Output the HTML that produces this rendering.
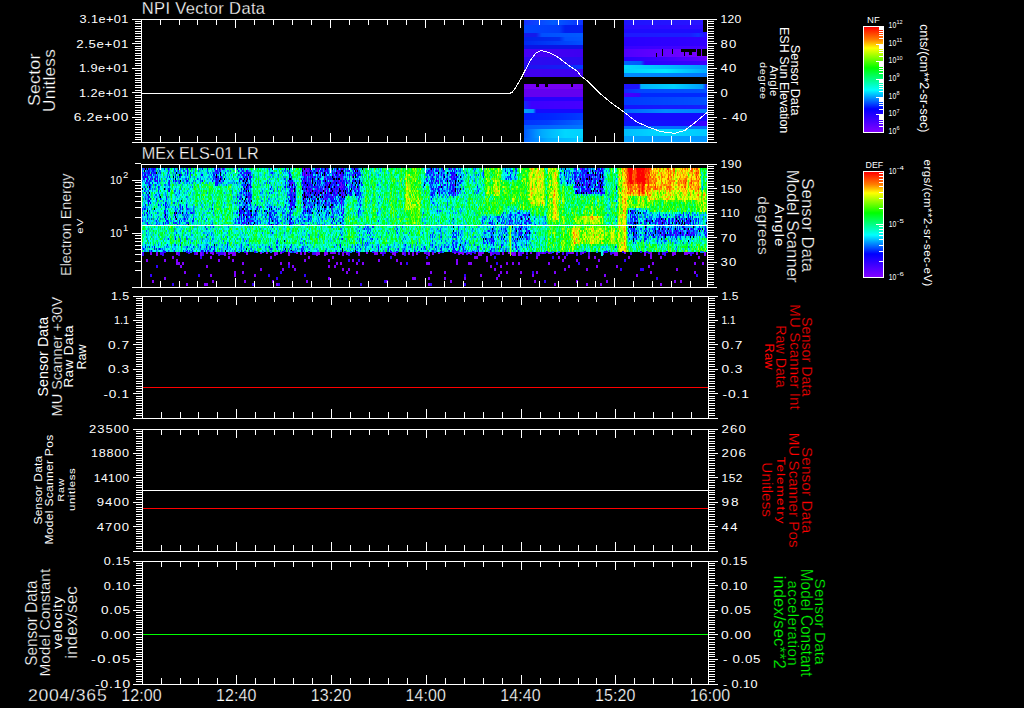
<!DOCTYPE html><html><head><meta charset="utf-8"><title>tplot</title><style>html,body{margin:0;padding:0;background:#000;width:1024px;height:708px;overflow:hidden}</style></head><body><svg width="1024" height="708" viewBox="0 0 1024 708" style="display:block">
<defs><linearGradient id="g26" x1="0" y1="0" x2="0" y2="1"><stop offset="0.000" stop-color="#ff0000"/><stop offset="0.120" stop-color="#ff8000"/><stop offset="0.200" stop-color="#ffff00"/><stop offset="0.390" stop-color="#00ff00"/><stop offset="0.600" stop-color="#00ffff"/><stop offset="0.780" stop-color="#0000ff"/><stop offset="1.000" stop-color="#8200ff"/></linearGradient><linearGradient id="g171" x1="0" y1="0" x2="0" y2="1"><stop offset="0.000" stop-color="#ff0000"/><stop offset="0.120" stop-color="#ff8000"/><stop offset="0.200" stop-color="#ffff00"/><stop offset="0.390" stop-color="#00ff00"/><stop offset="0.600" stop-color="#00ffff"/><stop offset="0.780" stop-color="#0000ff"/><stop offset="1.000" stop-color="#8200ff"/></linearGradient></defs>
<rect x="0" y="0" width="1024" height="708" fill="#000"/>
<g shape-rendering="crispEdges">
<path fill="#1432ff" d="M524 20h1v5h-1z"/>
<path fill="#1333ff" d="M525 20h1v5h-1z"/>
<path fill="#1335ff" d="M526 20h1v5h-1z"/>
<path fill="#1236ff" d="M527 20h1v5h-1z"/>
<path fill="#1138ff" d="M528 20h1v5h-1z"/>
<path fill="#1139ff" d="M529 20h1v5h-1z"/>
<path fill="#103aff" d="M530 20h1v5h-1z"/>
<path fill="#0f3cff" d="M531 20h1v5h-1z"/>
<path fill="#0e3dff" d="M532 20h1v5h-1z"/>
<path fill="#0e3eff" d="M533 20h1v5h-1z"/>
<path fill="#0d40ff" d="M534 20h1v5h-1z"/>
<path fill="#0c41ff" d="M535 20h1v5h-1z"/>
<path fill="#0c43ff" d="M536 20h1v5h-1z"/>
<path fill="#0b44ff" d="M537 20h1v5h-1z"/>
<path fill="#0a45ff" d="M538 20h1v5h-1z"/>
<path fill="#0a47ff" d="M539 20h1v5h-1z"/>
<path fill="#0948ff" d="M540 20h1v5h-1z"/>
<path fill="#0849ff" d="M541 20h1v5h-1z"/>
<path fill="#084bff" d="M542 20h1v5h-1z"/>
<path fill="#074cff" d="M543 20h1v5h-1z"/>
<path fill="#064eff" d="M544 20h1v5h-1z"/>
<path fill="#064fff" d="M545 20h1v5h-1z"/>
<path fill="#0550ff" d="M546 20h1v5h-1z"/>
<path fill="#0452ff" d="M547 20h1v5h-1z"/>
<path fill="#0353ff" d="M548 20h1v5h-1z"/>
<path fill="#0354ff" d="M549 20h1v5h-1z"/>
<path fill="#0256ff" d="M550 20h1v5h-1z"/>
<path fill="#0157ff" d="M551 20h1v5h-1zM555 20h1v5h-1z"/>
<path fill="#0159ff" d="M552 20h1v5h-1z"/>
<path fill="#005aff" d="M553 20h1v5h-1zM580 33h1v4h-1zM581 33h1v4h-1zM582 33h1v4h-1zM573 120h1v5h-1zM524 125h1v4h-1zM524 129h1v9h-1zM640 61h1v4h-1z"/>
<path fill="#0059ff" d="M554 20h1v5h-1zM576 33h1v4h-1zM577 33h1v4h-1zM578 33h1v4h-1zM579 33h1v4h-1zM572 120h1v5h-1z"/>
<path fill="#0156ff" d="M556 20h1v5h-1z"/>
<path fill="#0154ff" d="M557 20h1v5h-1z"/>
<path fill="#0253ff" d="M558 20h1v5h-1z"/>
<path fill="#0252ff" d="M559 20h1v5h-1z"/>
<path fill="#0250ff" d="M560 20h1v5h-1z"/>
<path fill="#034fff" d="M561 20h1v5h-1z"/>
<path fill="#034eff" d="M562 20h1v5h-1z"/>
<path fill="#034cff" d="M563 20h1v5h-1z"/>
<path fill="#044bff" d="M564 20h1v5h-1z"/>
<path fill="#0449ff" d="M565 20h1v5h-1z"/>
<path fill="#0448ff" d="M566 20h1v5h-1z"/>
<path fill="#0547ff" d="M567 20h1v5h-1z"/>
<path fill="#0545ff" d="M568 20h1v5h-1z"/>
<path fill="#0644ff" d="M569 20h1v5h-1z"/>
<path fill="#0643ff" d="M570 20h1v5h-1z"/>
<path fill="#0641ff" d="M571 20h1v5h-1z"/>
<path fill="#0740ff" d="M572 20h1v5h-1z"/>
<path fill="#073eff" d="M573 20h1v5h-1z"/>
<path fill="#073dff" d="M574 20h1v5h-1z"/>
<path fill="#083cff" d="M575 20h1v5h-1z"/>
<path fill="#083aff" d="M576 20h1v5h-1zM634 89h1v4h-1z"/>
<path fill="#0839ff" d="M577 20h1v5h-1z"/>
<path fill="#0938ff" d="M578 20h1v5h-1zM633 89h1v4h-1z"/>
<path fill="#0936ff" d="M579 20h1v5h-1z"/>
<path fill="#0935ff" d="M580 20h1v5h-1z"/>
<path fill="#0a33ff" d="M581 20h1v5h-1z"/>
<path fill="#0a32ff" d="M582 20h1v5h-1z"/>
<path fill="#0046ff" d="M524 25h1v8h-1zM525 25h1v8h-1zM556 120h1v5h-1zM641 89h1v4h-1zM642 89h1v4h-1zM643 89h1v4h-1zM663 97h1v8h-1zM664 97h1v8h-1zM665 97h1v8h-1zM666 97h1v8h-1zM667 97h1v8h-1z"/>
<path fill="#0045ff" d="M526 25h1v8h-1zM527 25h1v8h-1zM555 120h1v5h-1zM640 89h1v4h-1zM659 97h1v8h-1zM660 97h1v8h-1zM661 97h1v8h-1zM662 97h1v8h-1z"/>
<path fill="#0045fe" d="M528 25h1v8h-1zM529 25h1v8h-1z"/>
<path fill="#0044fe" d="M530 25h1v8h-1zM531 25h1v8h-1zM532 25h1v8h-1z"/>
<path fill="#0043fe" d="M533 25h1v8h-1zM534 25h1v8h-1z"/>
<path fill="#0043fd" d="M535 25h1v8h-1zM536 25h1v8h-1z"/>
<path fill="#0042fd" d="M537 25h1v8h-1zM538 25h1v8h-1zM539 25h1v8h-1z"/>
<path fill="#0041fd" d="M540 25h1v8h-1zM541 25h1v8h-1z"/>
<path fill="#0041fc" d="M542 25h1v8h-1zM543 25h1v8h-1z"/>
<path fill="#0040fc" d="M544 25h1v8h-1zM545 25h1v8h-1zM546 25h1v8h-1z"/>
<path fill="#003ffc" d="M547 25h1v8h-1zM548 25h1v8h-1z"/>
<path fill="#003ffb" d="M549 25h1v8h-1zM550 25h1v8h-1z"/>
<path fill="#003efb" d="M551 25h1v8h-1zM552 25h1v8h-1zM553 25h1v8h-1z"/>
<path fill="#003dfb" d="M554 25h1v8h-1zM555 25h1v8h-1z"/>
<path fill="#003dfa" d="M556 25h1v8h-1zM557 25h1v8h-1z"/>
<path fill="#003cfa" d="M558 25h1v8h-1z"/>
<path fill="#003bfa" d="M559 25h1v8h-1z"/>
<path fill="#0036f8" d="M560 25h1v8h-1z"/>
<path fill="#0031f6" d="M561 25h1v8h-1z"/>
<path fill="#002bf4" d="M562 25h1v8h-1z"/>
<path fill="#0026f3" d="M563 25h1v8h-1z"/>
<path fill="#0021f1" d="M564 25h1v8h-1z"/>
<path fill="#001ef0" d="M565 25h1v8h-1zM566 25h1v8h-1zM567 25h1v8h-1zM568 25h1v8h-1zM569 25h1v8h-1zM570 25h1v8h-1zM571 25h1v8h-1zM572 25h1v8h-1zM573 25h1v8h-1zM574 25h1v8h-1zM575 25h1v8h-1zM576 25h1v8h-1zM577 25h1v8h-1zM578 25h1v8h-1zM579 25h1v8h-1zM580 25h1v8h-1zM581 25h1v8h-1zM582 25h1v8h-1z"/>
<path fill="#1419eb" d="M524 33h1v4h-1zM525 33h1v4h-1zM526 33h1v4h-1zM527 33h1v4h-1zM528 33h1v4h-1zM529 33h1v4h-1zM530 33h1v4h-1zM531 33h1v4h-1zM532 33h1v4h-1zM533 33h1v4h-1zM534 33h1v4h-1zM535 33h1v4h-1z"/>
<path fill="#131dec" d="M536 33h1v4h-1z"/>
<path fill="#0f26f0" d="M537 33h1v4h-1z"/>
<path fill="#0c30f3" d="M538 33h1v4h-1z"/>
<path fill="#0839f7" d="M539 33h1v4h-1z"/>
<path fill="#0543fa" d="M540 33h1v4h-1z"/>
<path fill="#014cfe" d="M541 33h1v4h-1z"/>
<path fill="#0050ff" d="M542 33h1v4h-1zM543 33h1v4h-1zM565 37h1v4h-1zM566 37h1v4h-1zM582 41h1v4h-1zM565 120h1v5h-1zM703 89h1v4h-1zM704 89h1v4h-1zM705 89h1v4h-1zM706 89h1v4h-1zM704 97h1v8h-1zM705 97h1v8h-1zM706 97h1v8h-1z"/>
<path fill="#0051ff" d="M544 33h1v4h-1zM545 33h1v4h-1zM546 33h1v4h-1zM547 33h1v4h-1zM567 37h1v4h-1zM568 37h1v4h-1zM569 37h1v4h-1z"/>
<path fill="#0052ff" d="M548 33h1v4h-1zM549 33h1v4h-1zM550 33h1v4h-1zM551 33h1v4h-1zM570 37h1v4h-1zM571 37h1v4h-1zM572 37h1v4h-1zM573 37h1v4h-1zM566 120h1v5h-1z"/>
<path fill="#0053ff" d="M552 33h1v4h-1zM553 33h1v4h-1zM554 33h1v4h-1zM555 33h1v4h-1zM574 37h1v4h-1zM575 37h1v4h-1zM576 37h1v4h-1zM567 120h1v5h-1z"/>
<path fill="#0054ff" d="M556 33h1v4h-1zM557 33h1v4h-1zM558 33h1v4h-1zM559 33h1v4h-1zM577 37h1v4h-1zM578 37h1v4h-1zM579 37h1v4h-1zM580 37h1v4h-1zM568 120h1v5h-1z"/>
<path fill="#0055ff" d="M560 33h1v4h-1zM561 33h1v4h-1zM562 33h1v4h-1zM563 33h1v4h-1zM581 37h1v4h-1zM582 37h1v4h-1zM569 120h1v5h-1z"/>
<path fill="#0056ff" d="M564 33h1v4h-1zM565 33h1v4h-1zM566 33h1v4h-1zM567 33h1v4h-1zM570 120h1v5h-1z"/>
<path fill="#0057ff" d="M568 33h1v4h-1zM569 33h1v4h-1zM570 33h1v4h-1zM571 33h1v4h-1zM571 120h1v5h-1z"/>
<path fill="#0058ff" d="M572 33h1v4h-1zM573 33h1v4h-1zM574 33h1v4h-1zM575 33h1v4h-1z"/>
<path fill="#0023eb" d="M524 37h1v4h-1zM525 37h1v4h-1z"/>
<path fill="#0024eb" d="M526 37h1v4h-1zM527 37h1v4h-1z"/>
<path fill="#0024ec" d="M528 37h1v4h-1zM529 37h1v4h-1z"/>
<path fill="#0025ec" d="M530 37h1v4h-1zM531 37h1v4h-1zM532 37h1v4h-1z"/>
<path fill="#0026ec" d="M533 37h1v4h-1zM534 37h1v4h-1z"/>
<path fill="#0026ed" d="M535 37h1v4h-1zM536 37h1v4h-1z"/>
<path fill="#0027ed" d="M537 37h1v4h-1zM538 37h1v4h-1zM539 37h1v4h-1z"/>
<path fill="#0028ed" d="M540 37h1v4h-1zM541 37h1v4h-1z"/>
<path fill="#0028ee" d="M542 37h1v4h-1zM543 37h1v4h-1z"/>
<path fill="#0029ee" d="M544 37h1v4h-1zM545 37h1v4h-1zM546 37h1v4h-1z"/>
<path fill="#002aee" d="M547 37h1v4h-1zM548 37h1v4h-1z"/>
<path fill="#002aef" d="M549 37h1v4h-1zM550 37h1v4h-1z"/>
<path fill="#002bef" d="M551 37h1v4h-1zM552 37h1v4h-1zM553 37h1v4h-1z"/>
<path fill="#002cef" d="M554 37h1v4h-1zM555 37h1v4h-1z"/>
<path fill="#002cf0" d="M556 37h1v4h-1zM557 37h1v4h-1z"/>
<path fill="#002df0" d="M558 37h1v4h-1z"/>
<path fill="#002ef1" d="M559 37h1v4h-1z"/>
<path fill="#0034f3" d="M560 37h1v4h-1z"/>
<path fill="#003af6" d="M561 37h1v4h-1z"/>
<path fill="#0040f8" d="M562 37h1v4h-1z"/>
<path fill="#0046fb" d="M563 37h1v4h-1zM567 41h1v4h-1zM568 41h1v4h-1z"/>
<path fill="#004cfd" d="M564 37h1v4h-1zM576 41h1v4h-1z"/>
<path fill="#0028f0" d="M524 41h1v4h-1z"/>
<path fill="#0029f0" d="M525 41h1v4h-1z"/>
<path fill="#0029f1" d="M526 41h1v4h-1z"/>
<path fill="#002af1" d="M527 41h1v4h-1z"/>
<path fill="#002bf1" d="M528 41h1v4h-1zM529 41h1v4h-1z"/>
<path fill="#002cf2" d="M530 41h1v4h-1z"/>
<path fill="#002df2" d="M531 41h1v4h-1z"/>
<path fill="#002ef2" d="M532 41h1v4h-1zM533 41h1v4h-1z"/>
<path fill="#002ff3" d="M534 41h1v4h-1z"/>
<path fill="#0030f3" d="M535 41h1v4h-1zM536 41h1v4h-1z"/>
<path fill="#0031f3" d="M537 41h1v4h-1z"/>
<path fill="#0032f4" d="M538 41h1v4h-1zM539 41h1v4h-1z"/>
<path fill="#0033f4" d="M540 41h1v4h-1z"/>
<path fill="#0034f4" d="M541 41h1v4h-1z"/>
<path fill="#0034f5" d="M542 41h1v4h-1z"/>
<path fill="#0035f5" d="M543 41h1v4h-1z"/>
<path fill="#0036f5" d="M544 41h1v4h-1zM545 41h1v4h-1z"/>
<path fill="#0037f6" d="M546 41h1v4h-1z"/>
<path fill="#0038f6" d="M547 41h1v4h-1z"/>
<path fill="#0039f6" d="M548 41h1v4h-1zM549 41h1v4h-1z"/>
<path fill="#003af7" d="M550 41h1v4h-1z"/>
<path fill="#003bf7" d="M551 41h1v4h-1zM552 41h1v4h-1z"/>
<path fill="#003cf8" d="M553 41h1v4h-1z"/>
<path fill="#003df8" d="M554 41h1v4h-1zM555 41h1v4h-1z"/>
<path fill="#003ef8" d="M556 41h1v4h-1z"/>
<path fill="#003ff9" d="M557 41h1v4h-1zM558 41h1v4h-1z"/>
<path fill="#0040f9" d="M559 41h1v4h-1z"/>
<path fill="#0041f9" d="M560 41h1v4h-1z"/>
<path fill="#0042fa" d="M561 41h1v4h-1zM562 41h1v4h-1z"/>
<path fill="#0043fa" d="M563 41h1v4h-1z"/>
<path fill="#0044fa" d="M564 41h1v4h-1z"/>
<path fill="#0044fb" d="M565 41h1v4h-1z"/>
<path fill="#0045fb" d="M566 41h1v4h-1z"/>
<path fill="#0047fc" d="M569 41h1v4h-1z"/>
<path fill="#0048fc" d="M570 41h1v4h-1zM571 41h1v4h-1z"/>
<path fill="#0049fc" d="M572 41h1v4h-1z"/>
<path fill="#004afd" d="M573 41h1v4h-1zM574 41h1v4h-1z"/>
<path fill="#004bfd" d="M575 41h1v4h-1z"/>
<path fill="#004dfe" d="M577 41h1v4h-1zM578 41h1v4h-1z"/>
<path fill="#004efe" d="M579 41h1v4h-1z"/>
<path fill="#004ffe" d="M580 41h1v4h-1z"/>
<path fill="#004fff" d="M581 41h1v4h-1zM564 120h1v5h-1zM697 89h1v4h-1zM698 89h1v4h-1zM699 89h1v4h-1zM700 89h1v4h-1zM701 89h1v4h-1zM702 89h1v4h-1zM700 97h1v8h-1zM701 97h1v8h-1zM702 97h1v8h-1zM703 97h1v8h-1z"/>
<path fill="#0a14e6" d="M524 45h1v4h-1zM525 45h1v4h-1zM526 45h1v4h-1zM527 45h1v4h-1zM528 45h1v4h-1zM529 45h1v4h-1zM530 45h1v4h-1zM531 45h1v4h-1zM532 45h1v4h-1zM533 45h1v4h-1zM534 45h1v4h-1zM535 45h1v4h-1zM536 45h1v4h-1zM537 45h1v4h-1zM538 45h1v4h-1zM539 45h1v4h-1zM540 45h1v4h-1zM541 45h1v4h-1zM542 45h1v4h-1zM543 45h1v4h-1zM544 45h1v4h-1zM545 45h1v4h-1zM546 45h1v4h-1zM547 45h1v4h-1zM548 45h1v4h-1zM549 45h1v4h-1zM550 45h1v4h-1zM551 45h1v4h-1zM552 45h1v4h-1zM553 45h1v4h-1zM554 45h1v4h-1zM555 45h1v4h-1zM556 45h1v4h-1zM557 45h1v4h-1zM558 45h1v4h-1zM559 45h1v4h-1zM560 45h1v4h-1zM561 45h1v4h-1zM562 45h1v4h-1zM563 45h1v4h-1zM564 45h1v4h-1zM565 45h1v4h-1zM566 45h1v4h-1zM567 45h1v4h-1zM568 45h1v4h-1zM569 45h1v4h-1zM570 45h1v4h-1zM571 45h1v4h-1zM572 45h1v4h-1zM573 45h1v4h-1zM574 45h1v4h-1zM575 45h1v4h-1zM576 45h1v4h-1zM577 45h1v4h-1zM578 45h1v4h-1zM579 45h1v4h-1zM580 45h1v4h-1zM581 45h1v4h-1zM582 45h1v4h-1z"/>
<path fill="#4600f5" d="M524 49h1v8h-1zM525 49h1v8h-1zM526 49h1v8h-1z"/>
<path fill="#4500f5" d="M527 49h1v8h-1zM528 49h1v8h-1zM529 49h1v8h-1z"/>
<path fill="#4500f4" d="M530 49h1v8h-1zM531 49h1v8h-1zM532 49h1v8h-1z"/>
<path fill="#4400f4" d="M533 49h1v8h-1zM534 49h1v8h-1zM535 49h1v8h-1zM536 49h1v8h-1zM537 49h1v8h-1zM538 49h1v8h-1z"/>
<path fill="#4300f4" d="M539 49h1v8h-1zM540 49h1v8h-1zM541 49h1v8h-1z"/>
<path fill="#4300f3" d="M542 49h1v8h-1zM543 49h1v8h-1zM544 49h1v8h-1z"/>
<path fill="#4200f3" d="M545 49h1v8h-1zM546 49h1v8h-1zM547 49h1v8h-1zM548 49h1v8h-1zM549 49h1v8h-1zM550 49h1v8h-1z"/>
<path fill="#4100f3" d="M551 49h1v8h-1zM552 49h1v8h-1z"/>
<path fill="#4100f2" d="M553 49h1v8h-1zM554 49h1v8h-1zM555 49h1v8h-1z"/>
<path fill="#4000f2" d="M556 49h1v8h-1zM557 49h1v8h-1zM558 49h1v8h-1zM559 49h1v8h-1zM560 49h1v8h-1zM561 49h1v8h-1z"/>
<path fill="#3f00f2" d="M562 49h1v8h-1zM563 49h1v8h-1zM564 49h1v8h-1z"/>
<path fill="#3f00f1" d="M565 49h1v8h-1zM566 49h1v8h-1zM567 49h1v8h-1z"/>
<path fill="#3e00f1" d="M568 49h1v8h-1zM569 49h1v8h-1zM570 49h1v8h-1zM571 49h1v8h-1zM572 49h1v8h-1zM573 49h1v8h-1z"/>
<path fill="#3d00f1" d="M574 49h1v8h-1zM575 49h1v8h-1zM576 49h1v8h-1z"/>
<path fill="#3d00f0" d="M577 49h1v8h-1zM578 49h1v8h-1zM579 49h1v8h-1zM565 69h1v8h-1zM566 69h1v8h-1zM567 69h1v8h-1zM568 69h1v8h-1zM569 69h1v8h-1zM570 69h1v8h-1zM571 69h1v8h-1zM572 69h1v8h-1zM573 69h1v8h-1zM574 69h1v8h-1zM575 69h1v8h-1zM576 69h1v8h-1z"/>
<path fill="#3c00f0" d="M580 49h1v8h-1zM581 49h1v8h-1zM582 49h1v8h-1zM577 69h1v8h-1zM578 69h1v8h-1zM579 69h1v8h-1zM580 69h1v8h-1zM581 69h1v8h-1zM582 69h1v8h-1z"/>
<path fill="#2d0af0" d="M524 57h1v8h-1zM525 57h1v8h-1zM526 57h1v8h-1zM527 57h1v8h-1zM528 57h1v8h-1zM529 57h1v8h-1z"/>
<path fill="#2c0af0" d="M530 57h1v8h-1zM531 57h1v8h-1zM532 57h1v8h-1zM533 57h1v8h-1zM534 57h1v8h-1zM535 57h1v8h-1zM536 57h1v8h-1zM537 57h1v8h-1zM538 57h1v8h-1zM539 57h1v8h-1zM540 57h1v8h-1zM541 57h1v8h-1z"/>
<path fill="#2b0af0" d="M542 57h1v8h-1zM543 57h1v8h-1zM544 57h1v8h-1zM545 57h1v8h-1zM546 57h1v8h-1zM547 57h1v8h-1zM548 57h1v8h-1zM549 57h1v8h-1zM550 57h1v8h-1zM551 57h1v8h-1zM552 57h1v8h-1z"/>
<path fill="#2a0af0" d="M553 57h1v8h-1zM554 57h1v8h-1zM555 57h1v8h-1zM556 57h1v8h-1zM557 57h1v8h-1zM558 57h1v8h-1zM559 57h1v8h-1zM560 57h1v8h-1zM561 57h1v8h-1zM562 57h1v8h-1zM563 57h1v8h-1zM564 57h1v8h-1z"/>
<path fill="#290af0" d="M565 57h1v8h-1zM566 57h1v8h-1zM567 57h1v8h-1zM568 57h1v8h-1zM569 57h1v8h-1zM570 57h1v8h-1zM571 57h1v8h-1zM572 57h1v8h-1zM573 57h1v8h-1zM574 57h1v8h-1zM575 57h1v8h-1zM576 57h1v8h-1z"/>
<path fill="#280af0" d="M577 57h1v8h-1zM578 57h1v8h-1zM579 57h1v8h-1zM580 57h1v8h-1zM581 57h1v8h-1zM582 57h1v8h-1z"/>
<path fill="#1e14f0" d="M524 65h1v4h-1zM525 65h1v4h-1zM526 65h1v4h-1z"/>
<path fill="#1d15f0" d="M527 65h1v4h-1zM528 65h1v4h-1z"/>
<path fill="#1d15f1" d="M529 65h1v4h-1zM530 65h1v4h-1z"/>
<path fill="#1c16f1" d="M531 65h1v4h-1zM532 65h1v4h-1zM533 65h1v4h-1zM534 65h1v4h-1z"/>
<path fill="#1b17f1" d="M535 65h1v4h-1zM536 65h1v4h-1z"/>
<path fill="#1b17f2" d="M537 65h1v4h-1zM538 65h1v4h-1z"/>
<path fill="#1a18f2" d="M539 65h1v4h-1zM540 65h1v4h-1zM541 65h1v4h-1zM542 65h1v4h-1z"/>
<path fill="#1919f2" d="M543 65h1v4h-1zM544 65h1v4h-1z"/>
<path fill="#1919f3" d="M545 65h1v4h-1zM546 65h1v4h-1z"/>
<path fill="#181af3" d="M547 65h1v4h-1zM548 65h1v4h-1zM549 65h1v4h-1zM550 65h1v4h-1z"/>
<path fill="#171bf3" d="M551 65h1v4h-1zM552 65h1v4h-1z"/>
<path fill="#171bf4" d="M553 65h1v4h-1zM554 65h1v4h-1z"/>
<path fill="#161cf4" d="M555 65h1v4h-1zM556 65h1v4h-1zM557 65h1v4h-1zM558 65h1v4h-1z"/>
<path fill="#151df4" d="M559 65h1v4h-1zM560 65h1v4h-1z"/>
<path fill="#151df5" d="M561 65h1v4h-1zM562 65h1v4h-1z"/>
<path fill="#141ef5" d="M563 65h1v4h-1zM564 65h1v4h-1z"/>
<path fill="#141ff5" d="M565 65h1v4h-1z"/>
<path fill="#1220f6" d="M566 65h1v4h-1z"/>
<path fill="#1122f6" d="M567 65h1v4h-1z"/>
<path fill="#1024f7" d="M568 65h1v4h-1z"/>
<path fill="#0f26f8" d="M569 65h1v4h-1z"/>
<path fill="#0e27f8" d="M570 65h1v4h-1z"/>
<path fill="#0d29f9" d="M571 65h1v4h-1z"/>
<path fill="#0b2bf9" d="M572 65h1v4h-1z"/>
<path fill="#0a2cfa" d="M573 65h1v4h-1z"/>
<path fill="#092efa" d="M574 65h1v4h-1z"/>
<path fill="#0830fb" d="M575 65h1v4h-1z"/>
<path fill="#0732fc" d="M576 65h1v4h-1z"/>
<path fill="#0633fc" d="M577 65h1v4h-1z"/>
<path fill="#0535fd" d="M578 65h1v4h-1z"/>
<path fill="#0337fd" d="M579 65h1v4h-1z"/>
<path fill="#0239fe" d="M580 65h1v4h-1z"/>
<path fill="#013afe" d="M581 65h1v4h-1z"/>
<path fill="#003cff" d="M582 65h1v4h-1zM582 113h1v7h-1zM547 120h1v5h-1zM624 97h1v8h-1zM625 97h1v8h-1zM626 97h1v8h-1z"/>
<path fill="#4100f0" d="M524 69h1v8h-1zM525 69h1v8h-1zM526 69h1v8h-1zM527 69h1v8h-1zM528 69h1v8h-1zM529 69h1v8h-1z"/>
<path fill="#4000f0" d="M530 69h1v8h-1zM531 69h1v8h-1zM532 69h1v8h-1zM533 69h1v8h-1zM534 69h1v8h-1zM535 69h1v8h-1zM536 69h1v8h-1zM537 69h1v8h-1zM538 69h1v8h-1zM539 69h1v8h-1zM540 69h1v8h-1zM541 69h1v8h-1z"/>
<path fill="#3f00f0" d="M542 69h1v8h-1zM543 69h1v8h-1zM544 69h1v8h-1zM545 69h1v8h-1zM546 69h1v8h-1zM547 69h1v8h-1zM548 69h1v8h-1zM549 69h1v8h-1zM550 69h1v8h-1zM551 69h1v8h-1zM552 69h1v8h-1z"/>
<path fill="#3e00f0" d="M553 69h1v8h-1zM554 69h1v8h-1zM555 69h1v8h-1zM556 69h1v8h-1zM557 69h1v8h-1zM558 69h1v8h-1zM559 69h1v8h-1zM560 69h1v8h-1zM561 69h1v8h-1zM562 69h1v8h-1zM563 69h1v8h-1zM564 69h1v8h-1z"/>
<path fill="#7600f5" d="M524 84h1v5h-1zM525 84h1v5h-1zM526 84h1v5h-1zM527 84h1v5h-1zM528 84h1v5h-1zM529 84h1v5h-1zM530 84h1v5h-1zM531 84h1v5h-1zM532 84h1v5h-1zM533 84h1v5h-1zM534 84h1v5h-1zM535 84h1v5h-1zM536 84h1v5h-1zM537 84h1v5h-1zM538 84h1v5h-1zM539 84h1v5h-1zM540 84h1v5h-1zM541 84h1v5h-1zM542 84h1v5h-1zM543 84h1v5h-1zM544 84h1v5h-1zM545 84h1v5h-1zM546 84h1v5h-1zM547 84h1v5h-1zM548 84h1v5h-1zM549 84h1v5h-1zM550 84h1v5h-1zM551 84h1v5h-1zM552 84h1v5h-1zM553 84h1v5h-1zM554 84h1v5h-1zM555 84h1v5h-1zM556 84h1v5h-1zM557 84h1v5h-1zM558 84h1v5h-1zM559 84h1v5h-1zM560 84h1v5h-1zM561 84h1v5h-1zM562 84h1v5h-1zM563 84h1v5h-1zM564 84h1v5h-1zM565 84h1v5h-1zM566 84h1v5h-1zM567 84h1v5h-1zM568 84h1v5h-1zM569 84h1v5h-1zM570 84h1v5h-1zM571 84h1v5h-1zM572 84h1v5h-1zM573 84h1v5h-1zM574 84h1v5h-1zM575 84h1v5h-1zM576 84h1v5h-1zM577 84h1v5h-1zM578 84h1v5h-1zM579 84h1v5h-1zM580 84h1v5h-1zM581 84h1v5h-1zM582 84h1v5h-1z"/>
<path fill="#6400f0" d="M524 89h1v8h-1zM525 89h1v8h-1zM526 89h1v8h-1zM527 89h1v8h-1zM528 89h1v8h-1zM529 89h1v8h-1zM530 89h1v8h-1zM531 89h1v8h-1zM532 89h1v8h-1zM533 89h1v8h-1zM534 89h1v8h-1zM535 89h1v8h-1zM536 89h1v8h-1zM537 89h1v8h-1zM538 89h1v8h-1zM539 89h1v8h-1zM540 89h1v8h-1zM541 89h1v8h-1zM542 89h1v8h-1zM543 89h1v8h-1zM544 89h1v8h-1zM545 89h1v8h-1zM546 89h1v8h-1zM547 89h1v8h-1zM548 89h1v8h-1zM549 89h1v8h-1zM550 89h1v8h-1zM551 89h1v8h-1zM552 89h1v8h-1zM553 89h1v8h-1zM554 89h1v8h-1zM555 89h1v8h-1zM556 89h1v8h-1zM557 89h1v8h-1zM558 89h1v8h-1zM559 89h1v8h-1zM560 89h1v8h-1zM561 89h1v8h-1zM562 89h1v8h-1zM563 89h1v8h-1zM564 89h1v8h-1zM565 89h1v8h-1zM566 89h1v8h-1zM567 89h1v8h-1zM568 89h1v8h-1zM569 89h1v8h-1zM570 89h1v8h-1zM571 89h1v8h-1zM572 89h1v8h-1zM573 89h1v8h-1zM574 89h1v8h-1zM575 89h1v8h-1zM576 89h1v8h-1zM577 89h1v8h-1zM578 89h1v8h-1zM579 89h1v8h-1zM580 89h1v8h-1zM581 89h1v8h-1zM582 89h1v8h-1z"/>
<path fill="#2800ff" d="M524 97h1v4h-1zM525 97h1v4h-1zM526 97h1v4h-1zM527 97h1v4h-1zM528 97h1v4h-1zM529 97h1v4h-1zM530 97h1v4h-1zM531 97h1v4h-1zM532 97h1v4h-1zM533 97h1v4h-1zM534 97h1v4h-1zM535 97h1v4h-1zM536 97h1v4h-1zM537 97h1v4h-1zM538 97h1v4h-1zM539 97h1v4h-1zM540 97h1v4h-1zM541 97h1v4h-1zM542 97h1v4h-1zM543 97h1v4h-1zM544 97h1v4h-1zM545 97h1v4h-1zM546 97h1v4h-1zM547 97h1v4h-1zM548 97h1v4h-1zM549 97h1v4h-1zM550 97h1v4h-1zM551 97h1v4h-1zM552 97h1v4h-1zM553 97h1v4h-1zM554 97h1v4h-1zM555 97h1v4h-1zM556 97h1v4h-1zM557 97h1v4h-1zM558 97h1v4h-1zM559 97h1v4h-1zM560 97h1v4h-1zM561 97h1v4h-1zM562 97h1v4h-1zM563 97h1v4h-1zM564 97h1v4h-1zM565 97h1v4h-1zM566 97h1v4h-1zM567 97h1v4h-1zM568 97h1v4h-1zM569 97h1v4h-1zM570 97h1v4h-1zM571 97h1v4h-1zM572 97h1v4h-1zM573 97h1v4h-1zM574 97h1v4h-1zM575 97h1v4h-1zM576 97h1v4h-1zM577 97h1v4h-1zM578 97h1v4h-1zM579 97h1v4h-1zM580 97h1v4h-1zM581 97h1v4h-1zM582 97h1v4h-1zM624 37h1v9h-1zM625 37h1v9h-1zM626 37h1v9h-1zM627 37h1v9h-1zM628 37h1v9h-1zM624 57h1v4h-1zM625 57h1v4h-1zM645 61h1v4h-1zM646 61h1v4h-1z"/>
<path fill="#1428ff" d="M524 101h1v8h-1zM706 84h1v5h-1zM624 89h1v4h-1z"/>
<path fill="#1a22ff" d="M525 101h1v8h-1z"/>
<path fill="#1f1dff" d="M526 101h1v8h-1z"/>
<path fill="#2517ff" d="M527 101h1v8h-1z"/>
<path fill="#2b11ff" d="M528 101h1v8h-1z"/>
<path fill="#310bff" d="M529 101h1v8h-1z"/>
<path fill="#3606ff" d="M530 101h1v8h-1z"/>
<path fill="#3c00ff" d="M531 101h1v8h-1zM532 101h1v8h-1zM533 101h1v8h-1zM649 46h1v3h-1zM650 46h1v3h-1zM651 46h1v3h-1zM652 46h1v3h-1zM653 46h1v3h-1zM654 46h1v3h-1zM664 57h1v4h-1zM665 57h1v4h-1zM705 61h1v4h-1zM706 61h1v4h-1zM706 121h1v5h-1z"/>
<path fill="#3d00ff" d="M534 101h1v8h-1zM535 101h1v8h-1zM536 101h1v8h-1zM537 101h1v8h-1zM538 101h1v8h-1zM655 46h1v3h-1zM656 46h1v3h-1zM657 46h1v3h-1zM658 46h1v3h-1zM659 46h1v3h-1zM666 57h1v4h-1zM637 93h1v4h-1zM638 93h1v4h-1z"/>
<path fill="#3e00ff" d="M539 101h1v8h-1zM540 101h1v8h-1zM541 101h1v8h-1zM542 101h1v8h-1zM543 101h1v8h-1zM660 46h1v3h-1zM661 46h1v3h-1zM662 46h1v3h-1zM663 46h1v3h-1zM664 46h1v3h-1zM665 46h1v3h-1zM667 57h1v4h-1zM636 93h1v4h-1z"/>
<path fill="#3f00ff" d="M544 101h1v8h-1zM545 101h1v8h-1zM546 101h1v8h-1zM547 101h1v8h-1zM548 101h1v8h-1zM666 46h1v3h-1zM667 46h1v3h-1zM668 46h1v3h-1zM669 46h1v3h-1zM670 46h1v3h-1zM668 57h1v4h-1zM634 93h1v4h-1zM635 93h1v4h-1z"/>
<path fill="#4000ff" d="M549 101h1v8h-1zM550 101h1v8h-1zM551 101h1v8h-1zM552 101h1v8h-1zM553 101h1v8h-1zM671 46h1v3h-1zM672 46h1v3h-1zM673 46h1v3h-1zM674 46h1v3h-1zM675 46h1v3h-1zM669 57h1v4h-1zM633 93h1v4h-1z"/>
<path fill="#4100ff" d="M554 101h1v8h-1zM555 101h1v8h-1zM556 101h1v8h-1zM557 101h1v8h-1zM558 101h1v8h-1zM559 101h1v8h-1zM676 46h1v3h-1zM677 46h1v3h-1zM678 46h1v3h-1zM679 46h1v3h-1zM680 46h1v3h-1zM681 46h1v3h-1zM670 57h1v4h-1zM631 93h1v4h-1zM632 93h1v4h-1z"/>
<path fill="#4200ff" d="M560 101h1v8h-1zM561 101h1v8h-1zM562 101h1v8h-1zM563 101h1v8h-1zM564 101h1v8h-1zM682 46h1v3h-1zM683 46h1v3h-1zM684 46h1v3h-1zM685 46h1v3h-1zM686 46h1v3h-1zM671 57h1v4h-1zM630 93h1v4h-1z"/>
<path fill="#4300ff" d="M565 101h1v8h-1zM566 101h1v8h-1zM567 101h1v8h-1zM568 101h1v8h-1zM569 101h1v8h-1zM687 46h1v3h-1zM688 46h1v3h-1zM689 46h1v3h-1zM690 46h1v3h-1zM691 46h1v3h-1zM692 46h1v3h-1zM672 57h1v4h-1zM628 93h1v4h-1zM629 93h1v4h-1z"/>
<path fill="#4400ff" d="M570 101h1v8h-1zM571 101h1v8h-1zM572 101h1v8h-1zM573 101h1v8h-1zM574 101h1v8h-1zM693 46h1v3h-1zM694 46h1v3h-1zM695 46h1v3h-1zM696 46h1v3h-1zM697 46h1v3h-1zM673 57h1v4h-1zM627 93h1v4h-1z"/>
<path fill="#4500ff" d="M575 101h1v8h-1zM576 101h1v8h-1zM577 101h1v8h-1zM578 101h1v8h-1zM579 101h1v8h-1zM698 46h1v3h-1zM699 46h1v3h-1zM700 46h1v3h-1zM701 46h1v3h-1zM702 46h1v3h-1zM703 46h1v3h-1zM674 57h1v4h-1zM625 93h1v4h-1zM626 93h1v4h-1z"/>
<path fill="#4600ff" d="M580 101h1v8h-1zM581 101h1v8h-1zM582 101h1v8h-1zM704 46h1v3h-1zM705 46h1v3h-1zM706 46h1v3h-1zM675 57h1v4h-1zM624 93h1v4h-1z"/>
<path fill="#00a0ff" d="M524 109h1v4h-1zM544 138h1v4h-1zM696 65h1v4h-1zM624 136h1v6h-1zM625 136h1v6h-1zM626 136h1v6h-1zM627 136h1v6h-1zM628 136h1v6h-1z"/>
<path fill="#009fff" d="M525 109h1v4h-1zM539 129h1v9h-1zM697 65h1v4h-1zM629 136h1v6h-1zM630 136h1v6h-1zM631 136h1v6h-1zM632 136h1v6h-1zM633 136h1v6h-1zM634 136h1v6h-1zM635 136h1v6h-1zM636 136h1v6h-1z"/>
<path fill="#009eff" d="M526 109h1v4h-1zM698 65h1v4h-1zM637 136h1v6h-1zM638 136h1v6h-1zM639 136h1v6h-1zM640 136h1v6h-1zM641 136h1v6h-1zM642 136h1v6h-1zM643 136h1v6h-1zM644 136h1v6h-1z"/>
<path fill="#009dff" d="M527 109h1v4h-1zM543 138h1v4h-1zM699 65h1v4h-1zM702 84h1v5h-1zM645 136h1v6h-1zM646 136h1v6h-1zM647 136h1v6h-1zM648 136h1v6h-1zM649 136h1v6h-1zM650 136h1v6h-1zM651 136h1v6h-1zM652 136h1v6h-1z"/>
<path fill="#009bff" d="M528 109h1v4h-1zM701 65h1v4h-1zM661 136h1v6h-1zM662 136h1v6h-1zM663 136h1v6h-1zM664 136h1v6h-1zM665 136h1v6h-1zM666 136h1v6h-1zM667 136h1v6h-1zM668 136h1v6h-1zM669 136h1v6h-1z"/>
<path fill="#009aff" d="M529 109h1v4h-1zM538 129h1v9h-1zM542 138h1v4h-1zM702 65h1v4h-1zM670 136h1v6h-1zM671 136h1v6h-1zM672 136h1v6h-1zM673 136h1v6h-1zM674 136h1v6h-1zM675 136h1v6h-1zM676 136h1v6h-1zM677 136h1v6h-1z"/>
<path fill="#0099ff" d="M530 109h1v4h-1zM703 65h1v4h-1zM678 136h1v6h-1zM679 136h1v6h-1zM680 136h1v6h-1zM681 136h1v6h-1zM682 136h1v6h-1zM683 136h1v6h-1zM684 136h1v6h-1zM685 136h1v6h-1z"/>
<path fill="#0098ff" d="M531 109h1v4h-1zM704 65h1v4h-1zM686 136h1v6h-1zM687 136h1v6h-1zM688 136h1v6h-1zM689 136h1v6h-1zM690 136h1v6h-1zM691 136h1v6h-1zM692 136h1v6h-1zM693 136h1v6h-1z"/>
<path fill="#0097ff" d="M532 109h1v4h-1zM541 138h1v4h-1zM705 65h1v4h-1zM694 136h1v6h-1zM695 136h1v6h-1zM696 136h1v6h-1zM697 136h1v6h-1zM698 136h1v6h-1zM699 136h1v6h-1zM700 136h1v6h-1zM701 136h1v6h-1z"/>
<path fill="#0288ff" d="M533 109h1v4h-1z"/>
<path fill="#0957ff" d="M534 109h1v4h-1z"/>
<path fill="#1027ff" d="M535 109h1v4h-1z"/>
<path fill="#140aff" d="M536 109h1v4h-1zM537 109h1v4h-1zM538 109h1v4h-1zM539 109h1v4h-1zM540 109h1v4h-1zM541 109h1v4h-1zM542 109h1v4h-1zM543 109h1v4h-1zM544 109h1v4h-1zM545 109h1v4h-1zM546 109h1v4h-1zM547 109h1v4h-1zM548 109h1v4h-1zM549 109h1v4h-1zM550 109h1v4h-1zM551 109h1v4h-1zM552 109h1v4h-1zM553 109h1v4h-1zM554 109h1v4h-1zM555 109h1v4h-1zM556 109h1v4h-1zM557 109h1v4h-1zM558 109h1v4h-1zM559 109h1v4h-1zM560 109h1v4h-1zM561 109h1v4h-1zM562 109h1v4h-1zM563 109h1v4h-1zM564 109h1v4h-1zM565 109h1v4h-1zM566 109h1v4h-1zM567 109h1v4h-1zM568 109h1v4h-1zM569 109h1v4h-1zM570 109h1v4h-1zM571 109h1v4h-1zM572 109h1v4h-1zM573 109h1v4h-1zM574 109h1v4h-1zM575 109h1v4h-1zM576 109h1v4h-1zM577 109h1v4h-1zM578 109h1v4h-1zM579 109h1v4h-1zM580 109h1v4h-1zM581 109h1v4h-1zM582 109h1v4h-1zM624 113h1v8h-1zM625 113h1v8h-1zM626 113h1v8h-1zM627 113h1v8h-1zM628 113h1v8h-1zM629 113h1v8h-1zM630 113h1v8h-1zM631 113h1v8h-1zM632 113h1v8h-1zM633 113h1v8h-1zM634 113h1v8h-1zM635 113h1v8h-1zM636 113h1v8h-1zM637 113h1v8h-1zM638 113h1v8h-1zM639 113h1v8h-1zM640 113h1v8h-1zM641 113h1v8h-1zM642 113h1v8h-1zM643 113h1v8h-1zM644 113h1v8h-1zM645 113h1v8h-1zM646 113h1v8h-1zM647 113h1v8h-1zM648 113h1v8h-1zM649 113h1v8h-1zM650 113h1v8h-1zM651 113h1v8h-1zM652 113h1v8h-1zM653 113h1v8h-1zM654 113h1v8h-1zM655 113h1v8h-1zM656 113h1v8h-1zM657 113h1v8h-1zM658 113h1v8h-1zM659 113h1v8h-1zM660 113h1v8h-1zM661 113h1v8h-1zM662 113h1v8h-1zM663 113h1v8h-1zM664 113h1v8h-1zM665 113h1v8h-1zM666 113h1v8h-1zM667 113h1v8h-1zM668 113h1v8h-1zM669 113h1v8h-1zM670 113h1v8h-1zM671 113h1v8h-1zM672 113h1v8h-1zM673 113h1v8h-1zM674 113h1v8h-1zM675 113h1v8h-1zM676 113h1v8h-1zM677 113h1v8h-1zM678 113h1v8h-1zM679 113h1v8h-1zM680 113h1v8h-1zM681 113h1v8h-1zM682 113h1v8h-1zM683 113h1v8h-1zM684 113h1v8h-1zM685 113h1v8h-1zM686 113h1v8h-1zM687 113h1v8h-1zM688 113h1v8h-1zM689 113h1v8h-1zM690 113h1v8h-1zM691 113h1v8h-1zM692 113h1v8h-1zM693 113h1v8h-1zM694 113h1v8h-1zM695 113h1v8h-1zM696 113h1v8h-1zM697 113h1v8h-1zM698 113h1v8h-1zM699 113h1v8h-1zM700 113h1v8h-1zM701 113h1v8h-1zM702 113h1v8h-1zM703 113h1v8h-1zM704 113h1v8h-1zM705 113h1v8h-1zM706 113h1v8h-1zM679 121h1v5h-1zM680 121h1v5h-1zM681 121h1v5h-1z"/>
<path fill="#001eff" d="M524 113h1v7h-1zM525 113h1v7h-1z"/>
<path fill="#001fff" d="M526 113h1v7h-1zM527 113h1v7h-1zM528 113h1v7h-1z"/>
<path fill="#0020ff" d="M529 113h1v7h-1zM530 113h1v7h-1zM531 113h1v7h-1z"/>
<path fill="#0021ff" d="M532 113h1v7h-1zM533 113h1v7h-1zM534 113h1v7h-1z"/>
<path fill="#0022ff" d="M535 113h1v7h-1zM536 113h1v7h-1zM537 113h1v7h-1z"/>
<path fill="#0023ff" d="M538 113h1v7h-1zM539 113h1v7h-1z"/>
<path fill="#0024ff" d="M540 113h1v7h-1zM541 113h1v7h-1zM542 113h1v7h-1z"/>
<path fill="#0025ff" d="M543 113h1v7h-1zM544 113h1v7h-1zM545 113h1v7h-1z"/>
<path fill="#0026ff" d="M546 113h1v7h-1zM547 113h1v7h-1zM548 113h1v7h-1z"/>
<path fill="#0027ff" d="M549 113h1v7h-1zM550 113h1v7h-1zM551 113h1v7h-1z"/>
<path fill="#0028ff" d="M552 113h1v7h-1zM553 113h1v7h-1zM641 93h1v4h-1zM642 93h1v4h-1zM643 93h1v4h-1zM644 93h1v4h-1zM645 93h1v4h-1zM646 93h1v4h-1zM647 93h1v4h-1zM648 93h1v4h-1zM649 93h1v4h-1zM650 93h1v4h-1zM651 93h1v4h-1zM652 93h1v4h-1zM653 93h1v4h-1zM654 93h1v4h-1zM655 93h1v4h-1zM656 93h1v4h-1zM657 93h1v4h-1zM658 93h1v4h-1zM659 93h1v4h-1zM660 93h1v4h-1zM661 93h1v4h-1zM662 93h1v4h-1zM663 93h1v4h-1zM664 93h1v4h-1zM665 93h1v4h-1zM666 93h1v4h-1zM667 93h1v4h-1zM668 93h1v4h-1zM669 93h1v4h-1zM670 93h1v4h-1zM671 93h1v4h-1zM672 93h1v4h-1zM673 93h1v4h-1zM674 93h1v4h-1zM675 93h1v4h-1zM676 93h1v4h-1zM677 93h1v4h-1zM678 93h1v4h-1zM679 93h1v4h-1zM680 93h1v4h-1zM681 93h1v4h-1zM682 93h1v4h-1zM683 93h1v4h-1zM684 93h1v4h-1zM685 93h1v4h-1zM686 93h1v4h-1zM687 93h1v4h-1zM688 93h1v4h-1zM689 93h1v4h-1zM690 93h1v4h-1zM691 93h1v4h-1zM692 93h1v4h-1zM693 93h1v4h-1zM694 93h1v4h-1zM695 93h1v4h-1zM696 93h1v4h-1zM697 93h1v4h-1zM698 93h1v4h-1zM699 93h1v4h-1zM700 93h1v4h-1zM701 93h1v4h-1zM702 93h1v4h-1zM703 93h1v4h-1zM704 93h1v4h-1zM705 93h1v4h-1zM706 93h1v4h-1z"/>
<path fill="#0029ff" d="M554 113h1v7h-1zM555 113h1v7h-1z"/>
<path fill="#002aff" d="M556 113h1v7h-1z"/>
<path fill="#002bff" d="M557 113h1v7h-1zM558 113h1v7h-1z"/>
<path fill="#002cff" d="M559 113h1v7h-1z"/>
<path fill="#002dff" d="M560 113h1v7h-1z"/>
<path fill="#002eff" d="M561 113h1v7h-1zM562 113h1v7h-1z"/>
<path fill="#002fff" d="M563 113h1v7h-1z"/>
<path fill="#0030ff" d="M564 113h1v7h-1zM565 113h1v7h-1z"/>
<path fill="#0031ff" d="M566 113h1v7h-1z"/>
<path fill="#0032ff" d="M567 113h1v7h-1zM568 113h1v7h-1zM524 120h1v5h-1zM525 120h1v5h-1z"/>
<path fill="#0033ff" d="M569 113h1v7h-1zM526 120h1v5h-1zM527 120h1v5h-1z"/>
<path fill="#0034ff" d="M570 113h1v7h-1zM571 113h1v7h-1zM528 120h1v5h-1zM529 120h1v5h-1z"/>
<path fill="#0035ff" d="M572 113h1v7h-1zM530 120h1v5h-1zM531 120h1v5h-1zM532 120h1v5h-1z"/>
<path fill="#0036ff" d="M573 113h1v7h-1zM574 113h1v7h-1zM533 120h1v5h-1zM534 120h1v5h-1z"/>
<path fill="#0037ff" d="M575 113h1v7h-1zM535 120h1v5h-1zM536 120h1v5h-1z"/>
<path fill="#0038ff" d="M576 113h1v7h-1zM537 120h1v5h-1zM538 120h1v5h-1zM539 120h1v5h-1z"/>
<path fill="#0039ff" d="M577 113h1v7h-1zM578 113h1v7h-1zM540 120h1v5h-1zM541 120h1v5h-1z"/>
<path fill="#003aff" d="M579 113h1v7h-1zM542 120h1v5h-1zM543 120h1v5h-1z"/>
<path fill="#003bff" d="M580 113h1v7h-1zM581 113h1v7h-1zM544 120h1v5h-1zM545 120h1v5h-1zM546 120h1v5h-1z"/>
<path fill="#003dff" d="M548 120h1v5h-1zM627 97h1v8h-1zM628 97h1v8h-1zM629 97h1v8h-1zM630 97h1v8h-1z"/>
<path fill="#003eff" d="M549 120h1v5h-1zM631 97h1v8h-1zM632 97h1v8h-1zM633 97h1v8h-1zM634 97h1v8h-1z"/>
<path fill="#003fff" d="M550 120h1v5h-1zM635 97h1v8h-1zM636 97h1v8h-1zM637 97h1v8h-1zM638 97h1v8h-1z"/>
<path fill="#0040ff" d="M551 120h1v5h-1zM639 97h1v8h-1zM640 97h1v8h-1zM641 97h1v8h-1zM642 97h1v8h-1z"/>
<path fill="#0042ff" d="M552 120h1v5h-1zM647 97h1v8h-1zM648 97h1v8h-1zM649 97h1v8h-1zM650 97h1v8h-1z"/>
<path fill="#0043ff" d="M553 120h1v5h-1zM651 97h1v8h-1zM652 97h1v8h-1zM653 97h1v8h-1zM654 97h1v8h-1z"/>
<path fill="#0044ff" d="M554 120h1v5h-1zM655 97h1v8h-1zM656 97h1v8h-1zM657 97h1v8h-1zM658 97h1v8h-1z"/>
<path fill="#0047ff" d="M557 120h1v5h-1zM644 89h1v4h-1zM645 89h1v4h-1zM646 89h1v4h-1zM647 89h1v4h-1zM648 89h1v4h-1zM649 89h1v4h-1zM650 89h1v4h-1zM668 97h1v8h-1zM669 97h1v8h-1zM670 97h1v8h-1zM671 97h1v8h-1z"/>
<path fill="#0048ff" d="M558 120h1v5h-1zM651 89h1v4h-1zM652 89h1v4h-1zM653 89h1v4h-1zM654 89h1v4h-1zM655 89h1v4h-1zM656 89h1v4h-1zM672 97h1v8h-1zM673 97h1v8h-1zM674 97h1v8h-1zM675 97h1v8h-1z"/>
<path fill="#004aff" d="M559 120h1v5h-1zM664 89h1v4h-1zM665 89h1v4h-1zM666 89h1v4h-1zM667 89h1v4h-1zM668 89h1v4h-1zM669 89h1v4h-1zM680 97h1v8h-1zM681 97h1v8h-1zM682 97h1v8h-1zM683 97h1v8h-1z"/>
<path fill="#004bff" d="M560 120h1v5h-1zM670 89h1v4h-1zM671 89h1v4h-1zM672 89h1v4h-1zM673 89h1v4h-1zM674 89h1v4h-1zM675 89h1v4h-1zM676 89h1v4h-1zM684 97h1v8h-1zM685 97h1v8h-1zM686 97h1v8h-1zM687 97h1v8h-1z"/>
<path fill="#004cff" d="M561 120h1v5h-1zM677 89h1v4h-1zM678 89h1v4h-1zM679 89h1v4h-1zM680 89h1v4h-1zM681 89h1v4h-1zM682 89h1v4h-1zM683 89h1v4h-1zM688 97h1v8h-1zM689 97h1v8h-1zM690 97h1v8h-1zM691 97h1v8h-1z"/>
<path fill="#004dff" d="M562 120h1v5h-1zM684 89h1v4h-1zM685 89h1v4h-1zM686 89h1v4h-1zM687 89h1v4h-1zM688 89h1v4h-1zM689 89h1v4h-1zM692 97h1v8h-1zM693 97h1v8h-1zM694 97h1v8h-1zM695 97h1v8h-1z"/>
<path fill="#004eff" d="M563 120h1v5h-1zM690 89h1v4h-1zM691 89h1v4h-1zM692 89h1v4h-1zM693 89h1v4h-1zM694 89h1v4h-1zM695 89h1v4h-1zM696 89h1v4h-1zM696 97h1v8h-1zM697 97h1v8h-1zM698 97h1v8h-1zM699 97h1v8h-1z"/>
<path fill="#005bff" d="M574 120h1v5h-1zM525 125h1v4h-1zM526 125h1v4h-1zM638 61h1v4h-1zM639 61h1v4h-1z"/>
<path fill="#005cff" d="M575 120h1v5h-1zM527 125h1v4h-1zM528 125h1v4h-1zM637 61h1v4h-1z"/>
<path fill="#005dff" d="M576 120h1v5h-1zM529 125h1v4h-1zM530 125h1v4h-1zM635 61h1v4h-1zM636 61h1v4h-1z"/>
<path fill="#005eff" d="M577 120h1v5h-1zM531 125h1v4h-1zM532 125h1v4h-1zM634 61h1v4h-1z"/>
<path fill="#005fff" d="M578 120h1v5h-1zM533 125h1v4h-1zM534 125h1v4h-1zM525 129h1v9h-1zM632 61h1v4h-1zM633 61h1v4h-1z"/>
<path fill="#0061ff" d="M579 120h1v5h-1zM537 125h1v4h-1zM538 125h1v4h-1zM629 61h1v4h-1z"/>
<path fill="#0062ff" d="M580 120h1v5h-1zM539 125h1v4h-1zM540 125h1v4h-1zM627 61h1v4h-1zM628 61h1v4h-1z"/>
<path fill="#0063ff" d="M581 120h1v5h-1zM541 125h1v4h-1zM542 125h1v4h-1zM526 129h1v9h-1zM625 61h1v4h-1zM626 61h1v4h-1z"/>
<path fill="#0064ff" d="M582 120h1v5h-1zM543 125h1v4h-1zM544 125h1v4h-1zM524 138h1v4h-1zM624 61h1v4h-1zM624 109h1v4h-1z"/>
<path fill="#0060ff" d="M535 125h1v4h-1zM536 125h1v4h-1zM630 61h1v4h-1zM631 61h1v4h-1z"/>
<path fill="#0065ff" d="M545 125h1v4h-1zM546 125h1v4h-1zM625 109h1v4h-1z"/>
<path fill="#0066ff" d="M547 125h1v4h-1zM548 125h1v4h-1zM626 109h1v4h-1z"/>
<path fill="#0067ff" d="M549 125h1v4h-1zM550 125h1v4h-1zM525 138h1v4h-1zM627 109h1v4h-1z"/>
<path fill="#0068ff" d="M551 125h1v4h-1zM552 125h1v4h-1zM527 129h1v9h-1zM628 109h1v4h-1z"/>
<path fill="#0069ff" d="M553 125h1v4h-1zM629 109h1v4h-1z"/>
<path fill="#006aff" d="M554 125h1v4h-1zM555 125h1v4h-1zM526 138h1v4h-1zM630 109h1v4h-1z"/>
<path fill="#006bff" d="M556 125h1v4h-1zM557 125h1v4h-1zM631 109h1v4h-1z"/>
<path fill="#006cff" d="M558 125h1v4h-1zM559 125h1v4h-1zM528 129h1v9h-1zM632 109h1v4h-1z"/>
<path fill="#006dff" d="M560 125h1v4h-1zM561 125h1v4h-1zM527 138h1v4h-1zM633 109h1v4h-1z"/>
<path fill="#006eff" d="M562 125h1v4h-1zM563 125h1v4h-1zM634 109h1v4h-1zM624 126h1v3h-1zM625 126h1v3h-1zM626 126h1v3h-1zM627 126h1v3h-1zM628 126h1v3h-1zM629 126h1v3h-1zM630 126h1v3h-1zM631 126h1v3h-1zM632 126h1v3h-1zM633 126h1v3h-1zM634 126h1v3h-1zM635 126h1v3h-1zM636 126h1v3h-1zM637 126h1v3h-1zM638 126h1v3h-1zM639 126h1v3h-1zM640 126h1v3h-1zM641 126h1v3h-1zM642 126h1v3h-1zM643 126h1v3h-1zM644 126h1v3h-1zM645 126h1v3h-1zM646 126h1v3h-1zM647 126h1v3h-1zM648 126h1v3h-1zM649 126h1v3h-1zM650 126h1v3h-1zM651 126h1v3h-1zM652 126h1v3h-1zM653 126h1v3h-1zM654 126h1v3h-1zM655 126h1v3h-1zM656 126h1v3h-1zM657 126h1v3h-1zM658 126h1v3h-1zM659 126h1v3h-1zM660 126h1v3h-1zM661 126h1v3h-1zM662 126h1v3h-1zM663 126h1v3h-1zM664 126h1v3h-1zM665 126h1v3h-1zM666 126h1v3h-1zM667 126h1v3h-1zM668 126h1v3h-1zM669 126h1v3h-1zM670 126h1v3h-1zM671 126h1v3h-1zM672 126h1v3h-1zM673 126h1v3h-1zM674 126h1v3h-1zM675 126h1v3h-1zM676 126h1v3h-1zM677 126h1v3h-1zM678 126h1v3h-1zM679 126h1v3h-1zM680 126h1v3h-1zM681 126h1v3h-1zM682 126h1v3h-1zM683 126h1v3h-1zM684 126h1v3h-1zM685 126h1v3h-1zM686 126h1v3h-1zM687 126h1v3h-1zM688 126h1v3h-1zM689 126h1v3h-1zM690 126h1v3h-1zM691 126h1v3h-1zM692 126h1v3h-1zM693 126h1v3h-1zM694 126h1v3h-1zM695 126h1v3h-1zM696 126h1v3h-1zM697 126h1v3h-1zM698 126h1v3h-1zM699 126h1v3h-1zM700 126h1v3h-1zM701 126h1v3h-1zM702 126h1v3h-1zM703 126h1v3h-1zM704 126h1v3h-1zM705 126h1v3h-1zM706 126h1v3h-1z"/>
<path fill="#006fff" d="M564 125h1v4h-1zM565 125h1v4h-1zM635 109h1v4h-1z"/>
<path fill="#0070ff" d="M566 125h1v4h-1zM567 125h1v4h-1zM528 138h1v4h-1zM636 109h1v4h-1z"/>
<path fill="#0071ff" d="M568 125h1v4h-1zM569 125h1v4h-1zM529 129h1v9h-1zM637 109h1v4h-1z"/>
<path fill="#0072ff" d="M570 125h1v4h-1zM571 125h1v4h-1zM638 109h1v4h-1z"/>
<path fill="#0073ff" d="M572 125h1v4h-1zM573 125h1v4h-1zM529 138h1v4h-1zM639 109h1v4h-1z"/>
<path fill="#0074ff" d="M574 125h1v4h-1zM575 125h1v4h-1zM640 109h1v4h-1z"/>
<path fill="#0075ff" d="M576 125h1v4h-1zM577 125h1v4h-1zM641 109h1v4h-1z"/>
<path fill="#0076ff" d="M578 125h1v4h-1zM579 125h1v4h-1zM530 129h1v9h-1zM530 138h1v4h-1zM642 109h1v4h-1z"/>
<path fill="#0077ff" d="M580 125h1v4h-1zM581 125h1v4h-1zM643 109h1v4h-1z"/>
<path fill="#0078ff" d="M582 125h1v4h-1zM704 73h1v4h-1zM705 73h1v4h-1zM706 73h1v4h-1zM644 109h1v4h-1zM645 109h1v4h-1z"/>
<path fill="#007aff" d="M531 129h1v9h-1zM696 73h1v4h-1zM697 73h1v4h-1zM698 73h1v4h-1zM699 73h1v4h-1zM647 109h1v4h-1z"/>
<path fill="#007fff" d="M532 129h1v9h-1zM533 138h1v4h-1zM676 73h1v4h-1zM677 73h1v4h-1zM678 73h1v4h-1zM679 73h1v4h-1zM652 109h1v4h-1z"/>
<path fill="#0083ff" d="M533 129h1v9h-1zM659 73h1v4h-1zM660 73h1v4h-1zM661 73h1v4h-1zM662 73h1v4h-1zM656 109h1v4h-1zM700 109h1v4h-1zM701 109h1v4h-1zM702 109h1v4h-1zM703 109h1v4h-1z"/>
<path fill="#0088ff" d="M534 129h1v9h-1zM536 138h1v4h-1zM639 73h1v4h-1zM640 73h1v4h-1zM641 73h1v4h-1zM642 73h1v4h-1zM661 109h1v4h-1zM680 109h1v4h-1zM681 109h1v4h-1zM682 109h1v4h-1zM683 109h1v4h-1z"/>
<path fill="#008dff" d="M535 129h1v9h-1z"/>
<path fill="#0091ff" d="M536 129h1v9h-1zM539 138h1v4h-1z"/>
<path fill="#0096ff" d="M537 129h1v9h-1zM706 65h1v4h-1zM702 136h1v6h-1zM703 136h1v6h-1zM704 136h1v6h-1zM705 136h1v6h-1zM706 136h1v6h-1z"/>
<path fill="#00a4ff" d="M540 129h1v9h-1zM692 65h1v4h-1z"/>
<path fill="#00a8ff" d="M541 129h1v9h-1zM688 65h1v4h-1z"/>
<path fill="#00abff" d="M542 129h1v9h-1zM548 138h1v4h-1zM684 65h1v4h-1z"/>
<path fill="#00adff" d="M543 129h1v9h-1zM551 138h1v4h-1zM682 65h1v4h-1zM704 69h1v4h-1z"/>
<path fill="#00afff" d="M544 129h1v9h-1zM553 138h1v4h-1zM680 65h1v4h-1zM703 69h1v4h-1z"/>
<path fill="#00b1ff" d="M545 129h1v9h-1zM555 138h1v4h-1zM678 65h1v4h-1zM692 84h1v5h-1z"/>
<path fill="#00b3ff" d="M546 129h1v9h-1zM558 138h1v4h-1zM676 65h1v4h-1zM691 84h1v5h-1z"/>
<path fill="#00b5ff" d="M547 129h1v9h-1zM560 138h1v4h-1zM674 65h1v4h-1zM699 69h1v4h-1zM641 84h1v5h-1zM642 84h1v5h-1zM690 84h1v5h-1z"/>
<path fill="#00b7ff" d="M548 129h1v9h-1zM562 138h1v4h-1zM672 65h1v4h-1zM698 69h1v4h-1zM644 84h1v5h-1z"/>
<path fill="#00b9ff" d="M549 129h1v9h-1zM565 138h1v4h-1zM670 65h1v4h-1zM646 84h1v5h-1z"/>
<path fill="#00bbff" d="M550 129h1v9h-1zM567 138h1v4h-1zM668 65h1v4h-1zM695 69h1v4h-1zM648 84h1v5h-1z"/>
<path fill="#00bdff" d="M551 129h1v9h-1zM569 138h1v4h-1zM666 65h1v4h-1zM694 69h1v4h-1zM650 84h1v5h-1zM685 84h1v5h-1z"/>
<path fill="#00bfff" d="M552 129h1v9h-1zM571 138h1v4h-1zM572 138h1v4h-1zM663 65h1v4h-1zM664 65h1v4h-1zM693 69h1v4h-1zM652 84h1v5h-1zM684 84h1v5h-1zM625 129h1v7h-1zM626 129h1v7h-1z"/>
<path fill="#00c0ff" d="M553 129h1v9h-1zM573 138h1v4h-1zM662 65h1v4h-1zM692 69h1v4h-1zM653 84h1v5h-1zM654 84h1v5h-1zM627 129h1v7h-1z"/>
<path fill="#00c2ff" d="M554 129h1v9h-1zM575 138h1v4h-1zM659 65h1v4h-1zM660 65h1v4h-1zM691 69h1v4h-1zM656 84h1v5h-1zM629 129h1v7h-1zM630 129h1v7h-1z"/>
<path fill="#00c4ff" d="M555 129h1v9h-1zM577 138h1v4h-1zM657 65h1v4h-1zM658 84h1v5h-1zM681 84h1v5h-1zM632 129h1v7h-1z"/>
<path fill="#00c6ff" d="M556 129h1v9h-1zM580 138h1v4h-1zM654 65h1v4h-1zM660 84h1v5h-1zM680 84h1v5h-1zM635 129h1v7h-1z"/>
<path fill="#00c8ff" d="M557 129h1v9h-1zM582 138h1v4h-1zM651 65h1v4h-1zM652 65h1v4h-1zM687 69h1v4h-1zM662 84h1v5h-1zM679 84h1v5h-1zM637 129h1v7h-1zM638 129h1v7h-1zM705 129h1v7h-1zM706 129h1v7h-1z"/>
<path fill="#00caff" d="M558 129h1v9h-1zM648 65h1v4h-1zM649 65h1v4h-1zM686 69h1v4h-1zM664 84h1v5h-1zM665 84h1v5h-1zM678 84h1v5h-1zM640 129h1v7h-1zM641 129h1v7h-1zM701 129h1v7h-1zM702 129h1v7h-1z"/>
<path fill="#00ccff" d="M559 129h1v9h-1zM646 65h1v4h-1zM667 84h1v5h-1zM643 129h1v7h-1zM697 129h1v7h-1zM698 129h1v7h-1z"/>
<path fill="#00ceff" d="M560 129h1v9h-1zM643 65h1v4h-1zM683 69h1v4h-1zM669 84h1v5h-1zM646 129h1v7h-1zM693 129h1v7h-1zM694 129h1v7h-1z"/>
<path fill="#00d0ff" d="M561 129h1v9h-1zM640 65h1v4h-1zM641 65h1v4h-1zM682 69h1v4h-1zM671 84h1v5h-1zM648 129h1v7h-1zM649 129h1v7h-1zM689 129h1v7h-1zM690 129h1v7h-1z"/>
<path fill="#00d2ff" d="M562 129h1v9h-1zM581 129h1v9h-1zM582 129h1v9h-1zM637 65h1v4h-1zM638 65h1v4h-1zM624 69h1v4h-1zM681 69h1v4h-1zM673 84h1v5h-1zM651 129h1v7h-1zM652 129h1v7h-1zM685 129h1v7h-1zM686 129h1v7h-1z"/>
<path fill="#00d4ff" d="M563 129h1v9h-1zM574 129h1v9h-1zM575 129h1v9h-1zM576 129h1v9h-1zM635 65h1v4h-1zM627 69h1v4h-1zM628 69h1v4h-1zM654 129h1v7h-1zM681 129h1v7h-1zM682 129h1v7h-1z"/>
<path fill="#00d6ff" d="M564 129h1v9h-1zM567 129h1v9h-1zM568 129h1v9h-1zM569 129h1v9h-1zM632 65h1v4h-1zM630 69h1v4h-1zM631 69h1v4h-1zM678 69h1v4h-1zM657 129h1v7h-1zM677 129h1v7h-1zM678 129h1v7h-1z"/>
<path fill="#00d7ff" d="M565 129h1v9h-1zM566 129h1v9h-1zM631 65h1v4h-1zM632 69h1v4h-1zM633 69h1v4h-1zM658 129h1v7h-1zM675 129h1v7h-1zM676 129h1v7h-1z"/>
<path fill="#00d5ff" d="M570 129h1v9h-1zM571 129h1v9h-1zM572 129h1v9h-1zM573 129h1v9h-1zM633 65h1v4h-1zM634 65h1v4h-1zM629 69h1v4h-1zM679 69h1v4h-1zM655 129h1v7h-1zM656 129h1v7h-1zM679 129h1v7h-1zM680 129h1v7h-1z"/>
<path fill="#00d3ff" d="M577 129h1v9h-1zM578 129h1v9h-1zM579 129h1v9h-1zM580 129h1v9h-1zM636 65h1v4h-1zM625 69h1v4h-1zM626 69h1v4h-1zM680 69h1v4h-1zM653 129h1v7h-1zM683 129h1v7h-1zM684 129h1v7h-1z"/>
<path fill="#0079ff" d="M531 138h1v4h-1zM700 73h1v4h-1zM701 73h1v4h-1zM702 73h1v4h-1zM703 73h1v4h-1zM646 109h1v4h-1z"/>
<path fill="#007cff" d="M532 138h1v4h-1zM688 73h1v4h-1zM689 73h1v4h-1zM690 73h1v4h-1zM691 73h1v4h-1zM649 109h1v4h-1z"/>
<path fill="#0082ff" d="M534 138h1v4h-1zM663 73h1v4h-1zM664 73h1v4h-1zM665 73h1v4h-1zM666 73h1v4h-1zM667 73h1v4h-1zM655 109h1v4h-1zM704 109h1v4h-1zM705 109h1v4h-1zM706 109h1v4h-1z"/>
<path fill="#0085ff" d="M535 138h1v4h-1zM651 73h1v4h-1zM652 73h1v4h-1zM653 73h1v4h-1zM654 73h1v4h-1zM658 109h1v4h-1zM692 109h1v4h-1zM693 109h1v4h-1zM694 109h1v4h-1zM695 109h1v4h-1z"/>
<path fill="#008bff" d="M537 138h1v4h-1zM627 73h1v4h-1zM628 73h1v4h-1zM629 73h1v4h-1zM630 73h1v4h-1zM664 109h1v4h-1zM668 109h1v4h-1zM669 109h1v4h-1zM670 109h1v4h-1zM671 109h1v4h-1z"/>
<path fill="#008eff" d="M538 138h1v4h-1z"/>
<path fill="#0094ff" d="M540 138h1v4h-1z"/>
<path fill="#00a3ff" d="M545 138h1v4h-1zM693 65h1v4h-1zM700 84h1v5h-1z"/>
<path fill="#00a6ff" d="M546 138h1v4h-1zM690 65h1v4h-1z"/>
<path fill="#00a9ff" d="M547 138h1v4h-1zM687 65h1v4h-1zM697 84h1v5h-1z"/>
<path fill="#00acff" d="M549 138h1v4h-1zM550 138h1v4h-1zM683 65h1v4h-1zM705 69h1v4h-1zM695 84h1v5h-1z"/>
<path fill="#00aeff" d="M552 138h1v4h-1zM681 65h1v4h-1zM694 84h1v5h-1z"/>
<path fill="#00b0ff" d="M554 138h1v4h-1zM679 65h1v4h-1zM702 69h1v4h-1zM693 84h1v5h-1z"/>
<path fill="#00b2ff" d="M556 138h1v4h-1zM557 138h1v4h-1zM677 65h1v4h-1zM701 69h1v4h-1z"/>
<path fill="#00b4ff" d="M559 138h1v4h-1zM675 65h1v4h-1zM700 69h1v4h-1z"/>
<path fill="#00b6ff" d="M561 138h1v4h-1zM673 65h1v4h-1zM643 84h1v5h-1zM689 84h1v5h-1z"/>
<path fill="#00b8ff" d="M563 138h1v4h-1zM564 138h1v4h-1zM671 65h1v4h-1zM697 69h1v4h-1zM645 84h1v5h-1zM688 84h1v5h-1z"/>
<path fill="#00baff" d="M566 138h1v4h-1zM669 65h1v4h-1zM696 69h1v4h-1zM647 84h1v5h-1zM687 84h1v5h-1z"/>
<path fill="#00bcff" d="M568 138h1v4h-1zM667 65h1v4h-1zM649 84h1v5h-1zM686 84h1v5h-1z"/>
<path fill="#00beff" d="M570 138h1v4h-1zM665 65h1v4h-1zM651 84h1v5h-1zM624 129h1v7h-1z"/>
<path fill="#00c1ff" d="M574 138h1v4h-1zM661 65h1v4h-1zM655 84h1v5h-1zM683 84h1v5h-1zM628 129h1v7h-1z"/>
<path fill="#00c3ff" d="M576 138h1v4h-1zM658 65h1v4h-1zM690 69h1v4h-1zM657 84h1v5h-1zM682 84h1v5h-1zM631 129h1v7h-1z"/>
<path fill="#00c5ff" d="M578 138h1v4h-1zM579 138h1v4h-1zM655 65h1v4h-1zM656 65h1v4h-1zM689 69h1v4h-1zM659 84h1v5h-1zM633 129h1v7h-1zM634 129h1v7h-1z"/>
<path fill="#00c7ff" d="M581 138h1v4h-1zM653 65h1v4h-1zM688 69h1v4h-1zM661 84h1v5h-1zM636 129h1v7h-1z"/>
<path fill="#1e14ff" d="M624 20h1v5h-1zM625 20h1v5h-1zM626 20h1v5h-1zM627 20h1v5h-1zM628 20h1v5h-1zM624 84h1v5h-1zM625 84h1v5h-1zM626 84h1v5h-1zM627 84h1v5h-1zM628 84h1v5h-1zM629 84h1v5h-1zM630 84h1v5h-1zM631 84h1v5h-1zM632 84h1v5h-1zM633 84h1v5h-1zM634 84h1v5h-1zM635 84h1v5h-1zM636 84h1v5h-1zM637 84h1v5h-1zM638 84h1v5h-1z"/>
<path fill="#1f14ff" d="M629 20h1v5h-1zM630 20h1v5h-1zM631 20h1v5h-1zM632 20h1v5h-1zM633 20h1v5h-1zM634 20h1v5h-1zM635 20h1v5h-1zM636 20h1v5h-1z"/>
<path fill="#2014ff" d="M637 20h1v5h-1zM638 20h1v5h-1zM639 20h1v5h-1zM640 20h1v5h-1zM641 20h1v5h-1zM642 20h1v5h-1zM643 20h1v5h-1zM644 20h1v5h-1z"/>
<path fill="#2114ff" d="M645 20h1v5h-1zM646 20h1v5h-1zM647 20h1v5h-1zM648 20h1v5h-1zM649 20h1v5h-1zM650 20h1v5h-1zM651 20h1v5h-1zM652 20h1v5h-1z"/>
<path fill="#2214ff" d="M653 20h1v5h-1zM654 20h1v5h-1zM655 20h1v5h-1zM656 20h1v5h-1zM657 20h1v5h-1zM658 20h1v5h-1zM659 20h1v5h-1zM660 20h1v5h-1zM704 33h1v4h-1z"/>
<path fill="#2314ff" d="M661 20h1v5h-1zM662 20h1v5h-1zM663 20h1v5h-1zM664 20h1v5h-1zM665 20h1v5h-1zM666 20h1v5h-1zM667 20h1v5h-1zM668 20h1v5h-1zM669 20h1v5h-1z"/>
<path fill="#2414ff" d="M670 20h1v5h-1zM671 20h1v5h-1zM672 20h1v5h-1zM673 20h1v5h-1zM674 20h1v5h-1zM675 20h1v5h-1zM676 20h1v5h-1zM677 20h1v5h-1z"/>
<path fill="#2514ff" d="M678 20h1v5h-1zM679 20h1v5h-1zM680 20h1v5h-1zM681 20h1v5h-1zM682 20h1v5h-1zM683 20h1v5h-1zM684 20h1v5h-1zM685 20h1v5h-1z"/>
<path fill="#2614ff" d="M686 20h1v5h-1zM687 20h1v5h-1zM688 20h1v5h-1zM689 20h1v5h-1zM690 20h1v5h-1zM691 20h1v5h-1zM692 20h1v5h-1zM693 20h1v5h-1z"/>
<path fill="#2714ff" d="M694 20h1v5h-1zM695 20h1v5h-1zM696 20h1v5h-1zM697 20h1v5h-1zM698 20h1v5h-1zM699 20h1v5h-1zM700 20h1v5h-1zM701 20h1v5h-1z"/>
<path fill="#2814ff" d="M702 20h1v5h-1zM703 20h1v5h-1zM704 20h1v5h-1zM705 20h1v5h-1zM706 20h1v5h-1z"/>
<path fill="#280aff" d="M624 25h1v4h-1zM625 25h1v4h-1zM626 25h1v4h-1zM627 25h1v4h-1zM628 25h1v4h-1zM629 25h1v4h-1zM630 25h1v4h-1zM631 25h1v4h-1zM632 25h1v4h-1zM706 33h1v4h-1z"/>
<path fill="#290aff" d="M633 25h1v4h-1zM634 25h1v4h-1zM635 25h1v4h-1zM636 25h1v4h-1zM637 25h1v4h-1zM638 25h1v4h-1zM639 25h1v4h-1zM640 25h1v4h-1zM641 25h1v4h-1zM642 25h1v4h-1zM643 25h1v4h-1zM644 25h1v4h-1zM645 25h1v4h-1zM646 25h1v4h-1zM647 25h1v4h-1zM648 25h1v4h-1z"/>
<path fill="#2a0aff" d="M649 25h1v4h-1zM650 25h1v4h-1zM651 25h1v4h-1zM652 25h1v4h-1zM653 25h1v4h-1zM654 25h1v4h-1zM655 25h1v4h-1zM656 25h1v4h-1zM657 25h1v4h-1zM658 25h1v4h-1zM659 25h1v4h-1zM660 25h1v4h-1zM661 25h1v4h-1zM662 25h1v4h-1zM663 25h1v4h-1zM664 25h1v4h-1zM665 25h1v4h-1z"/>
<path fill="#2b0aff" d="M666 25h1v4h-1zM667 25h1v4h-1zM668 25h1v4h-1zM669 25h1v4h-1zM670 25h1v4h-1zM671 25h1v4h-1zM672 25h1v4h-1zM673 25h1v4h-1zM674 25h1v4h-1zM675 25h1v4h-1zM676 25h1v4h-1zM677 25h1v4h-1zM678 25h1v4h-1zM679 25h1v4h-1zM680 25h1v4h-1zM681 25h1v4h-1z"/>
<path fill="#2c0aff" d="M682 25h1v4h-1zM683 25h1v4h-1zM684 25h1v4h-1zM685 25h1v4h-1zM686 25h1v4h-1zM687 25h1v4h-1zM688 25h1v4h-1zM689 25h1v4h-1zM690 25h1v4h-1zM691 25h1v4h-1zM692 25h1v4h-1zM693 25h1v4h-1zM694 25h1v4h-1zM695 25h1v4h-1zM696 25h1v4h-1zM697 25h1v4h-1z"/>
<path fill="#2d0aff" d="M698 25h1v4h-1zM699 25h1v4h-1zM700 25h1v4h-1zM701 25h1v4h-1zM702 25h1v4h-1zM703 25h1v4h-1zM704 25h1v4h-1zM705 25h1v4h-1zM706 25h1v4h-1z"/>
<path fill="#1e0aff" d="M624 29h1v4h-1zM625 29h1v4h-1zM626 29h1v4h-1zM627 29h1v4h-1zM628 29h1v4h-1zM629 29h1v4h-1zM630 29h1v4h-1zM631 29h1v4h-1zM632 29h1v4h-1zM633 29h1v4h-1zM634 29h1v4h-1zM635 29h1v4h-1zM636 29h1v4h-1zM637 29h1v4h-1zM638 29h1v4h-1zM639 29h1v4h-1zM640 29h1v4h-1zM641 29h1v4h-1zM642 29h1v4h-1zM643 29h1v4h-1zM644 29h1v4h-1zM645 29h1v4h-1zM646 29h1v4h-1zM647 29h1v4h-1zM648 29h1v4h-1zM649 29h1v4h-1zM650 29h1v4h-1zM651 29h1v4h-1zM652 29h1v4h-1zM653 29h1v4h-1zM654 29h1v4h-1zM655 29h1v4h-1zM656 29h1v4h-1zM657 29h1v4h-1zM658 29h1v4h-1zM659 29h1v4h-1zM660 29h1v4h-1zM661 29h1v4h-1zM662 29h1v4h-1zM663 29h1v4h-1zM664 29h1v4h-1zM665 29h1v4h-1zM666 29h1v4h-1zM667 29h1v4h-1zM668 29h1v4h-1zM669 29h1v4h-1zM670 29h1v4h-1zM671 29h1v4h-1zM672 29h1v4h-1zM673 29h1v4h-1zM674 29h1v4h-1zM675 29h1v4h-1zM676 29h1v4h-1zM677 29h1v4h-1zM678 29h1v4h-1zM679 29h1v4h-1zM680 29h1v4h-1zM681 29h1v4h-1zM682 29h1v4h-1zM683 29h1v4h-1zM684 29h1v4h-1zM685 29h1v4h-1zM686 29h1v4h-1zM687 29h1v4h-1zM688 29h1v4h-1zM689 29h1v4h-1zM690 29h1v4h-1zM691 29h1v4h-1zM692 29h1v4h-1zM693 29h1v4h-1zM694 29h1v4h-1zM695 29h1v4h-1zM696 29h1v4h-1zM697 29h1v4h-1zM698 29h1v4h-1zM699 29h1v4h-1zM700 29h1v4h-1zM701 29h1v4h-1zM702 29h1v4h-1zM703 29h1v4h-1zM704 29h1v4h-1zM705 29h1v4h-1zM706 29h1v4h-1z"/>
<path fill="#1e19ff" d="M624 33h1v4h-1zM625 33h1v4h-1zM626 33h1v4h-1zM627 33h1v4h-1zM628 33h1v4h-1zM629 33h1v4h-1zM630 33h1v4h-1z"/>
<path fill="#1d1aff" d="M631 33h1v4h-1zM632 33h1v4h-1zM633 33h1v4h-1zM634 33h1v4h-1zM635 33h1v4h-1zM636 33h1v4h-1zM637 33h1v4h-1zM638 33h1v4h-1zM639 33h1v4h-1zM640 33h1v4h-1zM641 33h1v4h-1zM642 33h1v4h-1zM643 33h1v4h-1z"/>
<path fill="#1c1bff" d="M644 33h1v4h-1zM645 33h1v4h-1zM646 33h1v4h-1zM647 33h1v4h-1zM648 33h1v4h-1zM649 33h1v4h-1zM650 33h1v4h-1zM651 33h1v4h-1zM652 33h1v4h-1zM653 33h1v4h-1zM654 33h1v4h-1zM655 33h1v4h-1zM656 33h1v4h-1z"/>
<path fill="#1b1cff" d="M657 33h1v4h-1zM658 33h1v4h-1zM659 33h1v4h-1zM660 33h1v4h-1zM661 33h1v4h-1zM662 33h1v4h-1zM663 33h1v4h-1zM664 33h1v4h-1zM665 33h1v4h-1zM666 33h1v4h-1zM667 33h1v4h-1zM668 33h1v4h-1zM669 33h1v4h-1z"/>
<path fill="#1a1dff" d="M670 33h1v4h-1zM671 33h1v4h-1zM672 33h1v4h-1zM673 33h1v4h-1zM674 33h1v4h-1zM675 33h1v4h-1zM676 33h1v4h-1zM677 33h1v4h-1zM678 33h1v4h-1zM679 33h1v4h-1zM680 33h1v4h-1zM681 33h1v4h-1zM682 33h1v4h-1zM683 33h1v4h-1z"/>
<path fill="#191eff" d="M684 33h1v4h-1zM685 33h1v4h-1zM686 33h1v4h-1zM687 33h1v4h-1zM688 33h1v4h-1zM689 33h1v4h-1z"/>
<path fill="#191fff" d="M690 33h1v4h-1z"/>
<path fill="#1721ff" d="M691 33h1v4h-1z"/>
<path fill="#1624ff" d="M692 33h1v4h-1z"/>
<path fill="#1526ff" d="M693 33h1v4h-1z"/>
<path fill="#1429ff" d="M694 33h1v4h-1z"/>
<path fill="#122bff" d="M695 33h1v4h-1z"/>
<path fill="#112eff" d="M696 33h1v4h-1z"/>
<path fill="#1030ff" d="M697 33h1v4h-1z"/>
<path fill="#1031ff" d="M698 33h1v4h-1z"/>
<path fill="#132cff" d="M699 33h1v4h-1z"/>
<path fill="#1627ff" d="M700 33h1v4h-1z"/>
<path fill="#1922ff" d="M701 33h1v4h-1z"/>
<path fill="#1c1eff" d="M702 33h1v4h-1z"/>
<path fill="#1f19ff" d="M703 33h1v4h-1z"/>
<path fill="#250fff" d="M705 33h1v4h-1z"/>
<path fill="#2900ff" d="M629 37h1v9h-1zM630 37h1v9h-1zM631 37h1v9h-1zM632 37h1v9h-1zM633 37h1v9h-1zM634 37h1v9h-1zM635 37h1v9h-1zM636 37h1v9h-1zM626 57h1v4h-1zM627 57h1v4h-1zM647 61h1v4h-1zM648 61h1v4h-1zM649 61h1v4h-1z"/>
<path fill="#2a00ff" d="M637 37h1v9h-1zM638 37h1v9h-1zM639 37h1v9h-1zM640 37h1v9h-1zM641 37h1v9h-1zM642 37h1v9h-1zM643 37h1v9h-1zM644 37h1v9h-1zM628 57h1v4h-1zM629 57h1v4h-1zM650 61h1v4h-1zM651 61h1v4h-1zM652 61h1v4h-1z"/>
<path fill="#2b00ff" d="M645 37h1v9h-1zM646 37h1v9h-1zM647 37h1v9h-1zM648 37h1v9h-1zM649 37h1v9h-1zM650 37h1v9h-1zM651 37h1v9h-1zM652 37h1v9h-1zM630 57h1v4h-1zM631 57h1v4h-1zM653 61h1v4h-1zM654 61h1v4h-1zM655 61h1v4h-1z"/>
<path fill="#2c00ff" d="M653 37h1v9h-1zM654 37h1v9h-1zM655 37h1v9h-1zM656 37h1v9h-1zM657 37h1v9h-1zM658 37h1v9h-1zM659 37h1v9h-1zM660 37h1v9h-1zM632 57h1v4h-1zM633 57h1v4h-1zM656 61h1v4h-1zM657 61h1v4h-1zM658 61h1v4h-1z"/>
<path fill="#2d00ff" d="M661 37h1v9h-1zM662 37h1v9h-1zM663 37h1v9h-1zM664 37h1v9h-1zM665 37h1v9h-1zM666 37h1v9h-1zM667 37h1v9h-1zM668 37h1v9h-1zM669 37h1v9h-1zM634 57h1v4h-1zM635 57h1v4h-1zM659 61h1v4h-1zM660 61h1v4h-1zM661 61h1v4h-1z"/>
<path fill="#2e00ff" d="M670 37h1v9h-1zM671 37h1v9h-1zM672 37h1v9h-1zM673 37h1v9h-1zM674 37h1v9h-1zM675 37h1v9h-1zM676 37h1v9h-1zM677 37h1v9h-1zM636 57h1v4h-1zM637 57h1v4h-1zM662 61h1v4h-1zM663 61h1v4h-1zM664 61h1v4h-1z"/>
<path fill="#2f00ff" d="M678 37h1v9h-1zM679 37h1v9h-1zM680 37h1v9h-1zM681 37h1v9h-1zM682 37h1v9h-1zM683 37h1v9h-1zM684 37h1v9h-1zM685 37h1v9h-1zM638 57h1v4h-1zM639 57h1v4h-1zM665 61h1v4h-1zM666 61h1v4h-1zM667 61h1v4h-1z"/>
<path fill="#3000ff" d="M686 37h1v9h-1zM687 37h1v9h-1zM688 37h1v9h-1zM689 37h1v9h-1zM690 37h1v9h-1zM691 37h1v9h-1zM692 37h1v9h-1zM693 37h1v9h-1zM640 57h1v4h-1zM641 57h1v4h-1zM668 61h1v4h-1zM669 61h1v4h-1zM670 61h1v4h-1z"/>
<path fill="#3100ff" d="M694 37h1v9h-1zM695 37h1v9h-1zM696 37h1v9h-1zM697 37h1v9h-1zM698 37h1v9h-1zM699 37h1v9h-1zM700 37h1v9h-1zM701 37h1v9h-1zM642 57h1v4h-1zM643 57h1v4h-1zM671 61h1v4h-1zM672 61h1v4h-1zM673 61h1v4h-1z"/>
<path fill="#3200ff" d="M702 37h1v9h-1zM703 37h1v9h-1zM704 37h1v9h-1zM705 37h1v9h-1zM706 37h1v9h-1zM644 57h1v4h-1zM645 57h1v4h-1zM674 61h1v4h-1zM675 61h1v4h-1zM676 61h1v4h-1z"/>
<path fill="#3700ff" d="M624 46h1v3h-1zM625 46h1v3h-1zM626 46h1v3h-1zM654 57h1v4h-1zM655 57h1v4h-1zM690 61h1v4h-1zM691 61h1v4h-1zM692 61h1v4h-1z"/>
<path fill="#3800ff" d="M627 46h1v3h-1zM628 46h1v3h-1zM629 46h1v3h-1zM630 46h1v3h-1zM631 46h1v3h-1zM632 46h1v3h-1zM656 57h1v4h-1zM657 57h1v4h-1zM693 61h1v4h-1zM694 61h1v4h-1zM695 61h1v4h-1z"/>
<path fill="#3900ff" d="M633 46h1v3h-1zM634 46h1v3h-1zM635 46h1v3h-1zM636 46h1v3h-1zM637 46h1v3h-1zM658 57h1v4h-1zM659 57h1v4h-1zM696 61h1v4h-1zM697 61h1v4h-1zM698 61h1v4h-1z"/>
<path fill="#3a00ff" d="M638 46h1v3h-1zM639 46h1v3h-1zM640 46h1v3h-1zM641 46h1v3h-1zM642 46h1v3h-1zM643 46h1v3h-1zM660 57h1v4h-1zM661 57h1v4h-1zM699 61h1v4h-1zM700 61h1v4h-1zM701 61h1v4h-1zM705 121h1v5h-1z"/>
<path fill="#3b00ff" d="M644 46h1v3h-1zM645 46h1v3h-1zM646 46h1v3h-1zM647 46h1v3h-1zM648 46h1v3h-1zM662 57h1v4h-1zM663 57h1v4h-1zM702 61h1v4h-1zM703 61h1v4h-1zM704 61h1v4h-1z"/>
<path fill="#5000ff" d="M624 49h1v8h-1zM625 49h1v8h-1zM685 57h1v4h-1zM686 57h1v4h-1z"/>
<path fill="#5100ff" d="M626 49h1v8h-1zM627 49h1v8h-1zM687 57h1v4h-1z"/>
<path fill="#5200ff" d="M628 49h1v8h-1zM629 49h1v8h-1zM688 57h1v4h-1z"/>
<path fill="#5300ff" d="M630 49h1v8h-1zM631 49h1v8h-1zM689 57h1v4h-1z"/>
<path fill="#5400ff" d="M632 49h1v8h-1zM633 49h1v8h-1zM690 57h1v4h-1z"/>
<path fill="#5500ff" d="M634 49h1v8h-1zM635 49h1v8h-1zM691 57h1v4h-1z"/>
<path fill="#5600ff" d="M636 49h1v8h-1zM637 49h1v8h-1zM692 57h1v4h-1z"/>
<path fill="#5700ff" d="M638 49h1v8h-1zM639 49h1v8h-1zM693 57h1v4h-1z"/>
<path fill="#5800ff" d="M640 49h1v8h-1zM641 49h1v8h-1zM694 57h1v4h-1z"/>
<path fill="#5900ff" d="M642 49h1v8h-1zM643 49h1v8h-1zM695 57h1v4h-1z"/>
<path fill="#5a00ff" d="M644 49h1v8h-1zM645 49h1v8h-1zM696 57h1v4h-1z"/>
<path fill="#5b00ff" d="M646 49h1v8h-1zM647 49h1v8h-1zM697 57h1v4h-1z"/>
<path fill="#5c00ff" d="M648 49h1v8h-1zM649 49h1v8h-1zM698 57h1v4h-1z"/>
<path fill="#5d00ff" d="M650 49h1v8h-1zM651 49h1v8h-1zM699 57h1v4h-1z"/>
<path fill="#5e00ff" d="M652 49h1v8h-1zM653 49h1v8h-1zM700 57h1v4h-1z"/>
<path fill="#5f00ff" d="M654 49h1v8h-1zM655 49h1v8h-1zM701 57h1v4h-1z"/>
<path fill="#6000ff" d="M656 49h1v8h-1zM657 49h1v8h-1zM702 57h1v4h-1z"/>
<path fill="#6100ff" d="M658 49h1v8h-1zM659 49h1v8h-1zM703 57h1v4h-1z"/>
<path fill="#6200ff" d="M660 49h1v8h-1zM661 49h1v8h-1zM704 57h1v4h-1z"/>
<path fill="#6300ff" d="M662 49h1v8h-1zM663 49h1v8h-1zM705 57h1v4h-1z"/>
<path fill="#6400ff" d="M664 49h1v8h-1zM665 49h1v8h-1zM706 57h1v4h-1z"/>
<path fill="#6500ff" d="M666 49h1v8h-1zM667 49h1v8h-1z"/>
<path fill="#6600ff" d="M668 49h1v8h-1zM669 49h1v8h-1z"/>
<path fill="#6700ff" d="M670 49h1v8h-1z"/>
<path fill="#6800ff" d="M671 49h1v8h-1zM672 49h1v8h-1z"/>
<path fill="#6900ff" d="M673 49h1v8h-1zM674 49h1v8h-1z"/>
<path fill="#6a00ff" d="M675 49h1v8h-1z"/>
<path fill="#6b00ff" d="M676 49h1v8h-1zM677 49h1v8h-1z"/>
<path fill="#6c00ff" d="M678 49h1v8h-1z"/>
<path fill="#6d00ff" d="M679 49h1v8h-1zM680 49h1v8h-1z"/>
<path fill="#6e00ff" d="M681 49h1v8h-1zM682 49h1v8h-1z"/>
<path fill="#6f00ff" d="M683 49h1v8h-1z"/>
<path fill="#7000ff" d="M684 49h1v8h-1zM685 49h1v8h-1z"/>
<path fill="#7100ff" d="M686 49h1v8h-1zM687 49h1v8h-1z"/>
<path fill="#7200ff" d="M688 49h1v8h-1z"/>
<path fill="#7300ff" d="M689 49h1v8h-1zM690 49h1v8h-1z"/>
<path fill="#7400ff" d="M691 49h1v8h-1zM692 49h1v8h-1z"/>
<path fill="#7500ff" d="M693 49h1v8h-1z"/>
<path fill="#7600ff" d="M694 49h1v8h-1zM695 49h1v8h-1z"/>
<path fill="#7700ff" d="M696 49h1v8h-1z"/>
<path fill="#7800ff" d="M697 49h1v8h-1zM698 49h1v8h-1z"/>
<path fill="#7900ff" d="M699 49h1v8h-1zM700 49h1v8h-1z"/>
<path fill="#7a00ff" d="M701 49h1v8h-1z"/>
<path fill="#7b00ff" d="M702 49h1v8h-1zM703 49h1v8h-1z"/>
<path fill="#7c00ff" d="M704 49h1v8h-1zM705 49h1v8h-1z"/>
<path fill="#7d00ff" d="M706 49h1v8h-1z"/>
<path fill="#3300ff" d="M646 57h1v4h-1zM647 57h1v4h-1zM677 61h1v4h-1zM678 61h1v4h-1zM679 61h1v4h-1z"/>
<path fill="#3400ff" d="M648 57h1v4h-1zM649 57h1v4h-1zM680 61h1v4h-1zM681 61h1v4h-1zM682 61h1v4h-1z"/>
<path fill="#3500ff" d="M650 57h1v4h-1zM651 57h1v4h-1zM683 61h1v4h-1zM684 61h1v4h-1zM685 61h1v4h-1zM686 61h1v4h-1z"/>
<path fill="#3600ff" d="M652 57h1v4h-1zM653 57h1v4h-1zM687 61h1v4h-1zM688 61h1v4h-1zM689 61h1v4h-1z"/>
<path fill="#4700ff" d="M676 57h1v4h-1z"/>
<path fill="#4800ff" d="M677 57h1v4h-1z"/>
<path fill="#4900ff" d="M678 57h1v4h-1z"/>
<path fill="#4a00ff" d="M679 57h1v4h-1z"/>
<path fill="#4b00ff" d="M680 57h1v4h-1z"/>
<path fill="#4c00ff" d="M681 57h1v4h-1z"/>
<path fill="#4d00ff" d="M682 57h1v4h-1z"/>
<path fill="#4e00ff" d="M683 57h1v4h-1z"/>
<path fill="#4f00ff" d="M684 57h1v4h-1z"/>
<path fill="#064dff" d="M641 61h1v4h-1z"/>
<path fill="#1037ff" d="M642 61h1v4h-1z"/>
<path fill="#1921ff" d="M643 61h1v4h-1z"/>
<path fill="#230bff" d="M644 61h1v4h-1z"/>
<path fill="#00dcff" d="M624 65h1v4h-1zM640 69h1v4h-1zM641 69h1v4h-1zM665 129h1v7h-1zM666 129h1v7h-1z"/>
<path fill="#00dbff" d="M625 65h1v4h-1zM626 65h1v4h-1zM638 69h1v4h-1zM639 69h1v4h-1zM675 69h1v4h-1zM663 129h1v7h-1zM664 129h1v7h-1zM667 129h1v7h-1zM668 129h1v7h-1z"/>
<path fill="#00daff" d="M627 65h1v4h-1zM637 69h1v4h-1zM676 69h1v4h-1zM662 129h1v7h-1zM669 129h1v7h-1zM670 129h1v7h-1z"/>
<path fill="#00d9ff" d="M628 65h1v4h-1zM635 69h1v4h-1zM636 69h1v4h-1zM661 129h1v7h-1zM671 129h1v7h-1zM672 129h1v7h-1z"/>
<path fill="#00d8ff" d="M629 65h1v4h-1zM630 65h1v4h-1zM634 69h1v4h-1zM677 69h1v4h-1zM659 129h1v7h-1zM660 129h1v7h-1zM673 129h1v7h-1zM674 129h1v7h-1z"/>
<path fill="#00d1ff" d="M639 65h1v4h-1zM672 84h1v5h-1zM674 84h1v5h-1zM650 129h1v7h-1zM687 129h1v7h-1zM688 129h1v7h-1z"/>
<path fill="#00cfff" d="M642 65h1v4h-1zM670 84h1v5h-1zM675 84h1v5h-1zM647 129h1v7h-1zM691 129h1v7h-1zM692 129h1v7h-1z"/>
<path fill="#00cdff" d="M644 65h1v4h-1zM645 65h1v4h-1zM684 69h1v4h-1zM668 84h1v5h-1zM676 84h1v5h-1zM644 129h1v7h-1zM645 129h1v7h-1zM695 129h1v7h-1zM696 129h1v7h-1z"/>
<path fill="#00cbff" d="M647 65h1v4h-1zM685 69h1v4h-1zM666 84h1v5h-1zM677 84h1v5h-1zM642 129h1v7h-1zM699 129h1v7h-1zM700 129h1v7h-1z"/>
<path fill="#00c9ff" d="M650 65h1v4h-1zM663 84h1v5h-1zM639 129h1v7h-1zM703 129h1v7h-1zM704 129h1v7h-1z"/>
<path fill="#00aaff" d="M685 65h1v4h-1zM686 65h1v4h-1zM706 69h1v4h-1zM696 84h1v5h-1z"/>
<path fill="#00a7ff" d="M689 65h1v4h-1zM698 84h1v5h-1z"/>
<path fill="#00a5ff" d="M691 65h1v4h-1zM699 84h1v5h-1z"/>
<path fill="#00a2ff" d="M694 65h1v4h-1zM701 84h1v5h-1z"/>
<path fill="#00a1ff" d="M695 65h1v4h-1z"/>
<path fill="#009cff" d="M700 65h1v4h-1zM653 136h1v6h-1zM654 136h1v6h-1zM655 136h1v6h-1zM656 136h1v6h-1zM657 136h1v6h-1zM658 136h1v6h-1zM659 136h1v6h-1zM660 136h1v6h-1z"/>
<path fill="#00ddff" d="M642 69h1v4h-1zM674 69h1v4h-1z"/>
<path fill="#00deff" d="M643 69h1v4h-1zM644 69h1v4h-1zM673 69h1v4h-1z"/>
<path fill="#00dfff" d="M645 69h1v4h-1zM646 69h1v4h-1z"/>
<path fill="#00e0ff" d="M647 69h1v4h-1zM672 69h1v4h-1z"/>
<path fill="#00e1ff" d="M648 69h1v4h-1zM649 69h1v4h-1zM671 69h1v4h-1z"/>
<path fill="#00e2ff" d="M650 69h1v4h-1zM651 69h1v4h-1z"/>
<path fill="#00e3ff" d="M652 69h1v4h-1zM670 69h1v4h-1z"/>
<path fill="#00e4ff" d="M653 69h1v4h-1zM654 69h1v4h-1z"/>
<path fill="#00e5ff" d="M655 69h1v4h-1zM669 69h1v4h-1z"/>
<path fill="#00e6ff" d="M656 69h1v4h-1zM657 69h1v4h-1zM668 69h1v4h-1z"/>
<path fill="#00e7ff" d="M658 69h1v4h-1zM659 69h1v4h-1z"/>
<path fill="#00e8ff" d="M660 69h1v4h-1zM667 69h1v4h-1z"/>
<path fill="#00e9ff" d="M661 69h1v4h-1zM662 69h1v4h-1zM666 69h1v4h-1z"/>
<path fill="#00eaff" d="M663 69h1v4h-1zM664 69h1v4h-1z"/>
<path fill="#00ebff" d="M665 69h1v4h-1z"/>
<path fill="#008cff" d="M624 73h1v4h-1zM625 73h1v4h-1zM626 73h1v4h-1zM665 109h1v4h-1zM666 109h1v4h-1zM667 109h1v4h-1z"/>
<path fill="#008aff" d="M631 73h1v4h-1zM632 73h1v4h-1zM633 73h1v4h-1zM634 73h1v4h-1zM663 109h1v4h-1zM672 109h1v4h-1zM673 109h1v4h-1zM674 109h1v4h-1zM675 109h1v4h-1z"/>
<path fill="#0089ff" d="M635 73h1v4h-1zM636 73h1v4h-1zM637 73h1v4h-1zM638 73h1v4h-1zM662 109h1v4h-1zM676 109h1v4h-1zM677 109h1v4h-1zM678 109h1v4h-1zM679 109h1v4h-1z"/>
<path fill="#0087ff" d="M643 73h1v4h-1zM644 73h1v4h-1zM645 73h1v4h-1zM646 73h1v4h-1zM660 109h1v4h-1zM684 109h1v4h-1zM685 109h1v4h-1zM686 109h1v4h-1zM687 109h1v4h-1z"/>
<path fill="#0086ff" d="M647 73h1v4h-1zM648 73h1v4h-1zM649 73h1v4h-1zM650 73h1v4h-1zM659 109h1v4h-1zM688 109h1v4h-1zM689 109h1v4h-1zM690 109h1v4h-1zM691 109h1v4h-1z"/>
<path fill="#0084ff" d="M655 73h1v4h-1zM656 73h1v4h-1zM657 73h1v4h-1zM658 73h1v4h-1zM657 109h1v4h-1zM696 109h1v4h-1zM697 109h1v4h-1zM698 109h1v4h-1zM699 109h1v4h-1z"/>
<path fill="#0081ff" d="M668 73h1v4h-1zM669 73h1v4h-1zM670 73h1v4h-1zM671 73h1v4h-1zM654 109h1v4h-1z"/>
<path fill="#0080ff" d="M672 73h1v4h-1zM673 73h1v4h-1zM674 73h1v4h-1zM675 73h1v4h-1zM653 109h1v4h-1z"/>
<path fill="#007eff" d="M680 73h1v4h-1zM681 73h1v4h-1zM682 73h1v4h-1zM683 73h1v4h-1zM651 109h1v4h-1z"/>
<path fill="#007dff" d="M684 73h1v4h-1zM685 73h1v4h-1zM686 73h1v4h-1zM687 73h1v4h-1zM650 109h1v4h-1z"/>
<path fill="#007bff" d="M692 73h1v4h-1zM693 73h1v4h-1zM694 73h1v4h-1zM695 73h1v4h-1zM648 109h1v4h-1z"/>
<path fill="#1a2bff" d="M639 84h1v5h-1z"/>
<path fill="#078dff" d="M640 84h1v5h-1z"/>
<path fill="#0580ff" d="M703 84h1v5h-1z"/>
<path fill="#0a63ff" d="M704 84h1v5h-1z"/>
<path fill="#0f45ff" d="M705 84h1v5h-1z"/>
<path fill="#132aff" d="M625 89h1v4h-1z"/>
<path fill="#122cff" d="M626 89h1v4h-1z"/>
<path fill="#102dff" d="M627 89h1v4h-1z"/>
<path fill="#0f2fff" d="M628 89h1v4h-1z"/>
<path fill="#0e31ff" d="M629 89h1v4h-1z"/>
<path fill="#0d33ff" d="M630 89h1v4h-1z"/>
<path fill="#0b35ff" d="M631 89h1v4h-1z"/>
<path fill="#0a37ff" d="M632 89h1v4h-1z"/>
<path fill="#073cff" d="M635 89h1v4h-1z"/>
<path fill="#053eff" d="M636 89h1v4h-1z"/>
<path fill="#0440ff" d="M637 89h1v4h-1z"/>
<path fill="#0342ff" d="M638 89h1v4h-1z"/>
<path fill="#0243ff" d="M639 89h1v4h-1z"/>
<path fill="#0049ff" d="M657 89h1v4h-1zM658 89h1v4h-1zM659 89h1v4h-1zM660 89h1v4h-1zM661 89h1v4h-1zM662 89h1v4h-1zM663 89h1v4h-1zM676 97h1v8h-1zM677 97h1v8h-1zM678 97h1v8h-1zM679 97h1v8h-1z"/>
<path fill="#3306ff" d="M639 93h1v4h-1z"/>
<path fill="#0f1eff" d="M640 93h1v4h-1z"/>
<path fill="#0041ff" d="M643 97h1v8h-1zM644 97h1v8h-1zM645 97h1v8h-1zM646 97h1v8h-1z"/>
<path fill="#1414ff" d="M624 105h1v4h-1zM625 105h1v4h-1zM626 105h1v4h-1zM627 105h1v4h-1zM628 105h1v4h-1z"/>
<path fill="#1415ff" d="M629 105h1v4h-1zM630 105h1v4h-1zM631 105h1v4h-1zM632 105h1v4h-1zM633 105h1v4h-1zM634 105h1v4h-1zM635 105h1v4h-1zM636 105h1v4h-1z"/>
<path fill="#1416ff" d="M637 105h1v4h-1zM638 105h1v4h-1zM639 105h1v4h-1zM640 105h1v4h-1zM641 105h1v4h-1zM642 105h1v4h-1zM643 105h1v4h-1zM644 105h1v4h-1z"/>
<path fill="#1417ff" d="M645 105h1v4h-1zM646 105h1v4h-1zM647 105h1v4h-1zM648 105h1v4h-1zM649 105h1v4h-1zM650 105h1v4h-1zM651 105h1v4h-1zM652 105h1v4h-1z"/>
<path fill="#1418ff" d="M653 105h1v4h-1zM654 105h1v4h-1zM655 105h1v4h-1zM656 105h1v4h-1zM657 105h1v4h-1zM658 105h1v4h-1zM659 105h1v4h-1zM660 105h1v4h-1z"/>
<path fill="#1419ff" d="M661 105h1v4h-1zM662 105h1v4h-1zM663 105h1v4h-1zM664 105h1v4h-1zM665 105h1v4h-1zM666 105h1v4h-1zM667 105h1v4h-1zM668 105h1v4h-1zM669 105h1v4h-1z"/>
<path fill="#141aff" d="M670 105h1v4h-1zM671 105h1v4h-1zM672 105h1v4h-1zM673 105h1v4h-1zM674 105h1v4h-1zM675 105h1v4h-1zM676 105h1v4h-1zM677 105h1v4h-1z"/>
<path fill="#141bff" d="M678 105h1v4h-1zM679 105h1v4h-1zM680 105h1v4h-1zM681 105h1v4h-1zM682 105h1v4h-1zM683 105h1v4h-1zM684 105h1v4h-1zM685 105h1v4h-1z"/>
<path fill="#141cff" d="M686 105h1v4h-1zM687 105h1v4h-1zM688 105h1v4h-1zM689 105h1v4h-1zM690 105h1v4h-1zM691 105h1v4h-1zM692 105h1v4h-1zM693 105h1v4h-1z"/>
<path fill="#141dff" d="M694 105h1v4h-1zM695 105h1v4h-1zM696 105h1v4h-1zM697 105h1v4h-1zM698 105h1v4h-1zM699 105h1v4h-1zM700 105h1v4h-1zM701 105h1v4h-1z"/>
<path fill="#141eff" d="M702 105h1v4h-1zM703 105h1v4h-1zM704 105h1v4h-1zM705 105h1v4h-1zM706 105h1v4h-1z"/>
<path fill="#0a14ff" d="M624 121h1v5h-1zM625 121h1v5h-1zM626 121h1v5h-1z"/>
<path fill="#0b13ff" d="M627 121h1v5h-1zM628 121h1v5h-1zM629 121h1v5h-1zM630 121h1v5h-1zM631 121h1v5h-1zM632 121h1v5h-1z"/>
<path fill="#0c12ff" d="M633 121h1v5h-1zM634 121h1v5h-1zM635 121h1v5h-1zM636 121h1v5h-1zM637 121h1v5h-1zM638 121h1v5h-1z"/>
<path fill="#0d11ff" d="M639 121h1v5h-1zM640 121h1v5h-1zM641 121h1v5h-1zM642 121h1v5h-1zM643 121h1v5h-1zM644 121h1v5h-1z"/>
<path fill="#0e10ff" d="M645 121h1v5h-1zM646 121h1v5h-1zM647 121h1v5h-1zM648 121h1v5h-1zM649 121h1v5h-1z"/>
<path fill="#0f0fff" d="M650 121h1v5h-1zM651 121h1v5h-1zM652 121h1v5h-1zM653 121h1v5h-1zM654 121h1v5h-1zM655 121h1v5h-1z"/>
<path fill="#100eff" d="M656 121h1v5h-1zM657 121h1v5h-1zM658 121h1v5h-1zM659 121h1v5h-1zM660 121h1v5h-1zM661 121h1v5h-1z"/>
<path fill="#110dff" d="M662 121h1v5h-1zM663 121h1v5h-1zM664 121h1v5h-1zM665 121h1v5h-1zM666 121h1v5h-1zM667 121h1v5h-1z"/>
<path fill="#120cff" d="M668 121h1v5h-1zM669 121h1v5h-1zM670 121h1v5h-1zM671 121h1v5h-1zM672 121h1v5h-1z"/>
<path fill="#130bff" d="M673 121h1v5h-1zM674 121h1v5h-1zM675 121h1v5h-1zM676 121h1v5h-1zM677 121h1v5h-1zM678 121h1v5h-1z"/>
<path fill="#150aff" d="M682 121h1v5h-1z"/>
<path fill="#1709ff" d="M683 121h1v5h-1z"/>
<path fill="#1809ff" d="M684 121h1v5h-1z"/>
<path fill="#1a09ff" d="M685 121h1v5h-1z"/>
<path fill="#1b08ff" d="M686 121h1v5h-1z"/>
<path fill="#1d08ff" d="M687 121h1v5h-1z"/>
<path fill="#1f07ff" d="M688 121h1v5h-1z"/>
<path fill="#2007ff" d="M689 121h1v5h-1z"/>
<path fill="#2207ff" d="M690 121h1v5h-1z"/>
<path fill="#2406ff" d="M691 121h1v5h-1z"/>
<path fill="#2506ff" d="M692 121h1v5h-1z"/>
<path fill="#2705ff" d="M693 121h1v5h-1z"/>
<path fill="#2805ff" d="M694 121h1v5h-1z"/>
<path fill="#2a04ff" d="M695 121h1v5h-1z"/>
<path fill="#2c04ff" d="M696 121h1v5h-1z"/>
<path fill="#2d04ff" d="M697 121h1v5h-1z"/>
<path fill="#2f03ff" d="M698 121h1v5h-1z"/>
<path fill="#3103ff" d="M699 121h1v5h-1z"/>
<path fill="#3202ff" d="M700 121h1v5h-1z"/>
<path fill="#3402ff" d="M701 121h1v5h-1z"/>
<path fill="#3502ff" d="M702 121h1v5h-1z"/>
<path fill="#3701ff" d="M703 121h1v5h-1z"/>
<path fill="#3901ff" d="M704 121h1v5h-1z"/>
<path fill="#000000" d="M536 84h3v3h-3zM545 84h3v3h-3zM571 84h2v3h-2zM703 20h4v12h-4zM681 49h15v3h-15zM697 49h4v7h-4zM702 49h5v7h-5zM684 49h1v7h-1zM689 49h3v6h-3zM672 49h1v5h-1zM662 49h1v7h-1zM656 53h1v4h-1z"/>
<path stroke="#0057ff" stroke-width="1" fill="none" d="M142.5 168v4m0 4v2m0 2v2m0 10v2m0 16v2m0 34v2m1 -80v2m0 2v2m0 20v2m0 2v2m0 6v2m1 4v2m1 -18v2m0 8v2m0 36v2m1 -78v6m0 8v2m0 46v2m0 2v2m1 -66v2m0 2v2m0 6v2m0 16v2m0 14v2m0 28v2m1 -64v2m0 4v2m0 32v2m1 -52v2m0 36v2m0 4v2m1 -32v2m1 -12v4m0 42v2m1 -54v2m0 2v2m0 10v2m0 56v2m1 -30v2m1 -50v2m0 8v2m0 6v2m1 -20v2m0 2v2m0 18v2m1 -20v2m0 16v2m0 4v2m1 -32v2m0 2v2m0 36v2m0 4v2m0 2v2m1 -52v2m0 14v2m0 2v2m0 22v2m0 26v2m0 2v2m1 -72v2m0 6v2m0 36v2m1 -8v2m2 28v2m1 -50v2m1 -18v2m0 64v2m1 -68v2m0 2v2m1 -12v2m0 66v2m1 -74v4m0 26v2m0 8v2m0 6v2m1 -54v2m0 12v2m0 10v2m0 22v2m0 28v2m2 -34v2m3 -46v2m0 2v2m0 22v2m1 -34v2m0 18v2m0 30v2m0 4v2m0 14v2m1 -76v2m0 18v2m0 44v2m1 -44v2m1 4v2m0 6v2m1 -30v2m0 30v2m1 -34v2m0 8v2m0 12v2m0 30v2m1 -66v2m0 44v2m0 20v2m2 -28v2m1 -48v2m0 10v2m0 32v2m0 2v2m1 -50v2m0 48v2m1 -44v2m0 34v2m1 -48v2m0 26v2m0 10v2m0 26v4m0 8v2m1 -12v2m1 -32v2m1 -28v2m1 -10v4m0 66v2m1 2v2m1 -68v2m0 2v2m1 -16v2m0 6v2m0 26v6m2 -34v2m3 -12v2m2 6v4m2 56v2m1 10v2m3 -4v2m1 -80v2m0 72v2m1 -74v2m1 72v4m1 -24v2m1 -4v2m0 8v2m1 -32v2m0 16v4m0 12v2m1 -64v2m0 34v2m1 -42v2m0 2v2m1 -10v2m0 2v2m0 6v2m3 -2v4m1 64v2m2 -68v2m1 -6v4m1 58v2m1 -74v2m2 14v2m1 50v2m0 4v2m1 -18v2m2 -58v2m4 10v2m0 66v2m1 -32v2m2 -46v2m0 16v2m0 6v2m0 6v2m1 6v4m1 -30v2m0 12v2m0 12v2m1 -20v2m0 2v4m0 4v2m1 -26v2m0 8v2m0 46v2m1 -38v2m1 -46v2m0 2v2m0 8v4m0 6v2m0 30v2m0 12v2m1 -66v4m0 34v2m0 4v2m1 -40v2m0 6v2m0 10v2m0 4v2m0 2v2m0 10v2m1 -20v2m0 34v2m1 -32v2m1 -30v2m0 36v2m1 -48v2m0 24v2m0 8v4m0 4v2m1 -30v4m0 4v2m0 2v2m0 14v2m1 -24v2m0 50v2m1 -34v2m1 -4v2m2 6v2m2 -10v2m1 -6v2m1 -4v2m0 8v2m1 -28v2m0 26v2m1 -22v2m0 8v2m1 -22v2m0 22v2m0 16v2m3 12v2m1 -30v2m1 -40v4m0 18v2m1 -6v2m1 -32v2m0 36v2m1 -2v2m0 22v2m1 -40v2m0 16v4m0 6v2m1 -12v2m0 6v2m1 -4v4m2 4v2m1 -10v2m0 2v2m1 -34v2m0 26v4m0 28v2m1 -76v2m2 30v2m0 12v2m0 28v2m1 -32v2m1 -52v2m0 16v2m1 18v2m0 38v2m1 -80v2m0 34v2m0 4v2m0 4v2m0 2v2m0 8v2m0 12v2m1 -78v2m0 6v2m0 4v2m0 20v2m0 2v2m0 4v2m0 2v2m0 28v2m2 -60v6m1 -26v2m0 12v2m0 6v2m0 18v2m1 -14v2m0 44v2m1 -34v2m0 6v2m1 -14v2m0 10v2m1 -34v4m0 12v2m0 2v2m0 6v2m1 -40v2m0 14v2m0 8v2m2 -18v2m0 28v2m0 24v2m1 -66v2m1 32v2m0 28v2m3 -30v2m0 20v2m1 -62v4m0 16v2m0 18v2m0 14v2m1 -42v2m0 42v2m0 4v2m1 -60v2m0 28v2m0 24v2m1 -78v2m0 28v2m0 28v2m0 8v2m0 8v2m1 -36v2m1 -8v2m1 30v2m1 -10v2m1 -64v2m0 6v2m0 14v2m1 -12v2m0 14v4m0 14v2m1 -44v2m0 24v2m0 10v4m1 -32v2m0 8v2m1 -28v2m0 2v2m0 2v4m0 18v4m0 16v2m2 -54v2m0 2v2m0 4v2m0 6v2m0 6v2m1 -28v2m0 30v2m0 6v2m1 -38v2m0 24v2m0 20v2m1 -44v2m0 22v2m0 6v2m0 4v2m0 4v2m1 -54v2m0 4v2m0 8v2m0 10v2m0 4v2m0 16v2m2 -42v2m0 8v2m1 -24v2m0 50v2m2 -44v2m0 12v2m0 12v2m0 12v2m1 -10v2m1 -42v2m0 2v2m0 6v2m0 14v2m0 42v2m1 -46v2m0 4v2m1 -44v2m0 32v2m0 8v2m1 -40v4m0 16v2m0 8v2m1 -36v2m0 22v2m1 -20v2m1 30v2m0 12v2m0 2v2m1 -56v2m0 28v2m0 2v2m0 8v2m0 6v2m1 -56v2m0 34v2m0 4v2m0 32v2m1 -56v2m0 6v2m0 16v2m1 -18v2m0 8v2m0 10v2m0 24v2m1 -62v2m0 2v2m1 -8v2m0 30v2m1 -16v2m0 10v2m1 -52v2m0 8v2m0 12v2m0 2v2m0 20v2m0 8v2m0 2v2m0 16v2m1 -30v2m0 4v2m0 8v2m1 -42v2m0 2v2m0 20v2m1 -26v4m0 20v2m1 -32v2m1 -28v2m0 2v2m1 4v2m2 0v2m0 10v2m1 -4v2m0 2v2m2 -24v2m2 -6v2m0 80v2m1 -78v2m1 72v2m1 -70v2m0 10v2m1 -16v2m0 4v2m0 18v2m0 32v2m0 8v2m1 -80v4m0 2v2m0 2v2m0 18v2m0 24v2m1 -58v2m0 14v2m0 2v2m0 42v2m0 2v4m0 4v2m1 -38v2m1 -16v2m1 -24v2m0 62v6m1 -34v2m0 16v2m0 8v2m2 -14v2m0 18v6m1 -24v2m0 14v2m2 -20v6m1 4v2m1 -10v4m0 2v2m0 2v2m1 -2v2m6 -56v2m0 26v2m0 24v2m1 -38v2m1 -8v2m2 48v2m2 2v2m4 -2v2m1 -20v2m0 12v2m0 2v2m8 -26v2m0 2v2m6 -6v2m1 10v2m1 -4v2m1 0v2m4 -8v2m1 10v4m4 0v2m8 -18v2m3 -52v2m1 -14v6m0 4v2m1 68v2m2 -80v2m1 -4v4m0 4v2m0 2v2m0 2v2m0 6v2m0 48v2m1 -70v2m1 -8v2m0 12v2m0 16v2m0 42v2m1 -78v2m1 6v2m0 10v2m0 44v2m1 -58v2m0 8v2m0 50v2m1 -68v2m0 6v2m0 60v4m1 -46v2m0 22v2m1 -52v2m0 40v2m1 -50v2m0 36v2m1 -34v2m0 30v2m0 16v2m0 6v2m2 -68v2m0 8v2m0 14v2m1 -14v2m0 4v2m0 2v2m1 48v2m1 -54v2m0 46v2m1 -62v2m0 12v2m0 50v2m1 -72v2m0 10v2m0 6v2m0 4v4m0 40v2m1 -80v2m0 80v2m1 -76v2m0 8v2m0 2v2m1 -24v2m0 12v2m1 0v2m0 60v2m1 -4v2m1 -78v2m0 52v2m0 12v2m1 -46v2m1 -26v2m0 16v2m0 54v6m1 -16v2m0 2v2m1 -46v4m0 46v2m1 -76v2m0 4v2m0 8v2m0 42v2m1 -60v2m1 -4v2m0 68v2m1 -66v4m0 52v2m0 8v2m1 -62v2m1 -8v2m0 70v2m1 -56v2m0 56v2m1 -26v2m2 22v2m3 -76v2m2 50v2m1 -62v2m1 0v2m0 8v2m0 10v2m0 50v2m1 -78v2m0 66v2m1 -64v2m0 16v2m1 54v2m1 -4v2m3 -24v2m1 10v2m1 -68v2m0 2v2m1 60v2m0 10v2m2 -34v2m0 22v2m1 -16v2m0 12v2m2 -4v2m1 -24v2m1 4v2m0 10v2m0 14v2m1 -18v2m0 2v2m1 -12v2m0 6v2m1 -8v2m0 8v2m0 8v2m1 -26v2m0 8v2m1 6v2m2 -16v2m2 16v2m1 -24v2m1 -10v2m0 12v2m0 2v2m1 -20v2m0 8v2m0 20v2m2 -84v2m0 56v2m0 12v2m1 -24v2m0 2v2m0 24v2m1 -74v2m0 48v2m1 -52v2m0 46v2m1 -50v2m0 36v2m1 -38v2m1 -10v2m0 6v2m0 38v6m0 8v2m1 -10v2m0 2v2m0 10v2m1 -26v2m0 18v2m1 -62v2m1 0v2m0 30v2m0 10v2m0 10v2m1 -68v2m1 42v2m0 4v6m1 8v4m1 -26v2m0 8v2m0 2v2m0 2v2m1 4v2m1 -6v2m0 12v2m2 -8v2m1 -24v2m0 8v2m2 -16v4m0 6v2m0 2v2m1 2v2m0 4v2m1 -12v2m1 -16v2m0 6v2m0 12v6m1 2v2m1 -22v2m4 8v2m4 -12v2m6 -8v4m0 2v2m20 -48v2m1 -8v4m0 2v2m3 -8v2m1 4v2m2 -2v2m1 4v2m1 -4v2m2 -10v4m2 -4v2m1 6v2m0 4v2m2 -14v2m0 2v2m0 4v2m2 -16v2m0 2v2m0 10v2m2 -16v2m0 4v2m0 4v2m1 8v2m3 -10v2m1 -20v2m1 14v4m1 -20v2m0 14v2m1 -16v2m0 6v4m1 8v2m3 -14v2m0 8v2m1 -14v2m0 2v2m2 -4v2m0 2v2m2 6v2m1 -12v2m0 2v2m0 2v2m3 60v2m2 -58v2m1 54v2m7 -32v2m12 4v4m2 -10v2m0 6v2m1 -10v2m1 -8v2m0 12v4m1 -22v2m0 24v2m0 4v2m1 -18v2m1 -20v4m0 30v2m1 -30v2m0 10v2m1 -14v2m0 2v2m1 10v2m1 -20v2m0 2v2m1 -2v2m4 -6v2m0 2v2m0 6v2m0 10v2m1 -26v6m0 4v2m0 12v2m2 -24v2m0 2v2m1 0v2m0 14v2m1 -22v2m1 0v2m1 -4v2m1 -4v2m0 16v2m1 -12v2m1 -2v2m0 6v4m1 0v2m1 -14v2m1 -10v2m0 2v4m0 10v4m0 2v2m0 2v2m1 -20v2m1 -14v2m1 4v2m0 4v4m1 2v2m2 -4v2m0 6v2m1 0v4m1 -28v2m0 16v2m1 -20v4m0 12v2m3 -6v2m1 -4v2m1 -6v2m0 8v2m0 8v2m1 -6v2m1 -18v2m0 8v2m1 -4v2m1 -16v2m0 8v2m0 16v2m1 2v2m0 2v2m1 -34v2m1 4v2m0 4v2m0 2v2m1 -22v2m0 8v4m0 6v2m1 2v2m1 -6v2m2 -20v2m0 2v2m0 20v2m1 -18v2m4 18v2m1 -36v2m2 6v2m1 -10v2m0 4v2m0 14v2m2 -22v2m0 2v2m0 10v4m1 -16v2m1 10v4m1 -20v2m3 18v2m2 -18v2m3 -4v2m1 2v2"/>
<path stroke="#002aff" stroke-width="1" fill="none" d="M142.5 172v2m0 34v2m0 4v2m2 -44v2m0 12v2m0 2v2m1 16v2m2 -38v2m0 20v2m0 12v2m0 8v2m1 -46v2m0 2v2m0 2v2m0 14v2m0 4v2m1 -36v2m0 8v2m0 28v2m1 -32v2m0 2v4m1 -20v2m0 6v2m0 36v2m0 2v2m1 -52v2m1 2v4m2 -8v2m0 14v2m1 38v2m1 -48v2m0 2v2m1 6v2m1 -22v2m0 8v2m0 14v2m1 -26v2m0 24v2m0 48v2m3 -26v2m0 24v2m2 -46v6m0 10v2m1 -26v2m0 2v2m1 6v2m0 32v2m1 -58v4m0 14v2m0 14v2m0 14v2m1 -58v4m0 2v2m4 32v2m1 -56v2m0 32v2m0 10v2m0 34v2m1 -78v4m0 28v2m0 2v2m0 32v2m1 -66v2m0 40v2m0 8v2m1 -58v2m0 46v2m1 -56v2m1 4v2m0 4v2m0 8v2m0 16v2m0 10v2m1 -48v2m0 26v6m1 10v2m2 -52v2m0 78v2m1 -36v2m1 -46v2m0 44v2m1 -42v4m0 34v2m0 4v2m1 -50v2m0 38v2m0 6v2m1 -46v2m1 70v2m1 -84v2m0 2v2m0 38v2m2 -2v2m0 36v2m1 -6v2m4 -70v2m3 66v2m5 -22v2m1 -10v2m0 8v2m0 6v2m1 -70v2m0 64v2m1 14v2m5 -80v2m0 52v2m1 -60v2m1 8v2m1 4v2m0 58v2m1 -74v2m0 6v2m1 -4v2m1 -10v2m4 2v2m12 26v2m0 14v2m0 2v2m1 -42v2m0 28v2m1 -2v2m1 -40v2m1 2v2m0 38v2m1 -48v2m0 18v2m0 2v2m1 -2v2m0 8v4m0 4v2m0 28v4m1 -64v2m0 24v2m1 -42v2m0 30v2m0 6v2m1 -40v2m0 6v2m0 2v2m0 4v2m0 2v2m1 -6v2m0 16v2m0 4v2m1 2v4m1 -10v4m0 8v2m1 -38v2m0 54v2m1 -54v4m0 2v2m0 14v2m0 4v2m0 28v2m1 -78v2m0 4v2m0 12v2m0 26v4m1 -32v2m0 12v2m0 14v2m2 -10v2m0 2v2m2 -18v2m0 6v2m0 2v4m1 -8v2m1 6v6m3 -20v2m0 14v2m5 -14v2m1 2v2m2 6v2m1 -42v2m0 8v2m0 22v2m0 4v2m1 0v2m0 22v2m1 -78v2m0 74v2m1 -36v2m1 -26v2m0 28v2m1 -10v2m1 -2v2m0 6v2m1 20v2m1 -20v2m0 14v4m0 2v2m1 -26v2m4 -12v2m1 -2v2m1 -36v2m0 6v2m0 62v2m4 -2v2m1 -82v2m0 18v2m0 16v2m0 2v4m1 -36v2m0 8v4m0 56v2m1 -76v2m0 2v2m0 62v2m1 -58v2m0 6v4m0 2v2m1 -12v2m0 2v2m0 4v2m1 -2v2m1 -16v2m0 4v8m5 14v2m2 -6v2m0 4v2m0 26v2m1 -48v2m0 12v2m0 8v2m0 22v2m1 -62v2m1 -4v2m0 12v2m1 -24v2m1 -12v2m0 2v2m0 34v2m0 2v2m0 32v2m1 -64v2m0 8v2m0 6v2m0 6v2m1 -30v2m0 8v2m0 14v2m1 -34v2m0 6v2m0 10v2m0 8v2m0 4v2m0 2v2m1 -50v2m0 6v2m0 8v2m0 10v2m0 8v2m1 -24v2m0 4v2m1 -24v2m0 6v2m0 6v2m0 4v4m0 2v2m0 8v2m1 -30v2m0 16v2m0 6v2m1 -24v2m1 -18v2m0 16v2m1 -12v4m0 10v2m0 20v2m1 -40v2m0 6v2m0 2v4m1 -14v2m0 4v2m0 8v4m0 6v2m0 4v4m1 -22v2m1 -4v4m0 6v2m1 -32v2m0 48v2m1 -46v2m1 -8v2m0 32v2m1 46v2m1 -78v2m0 18v2m0 4v2m0 4v2m0 4v2m1 -34v2m0 16v2m1 -30v2m0 4v2m0 10v2m0 6v2m0 6v2m0 8v2m1 -38v4m1 4v2m1 -10v2m0 2v2m1 0v2m0 30v2m1 -18v2m0 2v2m0 8v2m1 -34v2m0 4v4m1 -14v4m0 4v2m0 10v2m1 -24v2m0 66v2m1 -74v2m0 6v2m0 20v2m0 6v2m1 -36v2m0 8v2m1 4v2m0 20v2m2 -20v2m0 36v2m1 -36v2m0 12v2m0 2v4m1 -40v2m0 36v2m1 -42v2m0 8v4m0 4v2m1 -26v2m0 2v2m1 10v2m1 -24v2m1 0v2m1 8v2m0 4v4m3 -6v2m1 -14v2m0 12v4m3 -18v2m1 -6v2m0 6v2m0 2v2m0 12v2m0 48v2m1 -52v2m0 16v4m1 -42v2m0 54v2m1 -38v2m0 4v2m0 46v2m1 -66v2m1 -2v2m0 58v2m3 -4v2m2 -18v2m0 14v2m5 -18v2m0 18v2m1 -22v2m5 -8v2m19 6v2m0 2v2m7 14v2m10 0v2m3 -4v2m6 -64v2m0 24v2m1 -32v2m1 64v2m2 -74v2m1 -6v2m1 0v2m1 -2v2m0 8v2m0 48v2m1 -64v2m0 4v2m0 2v2m0 2v4m0 2v2m1 -2v2m0 2v2m0 36v4m0 2v2m0 8v2m1 -74v4m0 4v2m0 2v2m0 10v2m0 28v2m0 16v2m1 -78v2m0 16v4m1 -26v2m1 14v2m1 -18v2m0 4v2m0 10v2m1 -22v2m0 6v2m2 2v2m0 4v2m0 42v2m0 16v2m1 -82v2m0 10v2m0 10v2m0 42v2m0 2v2m0 4v2m0 2v2m1 -84v2m0 22v2m2 -24v2m0 2v2m0 14v2m0 54v2m1 -68v2m1 -4v2m2 -8v2m1 6v2m0 6v2m0 2v2m1 -6v2m0 2v2m1 -20v2m0 16v2m1 -14v2m0 4v2m0 6v2m0 36v2m0 2v2m1 -62v2m0 18v2m0 52v2m1 -16v2m0 12v2m1 -20v2m0 2v2m1 -4v2m0 2v2m0 2v4m1 -58v2m1 36v2m0 4v4m0 14v2m1 -70v2m1 -14v2m0 62v2m2 10v2m1 -60v2m0 60v2m3 -80v2m12 0v2m0 14v2m4 30v2m1 -52v2m0 2v2m0 64v2m1 -12v2m0 8v2m1 -12v2m4 -16v2m0 10v2m0 8v2m1 -4v2m1 -16v2m0 14v2m1 -20v4m0 10v2m1 -12v2m1 -4v2m0 22v2m3 -34v4m1 -4v2m0 2v2m0 26v2m1 -34v2m0 2v2m2 14v2m1 -24v2m0 4v2m0 22v2m1 -34v2m0 2v2m0 4v2m1 -4v2m0 10v2m1 -4v2m3 -54v2m1 36v2m0 2v2m0 2v2m1 -56v2m0 4v2m0 34v2m0 4v2m0 4v2m1 -12v2m1 -46v2m0 76v2m1 -12v2m2 -72v2m0 46v2m0 10v6m1 -64v2m0 52v2m0 18v2m1 -6v2m1 -20v2m0 12v2m1 -6v2m1 -16v2m2 -2v2m0 6v2m0 4v2m3 -6v2m0 6v2m1 -4v2m2 -16v2m2 0v2m0 8v2m4 -16v2m27 -38v2m5 -10v2m0 4v2m1 -2v2m1 -4v4m1 -10v2m1 6v2m1 -10v2m1 0v2m2 -8v2m0 4v2m0 10v2m1 -20v2m1 10v6m2 4v2m1 -18v4m0 12v4m1 -22v2m0 2v2m0 2v2m0 10v2m1 -24v2m0 8v2m0 6v2m1 -18v2m0 12v2m2 -20v2m0 20v2m2 -16v2m3 12v2m1 -18v4m4 0v2m0 2v2m0 2v2m1 -12v2m0 10v2m0 2v2m2 -26v2m0 10v2m0 4v2m1 -18v2m0 6v2m1 6v2m2 -14v2m0 18v2m1 -12v2m1 -14v2m0 4v2m0 12v2m12 52v2m1 -48v2m12 20v2m0 10v2m1 2v2m1 -22v2m1 -10v2m0 6v2m0 8v2m0 2v2m1 -16v4m1 -6v2m0 6v2m1 -16v2m0 2v2m0 4v2m0 10v2m0 2v2m1 -4v4m1 -4v2m1 -26v2m1 24v2m2 -10v2m0 10v2m1 -14v2m3 -8v2m0 6v2m0 8v2m1 -22v2m1 0v2m0 6v2m0 6v2m1 -4v2m2 -8v2m1 -12v2m1 -4v2m1 2v2m0 4v2m0 4v2m1 -6v2m1 -6v2m1 -2v2m2 -2v2m0 2v2m0 8v2m2 -28v4m0 6v2m0 6v2m1 -12v2m1 0v2m0 2v2m0 12v2m1 -18v2m0 2v2m1 -18v2m1 8v2m1 14v2m3 -24v2m0 14v2m1 -22v2m0 14v6m1 -8v2m0 6v2m1 -14v2m0 8v2m2 -18v2m0 12v2m1 -12v2m0 6v2m1 -14v2m0 14v2m1 -20v2m0 18v2m1 -10v2m1 -8v2m2 -10v2m0 20v2m1 -6v2m1 -16v2m1 -8v2m0 10v2m0 2v2m1 -12v2m1 16v2m1 -16v2m2 -6v2m1 0v4m1 -6v2m0 4v2m2 2v2m2 -4v2m1 -8v4m1 -4v2m1 8v2m2 -6v2m5 4v2m2 -2v2m0 2v2"/>
<path stroke="#3800ff" stroke-width="1" fill="none" d="M142.5 174v2m2 0v2m1 4v2m5 -6v2m18 -8v2m7 48v2m12 -54v2m0 36v2m0 8v2m28 -50v2m1 0v2m1 4v2m3 -4v2m20 32v2m3 -38v2m0 46v2m1 -38v2m0 34v2m2 -24v2m0 8v2m1 -42v2m0 4v2m0 10v2m1 -4v2m0 36v2m2 -54v2m1 46v2m5 -14v2m22 -2v2m11 -38v2m1 0v2m0 26v2m1 -22v2m0 2v4m0 2v2m0 28v2m2 -36v2m1 -8v2m9 -2v2m0 2v4m0 16v2m1 -18v2m0 24v2m1 -40v4m0 10v4m4 -28v2m1 10v2m0 8v2m0 2v2m1 -4v2m1 -18v2m3 8v2m1 4v2m1 -10v2m1 -18v2m2 10v4m1 12v2m3 -28v2m0 6v2m1 -10v2m0 2v2m0 2v2m0 8v2m0 4v6m0 8v2m1 -42v4m0 14v2m1 8v2m1 -6v4m1 -14v2m0 18v2m2 4v2m0 6v2m1 -36v2m0 14v2m0 12v2m1 -24v2m1 -20v2m1 -2v2m1 6v2m0 4v2m0 2v2m1 -10v2m1 -4v2m1 -12v4m2 18v2m0 10v2m1 -14v2m1 14v2m4 -28v2m2 -8v2m2 6v2m1 -10v2m1 -4v2m4 -2v2m1 12v2m1 -18v2m0 22v2m74 -10v2m0 2v2m5 -24v2m0 8v2m0 4v2m1 4v2m1 -10v2m1 -12v2m1 6v2m1 -14v2m4 10v2m3 -8v2m3 16v2m5 -4v2m1 -4v2m33 48v2m17 -20v2m6 -10v2m0 4v2m0 16v2m0 6v2m1 -2v2m4 -16v2m4 -20v2m1 -2v2m0 2v2m1 10v2m3 -14v2m46 -46v2m0 10v2m1 -18v2m1 8v2m1 -6v2m4 12v2m1 -24v2m0 20v2m1 -20v2m0 8v2m0 8v2m2 -20v2m1 -6v2m0 10v4m1 -12v6m1 -6v2m1 -6v2m5 18v2m1 -6v2m1 -12v2m1 -6v2m1 -4v2m0 10v2m2 8v2m1 -6v2m35 30v2m7 -2v2m4 10v2m1 -14v2m0 6v2m6 -6v2m1 -6v2m2 -4v2m3 12v2m2 -14v2m0 12v2m1 -6v2m2 -10v2m5 8v2m1 0v2m3 -6v2m1 0v2m1 -4v2m3 -2v2m1 -14v2m1 12v2m3 -12v2m2 4v2m1 0v2m1 -14v2m2 12v2m2 -2v2m3 0v2m9 -6v2m1 2v2"/>
<path stroke="#00dcff" stroke-width="1" fill="none" d="M142.5 178v2m0 6v2m0 2v2m0 2v2m0 16v2m1 -40v2m0 6v2m0 4v2m0 6v2m0 4v4m0 10v2m0 4v2m0 6v2m0 10v6m1 -44v2m1 -36v2m0 12v2m0 26v2m0 24v2m1 -50v2m0 24v2m0 6v2m0 6v2m0 2v2m0 12v2m1 -68v2m0 16v2m0 26v2m1 -46v4m0 40v2m0 12v2m0 2v2m1 -36v4m0 4v2m0 18v2m1 -52v2m0 6v2m0 2v2m0 4v2m0 4v2m0 2v2m0 6v2m1 -42v2m0 10v4m0 12v2m0 2v2m0 18v2m0 4v2m1 -68v2m0 22v2m0 10v2m0 2v2m1 -46v2m0 16v2m0 28v2m1 -40v2m0 2v2m0 2v2m0 38v2m0 2v2m1 -58v2m0 12v2m0 2v2m0 12v2m0 2v2m1 -42v2m0 12v2m0 2v2m0 10v2m0 4v2m0 10v2m0 8v2m0 4v2m1 -52v2m0 16v2m0 2v4m0 2v2m0 2v4m1 -54v2m0 18v2m0 2v2m0 6v4m0 12v2m1 -56v2m0 4v2m0 16v2m0 12v4m0 32v2m1 -68v4m0 12v2m0 28v2m0 20v2m1 -78v2m0 54v2m0 2v2m1 -62v2m0 6v2m0 36v2m0 24v2m1 -74v2m0 44v4m0 10v2m0 8v2m0 8v2m1 -80v2m0 20v4m0 2v4m0 2v2m1 -36v2m0 2v4m0 2v2m0 58v2m1 -66v2m0 14v2m0 14v4m0 32v2m0 4v2m1 -68v2m0 22v2m0 8v2m0 4v4m0 4v2m0 2v2m1 -60v2m0 14v2m0 16v2m1 -16v2m0 2v2m0 34v2m0 6v2m1 -66v2m0 2v2m0 14v2m0 2v2m0 8v2m1 -30v2m1 8v2m0 44v2m0 4v2m1 -48v2m0 8v2m0 30v4m1 -40v2m0 6v2m0 12v2m0 4v2m0 2v2m1 -76v2m0 62v2m1 -46v2m0 6v2m0 50v2m1 -62v2m0 14v4m0 2v2m0 26v2m0 4v2m1 -58v6m0 20v2m0 2v2m0 6v2m1 -34v4m0 4v2m0 4v2m0 6v2m0 12v2m0 2v2m0 14v2m1 -74v2m0 56v2m0 10v2m1 -60v2m0 14v2m0 4v2m0 4v2m0 4v2m1 -22v2m0 22v2m1 -56v2m0 24v2m0 36v2m1 -30v4m0 10v2m0 24v2m1 -82v2m0 8v4m0 4v2m0 22v2m0 8v2m0 2v2m0 20v2m1 -76v2m0 42v2m0 30v2m1 -46v2m0 28v2m0 2v2m1 -68v2m0 8v2m0 4v2m0 6v2m1 -14v2m0 12v2m0 4v2m0 4v2m0 2v2m0 22v4m1 -48v2m0 8v2m0 40v2m1 -78v2m0 28v2m0 6v2m0 2v2m0 2v2m0 2v2m0 4v2m0 2v2m0 2v4m0 2v6m0 2v2m1 -80v2m0 4v2m0 4v2m0 2v2m0 18v2m0 14v2m1 -52v2m0 52v2m0 6v2m0 10v4m1 -84v2m0 34v2m0 10v2m0 20v2m1 -56v2m0 22v2m0 38v2m1 -68v2m0 26v2m0 4v2m1 -42v2m0 4v2m0 32v2m1 -14v2m0 24v2m1 -64v2m0 10v2m0 4v2m0 38v2m0 12v2m0 4v2m1 -76v4m0 10v2m0 52v6m1 -12v2m0 8v2m1 -76v4m0 2v4m0 20v2m0 8v2m0 14v2m0 20v2m1 -78v2m0 32v2m0 10v2m0 8v2m0 6v2m0 6v2m0 2v2m1 -6v2m1 -76v2m0 4v2m0 10v2m0 40v4m0 12v2m1 -78v2m0 8v2m0 28v2m0 26v4m1 -12v2m1 -52v4m1 -6v4m0 54v2m1 -58v2m0 46v2m1 -2v4m0 10v2m0 6v2m1 -84v2m0 12v2m0 12v4m0 6v2m0 28v2m1 -28v2m0 18v2m0 8v2m0 2v2m1 -66v2m0 18v2m1 -28v2m0 26v2m0 36v2m0 6v2m1 -20v2m0 18v2m2 -22v2m1 -60v4m0 42v2m1 -36v2m0 60v2m0 2v2m1 -82v2m0 46v2m0 26v2m1 -64v2m0 54v2m0 4v2m1 -76v2m0 50v2m0 16v2m1 -20v2m0 2v2m0 18v4m1 -84v2m0 10v2m0 2v2m0 6v2m0 8v4m0 20v2m0 18v4m1 -78v2m0 2v2m0 46v2m0 6v2m0 12v2m1 -68v6m0 6v2m0 32v2m0 12v2m0 8v2m1 -78v2m0 52v2m0 18v2m1 -2v2m1 -74v2m0 2v2m1 -2v2m1 -2v2m0 4v2m0 16v2m0 38v2m1 -74v2m0 10v2m0 8v2m0 4v2m0 12v2m0 10v2m1 -60v2m0 2v2m0 2v2m0 2v2m0 36v2m0 10v4m0 6v2m1 -74v2m0 28v2m0 26v2m1 -14v2m0 14v2m0 14v2m0 2v2m1 -64v4m0 22v2m0 6v4m0 4v2m0 14v2m0 2v2m1 -62v2m0 56v2m1 -78v2m0 2v2m0 6v2m0 48v2m1 -66v2m0 2v2m0 14v2m0 30v2m0 2v2m0 2v4m0 16v2m2 -70v2m0 6v2m0 24v2m0 18v2m0 2v2m2 -50v2m0 14v2m0 18v2m1 -56v2m0 64v2m0 4v2m1 -14v2m0 6v2m1 -46v4m0 28v2m0 2v2m0 4v2m1 -64v4m0 20v2m0 42v2m1 -68v2m2 0v2m0 4v2m1 -18v2m0 4v2m0 12v2m0 12v2m1 -38v2m1 10v2m0 24v2m0 14v2m1 -28v2m0 8v2m0 10v2m1 -38v2m0 32v2m1 -40v4m0 42v2m1 -24v2m0 2v2m0 6v2m0 26v2m1 -72v2m0 6v2m0 30v2m0 6v2m1 -52v2m0 20v2m1 -22v2m0 18v2m0 12v2m0 4v2m1 -22v2m1 -6v2m0 32v2m0 8v2m0 8v2m0 2v2m1 -38v2m1 -38v2m0 24v2m1 -36v2m0 6v2m0 56v2m0 8v2m1 -42v2m0 2v2m0 12v2m0 2v2m1 -22v2m0 8v2m0 2v2m0 2v2m1 -46v2m0 56v8m1 -54v2m0 32v4m1 -60v2m1 -2v2m0 12v2m0 20v2m0 22v2m1 -50v2m0 8v2m0 4v2m0 8v2m0 24v2m1 -60v2m0 46v2m0 12v2m1 -64v2m0 4v2m0 8v2m0 12v2m0 8v2m1 -50v2m0 6v2m0 2v2m0 24v2m0 14v2m0 24v2m1 -82v4m0 12v2m0 24v2m0 20v2m0 10v2m1 -76v2m0 10v2m0 22v2m0 2v2m0 30v2m0 4v2m1 -70v2m0 2v2m0 2v2m0 10v2m0 18v2m0 2v2m0 14v2m3 -66v2m0 4v2m1 -4v4m0 8v2m0 20v2m0 4v2m0 4v2m0 6v2m1 -62v2m0 6v2m0 12v2m0 2v4m0 4v2m0 4v2m0 12v2m0 6v2m0 10v2m1 -50v2m0 10v2m0 10v2m0 2v4m0 12v2m1 -44v2m0 12v2m1 -46v2m0 30v2m1 -28v2m0 2v2m0 6v4m0 24v2m0 2v2m1 -26v2m1 -14v2m0 42v2m1 -62v2m0 2v2m0 50v4m1 -24v2m1 -22v2m1 60v2m1 -42v2m0 36v2m1 -56v6m0 4v2m0 16v4m0 22v2m1 -26v2m0 16v2m0 8v2m1 -72v2m0 30v2m0 4v2m0 8v2m1 0v2m0 18v2m1 -12v2m0 8v2m1 -82v8m0 20v2m0 10v2m0 8v2m0 14v2m0 8v2m1 -58v2m0 14v2m0 24v2m0 10v2m1 -30v2m0 4v2m0 8v2m1 8v2m0 2v2m1 -24v2m1 -18v2m0 2v2m0 4v2m0 26v2m1 -48v2m0 14v2m0 14v2m0 4v2m1 -42v2m0 22v2m2 -26v4m0 22v2m0 22v4m1 -72v2m0 40v2m1 -14v2m1 -44v2m0 14v2m0 56v2m1 -70v2m0 34v4m0 6v2m1 -16v2m1 -8v2m0 4v2m0 36v2m1 -32v2m0 2v2m1 -12v2m0 22v2m0 6v2m1 -72v2m0 2v2m0 22v2m0 12v2m1 -14v2m0 10v4m1 -36v2m0 18v2m0 4v2m1 -32v2m0 6v2m0 18v2m0 10v2m0 8v2m0 20v2m1 -72v2m0 8v2m0 10v4m0 2v4m1 -10v2m0 16v2m0 24v2m2 -74v2m0 66v2m1 -26v4m0 2v2m0 16v2m1 -68v2m0 30v4m0 20v2m1 -42v2m0 28v2m0 10v2m1 -32v2m1 -34v2m0 2v2m0 72v2m1 -64v2m0 6v2m0 22v2m0 28v2m1 -20v2m0 12v2m1 -48v2m0 44v2m1 -76v2m0 34v2m0 4v2m0 8v2m0 2v2m0 18v2m1 -50v2m0 8v2m0 36v2m1 -44v2m0 22v2m0 6v2m1 -54v2m1 -18v2m0 32v2m0 8v2m0 12v2m1 -24v2m0 18v2m0 10v2m0 10v2m1 -26v2m1 -10v2m0 12v2m1 -10v2m0 24v2m1 -74v2m0 72v2m1 -70v2m0 24v2m1 -36v4m0 24v4m2 -18v4m0 52v4m1 2v2m1 -46v2m1 -10v2m0 12v2m1 -36v2m0 34v2m1 -20v2m0 26v2m1 -56v2m0 32v2m1 -10v2m0 6v2m0 2v2m0 4v2m0 18v2m1 -62v2m0 2v2m0 4v2m0 20v2m0 24v2m0 6v2m0 8v2m1 -62v2m0 4v2m0 36v2m0 4v2m0 4v2m1 -52v2m0 4v2m0 4v2m0 38v2m1 -82v2m0 30v2m0 12v2m0 20v2m0 6v2m0 4v2m1 -82v2m0 4v4m0 4v2m0 10v2m0 16v2m0 12v2m1 -58v2m0 2v2m0 8v2m0 22v4m0 14v2m0 16v2m1 -78v2m0 24v2m0 2v2m0 8v2m1 4v2m0 30v2m1 -80v2m0 16v2m0 44v2m0 2v2m1 -50v2m0 36v2m1 -6v4m0 10v2m0 8v2m2 -18v2m0 6v2m1 -70v2m0 30v2m0 8v2m0 2v2m0 28v2m1 -6v2m1 -10v2m0 8v2m1 -26v2m1 24v2m1 -12v2m2 -66v2m0 64v2m0 2v2m0 2v2m1 -82v2m0 4v2m0 44v2m0 24v2m1 -72v2m0 4v2m0 22v2m0 34v2m1 -56v4m0 14v2m0 2v2m0 12v6m0 14v2m0 2v2m1 -74v2m0 18v2m0 14v4m0 12v2m1 -60v2m0 56v2m1 -30v2m1 -30v2m0 14v2m2 28v2m2 -50v2m0 32v2m0 18v2m0 20v2m1 -72v2m0 2v2m0 14v2m1 16v2m0 10v2m3 22v2m2 -6v2m1 2v2m1 -74v2m0 14v2m0 46v2m1 -70v2m0 48v2m0 10v4m2 -12v2m2 12v2m1 -60v2m0 22v2m1 -24v2m0 58v2m1 -28v2m0 4v2m2 8v2m0 6v2m1 -12v4m0 2v2m0 8v2m1 -14v2m0 8v2m3 -2v2m3 -18v2m2 -6v2m0 6v2m1 0v2m1 10v2m2 -18v2m1 -34v2m0 24v2m0 20v2m2 -74v2m0 70v2m1 -2v2m1 -84v4m0 16v2m0 60v2m1 -12v2m2 -24v2m0 12v2m0 2v2m1 -62v2m0 6v2m1 -6v2m0 14v2m0 2v4m0 2v2m0 2v2m0 10v2m0 4v2m0 16v4m1 -40v2m0 18v2m0 2v4m1 -52v2m0 10v4m0 10v2m0 2v2m0 8v2m1 -18v2m0 4v2m0 26v2m1 -60v2m0 46v2m0 8v2m1 -74v4m0 8v2m0 8v2m0 14v2m0 2v2m0 2v2m0 6v2m1 -46v2m0 8v2m0 34v2m1 -52v2m0 22v2m0 14v2m0 10v2m0 16v2m1 -50v2m0 6v2m1 -36v2m0 20v2m0 20v2m0 22v2m1 -68v2m0 10v2m0 2v2m0 52v2m1 -60v2m0 4v2m0 10v2m0 20v2m1 -54v2m0 68v2m1 -38v2m0 18v2m0 14v2m1 -68v2m0 10v2m0 6v2m0 2v4m0 22v2m0 2v2m0 2v2m1 -64v2m0 4v2m0 4v2m0 8v2m0 48v2m1 -80v2m0 4v2m0 6v2m0 6v2m0 2v2m0 34v4m0 2v2m1 -32v2m0 20v2m0 18v2m1 -82v2m0 4v2m0 6v2m0 36v2m1 -52v2m0 4v2m0 4v2m0 14v2m0 4v2m0 26v2m0 4v4m1 -66v2m0 54v2m1 -28v2m0 12v2m1 4v4m0 14v2m1 -46v2m1 2v2m0 18v2m0 16v2m2 -60v2m0 6v2m0 14v2m0 4v2m1 -38v2m1 -10v2m0 26v2m1 -34v2m0 14v2m0 30v2m0 8v2m1 -14v2m0 10v2m0 2v4m0 2v2m0 2v2m0 8v2m1 -74v2m0 12v2m0 40v2m0 2v2m0 2v2m1 -72v4m0 6v4m0 32v4m0 2v4m1 -44v2m0 22v4m0 18v2m0 2v2m0 8v2m1 -72v2m0 20v2m0 2v2m0 12v2m0 22v2m0 8v2m1 -54v4m0 4v2m0 16v2m1 -50v2m0 50v4m0 10v4m1 -48v2m2 -16v2m0 64v2m1 -62v2m1 2v2m0 38v4m1 -60v4m0 8v2m0 42v2m0 14v2m1 -80v2m0 2v6m0 2v2m0 16v2m0 28v2m1 -50v2m0 30v2m0 32v2m1 -32v2m0 14v2m0 14v2m1 -30v2m1 -46v4m0 24v4m0 32v2m1 -74v2m0 26v2m0 30v2m2 -42v2m0 50v2m1 -72v2m0 8v2m0 58v2m0 2v2m1 -22v2m0 4v2m0 4v2m1 -48v2m0 16v2m0 12v2m1 -34v2m0 34v2m0 16v2m1 -34v2m0 20v2m1 -8v2m0 2v2m0 6v2m0 6v2m1 -20v2m1 2v2m2 -24v2m1 28v4m1 -32v2m0 26v4m0 2v2m1 -30v4m1 20v2m1 -14v2m1 -18v4m0 12v2m0 2v2m0 2v2m2 -22v2m0 16v2m1 -16v2m1 -12v2m0 2v2m0 6v2m0 8v2m1 -26v2m0 32v2m1 -20v2m0 6v2m0 2v2m0 2v2m1 -78v4m0 2v2m0 62v2m1 -74v2m0 42v2m0 2v2m0 8v2m1 -56v2m0 40v2m0 20v2m0 6v4m1 -76v2m0 2v2m0 46v2m0 6v2m0 2v2m1 8v2m1 -34v2m0 6v2m1 -14v2m1 -32v2m1 -8v4m0 56v2m0 6v2m1 -68v4m0 36v2m0 12v2m0 2v2m0 2v2m1 -14v2m1 -22v4m0 2v2m0 2v2m1 -6v2m0 34v2m1 -30v2m0 14v2m1 -28v2m0 16v2m0 4v4m0 4v2m1 -26v2m0 6v2m0 14v2m1 2v2m1 -8v2m0 2v2m0 4v2m1 -12v2m1 -32v2m0 10v2m0 4v2m2 -6v2m0 2v2m0 2v2m0 12v2m1 -38v2m0 28v2m1 -24v2m1 -8v2m0 4v2m1 -4v2m0 32v2m1 -26v2m2 -12v2m0 16v2m2 2v2m1 -20v2m1 -2v2m0 22v2m2 -24v2m0 14v2m1 -12v2m0 10v2m1 -28v2m0 2v2m1 18v2m0 4v2m1 -18v2m0 14v2m1 0v4m1 -32v2m0 18v2m1 -18v2m0 12v2m1 -14v2m1 -56v2m0 64v2m0 4v2m0 2v2m14 -72v2m0 56v2m2 -58v4m1 -10v4m0 2v4m2 -12v2m0 2v2m0 4v2m1 -14v2m1 -2v2m0 8v2m1 46v2m1 -60v2m0 10v2m1 -12v2m1 2v2m0 2v2m0 4v2m1 -6v4m1 -14v2m0 6v2m1 4v2m2 -8v2m0 8v2m1 -20v2m0 2v4m0 26v2m0 40v2m2 -78v2m1 -2v2m2 10v2m0 64v2m1 -2v2m2 -70v2m1 66v2m3 -2v2m2 -78v2m0 14v2m1 -14v2m0 2v2m1 4v4m0 4v2m1 -28v2m1 32v4m0 40v2m1 -76v2m0 2v2m0 10v2m0 4v2m2 -6v2m2 -24v2m1 6v2m0 70v2m1 -4v2m1 -66v2m0 66v2m1 -70v2m0 10v2m1 14v2m1 36v2m1 -66v4m0 28v2m0 28v2m1 -80v2m0 2v2m0 10v2m0 12v2m0 2v2m1 -14v2m0 8v2m0 16v2m4 30v2m1 -56v2m0 2v2m1 -34v2m0 10v2m0 16v2m0 20v2m1 -48v2m0 20v2m0 26v2m1 -48v2m10 36v4m0 10v2m1 -18v4m0 14v2m1 -24v4m0 6v2m0 6v2m0 4v4m0 10v2m1 -14v4m1 -16v2m0 10v2m1 2v2m1 -22v2m0 24v2m1 -36v2m0 34v2m1 -36v2m0 32v2m1 -38v2m0 6v2m2 4v2m0 10v2m0 10v2m1 -42v2m0 20v4m1 -22v2m0 10v2m0 2v2m0 4v4m2 -14v4m2 -12v2m0 22v2m1 0v2m1 -32v2m0 30v2m1 -20v2m1 -16v4m0 24v2m1 -12v2m1 -20v2m0 18v2m0 6v2m1 -22v2m1 2v2m0 2v2m0 6v2m1 -22v2m1 0v2m0 12v2m1 -22v2m0 24v2m1 -16v2m1 -12v2m0 4v4m0 18v2m1 -32v2m0 10v2m1 10v2m0 2v2m1 -16v2m0 8v2m1 -24v2m1 22v2m0 6v2m1 -4v2m1 -32v2m0 30v2m1 -34v2m0 6v2m0 4v2m0 10v2m1 -32v2m0 14v2m0 6v2m1 -24v2m0 10v2m0 8v2m1 -6v2m1 2v4m1 -22v2m0 2v2m0 2v2m1 -6v2m0 24v2m1 -18v2m0 6v2m1 -6v2m0 2v2m1 -22v2m0 14v2m3 4v2m1 -16v2m1 12v2m2 -28v2m0 18v2m0 4v2m1 -30v2m0 12v2m0 6v2m1 -16v2m1 10v4m1 -8v2m2 -8v2m0 10v2m1 -26v2m0 36v2m1 -36v2m0 6v2m0 12v4m1 -2v2m1 -18v2m0 10v2m2 -24v2m1 4v2m2 -8v2m0 12v2m1 -18v2m0 4v6m1 -10v4m0 6v2m0 6v2m0 4v2m2 -16v2m0 10v2m1 -66v2m0 4v2m0 36v2m1 -44v2m0 6v4m0 26v2m0 2v2m0 2v4m0 6v2m2 -18v2m1 -2v2m1 -42v2m0 38v2m0 8v2"/>
<path stroke="#00ffd1" stroke-width="1" fill="none" d="M142.5 182v2m0 22v2m0 14v2m0 6v2m1 -62v2m0 42v2m0 34v2m1 -64v2m0 34v2m0 10v2m0 2v2m0 2v2m1 -44v2m0 6v2m0 4v2m0 18v2m1 -30v4m0 6v2m0 8v2m0 16v2m1 -60v2m0 2v2m0 38v4m2 -46v2m0 2v2m0 2v2m0 26v2m0 6v2m1 -54v2m0 6v2m0 14v2m0 28v2m0 2v2m1 -32v2m0 36v2m1 -64v2m0 14v2m0 2v2m0 36v2m1 -64v2m0 12v2m0 30v2m1 -18v2m0 2v2m0 4v2m0 4v2m0 2v2m0 6v2m1 -52v4m0 14v2m0 12v2m0 4v2m0 8v2m0 6v2m1 -62v2m0 46v2m0 10v2m1 -40v2m0 24v2m0 2v2m0 4v6m1 -74v2m0 60v4m1 -58v2m0 4v2m0 10v2m0 6v2m0 2v2m0 24v2m1 -54v2m0 18v2m1 -40v2m0 4v2m0 8v2m0 18v2m0 8v2m0 2v2m0 4v2m0 2v2m0 8v2m0 8v2m1 -64v2m0 12v2m0 2v6m0 4v2m0 26v4m1 -70v2m0 4v4m0 10v2m0 10v2m0 20v2m0 8v2m0 2v2m1 -76v2m0 70v2m1 -50v4m0 26v2m0 18v6m1 -78v2m0 10v2m0 54v2m1 -62v2m0 16v2m0 4v2m0 42v2m1 -48v2m0 4v2m0 20v2m0 10v2m1 -54v4m0 16v4m0 4v2m0 20v2m1 -70v2m0 14v2m0 16v2m0 40v2m1 -82v2m0 2v2m0 34v2m1 -44v2m0 8v2m0 14v4m0 10v2m0 10v2m1 -34v4m0 32v4m0 4v2m0 10v2m1 -68v2m0 16v4m0 6v2m0 8v2m1 -32v2m0 16v2m0 20v2m0 6v2m1 -62v2m0 6v2m0 22v2m0 6v2m0 28v2m1 -62v2m0 12v2m0 28v4m0 2v4m0 12v2m1 -44v2m0 6v2m0 2v2m0 6v2m1 -44v2m1 4v2m0 4v4m0 14v2m0 6v2m0 2v2m0 2v4m0 10v2m1 -78v2m0 6v6m0 12v2m0 4v4m0 8v4m0 8v2m0 2v4m1 -58v2m0 14v2m0 54v4m1 -80v2m0 10v4m0 8v2m0 24v2m0 12v2m1 -52v2m0 34v2m0 24v2m1 -60v4m0 4v2m0 2v4m0 2v2m1 -40v2m0 18v2m0 40v2m1 -40v2m0 36v2m0 8v2m0 4v2m1 -48v4m0 12v2m0 12v2m0 10v2m1 -56v4m0 2v2m0 34v2m0 14v2m1 -80v2m0 8v2m0 32v2m0 20v2m1 -58v2m0 4v2m0 6v8m0 18v2m1 -52v2m0 46v2m1 -42v2m0 10v2m0 8v2m0 22v2m0 8v2m0 4v2m0 2v2m1 -72v2m0 20v4m0 30v2m0 2v2m1 -58v2m0 52v2m0 8v2m1 -66v4m0 26v2m0 18v2m0 16v2m1 -60v2m0 34v2m0 14v2m1 -70v2m0 6v2m0 24v2m0 6v2m0 8v2m0 10v2m0 10v2m1 -78v4m0 16v2m0 6v2m0 2v4m0 12v4m0 10v2m0 14v2m1 -58v4m0 28v2m1 -60v2m0 6v2m0 22v2m0 12v2m0 32v2m1 -48v2m0 8v2m0 6v2m0 10v2m0 8v2m1 -76v2m0 4v2m0 2v4m0 20v2m0 26v2m0 14v2m1 -78v2m0 10v2m0 24v2m0 8v2m0 10v2m0 18v2m1 -80v4m0 34v6m0 6v2m0 10v2m0 6v2m1 -76v2m0 24v2m0 2v2m0 4v2m0 10v2m0 8v2m1 -52v2m0 30v4m0 6v2m0 6v2m0 4v2m0 8v2m1 -70v2m0 26v4m0 10v2m0 12v2m0 10v2m1 -34v2m1 -44v2m0 36v2m0 12v2m0 2v2m1 -32v2m0 4v4m0 18v2m0 2v2m0 8v2m1 -60v2m0 32v2m0 4v2m0 28v2m1 -64v2m0 4v2m0 14v2m1 -26v4m0 28v2m0 6v2m0 6v2m0 6v2m1 -56v2m0 12v2m0 6v2m2 4v2m0 8v2m0 10v2m1 -26v2m0 20v2m1 -60v2m0 32v2m0 2v2m0 28v2m1 -44v2m0 10v2m0 24v2m0 2v2m1 -24v2m1 -54v4m0 12v2m0 12v2m0 4v2m0 26v4m1 -60v2m0 8v2m0 18v2m0 16v2m0 6v2m0 8v2m1 -74v2m0 8v2m0 6v2m0 8v2m1 -24v2m0 44v2m1 -52v2m0 4v2m0 32v2m0 28v2m1 -70v2m0 34v2m0 6v2m1 -42v2m0 24v2m0 12v2m0 18v2m0 2v2m1 -74v2m0 2v2m0 20v2m0 24v2m1 -48v2m0 52v2m0 6v2m0 4v2m0 2v2m2 -68v2m0 8v2m0 2v2m0 8v2m0 10v2m0 8v2m0 2v2m0 2v2m0 2v2m1 -52v2m0 14v4m0 10v2m0 4v4m0 4v2m0 2v2m0 4v2m0 2v2m1 -66v2m0 6v2m0 8v2m0 10v2m0 6v2m1 -46v10m0 10v2m0 8v2m0 12v2m0 4v2m0 12v2m1 -36v2m0 6v2m1 -48v2m0 34v2m0 16v2m0 4v2m0 6v2m1 -66v4m0 4v2m0 20v2m0 16v2m0 14v2m0 2v2m0 4v2m1 -64v2m0 10v2m0 22v2m0 2v2m1 -46v2m0 18v2m0 22v2m1 -28v2m0 26v2m0 6v2m1 -54v2m0 36v4m0 6v2m1 6v2m0 6v2m1 -56v2m0 26v2m1 -8v2m0 28v2m1 -12v2m1 2v2m0 4v2m1 -46v2m0 2v2m0 18v2m1 -48v2m0 6v2m0 12v2m0 10v2m0 16v4m0 8v2m1 -6v2m0 6v2m1 -74v2m0 4v2m0 48v2m1 -66v2m0 10v2m0 30v2m0 22v2m0 4v2m0 2v2m1 -82v2m0 2v2m0 26v4m0 4v2m1 -10v2m0 14v2m0 8v4m1 -58v2m0 8v2m0 12v2m0 4v2m0 2v2m0 38v2m1 -76v2m0 42v2m0 6v2m0 18v2m0 4v2m1 -14v2m0 2v2m1 -52v4m0 4v2m0 10v2m0 20v4m1 -50v2m0 6v2m0 38v2m1 -62v2m0 10v4m0 8v2m0 10v2m0 36v2m1 -82v2m0 30v2m0 14v2m0 12v2m0 8v6m1 -68v2m0 6v2m0 44v2m0 2v2m0 2v2m1 -68v2m0 2v2m0 10v2m0 4v4m0 8v4m0 8v2m0 2v2m0 18v2m0 2v2m1 -60v2m0 44v2m0 4v4m0 2v2m1 -82v2m0 8v2m0 4v2m0 10v2m1 -26v2m0 4v2m0 22v2m0 18v2m0 4v2m1 -46v2m0 6v2m0 20v2m0 30v2m1 -80v2m0 2v2m0 2v2m0 2v2m0 12v2m0 36v2m1 -46v2m0 8v2m1 -12v2m0 2v2m0 40v2m1 -56v2m0 6v2m0 8v4m0 18v2m1 -46v2m0 6v2m0 2v2m0 6v2m0 12v2m0 8v2m0 10v4m0 4v4m1 -40v2m0 6v2m0 14v2m0 6v2m1 -60v2m0 20v2m0 22v2m0 2v4m1 -48v2m0 8v2m0 2v2m0 8v2m0 18v4m0 8v2m1 -72v2m0 54v2m0 8v2m1 -68v2m0 18v2m0 14v2m0 2v2m0 16v2m0 4v2m0 12v2m1 -68v2m0 2v2m0 30v2m0 6v2m0 8v2m0 4v2m1 -78v2m0 8v2m0 16v2m0 16v2m0 22v2m0 6v2m1 -78v2m0 10v2m0 20v2m0 16v2m0 14v2m0 4v2m0 2v2m1 -66v2m0 2v2m0 10v2m0 8v2m0 4v2m0 16v2m1 -68v2m0 2v2m0 6v2m0 4v2m0 4v4m0 12v2m1 14v2m1 -46v2m0 8v2m0 12v2m1 -32v2m0 18v4m0 38v2m1 -70v2m0 2v2m0 16v2m0 18v2m0 6v2m0 4v4m0 4v4m0 8v2m1 -72v2m0 22v2m0 36v2m1 -64v4m0 18v2m0 6v2m0 32v2m0 6v2m2 0v2m1 -18v2m1 -64v2m0 42v2m0 10v2m1 -38v2m0 26v2m0 12v2m0 12v2m1 -76v4m0 38v2m0 18v2m0 10v2m1 -70v2m0 2v4m0 30v2m0 16v2m1 -64v2m0 8v2m0 2v2m0 16v2m0 28v2m0 8v2m1 -16v4m0 8v2m1 -68v2m0 28v2m0 6v2m0 8v2m0 12v2m0 10v2m1 -84v2m0 12v4m0 2v2m0 8v2m0 4v2m0 22v2m1 -58v2m0 6v2m0 48v2m0 2v6m1 -32v2m0 2v2m0 12v2m1 -14v2m0 12v2m0 10v2m1 -8v2m1 -4v2m1 -4v6m0 2v2m0 4v2m1 -48v2m0 28v2m0 10v2m1 -28v2m0 20v2m0 6v2m0 4v2m1 -22v2m0 4v2m0 12v2m1 -30v2m0 6v2m0 12v4m0 2v2m1 -38v2m0 14v2m1 0v2m0 6v2m0 4v4m1 -36v2m0 28v2m0 4v2m1 -64v2m0 16v2m0 12v2m0 8v2m0 4v2m0 12v2m1 -84v2m0 52v2m0 6v2m1 -28v2m0 8v4m0 2v2m0 2v2m0 20v4m1 -42v2m0 6v2m1 -8v2m0 16v2m0 16v2m1 -10v2m2 -34v2m0 12v4m0 4v2m0 14v2m1 -68v2m0 2v2m0 30v2m0 6v2m0 14v4m1 -32v4m0 8v2m0 4v2m0 12v2m1 -68v2m0 38v2m0 2v4m0 2v2m1 -16v2m0 14v2m0 16v2m1 -36v2m0 14v4m0 2v2m0 4v2m0 2v2m1 -18v2m0 16v2m1 -20v4m0 2v2m1 -16v4m0 4v2m0 2v2m0 4v2m1 2v2m0 4v2m1 -42v2m0 34v2m1 -2v2m1 -22v2m0 2v2m0 2v2m0 16v2m1 -20v2m1 -4v2m0 2v2m0 6v2m1 -24v2m0 10v2m0 10v2m1 -40v2m0 22v2m0 16v2m1 -54v2m0 8v2m0 22v4m0 16v2m1 -30v2m0 22v2m1 -32v2m0 12v2m0 4v2m0 12v2m1 -44v2m0 2v2m0 16v2m1 -20v2m0 22v2m1 -2v2m1 -8v2m0 12v4m1 -78v2m0 32v2m0 26v2m1 -28v2m0 4v2m0 8v2m0 4v2m0 8v2m1 -30v2m0 16v2m0 14v4m1 -52v2m0 2v2m0 8v2m0 2v2m0 2v2m1 -44v2m0 64v2m1 -36v2m0 12v2m0 20v2m1 -76v2m0 4v2m0 22v2m0 10v2m0 6v2m0 18v2m1 -42v4m0 40v2m1 -74v2m1 52v2m0 16v2m1 -70v2m0 28v2m0 6v2m0 32v2m1 -44v2m0 10v2m0 6v2m0 10v2m0 2v2m1 -58v2m0 22v2m0 6v2m0 4v2m0 12v2m2 -62v2m0 24v2m0 12v2m0 8v2m0 8v2m1 -12v2m1 -42v4m0 28v2m1 -54v2m0 10v2m0 18v2m0 6v2m0 12v2m1 -36v2m0 8v2m0 2v2m0 4v2m0 12v2m0 6v2m0 2v2m1 -62v2m0 8v2m0 2v4m0 2v2m0 18v2m0 2v2m0 30v2m1 -56v2m0 28v2m0 8v2m0 2v2m0 8v2m1 -80v2m0 4v4m0 6v2m0 30v2m0 8v2m0 2v2m1 -54v2m0 46v2m0 18v2m1 -74v2m0 28v2m0 38v2m2 -66v2m0 6v2m0 2v2m0 8v2m0 8v2m0 6v2m0 18v4m1 -70v2m0 34v6m0 16v2m0 12v2m1 -58v2m0 8v2m0 2v2m0 4v2m0 10v6m0 12v2m1 -76v2m0 48v2m0 6v4m1 -64v8m0 2v2m0 42v2m0 4v2m0 20v2m1 -22v2m0 12v2m1 -42v2m0 26v4m0 4v2m1 -62v2m0 4v2m0 6v2m0 4v2m0 2v2m0 6v2m0 10v4m1 -50v2m0 22v2m0 2v2m0 18v4m1 -50v2m0 16v2m0 24v2m0 2v2m0 4v2m0 4v2m1 -74v2m0 62v2m0 16v2m1 -80v2m0 26v4m0 18v2m0 14v2m0 8v2m1 -58v2m0 56v2m1 -54v2m0 38v2m0 4v2m1 -72v2m0 2v2m0 6v2m0 56v4m1 -68v2m0 36v2m0 12v2m1 -14v2m0 6v2m0 2v4m0 10v2m1 -78v2m0 4v2m0 6v2m0 14v2m0 2v2m0 2v2m0 2v2m0 2v2m2 -32v2m0 20v2m0 16v2m1 -48v2m0 6v2m0 20v2m0 6v2m0 4v2m0 4v2m0 6v2m0 10v2m1 -70v2m0 42v2m0 4v2m0 10v2m1 2v4m1 -80v2m0 8v2m0 8v4m0 18v2m0 10v2m0 4v2m1 8v2m1 -74v2m0 46v2m0 4v2m1 -50v2m0 46v2m0 16v2m1 -54v2m0 52v2m0 4v2m1 -76v2m0 6v2m0 16v2m0 4v2m0 4v2m1 -40v4m0 4v2m0 26v2m0 12v4m0 10v2m1 2v2m2 -48v2m0 14v2m0 22v2m0 4v2m1 -48v2m0 32v2m0 10v2m1 -20v4m0 6v2m0 2v2m1 -68v4m0 6v2m0 38v2m0 8v2m0 2v4m1 -26v2m0 10v2m0 12v2m1 -10v2m0 2v2m1 -2v2m0 4v2m0 2v2m1 -18v2m0 6v2m1 -16v2m0 16v2m0 2v2m1 -2v4m3 -4v2m1 -24v2m0 8v4m2 -10v2m0 14v2m1 -18v2m0 4v2m0 6v2m0 4v2m1 -26v2m0 14v2m2 6v2m1 -76v2m0 2v2m0 2v2m0 40v2m0 6v2m1 -58v2m0 20v2m0 6v2m0 2v2m0 2v2m0 12v2m0 2v2m0 14v2m1 -84v2m0 4v2m0 32v4m0 6v4m1 -52v2m0 62v2m0 8v2m1 -62v2m0 34v2m0 12v2m0 2v2m1 -72v2m0 14v2m0 24v2m0 8v2m0 20v2m1 -18v2m1 -44v2m0 8v2m0 24v2m0 2v2m0 8v2m0 4v2m0 6v2m3 -10v4m0 4v2m1 -46v4m0 14v4m1 -42v2m0 36v2m0 2v2m0 8v2m0 2v4m1 -46v2m0 26v2m0 14v2m1 -66v2m0 6v2m0 14v4m0 22v6m0 2v2m1 -48v2m0 12v2m0 6v2m0 18v2m1 -12v2m0 18v2m0 6v2m1 -54v2m0 12v2m0 10v2m0 6v2m0 6v2m1 -62v2m0 22v2m0 8v4m0 2v2m0 2v6m0 10v2m1 -48v2m0 20v2m0 24v2m1 -46v2m1 -6v2m0 4v4m0 38v2m0 6v2m1 -70v2m0 16v2m0 10v2m0 12v4m1 -20v2m0 10v4m0 2v2m0 12v2m1 -70v2m0 24v2m0 8v2m0 20v2m1 -24v8m0 6v2m0 2v2m0 14v2m1 -52v2m0 18v8m0 6v2m0 2v2m0 10v2m1 -40v2m0 2v4m0 6v2m0 12v2m0 4v2m1 -28v2m0 10v2m1 16v2m1 -48v2m0 12v4m0 28v2m1 -78v2m0 64v2m1 -12v2m1 -24v2m0 8v2m0 16v2m0 6v2m0 2v2m0 2v2m1 -44v2m0 8v2m0 2v6m1 24v2m1 -76v2m0 24v2m0 10v2m0 32v2m1 -54v2m0 20v2m0 24v2m1 -64v2m0 10v2m0 2v2m0 26v2m0 2v2m0 4v4m1 -64v2m0 18v2m1 -28v2m0 46v2m1 -28v2m0 2v2m0 20v2m1 -28v2m0 2v2m0 36v2m0 2v6m1 -62v4m0 4v2m0 8v2m0 18v2m1 -44v2m0 4v4m0 20v2m0 2v2m0 24v4m1 -72v2m0 28v2m0 2v2m1 -30v2m0 12v2m0 28v2m0 4v2m0 2v2m0 18v2m1 -80v2m0 36v2m0 6v2m0 18v2m1 -70v2m0 2v4m0 2v2m0 10v2m0 18v4m1 -14v2m0 12v2m0 22v2m1 -36v2m0 6v2m0 10v2m1 -42v2m0 36v2m0 2v2m1 -2v2m1 -52v2m0 6v2m0 10v2m0 4v2m0 24v2m0 4v2m1 -50v2m0 50v2m0 6v2m1 -78v2m0 58v2m1 -58v2m0 48v2m1 -54v2m0 2v2m0 2v2m0 12v2m0 10v2m0 30v2m1 -56v4m0 16v2m0 32v2m0 8v2m1 -66v4m0 32v2m0 8v2m0 2v2m0 14v2m1 -74v4m0 8v2m0 20v2m0 2v4m0 2v2m0 2v2m0 6v2m0 14v2m1 -76v2m0 6v4m0 12v2m1 2v2m0 44v2m1 -28v2m1 18v2m2 -12v4m0 10v4m1 -12v2m0 2v2m1 -48v2m0 26v2m1 -50v2m0 16v2m0 48v2m1 -42v2m3 12v2m0 4v2m0 4v4m0 2v2m1 -18v4m0 18v2m2 -14v4m0 10v2m1 -20v2m0 4v2m1 -14v2m0 16v4m1 6v2m1 -78v2m1 -4v2m0 2v2m0 38v2m0 6v2m1 -12v2m0 20v2m1 -68v2m0 4v4m0 26v2m0 6v2m0 26v2m1 -34v2m0 4v2m1 -2v2m1 -10v2m0 20v2m0 10v4m1 -78v2m0 42v2m0 16v2m0 10v2m1 -66v2m0 2v2m0 24v2m2 -30v2m0 34v2m0 8v2m1 -10v2m0 30v2m1 -32v2m0 8v2m0 2v2m1 -64v2m0 54v2m0 12v2m1 -20v2m1 -52v2m0 36v2m0 2v2m1 -50v2m0 8v2m0 34v4m0 8v2m1 -56v2m1 68v2m1 -6v2m0 2v2m0 4v2m1 -2v2m1 -12v2m0 8v2m1 -38v2m0 4v4m0 2v2m0 6v2m0 12v2m3 -32v2m0 32v2m2 -28v2m0 2v2m0 12v2m0 4v2m2 -16v2m0 4v2m0 4v2m1 -40v2m1 6v4m0 2v2m0 18v4m1 -30v4m0 4v2m0 10v2m0 6v2m1 -18v2m0 8v2m1 -22v2m0 8v2m0 4v2m0 4v2m1 -20v6m0 8v2m0 2v2m1 -24v2m0 4v2m1 20v2m1 -40v2m1 12v4m0 20v2m1 -28v4m0 8v2m0 2v4m1 -16v2m2 -14v4m0 10v2m0 14v4m1 -34v2m1 -32v2m0 18v4m0 4v2m0 38v2m1 -84v2m0 6v2m0 46v2m4 8v2m0 4v2m5 -6v2m0 4v2m0 2v2m1 -18v2m0 4v2m0 12v2m2 -82v2m1 -4v2m0 10v2m1 -12v2m0 12v2m0 14v2m1 -30v2m0 8v2m3 -12v2m0 10v2m1 -8v2m0 24v2m1 -30v2m1 72v2m1 -68v2m0 6v2m1 -4v2m0 4v2m0 10v2m1 -40v2m0 10v2m1 -14v2m0 52v2m1 -46v2m0 2v2m1 4v2m1 58v2m1 -56v2m0 2v2m2 -8v2m0 10v2m0 4v2m1 -18v2m1 0v2m2 8v4m1 -6v2m0 38v2m1 -52v2m2 0v4m0 44v2m2 -54v2m0 14v2m2 -18v2m1 -28v2m1 18v2m2 56v2m1 -52v2m0 14v2m1 -14v2m0 46v4m1 -4v4m2 -58v2m3 54v2m1 -66v2m1 -18v4m0 6v2m0 66v2m1 -80v6m0 44v2m0 24v2m1 -80v2m0 32v2m0 2v2m0 10v2m0 2v2m1 -22v2m0 2v2m0 36v2m1 -58v2m0 14v2m0 16v2m0 24v2m1 -78v2m0 74v2m1 -66v2m0 16v2m0 20v2m1 -28v2m0 18v2m1 -50v2m1 0v2m0 2v2m0 2v2m0 2v4m1 -20v2m0 22v2m1 -12v2m0 22v4m0 8v2m0 28v2m1 -82v4m0 26v2m0 26v2m0 22v2m1 -62v2m0 8v2m12 6v2m0 4v4m0 26v2m1 -12v2m0 4v2m1 -34v2m1 -2v2m0 16v2m0 6v2m1 8v2m1 -2v4m1 -8v2m0 2v2m1 -38v2m0 6v2m0 24v2m1 -12v2m0 12v2m2 -28v2m0 8v2m1 18v2m1 -20v2m1 -24v2m0 18v2m1 -10v2m1 4v2m1 -20v2m0 38v2m1 -2v2m1 -26v2m0 6v2m0 2v2m1 -30v2m0 14v2m1 -4v4m0 12v2m1 -12v2m1 8v2m0 2v2m1 -22v2m0 16v2m1 -30v4m0 2v2m0 4v2m0 14v2m1 -30v2m0 22v2m3 6v2m1 -42v2m0 2v2m0 30v2m0 2v2m2 -36v2m1 30v2m1 -44v4m1 36v2m2 2v2m1 -16v2m0 10v2m0 2v4m1 -12v4m0 6v2m3 -38v2m0 22v2m1 -4v2m2 -24v2m0 6v2m1 -6v2m0 20v2m1 -4v2m0 6v2m1 -24v4m0 12v2m1 2v2m1 -34v2m0 28v2m1 6v2m1 -36v2m1 10v2m0 18v2m2 -14v4m1 -28v2m0 28v2m2 -28v2m2 26v2m1 4v2m2 -30v2m2 -20v2m0 10v4m0 22v2m1 -28v2m0 4v2m0 20v2m1 -34v2m0 22v2m0 2v2m0 2v2m1 -30v2m1 28v2m3 -22v2m1 -48v2m0 50v2m0 2v2m0 6v2m1 -70v2m0 2v2m0 52v2m1 -8v2m1 -10v2m2 24v2"/>
<path stroke="#00fff7" stroke-width="1" fill="none" d="M142.5 184v2m1 -6v2m0 2v2m0 4v2m0 46v2m1 -58v2m0 10v2m0 20v4m0 22v2m0 2v2m1 -70v4m0 42v2m0 14v2m1 -40v2m0 22v2m0 12v2m1 -22v2m0 4v2m0 16v2m1 -40v2m0 2v2m0 24v4m1 -62v2m0 22v2m0 4v2m0 26v6m0 2v2m1 -38v2m0 22v2m0 14v2m1 -68v2m0 6v2m0 20v2m0 24v2m0 2v4m1 -72v2m0 22v2m0 14v2m1 -26v4m0 6v2m0 44v2m0 2v2m1 -70v2m0 16v2m0 2v2m0 4v2m0 2v2m0 34v2m1 -54v2m0 16v2m0 18v2m0 12v2m1 -70v2m0 26v2m0 6v2m0 8v2m0 14v2m1 -78v2m0 14v2m0 2v2m0 4v2m0 34v4m0 2v2m1 -60v4m0 36v2m1 -22v2m0 44v4m0 2v2m1 -66v2m0 36v2m0 10v2m0 4v2m0 6v2m1 -64v4m0 18v2m0 10v2m1 -54v2m0 2v2m0 14v2m0 6v2m0 4v2m0 18v2m1 -56v2m0 20v2m0 2v2m0 10v2m0 16v2m1 -46v2m0 2v2m0 8v2m0 4v2m0 36v2m1 -52v2m0 28v2m0 22v2m1 -74v2m0 8v2m0 4v4m0 20v2m0 10v2m0 2v2m0 18v2m1 -72v4m0 48v2m0 8v4m1 -68v2m0 8v2m0 4v2m0 22v2m0 6v2m0 10v2m0 2v4m0 4v2m1 -78v2m0 4v2m0 20v2m0 16v2m0 14v2m0 12v2m1 -28v2m0 22v2m1 -70v2m0 26v2m1 -38v2m0 8v2m0 64v2m1 -80v2m0 16v2m0 6v8m0 6v2m0 8v2m1 -44v2m0 10v2m0 58v2m1 -58v2m0 6v2m0 18v2m1 -52v2m0 6v2m0 10v4m0 4v4m0 18v2m0 14v2m0 8v2m1 -62v2m0 6v2m0 50v2m1 -62v2m0 8v4m0 30v4m1 -6v2m0 2v2m0 10v6m1 -60v2m0 2v2m0 24v2m0 4v2m1 -52v2m0 16v2m0 14v2m0 10v2m0 16v2m1 -72v4m0 14v2m0 6v2m0 22v2m0 2v2m1 -50v2m0 16v2m0 2v2m0 4v4m0 34v2m0 4v2m1 -82v2m0 6v2m0 18v2m0 4v2m0 4v2m1 -26v2m0 8v2m0 14v2m0 16v4m0 2v2m1 -52v2m0 12v2m0 26v2m0 6v2m1 -60v2m0 14v2m0 6v2m1 -20v2m0 2v2m0 48v2m0 12v2m1 -34v2m0 14v2m1 -54v2m0 4v2m0 12v2m0 12v2m0 28v2m1 -72v4m0 8v2m0 2v2m0 12v2m0 16v2m1 -46v2m0 8v2m0 8v4m0 2v2m0 22v2m0 4v4m0 4v4m2 -30v2m0 8v2m0 20v2m1 -38v2m0 4v2m0 2v2m0 2v2m0 20v2m1 -80v2m0 60v2m0 12v2m1 -78v4m0 4v2m0 30v4m0 2v2m0 30v2m1 -78v4m0 4v2m0 8v2m0 2v4m0 2v2m0 24v2m0 20v2m1 -76v4m0 4v2m0 24v2m0 18v2m0 12v2m1 -62v2m0 2v2m0 16v2m0 8v4m0 8v2m1 -52v2m0 52v2m1 -50v2m0 2v2m0 32v2m0 4v2m0 4v2m0 8v4m1 -22v2m0 12v2m1 -66v2m0 18v2m0 6v2m0 10v2m0 6v2m0 14v4m1 -66v2m0 36v4m0 18v2m1 -64v2m0 8v2m0 32v2m0 12v2m0 14v2m1 -78v2m0 4v2m0 12v2m0 2v2m0 20v2m0 2v2m1 -12v2m0 24v2m1 -72v4m0 26v2m0 12v2m0 14v2m0 12v2m1 -76v2m0 2v4m0 32v2m0 20v4m1 -64v2m0 2v2m0 2v2m0 30v2m0 4v2m0 18v2m0 4v2m0 2v2m1 -76v2m0 58v2m0 6v2m1 -76v2m0 20v2m0 6v4m0 2v4m0 40v2m1 -56v2m0 40v2m2 -50v4m0 28v2m0 10v2m0 6v2m0 6v2m1 -56v2m0 24v2m0 16v2m1 -4v2m1 -50v2m0 32v4m0 2v2m0 4v2m0 2v2m0 6v2m1 -32v2m0 24v2m1 -70v2m0 40v2m0 10v2m1 -56v2m0 54v2m1 -42v2m0 4v2m0 4v4m0 4v4m0 2v2m0 2v2m0 10v2m1 -58v2m0 2v2m0 16v2m0 32v2m0 2v2m1 -40v2m0 6v2m0 20v2m0 2v2m1 -64v2m0 10v2m0 22v2m0 20v2m0 12v2m0 6v2m1 -80v2m0 4v2m0 6v2m0 36v2m0 2v4m0 6v2m1 -50v2m0 18v2m0 24v4m0 6v2m0 2v2m1 -72v2m1 -8v2m1 36v2m0 6v2m0 26v4m1 -78v4m0 28v2m0 40v2m1 -72v2m0 10v2m0 12v4m0 8v4m0 18v2m1 -48v2m0 26v2m0 14v2m0 10v2m1 -74v2m0 14v2m0 18v2m0 18v2m0 4v2m1 -66v2m0 4v2m0 2v6m0 36v2m0 12v2m1 -62v2m0 24v2m0 12v2m0 22v2m0 2v2m1 -70v2m0 4v2m0 4v2m0 4v2m0 2v2m0 6v4m0 2v2m0 8v2m0 8v2m0 8v2m1 -12v2m1 -52v2m0 32v2m0 2v2m1 -50v2m0 2v2m0 22v2m0 26v2m0 6v2m1 -74v2m0 2v2m0 32v2m0 6v2m0 4v2m0 24v4m1 -54v4m0 26v6m0 4v2m0 6v2m1 -48v2m0 32v2m0 8v2m1 -32v2m0 2v2m0 6v2m0 10v2m1 -70v2m1 58v2m0 6v2m0 12v2m1 -84v2m0 62v2m0 2v2m1 -30v2m0 20v2m2 -2v2m1 -52v2m0 6v2m0 10v2m0 10v2m0 8v2m1 4v2m0 2v2m1 -56v2m0 16v2m1 -24v2m0 12v2m0 54v2m1 2v2m1 -16v2m1 -22v2m0 6v4m0 6v2m1 -66v2m0 2v2m0 26v2m0 32v2m1 -28v4m0 2v2m0 10v2m0 16v2m1 -74v2m0 2v2m0 44v2m0 16v2m0 8v2m1 -84v2m0 28v2m0 8v2m0 36v4m1 -82v2m0 12v2m0 4v2m0 14v2m0 10v2m0 14v2m0 2v2m1 -58v2m0 4v2m0 20v2m0 10v2m0 6v2m1 -62v2m0 14v2m0 10v2m0 8v2m0 20v2m1 -52v2m0 8v2m0 18v2m0 10v4m0 12v2m1 -50v2m1 -18v2m0 28v2m0 4v2m0 18v2m0 6v2m1 -54v4m0 6v2m0 6v2m0 22v2m0 6v4m1 -52v2m0 30v2m0 2v2m1 -56v2m0 6v2m0 2v2m0 48v2m0 4v2m0 2v4m1 -64v2m0 18v2m0 26v2m1 -50v2m0 14v2m0 38v2m1 -70v2m0 8v2m0 28v2m0 6v2m0 2v2m1 -54v2m0 2v2m0 14v2m0 4v2m0 32v2m1 -56v2m0 16v2m0 4v2m0 2v2m1 -22v2m1 -12v2m0 40v2m0 2v2m1 -18v2m0 6v2m0 4v4m0 28v2m1 -70v2m0 10v2m0 2v2m0 2v2m0 16v2m1 -40v2m0 42v2m1 -36v2m0 8v2m0 4v2m0 36v6m1 -76v2m0 22v2m0 10v2m0 16v2m0 6v2m0 4v2m1 -76v2m0 2v2m0 10v2m0 38v2m0 12v2m1 -42v2m0 2v2m0 4v2m0 16v2m1 -54v2m0 6v2m1 6v2m0 10v2m0 4v2m1 -42v2m0 38v2m0 14v2m0 14v2m1 -38v2m0 4v2m0 32v2m1 -20v2m0 12v2m0 2v2m1 -36v2m0 2v2m0 4v2m0 16v2m1 -22v2m2 -52v2m0 46v2m0 14v2m1 -54v2m0 22v2m0 18v2m0 18v2m1 -48v2m0 48v2m1 -70v2m0 34v2m0 26v2m1 -12v2m1 -40v2m0 20v2m0 4v2m0 6v2m0 12v2m1 -72v2m0 34v2m0 4v2m0 26v2m1 -58v2m0 2v2m0 8v2m0 34v2m0 2v2m1 -54v2m0 8v2m0 4v4m0 18v2m1 -6v2m0 10v2m1 -14v2m0 8v4m1 -26v2m0 34v2m1 -38v2m0 32v2m1 -28v2m0 4v2m0 10v2m1 -42v2m0 30v2m0 10v2m1 -40v2m0 12v2m0 18v2m1 -14v2m2 -22v2m0 8v2m0 4v2m1 -52v2m0 24v2m1 14v4m0 6v2m0 22v2m1 -34v2m0 30v2m1 -78v2m0 2v2m0 18v2m0 4v2m0 6v2m0 36v2m1 -32v2m0 4v2m1 -14v2m0 6v2m0 24v2m1 -32v2m0 6v2m1 -60v2m0 24v2m0 12v4m1 -40v4m0 70v4m1 -72v2m1 12v2m0 20v2m0 14v2m0 12v2m1 -32v2m0 14v2m1 -22v2m0 8v2m0 2v2m0 10v4m0 2v2m0 2v2m1 -24v4m0 4v4m1 -62v2m0 30v4m0 4v2m0 28v2m0 4v2m1 -72v2m0 42v2m0 20v4m1 -82v2m0 18v2m0 24v2m0 6v4m0 10v2m1 -64v2m1 36v2m0 6v2m0 12v6m1 -6v2m1 -68v2m0 52v2m0 2v2m1 -24v2m0 4v2m0 14v2m0 20v4m1 -38v2m1 -20v2m0 42v2m1 -42v2m0 16v2m0 14v2m1 -32v2m0 8v2m0 14v2m0 2v2m0 12v2m1 -40v2m0 12v2m1 -20v2m0 6v4m0 22v2m1 -26v2m0 2v2m0 10v2m1 -28v4m0 36v2m1 -20v2m1 -30v2m0 4v2m0 4v2m0 10v2m1 -42v2m0 12v2m0 2v2m1 26v2m0 16v2m1 -66v2m1 -14v2m0 4v2m0 4v4m0 60v2m1 -44v2m1 -40v2m0 18v2m0 6v2m0 30v4m0 2v2m1 -56v2m0 34v2m0 2v2m0 28v2m1 -60v2m0 46v2m0 8v2m1 -62v2m0 2v2m0 50v2m1 -56v2m0 34v2m1 -18v2m0 10v2m1 18v4m1 -42v2m1 -2v2m0 26v2m0 10v2m0 2v2m1 -76v2m0 54v2m0 8v2m0 4v2m1 -64v2m0 10v2m0 8v2m0 20v2m0 4v2m1 -36v2m0 2v2m0 18v2m1 -42v2m0 2v2m0 40v2m1 -58v2m0 42v2m0 8v2m1 -46v2m0 16v2m0 24v2m0 14v2m1 -56v2m0 24v2m0 18v4m1 -10v2m1 -66v2m0 4v4m0 46v2m0 8v2m0 10v2m1 -36v2m0 10v2m0 10v2m0 8v2m1 -74v2m0 6v2m0 46v2m0 6v2m1 -68v2m0 14v2m0 8v2m0 8v4m0 8v4m0 16v2m1 -46v2m0 18v2m0 14v2m0 16v2m1 -84v2m0 20v2m0 42v2m0 12v4m1 -14v4m1 -6v2m1 -68v2m0 70v2m1 -54v2m0 4v2m0 12v2m0 16v2m0 8v2m0 2v2m1 -74v2m0 4v2m0 12v2m0 38v2m0 8v4m1 -54v4m0 2v2m0 2v2m0 6v2m0 4v2m0 2v2m0 12v2m1 -62v2m0 8v4m0 8v2m0 4v2m0 2v2m0 6v4m0 4v4m0 22v2m1 -64v2m0 4v2m0 12v2m0 12v2m0 14v2m0 4v2m1 -74v2m0 4v2m0 26v2m0 36v2m0 6v2m2 -70v2m0 10v2m0 2v2m1 36v2m1 -12v2m0 4v2m1 14v2m1 -76v2m0 42v2m0 8v2m0 12v2m1 -60v2m0 6v2m0 48v2m0 2v2m1 -38v2m0 26v2m0 10v2m2 -24v2m0 16v2m2 -76v4m0 62v2m1 -4v2m0 4v2m1 2v4m1 -72v2m0 56v2m0 12v2m1 -16v2m1 -62v2m0 14v2m0 4v2m0 16v2m0 4v4m0 8v2m1 -8v2m0 2v2m2 14v2m1 -56v2m0 52v2m1 -68v2m0 20v6m0 26v2m1 -18v2m1 14v2m0 4v2m2 -16v2m0 18v2m1 -12v2m1 0v2m1 -12v2m0 10v2m1 8v2m1 -22v2m1 -4v2m0 8v2m0 6v2m0 2v2m1 -24v2m1 4v4m3 10v2m2 -18v2m1 -60v2m0 48v2m0 6v2m0 4v2m0 6v2m1 -64v2m0 8v2m0 14v2m0 28v2m0 6v2m1 -74v2m0 2v2m0 6v2m0 8v2m0 42v2m1 -58v2m0 36v2m0 2v6m0 8v2m1 -64v2m0 4v2m0 16v2m0 10v2m0 14v2m0 2v2m0 6v2m1 -64v2m0 60v2m1 -64v2m0 14v2m1 -26v2m0 6v2m0 54v2m0 4v2m1 -68v2m0 8v2m0 26v2m0 32v2m1 -62v2m0 12v2m0 6v4m0 8v2m0 4v2m0 18v2m1 -56v2m0 4v2m0 8v2m0 12v2m0 10v2m1 -32v2m0 20v2m1 -28v2m0 6v4m0 4v2m1 -54v4m0 24v2m0 2v2m0 10v2m1 -22v2m0 6v2m0 6v2m0 10v2m0 18v2m0 6v2m1 -78v2m0 22v2m0 4v2m0 16v2m1 -50v2m0 10v4m0 26v2m0 16v2m0 12v2m1 -64v2m0 8v2m0 8v2m0 8v2m0 26v2m0 6v2m1 -76v2m0 6v2m0 16v2m0 18v2m0 8v2m1 -38v2m0 26v2m0 14v2m1 -22v2m1 -44v2m0 68v2m1 -70v2m0 10v2m0 12v2m0 40v2m1 -68v2m0 2v2m0 8v4m0 8v2m1 -38v2m0 12v2m0 20v2m0 18v2m1 -30v2m0 18v2m1 -52v2m0 54v2m0 6v2m1 -46v2m0 2v2m0 4v2m0 12v4m0 24v2m1 -62v2m0 26v2m0 6v2m0 2v2m0 8v2m0 4v2m0 6v4m1 -76v2m0 18v2m0 42v4m0 4v2m0 2v2m1 -24v2m0 6v4m1 -58v2m0 16v2m0 20v2m1 -54v2m0 32v2m0 2v4m0 2v4m0 10v2m1 -30v2m0 8v2m0 12v2m0 8v2m1 -40v4m0 26v6m0 2v2m0 12v2m1 -82v2m0 20v2m0 28v2m0 2v4m0 22v2m1 -84v2m0 8v2m0 52v2m0 2v2m0 6v2m1 -48v2m0 38v4m0 2v2m1 -70v2m0 16v2m0 12v2m0 28v2m0 2v2m1 -38v2m0 10v2m1 -48v2m0 28v2m0 4v2m0 12v2m0 2v4m0 18v2m1 -74v2m0 18v2m0 24v2m0 12v2m1 -66v2m0 8v2m0 18v2m0 22v2m1 -38v2m0 16v2m0 10v2m1 -30v2m0 8v2m0 24v2m0 16v2m1 -36v2m0 16v2m0 4v2m0 6v2m0 4v2m1 -58v2m0 44v2m0 4v2m1 -80v2m0 60v2m0 6v2m1 -70v2m0 20v2m0 42v2m0 12v2m1 -84v2m0 4v2m0 4v4m0 8v2m0 32v2m0 20v2m1 -74v2m0 2v2m0 8v2m0 28v2m0 6v2m1 -20v2m0 4v2m0 6v2m1 24v2m1 -64v2m0 56v2m1 -60v2m0 10v2m1 -34v2m0 16v2m0 6v2m0 8v2m0 22v2m1 -60v2m0 10v2m0 20v2m0 30v2m1 -70v2m0 58v2m1 -56v2m0 14v2m0 26v2m0 8v6m0 10v2m0 4v2m1 -34v2m0 6v2m0 4v2m1 -60v2m0 68v2m1 -68v2m0 8v2m0 4v2m0 52v2m1 -70v2m0 38v2m0 8v2m0 4v2m1 -42v2m0 46v2m0 4v2m1 -28v2m0 2v2m0 10v2m1 -18v2m1 -6v2m1 -6v2m0 8v2m0 4v2m1 -2v2m0 10v2m1 -28v2m0 4v2m0 22v2m1 -34v2m0 2v2m0 4v2m1 -30v2m0 26v2m1 -12v2m0 28v2m1 -12v2m0 4v2m1 -6v4m1 -20v2m0 4v2m0 6v2m1 -18v2m1 2v2m0 20v2m1 -16v2m0 2v2m1 -16v2m1 -6v4m0 10v2m0 16v2m1 -78v2m0 52v2m1 -56v2m0 2v2m0 40v2m0 2v2m0 6v2m1 -62v2m0 60v2m0 8v2m1 -72v2m0 62v2m0 2v2m1 -76v2m0 4v2m1 -2v2m0 2v2m0 56v2m1 -68v2m0 36v2m0 28v2m1 -70v2m0 2v2m0 36v2m0 4v2m1 -48v2m0 10v2m0 24v2m1 -44v2m0 76v2m1 -80v2m0 4v2m0 36v2m1 -38v2m0 34v4m0 2v2m0 2v2m1 -4v2m0 22v2m0 2v2m1 -42v2m1 40v2m1 -80v2m0 2v2m0 46v2m0 4v2m0 12v2m1 -36v2m0 2v2m0 28v2m1 -28v2m0 24v2m1 -32v2m0 4v4m1 -12v2m0 36v2m1 -18v2m1 -20v2m0 4v2m0 2v2m0 2v2m0 2v2m0 4v2m0 8v2m1 -40v2m0 4v2m0 20v2m1 -30v2m0 16v2m0 10v2m0 2v4m1 -2v2m1 -28v6m0 6v2m0 4v4m0 6v2m1 -42v2m0 22v2m1 -12v2m0 2v2m1 -12v2m0 4v2m0 4v2m0 4v2m1 -8v2m0 6v2m1 -16v2m0 4v4m0 14v2m1 -28v2m0 10v2m0 10v2m1 -32v2m0 16v4m0 12v2m1 -30v2m0 6v2m0 14v4m1 -32v2m1 0v2m0 8v2m1 -8v2m2 -8v2m0 20v4m0 6v2m1 -34v2m0 20v2m1 -24v4m0 28v2m1 -26v2m0 22v2m2 -84v2m0 44v2m1 -38v2m0 8v2m0 28v2m0 8v2m0 14v2m4 -10v2m9 -64v4m0 46v2m1 -56v2m1 2v2m0 26v2m1 -30v4m3 4v2m0 8v2m0 8v2m0 10v2m1 -34v2m1 -10v2m0 12v2m0 16v2m1 -24v2m1 -8v2m0 28v2m1 -6v2m0 4v2m3 -38v2m0 12v2m1 -8v2m0 8v2m1 -6v2m0 12v2m3 -36v2m0 4v2m0 2v2m2 8v4m0 2v2m2 16v2m0 30v2m2 -60v2m2 56v2m2 0v2m1 -78v4m0 76v2m4 -4v2m1 -78v2m0 18v2m1 6v2m1 -22v6m0 16v2m1 -20v2m4 -14v2m0 72v2m3 -60v2m0 6v2m0 4v2m0 12v2m1 -34v2m0 10v2m0 2v2m1 -28v4m1 -8v2m0 50v2m0 24v2m1 -50v2m1 -16v2m0 16v2m0 4v2m0 12v2m4 -4v2m2 -54v2m0 28v2m0 8v2m0 12v2m1 -50v2m0 2v2m0 8v2m0 12v2m0 12v2m0 24v2m11 -32v2m0 10v2m1 -4v2m1 14v2m1 -34v2m0 20v2m1 12v2m1 0v2m1 -30v2m0 30v2m1 -10v2m1 2v2m2 -40v2m0 16v2m0 8v2m1 -30v2m0 30v2m1 -18v4m1 -18v2m0 6v2m0 4v2m0 6v2m1 -22v2m0 4v4m0 4v2m0 8v2m1 -18v2m0 12v2m2 -26v2m1 36v2m1 -34v2m1 -8v4m0 18v2m0 6v2m1 -30v2m0 8v2m2 2v2m0 12v2m1 -16v2m0 8v4m0 2v2m1 -26v2m0 30v2m1 -28v2m1 -14v2m0 2v2m1 0v2m0 30v2m1 -38v2m0 8v2m0 2v2m1 -18v2m0 14v2m1 -18v2m1 26v2m1 0v2m0 2v2m2 -12v2m0 12v2m1 -40v2m0 10v2m1 -12v2m2 10v2m1 -10v6m1 -8v2m1 -6v2m2 2v2m1 8v6m1 -20v2m1 0v2m0 28v2m0 2v2m1 -38v2m2 -2v2m0 10v2m1 0v2m3 -8v2m1 16v4m2 -28v2m1 0v2m0 2v2m0 10v2m0 6v2m1 -18v2m1 14v2m1 -34v2m0 28v2m0 8v2m1 -22v2m1 12v2m2 -4v2m2 -30v2m0 14v2m0 20v2m1 -18v2m0 2v2m1 -14v2m1 -12v2m0 8v2m1 -16v2m0 12v2m0 8v2m1 -18v2m2 0v4m0 8v2m1 -4v2m0 8v2m1 -10v2m0 6v2m2 -64v2m0 38v2m0 2v2m1 -48v2m0 70v2"/>
<path stroke="#000000" stroke-width="1" fill="none" d="M142.5 188v2m2 -20v2m1 -4v2m2 -2v2m0 40v2m2 -26v2m0 4v2m5 14v2m2 -38v2m4 22v2m4 -10v2m1 24v2m8 -40v2m1 34v2m1 -36v2m0 36v2m1 -46v2m0 38v2m0 4v2m2 -52v2m1 4v2m1 4v2m1 18v2m1 10v2m6 10v2m9 -58v2m17 74v2m2 -78v2m0 4v4m3 2v2m1 -10v4m0 2v2m4 -2v2m1 70v2m14 -42v2m0 2v2m3 -18v2m0 8v2m1 -30v2m0 26v2m0 4v2m1 -38v2m0 8v2m0 10v2m0 4v2m0 2v2m1 -30v2m0 14v2m1 -20v2m0 4v2m0 2v2m0 4v2m0 4v2m0 12v2m0 30v2m1 -72v2m0 4v2m1 -12v2m0 14v2m0 30v2m2 -14v2m1 -12v2m0 8v2m0 2v2m2 8v2m1 -4v2m1 -14v2m9 -2v2m3 0v2m2 -6v2m2 -2v2m0 14v2m1 -58v2m0 50v2m12 18v2m1 6v2m2 -32v2m2 -52v2m0 8v2m0 4v2m0 38v2m1 -48v2m0 20v2m1 6v2m0 8v2m0 30v2m1 -68v2m2 2v4m0 4v2m1 8v2m7 -38v2m0 16v2m0 4v2m1 2v2m0 2v2m1 -36v2m0 22v6m0 6v2m1 -24v2m0 12v2m1 -26v2m0 14v2m1 -6v2m0 10v2m0 12v2m2 -14v2m1 -32v2m0 2v2m0 18v2m1 2v2m1 -20v6m0 6v2m0 8v2m0 10v2m2 -30v2m0 8v2m0 4v2m0 2v2m1 -24v2m0 8v2m1 -22v2m0 22v2m1 -26v2m0 24v2m0 2v2m1 -26v2m0 14v2m0 2v2m0 10v2m1 2v2m1 -24v2m0 2v2m1 -6v2m0 16v2m1 -38v2m0 20v2m0 8v2m1 -18v2m0 12v2m1 -34v4m0 30v2m1 -40v2m0 10v2m0 4v2m0 4v2m0 6v2m0 4v2m3 -22v2m1 -4v4m0 24v2m1 -46v2m0 12v2m0 8v2m0 12v2m1 -20v2m0 2v2m0 10v2m1 -38v2m0 6v2m0 12v2m0 12v2m1 -28v2m0 38v2m1 -42v2m0 6v2m2 -16v2m0 4v2m0 2v2m1 -16v2m1 8v2m0 12v2m1 -16v2m0 8v4m0 2v2m1 -24v2m0 16v2m0 2v2m0 26v2m1 -54v2m1 -2v2m0 24v2m0 50v4m1 -80v2m0 16v2m1 4v2m1 -8v4m1 -10v2m0 8v2m4 -6v2m1 -4v2m1 -8v2m1 -8v2m1 -10v2m1 0v2m0 2v4m0 2v2m0 2v2m0 8v2m0 54v2m1 -70v2m1 -14v2m0 14v2m2 -8v4m3 -16v2m7 80v2m55 -68v2m7 -18v2m6 22v2m1 -22v2m3 12v2m2 -20v2m1 6v2m3 -6v2m0 6v2m6 44v2m0 2v2m2 -52v6m0 2v4m1 -18v2m2 4v2m2 -6v2m0 10v2m0 54v2m23 -8v2m2 -2v2m6 -4v2m1 -10v2m1 2v2m4 -12v2m7 12v2m8 -12v2m4 2v2m1 6v2m3 -12v2m0 6v2m1 -20v2m1 16v2m3 -6v2m3 -16v2m1 -6v2m0 16v2m35 -62v2m1 -6v2m2 12v2m8 -2v2m1 6v2m1 -24v2m0 14v2m0 6v2m1 -12v2m1 0v2m1 -8v2m1 12v2m1 -10v2m1 6v2m3 -16v2m0 12v2m1 -22v2m0 4v2m1 -8v2m0 12v2m1 -12v4m0 4v2m2 -8v2m0 10v2m1 -22v2m1 0v2m0 16v2m1 -4v2m1 -18v4m0 8v2m1 -18v2m1 12v2m0 6v2m2 -12v2m1 -8v4m0 2v2m0 2v4m0 2v2m1 -10v2m1 -10v4m0 8v2m27 38v2m1 -18v2m1 14v2m2 -2v2m0 4v4m0 2v4m1 -20v2m1 -12v2m0 8v2m0 2v2m1 4v2m1 -12v2m1 -12v2m2 -2v2m5 12v2m0 4v2m1 -14v2m3 0v2m3 -4v2m1 12v2m2 -6v4m4 -6v2m1 2v2m1 -16v2m0 18v2m1 -18v2m0 4v2m3 -12v2m0 14v4m2 -6v2m1 -10v2m0 2v2m4 -8v2m3 4v2m1 -12v2m0 2v2m2 -4v2m1 0v2m1 8v2m1 -10v2m1 -6v4m2 -2v4m0 2v2m2 -12v2m1 12v2m1 -6v2m0 10v2m2 -22v2m0 14v2m3 -12v2m0 8v2m6 -8v2m3 -4v2m4 -8v2"/>
<path stroke="#00ff3a" stroke-width="1" fill="none" d="M142.5 196v6m0 26v2m0 4v2m0 14v2m1 -60v2m0 18v2m1 14v2m2 -26v2m2 40v2m3 -56v4m0 2v2m1 -8v2m0 14v2m0 8v2m1 -4v2m0 16v2m0 2v2m0 2v4m2 -34v2m0 28v2m1 -38v2m0 22v2m1 -34v4m0 38v4m1 -44v2m0 28v2m1 -12v2m0 14v2m1 -10v2m0 2v4m1 -52v2m0 8v2m0 36v2m0 4v2m0 4v2m1 -52v2m0 32v2m0 4v6m1 -68v4m2 66v2m2 -54v6m0 38v2m1 -18v2m1 -4v2m0 14v2m1 -40v2m0 38v2m1 -68v2m0 30v2m0 6v2m0 24v2m1 -48v2m0 38v4m0 10v2m1 -52v2m0 34v2m1 -4v2m1 0v2m1 10v2m2 -64v2m1 8v2m0 10v2m2 -30v2m0 74v4m1 -78v2m0 22v2m0 32v2m0 2v2m1 -56v2m0 24v2m1 32v2m1 -76v2m0 70v2m0 2v2m2 -62v2m0 38v2m1 -38v2m0 48v2m1 -64v2m0 44v2m0 4v2m0 8v2m1 -42v4m0 28v2m0 2v2m1 -66v2m1 2v2m0 28v2m1 -8v2m0 42v2m1 -4v2m0 6v2m1 -78v2m0 8v2m0 6v2m0 4v4m0 6v2m0 2v2m0 22v2m1 -46v4m0 4v2m0 2v4m0 26v2m1 -8v6m0 4v4m1 0v2m1 -72v2m0 16v2m0 28v2m1 -20v2m0 2v2m1 -22v2m0 8v2m0 40v2m1 -2v2m1 -46v2m0 22v2m1 -34v2m1 -2v4m0 2v2m0 4v2m0 6v2m0 30v2m2 -54v4m1 6v2m0 24v2m0 4v2m1 -34v2m0 6v4m1 -18v2m0 2v2m0 18v2m1 -28v2m0 8v4m0 4v2m0 4v2m1 -12v4m0 12v2m1 -36v2m0 4v2m1 2v2m0 10v2m0 6v2m0 6v2m1 -28v2m0 34v2m1 -28v4m1 -16v2m0 12v2m0 2v2m0 4v2m0 12v2m0 2v2m0 12v2m1 -64v2m0 18v2m0 6v2m0 10v2m0 12v2m1 -56v2m0 2v8m0 14v2m0 16v2m0 18v2m1 -64v4m0 4v4m0 6v2m0 22v2m1 -28v2m0 18v2m0 12v2m1 -26v2m1 -2v2m0 22v2m1 -66v2m0 20v2m0 6v2m0 2v2m0 4v2m0 6v2m0 14v2m0 2v2m1 -58v2m0 22v2m1 8v2m0 14v2m1 -44v2m0 4v2m0 6v2m1 -14v2m0 4v2m0 20v2m1 -52v2m0 2v2m0 20v2m0 8v2m0 10v2m0 4v2m0 12v2m1 -60v2m0 6v2m0 18v2m0 28v2m1 -60v2m0 22v2m0 22v2m0 2v2m1 -24v2m1 28v2m1 -38v2m0 28v2m1 -50v2m0 16v2m0 32v2m1 -72v2m0 20v2m0 46v2m1 -62v2m0 50v2m1 -48v2m0 10v2m0 6v2m0 24v2m1 2v2m0 10v2m1 -70v2m0 56v2m2 -12v2m3 -4v2m2 -4v2m2 -2v2m2 12v2m1 -56v2m0 44v2m0 6v4m0 2v2m1 -70v2m0 6v4m0 4v2m0 42v2m0 10v2m1 -54v2m0 30v2m0 4v2m1 -48v2m0 44v2m1 -56v2m0 46v2m0 4v2m1 -54v2m0 2v2m0 2v4m0 6v4m0 40v2m1 -76v6m0 20v2m1 -30v2m0 12v2m0 24v2m0 18v2m0 6v4m0 6v2m2 -22v2m1 -26v2m0 30v2m1 -30v2m1 -36v4m0 22v2m0 24v2m1 -10v2m0 16v2m0 4v2m1 -58v2m0 2v2m1 0v2m0 6v2m0 26v4m1 -46v4m0 36v2m0 10v4m0 2v2m0 4v2m2 -70v2m1 12v2m3 6v2m0 28v2m1 -2v2m0 2v2m0 4v2m2 -42v2m1 44v2m1 -60v2m1 -6v4m0 24v2m1 -46v2m0 48v2m1 -50v2m0 26v2m1 -2v4m0 40v2m1 -72v2m0 64v2m2 -68v2m0 2v2m0 56v2m1 -72v2m0 56v2m0 2v2m0 10v2m1 -18v2m0 8v2m1 -2v2m0 2v2m2 -8v4m1 -10v2m0 2v2m0 4v2m0 2v2m1 -74v2m0 2v4m1 -2v2m0 42v2m0 18v4m1 -32v2m0 28v2m1 -70v2m0 36v2m0 14v6m1 -58v2m0 30v2m0 14v2m0 12v2m0 6v2m1 -62v2m0 38v2m1 -54v2m0 10v2m0 4v2m0 14v2m0 6v2m1 -48v2m0 14v2m0 2v4m0 10v2m0 4v2m1 -44v2m0 16v2m0 42v2m5 0v4m3 -10v2m3 2v2m0 2v2m1 -20v2m1 -10v2m0 32v2m1 -4v2m1 -18v2m0 8v2m0 6v2m1 -6v4m2 -12v2m0 10v2m1 -12v4m1 -6v2m0 18v2m1 -2v2m1 -4v4m1 -32v2m0 12v2m1 -4v2m2 -14v2m2 8v2m1 -20v2m0 10v2m1 16v2m0 2v2m0 2v2m1 -6v2m2 -24v2m1 14v2m2 -4v2m2 0v2m0 4v2m1 -14v2m1 6v2m1 0v2m1 -8v2m1 -32v2m0 30v2m0 6v2m1 -30v2m0 8v2m1 -12v2m0 2v4m0 8v2m0 12v2m1 -36v2m0 20v4m0 4v2m1 -24v2m0 4v2m1 -6v2m0 14v2m1 -30v2m1 2v2m0 2v4m0 4v2m0 2v2m0 4v2m1 -46v2m0 4v2m0 6v2m0 8v2m0 4v2m0 2v2m0 10v2m1 -38v2m0 22v2m0 2v6m2 -40v2m0 8v2m0 24v2m1 -26v4m1 8v2m0 10v2m3 -22v2m0 20v6m0 2v2m1 -78v2m0 2v2m0 64v2m1 -24v2m0 8v2m1 -62v2m0 8v6m0 22v2m0 18v2m0 14v2m1 -68v2m0 34v2m0 10v2m0 22v2m1 -42v2m1 -34v4m0 32v4m0 4v4m0 10v2m0 4v2m1 -72v2m0 22v2m0 18v2m1 -44v2m0 8v2m0 26v2m0 4v2m1 -30v2m0 4v2m0 12v2m1 -30v4m0 2v2m0 2v6m0 10v2m1 -36v2m1 24v4m0 10v4m0 8v2m0 10v2m1 -56v2m0 6v2m0 38v2m0 4v2m1 -60v2m0 46v2m0 12v2m1 -60v2m0 6v2m0 20v2m0 2v2m0 28v2m1 -70v2m0 54v2m1 -54v2m0 24v2m0 14v2m0 6v2m1 -66v2m0 56v2m0 2v2m0 4v2m1 -36v2m0 26v2m0 8v2m1 -18v2m1 -36v2m0 8v2m0 4v2m1 -38v2m0 4v2m0 12v2m0 2v4m0 22v2m0 6v2m0 2v2m1 -30v4m0 14v4m0 2v2m0 2v2m1 -50v2m0 6v2m0 16v2m0 12v2m0 4v2m1 -62v2m0 6v2m0 4v4m0 4v2m0 4v2m0 16v2m0 18v2m0 12v2m1 -72v4m0 2v2m0 6v2m0 28v2m0 10v2m0 4v2m1 -52v2m0 14v4m0 2v2m0 20v2m0 4v2m1 -52v2m0 12v2m1 -26v2m0 48v2m1 -64v2m0 6v4m0 2v2m0 4v2m0 4v2m0 18v2m0 6v2m0 16v2m1 -74v2m0 28v2m0 16v4m0 2v2m0 6v2m1 -36v6m0 16v2m0 14v2m0 2v2m1 -50v2m0 4v2m0 4v4m0 18v2m0 4v2m1 -32v2m0 4v2m0 12v2m1 -28v2m0 28v2m0 4v2m1 -60v2m0 10v2m1 -8v2m0 10v2m0 28v2m0 16v2m1 -74v2m0 30v2m0 2v2m1 -28v2m0 8v2m0 24v2m0 22v2m1 -66v2m0 32v4m0 10v2m0 18v2m1 -54v6m0 14v2m1 -42v2m0 4v2m0 12v2m0 24v2m0 4v2m1 -40v2m0 14v2m0 14v2m1 -46v2m0 12v4m0 16v2m0 2v2m0 2v4m0 4v2m1 -32v2m0 28v2m0 8v2m1 -66v2m0 40v2m0 14v2m1 -56v2m0 68v2m1 -74v2m0 40v2m0 14v2m1 -20v4m0 2v6m0 2v2m0 16v2m1 -62v2m0 12v2m0 18v2m1 10v2m0 12v2m0 2v2m1 -10v2m0 8v2m1 -78v2m0 56v2m0 8v4m1 -52v2m0 30v2m1 -10v2m1 -42v2m0 2v2m0 2v2m0 16v4m0 32v2m1 -72v2m0 2v2m0 6v4m0 50v2m1 -52v2m0 2v2m1 -6v2m0 6v2m0 34v2m0 20v2m1 -32v2m0 6v2m0 12v2m1 -76v2m0 18v2m0 6v2m1 -6v2m0 30v2m0 2v2m1 -36v2m0 4v2m0 14v2m0 4v2m0 12v4m1 -68v6m0 20v2m0 14v2m1 -26v2m0 38v2m1 -32v2m0 16v2m1 -34v4m0 2v2m0 6v2m0 14v2m0 12v2m0 2v2m0 6v2m1 -54v4m0 8v2m1 -14v2m0 2v2m0 8v2m0 12v4m1 18v2m1 -18v2m1 -12v2m0 4v2m2 -4v6m1 -18v2m1 8v2m0 4v2m1 -28v2m1 18v2m0 10v2m1 8v2m2 -44v2m1 12v2m0 20v2m0 4v2m1 -32v2m0 6v2m1 0v2m1 -16v2m0 10v2m0 6v2m3 -22v2m0 20v2m1 -20v2m1 -12v2m0 10v2m0 6v2m1 0v2m0 2v2m1 -16v2m2 16v2m1 -20v2m2 -16v2m0 12v2m1 -8v4m0 40v2m1 -50v2m0 4v2m0 36v2m1 -48v2m0 20v2m1 -38v2m0 18v2m0 44v2m1 -46v2m1 -10v2m0 14v8m1 -50v2m0 52v2m0 2v2m0 4v2m0 2v2m1 -62v2m1 -4v2m0 6v2m0 26v2m0 32v2m1 -78v2m0 10v4m0 14v2m0 12v2m1 -44v4m0 4v2m0 2v2m0 2v2m0 12v4m0 4v2m1 6v2m0 2v2m0 16v2m1 -42v2m0 6v2m0 8v2m1 0v2m1 -34v2m0 44v2m1 -48v2m0 36v2m1 -20v2m1 -38v2m0 2v2m0 16v4m0 12v2m0 8v2m1 -14v10m0 4v2m1 -50v2m0 16v2m0 2v2m0 40v2m0 2v2m1 -34v2m1 -14v2m0 8v2m0 4v2m0 2v2m0 2v2m1 -48v2m0 2v2m0 4v2m0 8v2m0 2v2m0 18v2m0 12v2m0 10v2m1 -66v2m0 6v2m0 2v2m0 2v4m1 -12v2m0 14v4m0 18v2m0 12v2m2 -64v2m1 -4v2m0 22v6m0 2v2m0 34v2m1 -62v4m0 14v2m0 40v2m1 -82v2m0 46v2m0 4v4m2 -54v2m0 8v4m0 64v2m1 -70v2m0 10v2m1 -12v2m1 -10v2m0 4v2m0 12v2m0 2v2m1 -28v2m1 -4v4m0 24v2m0 8v2m0 2v2m1 -20v4m0 10v4m1 -8v4m1 -4v2m0 2v2m0 36v2m1 -54v2m0 4v2m0 4v2m0 28v2m1 -26v2m1 -24v2m0 8v2m0 10v2m0 8v2m1 -42v2m0 6v2m0 2v2m0 12v2m1 -32v6m0 2v2m0 8v2m1 -16v2m0 6v2m0 2v2m0 2v2m0 2v2m0 28v2m1 -56v2m0 58v2m0 8v2m1 -70v2m0 16v2m0 2v4m1 -28v2m0 24v2m0 4v2m1 -30v4m0 24v2m1 -34v4m0 12v2m0 2v2m0 8v2m1 -20v2m0 8v2m1 4v2m0 26v4m1 -46v4m1 -8v2m0 16v2m1 -4v2m1 -40v2m0 12v2m0 20v2m1 -18v2m1 -8v2m0 10v2m0 2v2m0 2v2m0 6v2m1 -42v2m0 28v2m0 48v2m1 -82v2m0 2v2m0 6v2m0 4v2m1 -4v2m0 2v2m0 8v4m0 2v2m1 -28v2m0 2v2m0 14v2m1 -32v2m0 2v2m0 24v4m0 4v2m1 -20v2m0 8v2m0 6v2m1 -40v2m0 38v2m1 -44v2m0 6v2m0 6v2m0 4v2m0 8v2m0 48v2m1 -84v2m0 2v2m1 -6v2m0 12v4m0 12v2m0 8v2m1 -34v2m0 2v2m0 20v2m1 -4v2m0 4v2m1 36v2m1 -38v4m0 4v2m0 32v2m1 -28v6m0 18v2m1 -30v2m0 4v2m0 6v4m1 -24v2m0 16v2m1 8v2m2 -28v2m0 26v2m2 -34v2m0 8v2m0 12v2m1 -10v2m1 -4v2m0 6v2m1 -24v4m1 -8v2m0 24v2m0 6v2m1 -14v2m0 14v2m1 -80v2m0 4v2m0 22v2m1 -14v2m0 12v4m0 36v2m0 4v2m1 -74v2m0 14v2m0 28v2m0 10v2m1 -34v2m0 8v2m0 10v2m0 4v2m0 6v2m1 -14v2m2 -48v2m0 44v2m0 14v2m1 -60v2m0 26v2m0 8v2m0 26v2m1 0v2m1 -26v2m0 14v2m0 4v2m1 -22v2m0 18v4m1 -4v2m1 -30v2m0 10v2m1 -66v2m0 64v2m0 10v2m1 -80v2m0 64v2m0 4v2m0 6v2m1 -82v2m0 8v2m0 8v2m0 2v2m0 18v2m0 16v2m0 14v2m1 -58v2m0 26v2m0 6v2m0 10v2m1 -14v2m0 2v2m0 14v2m1 -16v2m0 4v2m1 -56v2m0 28v2m0 8v2m1 -50v4m0 10v2m0 12v2m0 6v2m1 -28v2m0 12v2m0 10v2m0 4v2m0 26v4m1 -40v2m0 4v2m0 4v4m0 2v2m0 10v2m0 4v2m1 -52v2m0 2v2m0 20v4m1 -18v2m0 12v2m0 10v2m0 6v2m1 -58v2m0 6v2m0 20v2m0 22v2m1 -30v2m1 12v2m0 22v2m1 -66v2m0 2v2m0 14v2m0 14v2m1 -16v2m0 6v2m1 -12v4m0 4v2m0 8v2m1 0v2m0 16v2m1 -40v2m0 16v2m0 22v2m1 -40v2m1 -14v2m0 4v2m0 18v2m1 -32v2m0 8v2m0 2v2m1 -14v2m0 2v2m0 2v2m0 8v2m0 28v2m1 -46v2m0 44v2m1 -46v2m0 10v2m0 12v2m1 -34v2m0 4v2m0 40v2m0 4v2m1 -54v2m0 8v2m0 36v2m1 -52v2m0 52v2m1 -48v2m0 2v2m0 22v2m0 6v2m1 2v2m1 -42v2m0 18v2m1 18v2m1 -48v2m1 -4v2m0 2v2m0 8v2m0 34v2m1 0v4m1 -44v2m0 4v2m1 -10v2m0 6v2m2 -12v2m0 2v2m0 2v2m0 12v2m1 -26v2m1 40v2m2 -2v2m1 -48v2m0 26v2m0 16v2m1 -46v2m0 8v4m1 -14v2m0 10v2m0 4v2m0 2v4m0 18v2m1 -42v2m0 6v2m0 22v2m1 -46v4m0 6v2m0 38v2m1 -36v2m0 20v2m1 -34v2m0 36v2m0 4v2m1 -24v2m0 2v2m1 -58v2m0 8v2m0 22v2m0 8v2m0 30v2m1 -76v4m0 4v2m0 28v2m0 4v4m1 -40v4m0 2v2m0 6v6m0 10v2m0 14v2m1 -58v2m0 2v4m0 10v2m0 2v2m1 6v2m0 20v2m1 -40v2m0 18v2m0 2v2m0 2v2m0 2v2m0 10v2m0 18v2m1 -4v2m1 -34v4m1 -46v2m1 22v2m0 14v2m9 -4v2m3 32v2m0 6v2m1 -6v2m1 -50v2m0 6v2m4 -8v4m2 42v2m1 0v2m2 -2v2m1 -26v2m0 18v2m0 4v2m1 -24v2m2 -22v2m1 -14v2m0 2v2m0 42v2m1 -2v2m1 -22v2m0 24v2m1 -4v2m1 -46v2m0 30v2m1 -28v2m0 38v2m3 -4v4m1 -46v2m1 -4v2m0 2v2m2 -6v2m0 38v2m2 -46v2m1 -2v2m0 4v2m0 42v2m2 -48v2m1 4v2m0 38v2m1 -44v2m0 28v2m1 6v2m1 -46v2m0 12v2m0 26v2m1 -44v2m1 42v2m2 -42v2m1 2v2m1 36v2m1 -44v2m0 8v2m1 -18v4m0 2v2m1 -6v2m1 44v2m1 0v2m1 -14v2m1 0v4m0 2v2m1 -48v2m0 38v2m1 -30v2m1 -12v2m0 4v2m0 36v2m1 2v2m2 -42v2m1 -4v2m0 2v2m0 30v4m3 -34v2m2 30v2m1 -48v2m0 4v2m0 40v2m1 -46v2m1 -2v2m1 40v2m0 2v2m1 -2v2m2 -38v2m0 22v4m1 0v2m1 -32v2m0 36v2m2 -80v2m0 6v4m0 28v2m1 -46v2m0 12v2m0 64v2m1 -4v2m1 -68v2m0 4v2m0 50v2m0 8v2"/>
<path stroke="#00ffac" stroke-width="1" fill="none" d="M142.5 202v4m0 20v2m1 -18v2m0 12v2m0 6v4m0 4v2m1 -50v2m0 4v4m0 36v2m1 -48v2m0 20v2m0 10v2m0 2v2m1 -46v4m0 10v2m0 12v2m0 4v2m0 22v2m0 2v2m2 -74v2m0 30v2m0 2v2m1 18v2m0 14v2m1 -54v2m0 14v4m0 2v2m0 4v2m0 20v2m1 -26v2m0 2v2m0 2v2m1 -32v2m0 8v4m0 10v2m0 16v2m0 4v2m1 -70v2m0 22v4m0 4v2m0 12v2m0 8v2m1 -40v2m0 2v2m0 20v2m0 10v2m0 4v2m1 -38v2m0 18v2m0 6v2m0 4v2m1 -40v2m1 0v4m0 20v2m1 -60v2m0 24v2m0 12v2m0 2v2m0 34v2m1 -40v2m0 14v4m1 -38v2m0 4v2m0 8v4m0 2v2m0 12v2m0 8v2m1 -68v2m0 16v2m0 52v2m1 -76v2m0 8v2m0 28v2m0 6v4m0 2v2m0 14v2m1 -62v2m0 6v2m0 10v2m0 2v2m0 12v2m1 -4v8m1 -58v2m0 2v2m0 54v2m0 4v2m0 2v2m1 -6v4m0 2v2m1 6v2m1 -52v2m0 14v2m0 18v2m1 -28v2m0 16v2m0 12v2m0 2v2m1 -78v2m0 28v2m0 32v2m0 10v2m1 -62v2m0 38v2m0 22v4m1 -76v2m0 26v2m0 4v2m0 6v2m0 2v2m1 -14v4m1 -32v2m0 2v2m0 6v2m0 4v2m0 18v2m1 2v2m0 14v4m0 6v2m1 -76v2m0 46v2m0 4v2m0 18v2m1 -62v2m0 26v2m0 12v2m0 14v2m1 -74v2m0 70v2m1 -82v2m0 14v2m1 16v2m0 10v2m1 -24v2m0 40v2m1 -54v2m0 32v2m0 22v2m0 2v2m1 -58v4m0 34v2m0 16v2m1 -74v2m0 6v2m0 2v2m0 8v2m0 2v2m0 6v2m0 18v2m0 2v2m0 2v4m1 -52v2m0 12v2m0 4v2m0 8v2m1 -32v2m0 6v2m0 24v2m0 20v4m1 -68v2m0 6v4m0 36v2m1 -60v2m0 24v2m0 4v2m0 4v2m0 12v2m0 4v2m0 18v4m1 -78v2m0 6v2m0 2v2m0 12v2m0 4v2m1 -28v2m0 4v2m0 4v2m0 2v2m0 8v2m0 44v2m1 -48v2m0 20v2m1 -18v2m0 4v2m0 14v2m1 -48v2m0 50v2m1 -40v2m0 12v2m0 4v6m1 -4v2m0 16v2m0 2v2m1 -78v2m0 44v2m0 4v4m0 12v2m1 -68v2m0 24v2m0 10v4m0 22v2m1 -28v2m0 2v2m0 4v2m0 12v4m0 2v2m1 -32v2m0 6v2m0 10v2m0 6v4m0 2v2m1 -46v2m0 14v2m1 -46v2m0 10v2m0 62v2m1 -58v2m0 4v2m0 26v2m1 -18v2m0 10v2m0 20v2m1 -76v2m0 2v4m0 34v2m0 24v2m1 -58v2m0 12v2m0 10v2m0 16v2m0 2v2m1 -56v2m0 2v2m0 20v4m0 26v2m1 -44v4m0 22v2m1 -46v2m0 6v2m0 26v4m0 12v2m0 4v2m0 6v2m0 10v2m1 -30v2m0 16v2m1 -40v2m0 12v4m0 28v2m1 -78v2m0 44v2m1 -8v2m0 18v2m1 -62v2m0 12v2m0 10v2m0 20v4m0 2v2m0 2v2m1 -42v2m0 38v2m0 4v2m0 2v2m0 2v2m1 -54v4m0 34v2m0 16v2m1 -50v4m0 12v2m0 20v2m1 -20v2m0 2v2m0 2v4m1 -42v2m0 56v2m1 -12v2m1 -26v2m0 6v6m0 2v2m0 2v4m1 -68v2m0 26v2m0 22v2m0 20v2m1 -52v2m0 14v2m0 2v2m0 8v2m1 -38v2m0 6v2m1 -8v2m0 4v2m0 20v2m0 2v2m0 4v2m1 -58v2m0 10v2m0 4v2m0 40v2m0 2v2m0 4v2m1 -74v2m0 26v4m0 2v2m0 22v2m0 6v2m0 4v2m1 -68v2m0 12v2m0 20v2m0 22v2m1 -68v2m0 22v2m0 22v4m1 0v2m1 2v2m0 4v2m0 4v2m1 -70v2m0 2v2m0 2v2m0 8v4m0 12v2m0 10v4m0 6v2m0 8v2m0 2v2m1 -68v2m0 44v2m0 4v2m0 2v2m0 10v2m1 -60v2m0 4v2m0 42v2m0 14v2m1 -66v2m0 12v2m0 10v2m0 2v2m0 12v2m0 12v2m0 2v2m1 -44v2m0 10v2m0 10v2m0 16v2m1 -78v2m0 4v4m0 20v2m0 22v2m0 6v4m1 -62v2m0 60v2m1 -70v2m0 58v6m1 -66v2m0 56v2m0 12v2m0 4v2m1 -48v2m0 40v2m1 -58v2m0 46v2m1 -48v2m0 4v4m0 44v4m1 -12v2m1 -68v2m0 60v2m0 12v2m2 -20v2m0 8v2m2 -8v2m0 10v2m2 -10v6m1 -66v2m0 50v4m0 2v2m1 -50v2m0 4v2m0 2v2m0 2v2m0 2v2m0 4v4m0 18v2m0 2v4m1 -58v2m0 22v4m0 18v2m0 14v4m0 2v2m1 -78v2m0 6v2m0 4v2m0 16v2m0 40v2m1 -48v2m0 30v2m1 -60v2m0 18v2m1 -24v4m0 52v2m0 2v2m1 -46v2m0 38v4m0 14v2m1 -54v2m0 6v2m0 12v2m0 8v2m0 4v2m1 -56v2m0 2v2m0 2v2m0 16v2m0 10v2m0 6v2m0 4v4m1 -56v10m0 2v2m0 34v2m1 -56v4m0 2v2m0 2v2m0 38v4m1 -56v4m0 12v2m0 6v2m0 18v2m0 4v2m1 -28v2m0 8v2m0 10v2m0 30v2m1 -62v4m0 2v2m0 4v2m0 6v2m0 28v4m1 -72v4m0 28v2m0 22v4m0 2v2m1 -60v2m0 8v2m0 54v2m0 2v2m1 -56v2m0 38v2m0 10v2m2 -76v4m0 2v2m0 2v2m0 18v2m0 20v2m0 20v2m0 6v2m1 -58v2m0 8v2m0 20v2m0 10v2m1 -58v2m0 12v2m0 40v2m0 10v2m1 -82v2m0 12v2m0 8v2m0 6v4m0 34v2m0 8v2m1 -66v2m0 4v2m0 50v2m1 -72v2m0 14v2m0 10v2m0 4v2m0 4v2m0 10v2m0 8v2m0 2v2m1 -46v2m1 -22v2m0 2v2m0 16v2m1 12v2m0 12v2m0 4v4m1 -60v2m0 4v2m0 20v4m0 4v2m0 16v2m0 18v2m1 -58v2m0 2v2m0 8v2m0 2v2m0 22v2m1 -46v2m0 2v2m0 4v2m0 2v2m0 22v2m0 8v2m1 -64v2m0 4v2m0 18v2m0 32v2m1 -54v2m0 2v2m0 4v2m0 18v2m0 12v2m0 6v2m0 4v2m2 -14v4m0 2v2m1 -70v2m0 20v2m0 20v2m0 4v2m0 14v2m1 -50v2m0 48v2m1 -6v2m1 -40v2m0 32v6m0 2v2m0 6v2m0 2v2m1 -84v4m0 62v2m0 2v2m1 0v4m1 0v2m1 -68v2m0 44v4m0 12v2m0 6v2m1 -72v4m0 28v2m0 6v2m0 16v2m1 -66v2m0 44v2m0 6v2m1 -40v4m0 16v2m0 28v2m1 -62v2m0 10v2m0 6v2m0 4v2m0 8v2m1 -38v2m0 12v2m0 4v2m0 44v4m1 -72v2m0 42v2m0 18v2m1 -20v2m0 4v2m0 2v2m1 -54v2m0 10v2m0 2v2m0 34v2m1 -30v2m0 16v2m0 2v2m1 -10v2m0 8v4m0 10v2m1 -26v2m1 -2v2m1 10v2m1 -8v2m0 8v2m0 12v2m1 -22v2m2 2v2m0 6v2m0 4v2m1 2v2m1 -36v2m0 30v2m1 -40v2m0 6v2m0 24v2m0 2v2m1 -26v2m0 10v2m1 6v2m1 -28v2m1 12v2m1 -6v2m0 14v4m1 -32v2m1 -16v2m0 34v2m0 6v2m1 -4v2m1 -14v2m0 6v2m0 4v2m1 -36v2m0 4v2m0 8v2m0 4v2m1 -20v2m0 22v2m0 6v2m1 -24v2m1 -8v2m0 16v2m0 2v2m1 -12v2m0 8v2m0 4v2m2 -40v2m0 26v4m1 -24v2m0 2v2m0 10v2m0 6v2m2 -2v2m1 -36v2m0 38v4m1 -30v2m0 12v2m1 -10v4m1 6v2m1 -18v2m1 -26v2m0 16v4m0 4v2m0 6v2m0 6v4m0 6v2m1 -30v2m0 8v2m0 14v2m2 -10v2m0 6v2m1 -22v2m1 -12v2m0 14v4m1 -18v4m0 18v2m0 2v2m1 -48v2m0 2v2m0 4v2m0 4v2m0 16v2m0 10v2m1 -80v2m0 2v2m0 24v2m0 42v2m1 -16v2m0 4v2m0 14v2m1 -2v2m1 -50v2m0 10v2m1 -36v2m0 16v2m0 32v2m0 10v2m0 2v2m1 -80v2m0 24v2m0 6v2m0 4v2m0 14v2m0 10v2m1 -40v2m0 10v2m0 34v2m1 -40v2m1 -18v2m0 6v2m0 6v2m0 14v2m0 2v2m0 18v2m1 -54v2m0 30v2m1 -24v2m0 16v2m0 2v2m1 -34v2m0 2v2m0 4v2m0 8v4m0 6v2m1 0v2m0 10v2m1 -60v2m0 20v2m0 10v4m1 0v2m0 8v2m1 -56v2m0 36v2m0 14v2m0 4v2m0 10v2m1 -80v2m0 32v2m0 6v2m0 8v2m1 -34v2m0 42v2m0 2v2m1 -64v2m0 4v2m0 6v2m0 4v4m0 6v2m0 32v2m1 -50v2m0 18v4m1 18v2m1 -52v2m0 10v2m0 4v2m0 4v2m0 26v2m1 -46v2m0 4v2m0 2v2m0 32v2m1 -70v2m0 6v4m0 4v2m0 10v2m0 26v2m0 6v2m1 -68v2m0 30v2m0 2v2m0 6v2m0 12v2m0 4v2m0 12v2m1 -72v2m0 10v2m0 8v2m0 6v2m0 16v2m0 8v2m0 6v2m0 4v2m1 -58v2m0 2v2m0 42v2m1 2v4m1 -76v2m0 72v2m1 -60v2m0 2v2m0 44v2m0 4v2m0 4v2m1 -84v4m0 4v2m0 4v4m0 12v2m0 6v2m0 14v2m0 6v2m1 -52v2m0 4v4m0 10v2m0 16v2m0 28v2m1 -80v2m0 14v2m0 50v2m1 -64v2m0 8v2m0 4v2m0 4v2m0 34v2m0 2v2m1 -42v2m0 6v2m0 8v2m0 12v4m0 8v2m1 -72v2m0 2v4m0 8v2m0 4v2m0 24v4m0 8v2m0 8v2m1 -72v2m0 6v2m0 10v2m0 14v2m0 4v2m0 2v2m0 4v2m1 -50v2m0 16v2m0 2v2m0 10v2m0 4v2m0 12v2m0 2v4m0 10v2m1 -62v2m0 12v2m0 42v2m1 -52v2m0 42v2m1 -70v2m0 40v2m0 12v4m1 -64v2m0 4v2m0 14v2m0 4v2m0 8v2m0 4v2m0 14v2m1 -62v2m0 44v2m0 8v2m0 4v2m1 -60v2m0 10v2m0 36v2m1 -22v2m0 4v2m0 12v2m0 10v2m1 -38v2m0 30v2m0 14v2m1 -60v2m0 20v2m0 4v4m0 24v4m1 -74v2m0 58v2m0 8v2m1 -70v2m0 16v2m0 20v2m0 18v2m0 10v2m1 -82v2m0 52v2m0 4v2m1 -48v4m0 26v2m0 22v2m0 8v2m1 -78v2m0 18v2m0 4v2m0 28v2m0 2v2m0 10v4m0 4v2m1 -70v2m0 2v2m0 6v2m0 6v2m0 6v2m0 18v2m0 10v2m0 2v2m1 -68v2m0 16v2m0 8v4m0 22v2m0 12v2m1 -82v2m0 16v2m1 20v2m0 20v2m0 4v2m0 12v2m1 -80v2m0 20v4m0 14v2m0 24v2m1 -58v2m0 10v2m0 2v2m0 24v2m1 2v2m0 12v2m1 -24v2m0 8v2m1 8v4m0 2v4m2 -8v4m1 -18v4m0 2v2m1 -12v4m0 6v6m1 -14v2m0 8v2m1 -2v2m1 -14v4m0 8v2m2 -12v2m0 10v2m0 2v2m1 4v2m2 -72v2m1 56v2m0 10v2m1 -2v2m1 -80v2m0 22v2m0 4v2m0 14v2m0 12v2m0 10v2m1 -70v4m0 2v4m0 4v2m0 12v4m0 20v2m0 14v2m0 2v2m1 -66v2m0 8v2m0 30v6m0 10v2m0 2v2m1 -52v2m0 16v2m0 6v2m0 14v2m1 -66v2m0 24v2m0 2v2m0 22v2m0 12v2m1 -4v2m0 10v2m1 -62v2m0 28v2m0 24v2m1 -68v2m0 18v2m0 40v2m0 2v2m1 -56v2m0 14v4m0 18v2m0 2v2m0 4v2m1 -34v2m0 8v4m0 10v2m1 -20v2m1 32v2m1 -50v2m0 32v2m0 2v2m0 6v2m1 -72v2m0 28v2m0 2v2m0 16v2m0 8v2m0 6v2m1 -72v2m0 34v2m1 -20v2m0 12v2m0 4v2m0 18v4m0 2v2m0 2v2m1 -46v2m0 14v2m0 16v2m0 8v2m2 -48v4m0 4v4m0 36v2m0 2v2m1 -54v2m0 2v2m0 8v2m1 -30v2m0 14v2m0 6v2m0 20v2m0 10v2m1 -28v2m0 10v2m0 10v2m1 -44v2m0 4v2m0 12v2m0 2v4m0 8v2m0 2v4m0 2v2m1 -10v2m0 2v2m0 6v2m1 -14v2m0 4v2m0 2v2m0 2v2m1 -70v2m0 38v2m0 24v2m1 -58v2m0 4v2m0 10v2m0 26v4m1 -34v2m0 38v2m1 -52v2m0 24v2m0 10v2m1 -26v2m0 12v4m1 -60v2m0 24v2m0 6v2m0 10v2m0 30v2m1 -52v2m0 2v2m0 12v2m0 6v4m1 -28v2m1 -6v4m0 18v2m1 -18v2m1 10v2m0 2v2m0 2v2m1 -52v2m0 64v2m0 8v2m1 -60v2m0 30v2m0 22v2m1 -30v2m0 10v2m0 8v2m1 -58v2m0 10v2m1 -28v2m0 18v2m0 22v2m0 30v2m1 -80v2m0 40v2m0 30v2m1 -66v2m0 12v2m0 6v2m0 26v2m0 12v2m1 -76v2m0 16v2m0 24v2m1 -46v2m0 18v2m0 18v2m0 14v2m1 -42v2m0 8v2m0 8v2m0 4v2m0 12v2m1 -48v2m0 10v2m0 12v2m0 14v2m0 4v2m0 10v2m1 -52v2m0 36v2m0 16v2m0 4v2m1 -38v2m0 6v2m0 8v2m0 4v2m1 -36v6m0 18v4m0 8v2m0 4v2m1 -66v2m0 12v2m0 12v2m0 6v2m0 30v2m1 -82v2m0 2v2m0 18v2m0 48v2m1 -62v2m0 2v2m0 8v2m0 6v2m0 38v4m1 -60v2m0 2v2m0 42v4m1 -40v6m0 18v2m1 -40v2m0 44v6m0 2v2m0 2v2m1 -80v2m0 2v2m0 56v4m1 -52v6m0 30v2m0 2v2m0 10v2m1 -60v2m0 14v2m0 42v2m0 4v2m1 -4v2m1 -56v2m0 16v2m0 24v2m1 -64v2m0 12v2m0 30v2m0 8v2m0 2v2m0 10v4m0 2v2m1 -60v2m0 6v4m0 12v2m1 -38v2m0 6v2m0 8v2m0 8v2m0 2v2m0 4v2m0 6v2m1 -56v2m0 50v2m0 4v2m0 18v2m1 -22v2m1 -10v2m1 -8v2m0 4v4m0 2v2m1 -26v2m0 22v2m0 8v4m1 -40v2m0 8v2m1 -34v2m0 4v2m0 12v2m0 16v2m0 2v2m1 -6v2m1 -20v2m0 22v2m1 22v2m1 -32v2m0 2v2m0 8v2m2 -22v2m0 16v2m0 12v2m2 2v2m1 -28v2m0 6v2m0 14v4m1 -68v2m1 -2v2m0 46v2m1 -18v2m1 -38v2m0 28v2m0 4v2m1 -4v2m1 -40v2m1 38v2m0 6v2m0 8v2m1 -56v2m0 50v2m0 18v2m1 -68v2m0 24v2m0 38v2m0 2v2m1 -66v2m1 16v2m0 4v2m0 16v2m0 10v2m0 2v2m0 2v2m1 -44v2m0 34v2m1 -72v4m0 2v2m0 48v2m1 -60v2m0 2v2m0 48v2m0 12v2m0 6v2m1 -42v2m1 -32v2m0 40v2m1 -14v2m0 38v2m1 -28v2m0 2v2m0 14v2m0 6v2m1 -72v2m0 28v2m1 -32v2m0 30v2m0 34v2m2 -18v2m1 12v2m1 -16v2m1 6v2m0 10v2m2 -8v2m2 -4v2m1 -32v4m0 22v2m1 -26v2m0 16v2m0 2v2m2 -18v2m0 20v2m1 -34v2m0 18v2m1 10v2m0 6v2m1 -24v4m0 14v2m2 -28v2m0 16v2m0 2v2m2 4v2m1 -26v2m0 4v2m1 -6v2m0 8v4m0 4v2m1 -18v2m0 4v4m0 4v2m0 4v2m1 -18v4m1 -26v2m1 -44v2m0 2v2m0 12v2m0 4v2m0 4v4m0 6v2m0 6v2m0 6v2m1 -54v2m0 52v2m0 12v2m2 4v2m1 2v2m1 -24v2m0 6v2m1 -16v4m0 20v4m5 -6v2m1 -20v2m0 8v2m1 -58v2m0 18v2m0 2v2m0 14v2m1 -38v2m0 42v2m0 10v2m0 4v2m1 -70v2m0 8v2m0 4v2m2 -20v2m1 2v2m0 24v2m1 -20v2m0 4v2m0 12v2m0 12v2m0 6v2m1 -46v2m0 10v4m0 24v2m1 -56v2m0 30v2m0 2v6m0 26v2m1 -50v2m0 8v2m0 20v2m1 -24v2m0 8v2m0 4v2m1 -46v2m0 46v4m1 -28v2m0 14v2m3 -12v2m1 -10v2m0 26v2m1 -32v2m4 52v4m1 -42v2m0 32v2m1 -52v2m0 2v2m0 4v2m0 40v2m2 -42v2m0 42v2m1 -58v2m0 52v2m1 -54v2m0 4v2m0 46v2m1 -4v4m1 -8v2m0 4v2m1 -56v2m0 2v4m4 42v2m2 -38v2m1 -14v2m2 -6v2m1 0v4m0 4v4m1 -8v2m0 2v2m0 42v4m2 -58v2m1 52v2m1 -76v2m0 22v2m0 8v2m0 10v2m0 22v4m0 2v2m1 -84v2m0 10v2m0 4v4m0 18v2m0 4v4m0 32v2m1 -80v2m0 50v2m0 18v2m1 -78v2m0 10v4m0 8v2m0 2v2m0 2v2m0 10v2m0 36v2m1 -70v2m0 24v4m0 14v2m1 -40v2m0 16v2m0 8v2m0 28v2m1 -66v2m0 8v2m0 10v2m0 6v2m0 34v4m1 -70v2m0 6v2m0 28v2m1 -34v2m0 26v2m0 30v4m1 -74v2m0 20v2m0 2v2m0 8v2m1 -46v2m0 4v2m0 38v2m0 4v2m0 24v2m1 -58v2m1 28v2m0 6v2m1 -52v2m0 4v2m0 8v2m0 4v4m10 18v2m0 12v2m0 4v2m1 -4v2m1 -26v2m0 30v2m1 -28v2m1 -10v2m1 24v2m1 4v2m2 0v2m1 -42v2m1 12v2m0 14v2m0 2v2m1 -32v2m0 2v4m1 0v2m0 4v2m0 14v2m1 2v2m1 -26v2m1 -12v2m0 20v2m1 -24v2m0 2v4m1 -14v2m0 38v4m1 -10v2m2 -20v2m0 20v2m1 -18v2m1 4v4m2 -26v2m0 14v2m1 -20v2m1 34v2m1 -48v4m0 18v2m0 16v2m1 -32v2m0 2v2m0 20v2m0 2v2m1 -2v2m1 4v2m2 0v2m1 -38v2m0 28v2m1 -34v4m0 10v2m0 12v2m1 -30v6m1 -2v2m0 26v2m1 -34v2m1 30v2m1 -4v2m2 -30v2m1 0v2m1 -6v2m0 30v2m1 -34v2m0 36v2m1 -36v2m1 6v2m0 12v2m0 6v2m1 -22v2m1 22v2m1 -48v2m1 2v2m0 36v2m1 -38v2m0 6v2m0 16v6m1 -2v2m0 6v2m1 -42v2m0 2v2m0 36v2m1 -50v2m1 40v2m1 -6v2m1 -4v2m1 -26v2m0 26v2m1 -6v4m1 -32v2m0 26v2m2 -32v2m0 4v2m1 34v2m1 -38v4m0 20v4m1 -6v2m1 -30v2m0 28v2m0 4v4m1 -10v4m1 4v2m0 2v2m1 -14v4m1 -8v4m0 4v2m0 4v2m1 -20v2m0 8v2m1 -26v4m0 2v4m1 12v4m0 2v2m1 -76v2m0 4v2m0 6v2m0 40v2m1 -56v2m0 16v2m0 48v2m1 -56v2m0 34v2m0 16v2m0 2v4m1 -6v2m1 -66v2m0 38v2m1 -48v2m0 42v2m0 8v2m0 12v2"/>
<path stroke="#00afff" stroke-width="1" fill="none" d="M142.5 216v2m0 6v2m0 6v2m1 -48v2m0 12v2m0 16v4m1 -26v2m0 8v2m0 2v2m0 8v2m1 -22v2m0 46v2m1 -76v2m0 2v2m0 4v2m0 10v4m0 6v2m1 -12v2m0 8v2m0 28v2m0 12v2m1 -72v2m0 32v4m0 2v2m0 10v4m1 -60v2m0 28v2m0 12v2m1 -46v2m0 16v2m0 26v2m1 -38v2m0 18v2m0 26v2m1 -52v2m0 42v2m0 2v2m0 2v2m0 12v2m1 -30v2m1 -48v2m0 42v2m1 -20v2m0 6v2m0 8v2m0 2v2m1 -52v2m0 62v2m1 -44v2m0 52v2m1 -70v4m0 16v2m0 38v2m1 -72v2m0 2v2m0 4v2m0 16v2m0 2v2m0 28v2m1 -62v2m0 26v4m1 -4v2m0 44v2m1 -72v2m0 70v2m1 -72v2m0 12v2m1 -20v2m1 8v2m0 36v2m0 6v2m0 2v2m1 -54v2m0 8v2m0 8v2m0 16v2m1 -52v2m0 12v4m0 8v2m0 12v2m0 24v2m0 6v2m1 -48v4m0 26v2m1 -26v2m0 42v2m1 -52v2m0 22v2m2 -20v2m1 -26v2m0 22v2m0 42v2m1 -80v2m0 6v2m0 2v2m0 22v2m0 26v2m0 8v2m1 -76v2m0 24v2m0 30v2m0 14v4m1 -42v2m0 6v2m0 8v2m1 -50v4m0 10v2m0 8v2m0 8v2m0 8v2m0 2v2m1 -34v2m0 28v2m1 -48v2m0 38v2m1 -38v2m0 38v2m0 18v2m1 -58v2m0 10v2m0 8v2m0 18v2m1 -20v2m0 6v2m1 -42v2m0 36v2m0 2v2m0 24v2m1 -70v2m0 34v2m0 16v2m0 12v2m1 -72v2m0 68v2m1 -72v2m0 14v2m0 6v4m0 10v2m1 -34v2m0 14v2m0 2v4m0 4v4m0 2v2m0 2v2m0 12v2m1 -60v2m0 32v2m1 -24v2m0 20v2m0 2v2m0 8v2m0 10v2m1 -30v2m0 8v4m1 -40v2m0 24v2m1 -18v4m0 2v2m0 48v2m1 -80v2m0 4v2m0 26v2m0 16v2m1 -54v2m0 20v2m1 22v2m0 20v2m1 -34v2m1 14v2m0 24v2m2 -2v2m1 -80v2m0 4v2m0 14v2m0 8v2m0 18v4m0 4v2m0 6v2m0 10v2m1 -80v2m0 30v2m1 -2v2m0 10v2m1 -42v2m0 34v2m1 -36v2m0 32v2m0 24v2m1 -58v2m0 56v2m0 2v2m0 2v2m1 -36v2m0 16v2m0 8v2m1 -40v2m0 32v2m0 6v4m1 -18v4m0 2v2m0 4v2m1 -72v2m0 56v2m0 6v2m1 -34v2m0 12v2m0 26v2m1 -74v2m0 40v2m1 -28v2m0 24v2m0 4v2m0 18v2m0 2v2m1 -72v2m0 32v2m0 20v2m0 4v2m0 2v2m1 -78v2m0 42v2m2 12v2m0 16v2m1 -74v2m0 64v2m0 2v2m1 -78v2m0 4v2m1 6v2m0 58v2m1 -26v2m0 6v2m0 10v2m1 -60v2m0 32v2m0 28v2m1 -64v2m0 64v2m1 -80v2m0 12v2m1 -16v2m0 12v2m0 48v2m0 10v2m1 -74v2m0 20v2m1 -20v2m2 -2v2m1 2v2m0 62v2m1 -66v2m1 -2v2m0 16v2m1 -14v2m0 12v2m1 -6v2m0 2v2m0 38v2m1 -48v2m0 14v2m0 30v2m1 -50v2m1 6v2m0 16v2m1 -32v2m0 4v2m0 4v2m0 10v2m1 -36v2m1 -2v2m0 2v2m0 6v4m0 6v2m1 -38v2m0 10v2m0 36v2m0 14v2m0 8v6m1 -68v2m0 52v2m0 4v2m1 -68v4m0 12v2m0 6v4m0 14v2m0 18v2m1 -52v2m0 10v2m0 2v2m0 14v2m0 24v2m1 -78v2m0 10v2m0 50v2m0 12v2m1 -64v2m0 6v2m0 24v2m1 -24v2m0 6v2m0 4v2m0 30v2m1 -78v2m0 20v4m0 28v2m0 14v2m1 -64v2m0 28v2m0 18v2m0 10v4m1 -72v2m0 14v4m0 38v2m1 -60v2m0 36v2m0 34v2m1 -74v2m0 16v4m0 10v4m0 14v2m0 26v2m1 -76v2m0 46v2m1 -16v2m0 6v2m0 2v2m1 -48v2m0 32v4m0 4v4m0 22v2m0 2v2m1 -26v2m0 24v2m1 -84v2m0 36v2m0 12v2m0 24v2m1 -72v2m0 34v2m0 2v4m1 0v2m1 -42v2m1 -8v2m0 22v2m1 -12v2m0 2v2m0 44v2m1 -44v2m0 22v2m1 -38v2m0 10v2m0 30v2m1 -42v2m0 28v2m0 2v2m1 -50v2m0 36v4m0 4v4m0 26v2m1 -58v2m0 10v2m0 4v2m0 2v2m0 28v2m1 -38v2m1 -44v2m0 30v2m0 2v2m0 6v2m1 -42v4m0 12v2m0 6v2m0 52v2m1 -72v2m0 2v2m0 14v2m0 2v2m0 2v4m0 20v4m1 -48v2m0 8v2m0 14v2m0 18v2m0 10v2m1 -74v2m0 12v2m0 2v2m0 8v4m0 2v2m0 6v2m1 -46v4m0 12v2m0 22v2m0 18v2m1 -12v2m1 -40v2m1 -8v2m0 24v2m0 4v2m0 6v2m0 20v2m0 2v2m1 -46v2m0 12v2m0 10v4m0 4v2m1 -6v2m1 -10v2m1 -40v2m0 24v2m0 12v2m1 -52v2m0 2v2m0 28v2m1 8v2m1 -42v2m0 4v2m0 8v2m0 26v2m1 -36v2m0 20v2m0 22v2m0 8v2m1 -74v2m0 16v4m0 20v2m0 2v2m0 2v2m0 16v2m0 4v2m1 -50v2m1 -22v4m0 24v2m0 14v2m1 -36v2m0 10v2m0 4v2m0 12v2m1 -34v2m1 -14v2m1 -10v2m0 46v2m0 12v2m1 -22v2m0 38v2m1 -72v2m0 2v2m0 14v2m0 8v2m0 8v2m1 -14v2m0 34v2m1 -44v2m0 6v2m1 -32v2m1 38v2m1 10v2m0 2v2m2 -24v2m0 8v2m0 22v2m1 -62v2m0 26v4m0 22v2m1 -68v4m0 4v2m0 14v2m0 18v2m0 12v2m0 2v2m1 10v2m1 -40v4m0 6v4m0 8v2m1 12v2m1 -34v2m1 -42v2m0 28v2m0 10v2m1 -16v2m0 20v2m0 20v2m1 -12v2m0 2v2m1 -36v2m0 34v2m1 -46v2m0 8v2m0 2v2m0 4v2m1 -52v2m0 30v2m0 42v2m1 -52v2m1 -2v2m0 16v2m0 32v2m1 -72v2m0 30v2m1 -36v2m0 4v2m1 32v2m0 18v2m0 10v2m1 -34v2m0 18v2m1 -52v2m0 8v2m0 22v2m0 6v2m1 -52v2m0 4v2m0 30v2m1 -42v2m0 30v2m0 6v2m1 -36v2m0 24v2m1 -40v2m0 10v2m0 2v2m0 22v2m0 12v2m2 -8v2m1 -42v2m0 10v4m0 14v4m0 10v2m1 -24v4m1 -6v2m0 16v2m1 -48v4m0 24v4m0 48v2m1 -36v2m0 2v2m0 16v4m1 -74v2m0 2v2m0 40v2m0 2v2m0 12v2m1 -20v2m0 24v2m1 -32v4m1 -40v2m0 32v2m1 -42v2m0 6v2m0 26v2m1 20v2m0 8v2m1 -54v2m0 26v6m0 2v2m1 -28v2m0 4v4m0 4v2m1 -36v2m0 20v2m1 12v2m0 8v2m0 20v2m1 -26v2m0 10v2m1 -28v2m0 4v2m0 10v2m0 2v2m0 6v2m1 -30v2m0 18v2m1 -26v2m1 -8v2m1 34v2m0 4v4m1 -70v2m0 6v2m1 -14v2m0 4v2m1 -4v2m0 10v2m0 62v2m1 -72v2m1 2v2m1 6v2m0 2v2m1 -12v2m0 6v2m2 -16v2m0 64v2m1 -48v2m0 48v2m1 -50v2m0 10v2m0 12v2m1 -8v2m0 22v2m1 -34v2m0 2v2m1 -50v2m0 12v2m0 18v2m0 40v2m0 4v2m1 -64v2m0 2v4m0 2v2m0 14v2m0 32v2m1 -72v2m0 56v2m0 8v2m1 -16v2m1 -66v2m0 62v2m1 10v2m1 -4v2m0 2v2m1 -8v2m0 8v2m1 -10v2m0 4v2m1 -10v4m1 -74v2m0 2v2m0 26v2m2 -10v2m1 38v2m1 -2v2m0 12v4m2 -80v2m0 58v2m0 16v2m2 -68v2m0 18v2m0 4v4m1 -6v2m1 -42v2m0 40v2m1 -14v2m0 8v2m2 -28v2m1 64v4m3 -68v6m0 30v2m0 16v2m1 -68v2m0 26v2m0 20v2m5 22v2m1 -6v2m2 -16v2m0 2v2m1 -52v2m0 16v2m0 14v2m1 -26v2m0 4v2m0 16v2m0 16v4m1 8v2m3 -66v2m1 -6v2m0 62v4m1 0v2m1 0v2m3 0v2m1 -6v2m4 -4v2m1 0v2m3 -8v2m1 4v2m3 -4v2m1 -2v2m1 -62v2m0 4v2m0 54v2m1 -80v2m0 10v2m0 36v2m0 2v2m0 2v2m1 -50v2m0 38v2m0 26v2m2 -70v2m1 -12v2m0 8v2m1 6v2m1 0v2m0 8v2m0 38v2m0 2v2m1 -70v2m0 24v2m0 26v2m0 16v2m1 -74v2m0 14v2m0 36v2m0 2v2m0 4v2m0 2v2m1 -62v2m0 10v2m0 12v2m0 20v2m1 -60v2m0 10v2m0 2v2m0 12v2m0 36v2m1 -74v2m0 26v2m1 -10v2m0 20v2m0 18v2m1 -64v2m0 20v2m0 16v2m0 28v2m1 -14v2m0 2v2m0 6v2m1 -62v2m0 32v2m0 34v2m1 -80v4m0 16v2m0 40v4m0 2v2m1 -58v2m0 20v2m0 4v2m0 12v2m0 12v2m0 4v2m1 -72v2m0 8v2m0 40v2m0 16v2m1 -58v2m0 6v2m1 -30v2m0 2v2m0 4v2m0 8v2m0 4v2m0 30v2m0 22v2m1 -74v2m0 26v2m0 18v2m0 2v2m1 -64v2m0 16v2m0 2v2m0 6v2m0 26v2m1 -16v2m0 22v2m0 4v2m1 -66v4m0 6v2m0 6v2m1 -28v2m0 2v2m0 68v2m2 -60v4m0 44v2m1 12v2m1 -8v2m1 -62v2m0 36v2m1 -52v2m0 68v2m1 -70v2m0 8v4m0 6v2m0 18v2m1 -44v2m0 68v2m1 -64v2m0 2v2m0 2v2m1 -16v4m0 2v2m0 6v2m0 22v2m1 -34v2m0 30v2m0 12v2m0 20v4m1 -68v2m0 12v2m0 20v2m0 24v2m1 -76v2m0 6v2m0 8v2m0 40v6m0 4v2m0 6v2m1 -74v2m0 2v2m0 24v2m1 34v2m0 2v2m1 -78v2m0 6v2m0 40v2m0 8v2m0 12v2m1 -70v2m0 44v2m1 18v2m1 -72v2m0 58v4m0 4v4m2 -66v2m0 70v2m1 -22v2m0 4v4m2 -68v2m0 6v2m0 54v2m0 6v2m1 -78v2m0 42v2m0 16v2m1 -50v2m1 -8v2m1 36v2m0 12v2m0 20v2m1 -74v2m0 8v2m0 2v2m0 38v2m0 2v2m0 2v2m1 -70v2m0 52v2m0 18v2m2 -28v2m0 14v2m1 -66v2m1 20v2m0 20v2m0 8v2m0 4v4m0 8v2m1 -30v2m0 2v2m0 12v2m0 2v2m1 -22v2m1 -2v2m0 2v2m0 8v2m0 2v2m2 -10v2m0 12v2m1 -24v2m0 26v2m1 -24v2m0 2v2m0 2v4m1 -10v4m1 -14v2m0 12v2m0 8v2m1 -26v2m0 14v2m0 14v2m1 -36v2m0 10v2m1 -14v2m1 22v2m0 8v2m1 -2v2m1 -10v2m1 -16v2m0 8v2m1 -8v4m1 -12v2m0 8v2m0 4v4m1 -4v2m0 6v2m1 -82v2m0 56v2m1 -10v2m0 10v2m0 6v2m1 -64v2m0 40v2m0 12v2m1 -8v4m0 8v2m0 6v2m1 -80v4m0 48v2m0 2v2m0 8v2m0 2v2m1 -24v2m0 16v2m0 4v2m1 -74v2m1 52v2m1 -16v2m0 2v2m0 10v2m0 12v2m1 -68v2m0 36v2m0 2v2m0 16v2m0 12v2m1 -8v8m1 -70v2m0 70v2m1 -76v2m0 58v2m0 12v2m1 -80v2m0 4v2m0 28v2m0 12v2m0 2v2m0 14v2m2 -14v2m0 6v2m1 -26v4m0 22v2m0 6v2m1 -38v2m0 16v2m1 -22v2m0 2v2m0 4v2m0 14v2m0 4v2m1 -30v4m0 22v2m0 2v2m1 -10v2m0 4v2m1 -6v2m0 2v2m1 -18v2m2 0v2m1 16v2m1 -38v2m0 4v2m0 30v2m2 -6v2m1 -18v2m2 -16v2m3 20v2m2 -22v2m0 2v2m0 2v2m3 -4v2m1 -4v4m1 0v2m1 -6v2m1 -26v2m0 24v2m0 2v2m14 -46v2m4 -16v2m2 14v2m2 -18v2m0 2v2m1 0v2m0 6v2m2 -8v2m2 -10v2m0 6v2m1 10v2m1 -20v2m3 -2v2m0 12v2m1 -18v2m0 2v2m1 8v2m1 -8v2m1 72v2m2 -78v2m1 -8v2m0 18v2m2 -10v2m1 0v2m1 -16v2m2 0v2m1 20v2m1 -26v2m0 14v2m1 -10v2m5 -6v2m0 18v2m2 -16v2m2 10v2m0 54v2m1 -72v4m1 -4v2m0 4v2m1 -4v2m0 64v2m1 -44v2m0 2v2m1 -20v2m0 14v2m1 14v2m7 -30v2m11 24v2m0 12v2m1 0v6m1 -12v2m1 -20v2m0 18v2m1 -20v2m0 18v2m0 2v2m1 -4v2m1 -24v2m1 8v2m0 12v2m1 -12v2m0 8v2m2 -28v2m0 16v2m0 6v2m1 -16v2m0 2v2m1 -16v2m0 22v2m1 -32v2m1 0v2m1 4v2m1 -8v2m0 14v2m0 2v4m2 -16v2m0 20v2m1 -34v2m0 2v2m0 22v2m1 4v2m1 -26v2m0 8v2m0 10v2m1 -28v2m1 8v2m0 2v2m1 -6v2m0 2v2m1 -14v2m4 -2v2m0 22v2m2 -26v2m0 16v2m0 4v2m1 -6v2m0 6v2m1 -12v2m0 4v2m1 -22v2m0 14v2m1 -6v2m1 6v2m1 -24v2m1 2v2m1 -4v2m0 2v2m1 -2v2m1 0v2m1 0v2m0 10v2m1 -22v2m1 -8v2m2 0v2m1 6v2m0 8v2m0 6v2m1 -4v2m0 6v2m1 -8v2m0 4v2m1 -36v2m0 6v2m0 12v2m1 -24v2m1 -4v2m0 16v2m0 4v2m1 -12v2m1 -2v2m0 10v2m2 -22v2m0 10v2m0 16v4m1 -22v2m1 -8v4m0 10v2m2 -14v2m1 14v2m1 -18v2m0 8v2m0 4v2m0 4v2m1 -24v2m1 -10v2m0 6v2m1 -14v2m0 8v2m1 -14v2m0 26v2m1 -6v2m1 -14v2m0 2v2m1 -6v2m0 10v2m1 -14v2m1 8v2m2 -22v10m0 8v2m1 -20v2m0 2v4m0 6v2m0 10v2m1 -28v2m1 10v2m0 4v2m1 -16v2m0 14v2m1 -14v2m1 -6v2"/>
<path stroke="#0083ff" stroke-width="1" fill="none" d="M142.5 218v2m0 28v2m1 -42v2m1 -30v2m0 20v2m0 44v4m1 -62v2m0 2v2m0 22v6m0 26v2m1 -30v2m1 -34v2m0 6v2m0 12v2m0 24v2m0 2v2m1 -76v2m0 22v2m0 34v2m0 10v2m1 -18v2m1 -58v4m0 78v2m1 -82v2m0 12v2m0 22v2m1 -20v2m1 18v2m1 -38v2m0 8v2m0 10v2m0 46v2m1 -60v4m1 -6v2m0 36v2m0 26v2m2 -84v2m0 42v2m0 6v2m0 2v2m1 -38v2m0 32v2m1 -54v2m0 8v2m0 2v2m0 20v2m1 -10v2m1 18v2m2 -40v2m0 32v2m0 22v2m0 6v4m1 -58v4m1 4v2m0 12v2m0 2v2m1 -52v2m1 10v2m0 64v2m1 -80v4m0 2v2m0 10v2m0 16v2m1 -28v2m0 40v2m1 -2v2m1 -50v2m0 74v2m1 -34v2m0 2v2m1 -30v2m0 36v2m0 2v2m1 -54v2m0 4v2m0 4v2m0 12v2m1 -26v2m0 24v2m1 -44v6m0 22v2m0 16v4m0 2v2m1 -50v2m0 8v2m0 16v2m1 -30v2m0 32v2m0 4v2m0 10v2m1 -58v4m0 38v2m0 18v2m0 6v2m1 -72v2m0 18v2m1 -12v4m0 2v2m1 26v2m0 10v2m0 8v2m1 -62v2m0 6v2m0 8v2m1 -20v2m0 44v2m0 2v2m0 24v2m1 -70v2m0 26v2m0 34v2m1 -58v2m0 4v2m0 32v2m1 -62v4m0 6v2m0 32v4m1 -10v2m0 36v2m1 -62v2m0 22v2m1 18v2m0 2v2m0 4v2m1 -20v2m0 10v2m0 4v2m1 -74v2m0 36v2m0 6v4m1 -42v2m0 28v2m0 2v4m0 12v2m0 18v2m2 -22v2m1 -8v2m0 22v2m1 -78v2m0 8v2m0 64v4m2 -80v2m0 12v2m0 64v2m1 -70v2m1 24v2m0 6v2m0 2v2m0 20v2m1 -10v2m1 -2v2m0 14v2m1 -30v2m1 2v2m0 18v2m1 -74v2m0 4v2m0 2v2m0 8v2m0 34v2m0 10v2m1 -66v2m0 32v2m1 -36v2m0 30v2m0 40v2m1 -80v2m0 4v2m1 -6v2m0 56v2m0 6v2m1 -72v4m0 2v2m0 54v2m1 -32v2m0 30v2m0 2v2m1 -62v2m4 -10v2m1 6v2m0 4v2m1 -4v2m1 -12v2m0 74v4m1 -76v2m0 66v2m0 4v2m1 -46v2m0 22v2m0 4v2m1 -46v2m0 8v2m1 -28v2m0 66v2m1 2v2m1 -80v2m0 60v2m0 14v2m1 -80v2m0 10v2m0 58v2m1 6v2m1 -4v2m1 -76v2m1 2v2m0 2v2m0 6v4m0 56v2m1 -84v2m0 10v2m0 14v2m0 14v2m0 6v2m0 2v2m1 -4v2m1 -54v2m1 72v2m0 2v2m1 -66v2m0 14v2m0 36v2m1 -44v2m1 -28v2m0 2v2m0 72v2m1 -74v2m0 16v2m0 20v2m1 -48v2m0 2v2m0 8v2m0 8v2m0 2v2m0 22v2m1 -20v2m0 26v2m1 -56v2m0 60v2m0 6v2m1 -48v4m1 -28v2m0 12v2m0 8v2m0 46v2m1 -70v4m1 -12v2m0 6v2m0 10v2m0 8v2m0 38v2m1 -76v2m0 44v2m1 -12v2m0 14v2m1 -36v2m0 16v2m0 40v2m1 -70v2m0 16v2m0 18v2m0 26v2m1 -74v2m0 42v2m0 30v2m1 -40v2m1 -8v2m0 42v2m2 -38v2m0 6v2m2 -18v2m1 12v2m0 24v2m1 -64v2m0 42v2m0 16v2m1 -42v2m0 4v2m0 2v2m1 -26v2m0 6v2m0 42v2m0 4v2m1 -34v2m1 -38v2m0 30v2m1 -34v2m0 20v2m0 42v2m1 -58v2m0 2v2m0 2v2m0 48v2m1 -28v2m1 -8v2m0 26v2m1 -78v2m0 6v2m0 18v2m0 4v2m0 4v2m0 36v2m1 -78v2m0 2v2m1 66v2m0 4v2m1 -76v2m0 70v2m2 -78v2m0 36v2m0 6v2m1 -22v2m0 22v2m2 -38v2m0 2v2m0 2v4m0 40v2m1 -64v2m0 22v4m0 12v2m1 -10v2m0 34v2m2 -56v2m1 18v2m0 2v4m1 -46v2m0 2v2m0 72v2m1 -36v2m0 8v2m1 -52v2m0 2v2m0 6v2m2 -8v4m0 26v2m0 6v2m0 26v2m1 -66v2m0 16v2m1 -12v2m0 22v4m1 -48v2m0 34v2m0 22v2m1 12v4m1 -34v2m0 4v4m1 -20v2m0 8v2m1 32v2m1 -32v2m0 28v2m1 -34v2m0 30v2m2 -36v2m0 4v2m1 -34v2m0 56v2m1 -76v2m1 30v2m0 6v2m0 8v2m1 -30v2m0 18v2m1 -42v2m0 26v2m0 2v2m1 -24v2m0 20v2m0 34v2m1 -56v2m0 14v2m0 12v2m0 24v2m1 -56v2m0 8v4m0 14v2m1 -44v4m0 20v4m0 14v2m1 -10v4m1 -40v2m0 26v2m0 8v4m0 6v2m0 8v4m0 10v2m1 -32v2m1 -38v2m0 10v2m0 6v2m1 -36v2m0 24v2m0 8v2m2 -34v2m0 8v2m0 4v2m1 12v2m1 -24v2m0 2v2m0 28v2m0 4v2m0 26v2m1 -54v2m0 8v2m0 16v2m0 24v2m1 -76v2m0 6v2m0 20v2m0 12v2m0 12v2m0 14v2m1 -48v2m0 16v2m1 -26v2m0 4v2m1 -20v2m0 16v2m0 6v2m0 4v2m1 -40v2m0 16v2m0 2v2m0 10v2m0 4v2m1 -54v2m0 24v4m1 -14v2m0 18v2m0 16v2m1 -48v2m0 36v2m1 0v4m0 30v2m1 -40v2m1 -14v2m0 8v2m1 -4v2m1 -38v2m0 6v2m0 18v2m1 -22v2m0 28v2m0 14v2m1 -48v2m0 20v2m1 -34v2m0 12v2m1 10v2m0 4v2m0 34v2m1 -30v2m0 4v2m0 32v2m1 -42v2m0 4v2m1 -20v2m0 8v2m1 0v2m1 -8v2m0 2v2m0 10v2m0 16v2m0 4v2m1 -46v2m1 48v2m1 -20v2m1 -58v4m1 -12v2m0 2v4m0 2v2m1 -4v2m0 2v2m0 6v2m0 24v2m1 -46v2m0 14v2m0 4v2m1 -18v2m0 8v2m0 6v2m0 52v2m1 -68v2m1 -16v2m0 8v2m0 2v2m1 -12v4m0 6v6m1 -20v2m0 4v2m0 70v2m1 -78v2m0 14v4m0 54v4m1 -66v2m1 -6v2m0 2v4m0 26v2m1 -32v2m0 4v2m1 -2v4m0 4v2m0 30v2m1 -48v2m0 46v2m1 -64v2m0 46v2m1 -30v2m0 2v4m0 2v2m0 2v4m0 4v2m1 -40v2m0 6v2m0 24v2m0 4v2m1 -10v2m1 -26v2m0 10v2m1 2v2m0 36v2m1 8v2m1 -22v2m2 2v4m0 4v2m0 6v2m1 -2v2m1 -70v2m0 50v2m2 -44v2m0 12v2m0 38v2m1 -10v2m0 10v2m4 0v2m1 -34v2m0 28v2m1 -72v2m0 68v2m2 -76v2m0 8v2m0 4v2m0 48v2m7 -20v2m0 10v2m0 12v2m0 2v2m2 -4v2m1 -2v2m4 -20v2m0 14v2m0 4v2m1 -4v2m2 -2v2m1 -6v2m0 4v2m4 -12v2m0 6v4m1 -20v2m0 14v2m1 -6v2m0 4v2m1 -6v2m0 2v2m3 -6v2m7 -4v2m0 4v2m2 -10v2m0 2v2m5 -34v2m0 2v4m1 26v2m1 -2v2m1 -76v2m0 16v2m0 28v2m2 -56v4m0 2v2m2 -8v2m0 10v2m0 66v2m1 -74v2m0 14v2m0 42v2m1 -54v2m0 4v2m0 14v2m0 36v2m0 4v2m1 -84v2m0 2v2m0 6v2m1 -6v2m0 18v2m1 -16v2m0 20v2m0 42v2m1 -16v2m0 14v2m1 -54v2m0 24v2m0 24v2m1 -78v2m0 6v2m0 22v2m0 4v2m1 -22v2m0 2v2m0 36v2m0 8v4m1 -60v2m0 40v2m1 -58v2m0 6v2m1 -14v2m0 4v4m0 10v2m0 34v2m0 4v4m1 -64v2m0 16v2m1 -20v2m0 12v2m1 44v2m1 -44v2m0 52v2m1 -72v2m0 12v2m0 52v2m1 -54v2m0 8v2m0 4v2m0 40v2m1 -12v2m0 4v2m1 -34v2m0 6v2m1 -52v2m0 18v2m1 -12v2m0 12v2m0 30v2m1 -36v2m0 12v4m0 10v2m0 16v4m1 -62v2m0 30v2m0 18v2m1 -54v2m0 4v2m0 6v2m0 36v2m0 6v2m1 -70v2m0 2v2m0 34v2m1 -26v2m0 40v2m0 8v2m1 -60v2m1 -14v2m0 4v2m0 10v2m0 40v2m1 -44v2m0 60v2m1 -80v2m0 6v2m0 4v2m0 2v4m0 14v2m0 2v2m0 28v2m1 -34v2m0 12v2m0 6v2m0 2v2m1 6v2m0 4v2m1 -66v2m1 56v2m1 -6v2m0 6v2m1 -50v2m3 -22v2m0 62v2m1 -2v2m2 -16v2m0 18v2m2 -78v2m0 2v2m0 56v2m0 4v2m0 6v2m1 -62v2m1 58v2m1 -68v2m0 2v6m1 32v2m0 20v2m1 -62v2m3 -16v2m0 40v4m0 30v2m1 -84v2m0 14v2m0 32v2m0 2v2m0 24v2m1 -20v2m1 -16v2m0 24v2m2 -14v2m0 6v2m0 4v4m1 -26v2m0 10v2m0 2v2m2 -20v2m0 6v2m0 2v2m0 6v6m2 2v2m1 -20v2m0 16v2m1 -28v2m1 6v4m1 -18v2m0 30v2m2 -32v2m0 12v2m0 10v2m1 -28v2m0 10v2m2 -2v2m1 -10v2m0 10v2m0 14v2m1 -22v2m0 10v4m0 2v2m1 -28v2m0 4v2m1 -52v2m0 32v2m0 34v2m1 -30v2m0 18v4m0 6v2m1 -38v4m0 4v2m0 8v2m1 -28v2m0 10v4m0 26v4m2 -84v2m1 2v2m1 48v2m1 0v2m0 6v2m1 -20v2m0 6v2m0 2v2m0 2v6m1 -66v4m0 52v2m0 12v2m0 2v2m1 -32v2m0 16v4m0 2v4m1 6v2m1 -34v2m1 4v2m0 26v2m1 -26v2m2 -16v2m0 6v2m0 24v2m1 -20v2m1 -10v2m0 14v2m0 6v2m1 -26v2m0 2v2m0 8v2m1 4v4m0 2v2m1 -34v2m1 -4v2m0 8v2m0 8v2m0 2v6m0 2v2m2 -26v2m0 4v2m2 10v2m0 6v2m0 2v2m2 -30v4m1 -10v2m7 -2v2m1 6v2m1 -10v2m0 20v2m16 -66v2m1 -4v2m0 2v2m0 2v2m2 -14v2m2 8v2m2 -10v2m0 12v2m1 -16v2m0 2v4m0 4v2m1 -8v2m2 2v2m2 4v2m1 -18v2m3 16v2m1 -2v2m2 -4v2m1 -16v2m2 20v2m1 -20v2m1 4v2m0 2v2m0 4v2m1 -26v2m1 22v2m1 -26v4m2 0v2m0 12v2m1 -6v2m1 -2v2m0 6v2m2 -22v2m0 12v2m2 6v2m1 -24v2m0 20v2m1 -20v2m0 12v2m2 4v2m3 -28v4m0 2v2m1 -8v2m0 14v2m0 4v2m2 -22v2m1 42v2m1 -2v2m1 -46v2m0 20v2m0 4v2m0 8v2m7 -32v2m0 4v2m0 6v2m0 12v2m0 8v2m0 28v2m11 -26v2m1 -6v4m1 0v4m3 -4v4m0 12v2m2 0v2m1 -12v4m2 -6v2m0 4v2m1 -14v2m0 8v4m1 -28v2m1 10v2m1 -8v4m0 12v2m0 2v2m0 2v2m1 -22v2m1 14v2m1 -22v2m0 18v2m1 -6v2m0 14v2m1 -24v2m0 2v2m0 4v2m1 -6v2m1 2v2m0 2v2m1 -22v2m1 -8v2m0 2v2m0 20v2m1 -28v2m0 18v2m1 2v2m1 -10v2m0 2v2m1 -16v2m1 16v2m1 -8v6m1 0v2m1 0v2m2 -10v2m0 4v2m3 0v2m1 -14v2m0 14v2m1 -18v2m1 12v2m2 -12v2m0 6v2m3 -22v2m0 8v2m0 8v2m0 2v2m1 -20v2m0 12v2m1 -14v4m1 8v2m2 -26v2m0 12v2m1 2v2m0 6v2m2 -22v2m1 -4v2m0 2v4m0 2v2m1 -16v2m0 14v2m1 -16v2m0 6v2m2 6v2m1 -16v2m1 -8v4m0 10v6m1 -18v6m1 6v2m2 2v4m0 4v2m1 -10v2m1 -12v4m0 6v2m2 -8v2m1 -12v2m0 10v2m0 2v4m2 -6v2m0 2v2m2 -2v4m2 -6v2m1 -46v4m0 34v4m0 8v2m1 -24v2m1 10v4m1 -18v2m0 18v2m0 2v2m1 -10v4"/>
<path stroke="#1300ff" stroke-width="1" fill="none" d="M142.5 220v2m1 -44v2m0 68v2m2 -46v2m2 -28v2m1 20v4m1 -32v2m0 10v2m1 12v2m1 -26v2m1 -6v2m0 6v2m0 2v2m2 -6v2m1 0v2m1 38v2m1 -46v2m1 8v2m1 6v2m5 14v2m1 0v2m0 4v2m1 -14v2m3 -28v2m10 38v2m2 -48v2m1 32v2m4 2v2m1 -46v2m4 42v2m2 4v4m8 -48v2m0 74v2m1 -2v2m9 -6v2m1 -68v2m1 -8v2m2 0v2m0 6v2m1 -4v2m1 -14v2m0 10v2m4 -8v2m4 -6v2m12 22v2m0 20v2m1 -50v2m1 26v2m0 22v2m1 -46v2m1 -12v2m0 2v2m0 4v2m0 30v2m0 12v2m1 -4v2m1 -48v2m0 8v2m0 18v2m0 8v2m2 -14v2m1 -32v6m0 12v2m1 -22v2m0 28v2m1 -32v2m0 38v2m1 -30v2m1 -4v6m0 26v2m2 4v2m5 -16v2m10 -2v2m2 6v2m2 -30v2m0 28v2m1 -46v2m1 50v2m2 -8v2m1 26v2m1 -26v2m8 -42v2m2 -14v2m2 22v2m1 10v2m0 4v2m0 6v4m0 22v2m1 -70v2m0 18v4m0 4v2m1 -28v2m0 4v2m0 16v2m2 -20v2m0 6v2m0 4v2m1 -16v2m7 -16v2m0 12v2m1 -4v2m0 10v2m1 -24v2m0 4v2m0 2v2m1 2v2m0 22v2m1 -38v2m0 12v2m2 -14v4m0 4v4m0 16v2m0 16v2m1 -56v2m0 12v2m0 24v2m0 6v2m1 -50v2m1 0v2m0 38v2m1 -40v2m0 20v2m2 -22v2m0 24v2m1 -32v2m0 2v2m0 22v2m2 -22v2m0 4v2m0 4v2m1 -24v2m0 28v2m2 -32v2m0 4v2m0 10v2m1 -22v2m0 32v2m3 -18v2m1 -16v2m1 10v2m1 -14v2m0 2v2m0 16v2m2 -4v2m0 2v2m0 8v2m1 -30v2m0 4v2m0 12v2m1 -10v2m0 6v4m0 20v2m1 -52v2m0 18v2m0 2v2m1 -22v2m0 4v2m1 -4v2m0 2v2m2 2v2m0 14v2m1 -32v2m1 20v2m0 14v2m1 -30v2m0 12v2m1 -2v2m0 2v2m1 -24v2m1 -10v2m1 -6v4m0 32v2m0 6v2m0 2v2m1 -36v2m0 2v2m2 0v2m1 -16v2m2 -6v2m1 20v4m1 -10v2m0 6v2m3 -6v2m1 -6v2m0 58v2m1 -80v2m2 16v2m1 -10v2m1 -6v2m0 28v2m4 22v2m3 2v2m2 -2v2m9 14v2m10 -2v2m15 0v2m23 -74v2m1 0v2m5 6v2m3 -8v2m2 26v2m1 -30v2m1 2v2m0 2v2m3 -6v2m1 -12v2m1 6v2m3 -8v2m0 6v2m1 58v2m1 -80v2m1 2v2m0 12v2m1 -12v2m1 -4v2m0 8v2m0 64v2m1 -80v2m0 4v2m0 2v2m0 4v2m1 -14v2m0 12v2m1 -14v2m1 -4v2m1 -2v2m0 12v2m2 56v2m1 -68v2m5 66v2m18 -12v2m1 -24v2m4 10v2m4 -12v2m1 18v4m6 -10v2m2 8v2m4 -22v2m1 -48v2m4 34v2m4 24v2m1 -24v2m0 22v2m4 -6v2m2 -18v2m0 8v2m0 4v2m3 -6v2m1 -14v2m1 12v4m0 4v2m1 -30v2m0 14v2m0 4v2m1 -10v2m33 -64v2m3 0v2m6 10v2m4 -12v2m0 4v2m1 -8v2m0 4v2m1 -12v2m1 2v2m1 12v2m4 -18v2m0 2v6m1 -8v2m0 8v2m1 4v2m1 -16v2m0 14v2m1 -8v2m1 -12v2m1 8v2m0 2v4m2 -14v2m0 12v2m1 -14v2m0 10v2m1 -22v2m0 4v2m1 2v2m3 6v2m1 -20v2m1 10v2m1 -18v2m0 6v2m2 -8v2m0 14v2m0 2v2m1 -10v2m0 8v2m1 -18v2m25 34v2m1 18v2m1 -12v2m1 -2v2m1 -14v2m1 16v2m2 -14v4m9 18v2m1 -12v2m0 4v2m1 -18v2m0 12v2m5 0v2m3 0v2m1 -18v2m3 14v2m1 -12v2m1 -8v2m3 0v2m0 2v2m0 2v4m1 -14v4m0 8v2m1 -14v2m1 12v2m1 -8v4m1 -12v2m6 10v2m1 -12v2m2 -4v2m0 4v2m2 -12v4m0 12v2m1 -14v2m3 4v2m2 0v2m1 -10v2m0 12v2m1 -14v2m0 6v2m1 -16v2m0 2v2m0 2v2m0 6v4m2 -2v2m2 -20v2m1 10v4m0 2v2m1 -2v2m11 -8v2m0 4v2"/>
<path stroke="#00ff60" stroke-width="1" fill="none" d="M142.5 236v2m1 -2v2m2 -52v2m0 40v2m0 12v2m1 -2v2m2 -22v2m0 2v2m0 22v2m1 -48v2m0 22v4m1 -6v2m0 2v2m2 -38v4m0 24v2m1 -22v2m0 4v2m0 4v2m0 16v2m0 6v2m2 6v2m1 -62v4m0 48v2m1 -56v2m0 14v2m1 24v2m0 6v2m1 -20v2m0 12v2m1 -52v2m0 62v2m1 -76v2m0 6v2m0 32v2m0 2v2m0 16v2m1 -58v2m0 2v2m0 6v2m0 2v2m1 14v2m0 4v2m0 16v2m0 6v2m1 -10v2m0 4v2m1 -66v2m0 2v2m0 46v2m1 -52v2m0 34v2m1 -48v2m0 24v2m1 10v2m1 0v2m0 10v2m0 6v2m0 4v2m1 -66v2m0 10v2m0 6v2m0 16v2m0 16v2m1 -58v2m0 6v2m0 30v4m0 6v2m0 12v2m0 2v2m0 4v2m1 -46v2m0 20v2m0 6v2m0 6v2m1 -72v4m0 64v2m0 2v2m1 -40v2m0 18v2m1 -30v2m1 6v2m0 32v2m2 -66v2m0 26v2m0 2v2m0 28v2m2 -42v2m1 -14v2m0 50v2m1 -70v2m0 16v2m0 2v2m0 2v2m0 4v4m0 22v2m1 -36v2m0 8v2m0 24v2m1 -30v2m0 26v2m4 -38v2m0 18v2m0 16v2m0 2v2m0 4v2m1 -72v2m0 6v2m0 46v2m1 -4v2m0 6v2m0 6v2m1 -58v2m0 30v2m1 -50v2m0 44v2m1 -34v2m0 4v2m0 2v6m0 4v2m0 28v2m1 -32v2m0 4v2m0 22v2m0 2v2m0 4v4m1 -54v2m0 32v2m0 2v2m0 14v2m1 -78v2m0 40v2m0 4v2m1 -34v2m0 2v2m0 6v2m0 2v2m0 2v2m0 38v2m1 -60v2m0 10v2m0 14v2m1 -28v2m1 42v2m1 -48v2m0 8v2m0 6v2m0 12v6m0 4v2m0 6v4m1 -50v2m0 4v2m0 30v2m1 -48v6m0 10v2m0 12v2m0 8v2m0 12v2m1 -54v2m0 4v2m0 6v2m0 12v2m0 6v2m0 2v2m0 6v2m1 -36v2m1 -20v2m0 4v2m0 6v2m0 8v2m1 -12v2m0 18v2m1 -34v4m0 10v2m0 12v2m1 -46v2m0 14v2m0 20v2m0 10v2m0 2v2m0 10v2m1 -54v2m0 10v2m0 40v2m1 -70v2m0 14v2m0 6v2m0 12v2m1 -24v2m0 2v2m0 38v2m1 -36v2m0 20v2m1 -22v2m0 4v2m0 6v2m0 10v2m1 -36v2m0 8v2m0 6v2m0 4v2m0 10v2m1 -34v6m0 10v4m0 6v2m1 -32v2m0 6v2m0 34v2m1 -36v2m0 2v4m0 22v2m0 12v2m0 4v2m1 -42v2m0 16v2m1 -34v2m0 8v2m1 -20v4m0 4v2m0 2v2m0 26v2m0 6v2m0 4v2m1 -54v4m0 6v2m0 2v2m0 6v2m0 6v2m0 6v4m0 2v2m0 4v2m0 2v2m1 -68v2m0 4v2m0 8v2m0 34v2m0 16v2m1 -36v2m0 16v2m0 8v2m1 -28v2m0 2v2m0 2v2m1 -32v4m0 20v2m1 -22v2m1 -14v2m0 8v2m0 26v2m0 8v4m1 -68v2m0 18v2m0 28v2m0 18v2m1 -68v2m0 24v4m0 6v2m0 6v2m1 -26v4m0 26v2m0 20v2m1 -78v2m0 30v2m0 8v2m0 4v2m0 8v2m0 4v2m1 0v2m1 -66v2m0 6v2m1 -8v4m0 60v2m1 -46v2m0 12v4m0 6v2m0 18v2m1 -60v2m1 34v2m1 -26v2m0 40v2m0 10v2m3 -18v2m1 2v2m2 -64v2m0 58v2m0 2v2m0 8v2m1 -16v2m1 14v2m1 0v4m1 -28v2m0 6v2m0 10v2m0 2v2m1 -82v2m0 56v4m0 2v2m1 -64v2m0 30v2m0 32v2m1 -70v2m0 26v2m2 -30v2m0 14v2m0 2v2m0 2v2m0 38v2m1 -42v2m0 48v2m0 4v2m1 -74v2m0 8v2m0 4v2m0 2v2m0 4v4m0 20v2m0 12v4m1 -46v2m0 10v2m0 36v2m1 -80v2m0 12v4m0 2v2m0 10v2m0 14v2m0 28v2m1 -64v2m0 10v2m0 4v4m0 36v2m1 -44v2m0 34v2m1 -42v2m0 30v2m1 -62v2m0 4v2m0 28v2m0 4v2m0 2v2m1 -40v2m0 62v2m1 -76v2m0 8v2m0 22v2m0 28v6m0 2v4m1 -72v2m0 18v2m0 32v2m1 10v2m0 2v2m1 -76v2m0 2v2m0 2v2m0 12v2m0 22v2m0 2v4m0 14v4m0 2v2m0 6v2m1 -76v2m0 2v2m0 10v4m0 18v2m1 -40v2m0 54v2m1 -32v2m0 40v4m1 -74v2m0 2v2m0 4v2m0 42v2m1 -36v2m0 44v2m1 -42v2m0 20v2m0 2v2m0 14v2m1 -60v2m0 10v2m0 38v2m0 8v2m0 2v2m1 -82v2m0 6v4m0 22v2m0 40v4m1 -64v2m0 44v2m2 -66v2m0 8v2m0 14v2m0 40v2m1 -66v2m0 20v2m0 2v2m0 32v6m1 -62v2m0 24v2m0 42v2m1 -78v2m0 22v2m0 36v2m0 14v2m1 -30v4m0 2v2m0 2v4m0 2v2m0 2v2m1 -42v2m0 4v2m0 10v2m0 12v2m1 -42v2m2 -10v4m0 18v4m0 2v2m0 14v2m0 10v2m0 4v2m1 -48v2m0 30v2m0 12v2m0 2v2m1 -82v2m0 38v2m0 30v2m2 -8v2m1 -66v2m1 66v2m1 -6v4m0 10v2m1 -82v2m0 52v2m1 -50v2m0 54v2m0 4v2m1 -70v2m0 6v2m0 26v2m0 6v2m0 20v2m1 -66v2m0 10v2m0 6v2m0 2v2m0 4v2m0 8v2m0 20v2m1 -66v2m0 10v4m0 18v2m0 4v2m0 28v2m0 6v2m1 -80v2m0 8v2m0 12v2m0 6v2m0 6v2m0 10v2m0 14v2m0 2v2m1 -66v2m0 18v4m0 24v2m0 16v2m1 -18v2m2 14v2m2 -24v2m0 18v2m1 -8v4m0 10v2m2 -14v2m0 2v2m2 -22v2m0 10v2m1 -10v4m0 4v2m1 -16v4m0 12v2m0 4v2m1 -30v2m0 16v4m1 -8v2m0 16v2m1 -26v2m2 10v2m2 -4v2m0 14v4m1 -34v2m0 16v2m0 2v2m0 8v2m1 -32v2m1 8v2m1 6v2m0 6v2m1 -6v2m0 6v2m1 -30v2m1 6v2m1 -6v2m1 8v2m0 6v2m1 -28v2m0 8v2m0 16v2m1 -38v2m0 18v2m0 4v2m0 12v2m1 -22v2m1 4v2m1 -18v2m0 12v2m0 4v2m1 -14v2m1 4v2m0 6v2m1 -30v2m0 2v2m1 6v2m0 14v2m0 2v4m1 -44v2m0 36v2m2 -8v2m1 6v2m2 -8v4m0 6v2m1 -36v2m0 20v2m1 -22v2m0 4v4m0 8v2m0 6v2m1 -30v2m1 -16v2m0 16v4m0 18v2m1 -50v2m0 2v2m0 2v2m1 -8v2m0 6v2m0 4v4m0 2v2m0 10v2m3 -26v6m1 -12v2m0 2v2m0 4v2m0 12v2m0 4v2m1 -34v2m0 18v2m0 2v2m0 12v4m1 -36v2m0 24v2m1 -26v2m0 28v2m1 -22v4m0 4v2m0 26v2m1 -20v2m1 -12v2m1 -6v2m1 24v2m1 -42v2m0 42v2m1 -78v2m0 26v4m0 4v2m0 2v2m0 8v2m0 22v2m1 -74v2m0 6v2m0 26v2m0 10v2m1 8v2m1 -66v2m0 4v2m0 10v2m0 4v2m1 -12v2m0 8v2m1 -24v2m0 16v2m0 6v2m0 8v2m0 12v2m0 12v2m1 -34v2m0 6v4m0 6v2m1 -38v2m0 62v2m1 -82v2m0 14v2m0 6v2m0 16v2m1 -36v2m0 4v2m0 4v2m0 16v2m0 2v2m0 6v2m0 22v2m1 -64v2m0 14v2m0 4v2m0 16v2m0 10v2m1 -44v2m0 20v2m0 14v2m0 2v2m0 8v2m1 -70v2m0 20v4m0 2v2m0 14v2m0 4v2m1 -38v2m0 2v2m0 14v2m0 4v2m0 4v2m1 -30v4m0 8v2m0 28v2m0 14v2m1 -74v2m1 -6v2m0 60v2m0 4v2m1 -52v2m1 -12v2m0 12v2m0 28v2m0 6v2m1 -62v2m0 6v2m0 4v2m0 20v4m0 16v2m0 2v2m0 12v2m1 -80v2m0 42v2m0 2v2m0 6v2m1 -50v2m0 2v2m0 2v2m0 40v2m0 8v2m1 -66v4m0 10v2m0 20v2m0 2v2m0 32v2m1 -62v4m0 4v2m0 8v2m0 10v2m0 6v2m0 20v2m1 -56v2m0 6v2m1 -34v2m0 6v2m0 4v2m0 18v2m0 10v6m1 -54v2m0 6v2m0 14v2m0 2v4m0 4v2m0 6v2m0 2v2m0 16v2m0 8v2m1 -78v2m0 4v4m0 40v2m0 10v2m0 8v2m0 6v2m1 -28v2m0 10v2m0 4v2m1 -68v6m0 44v2m0 4v2m0 10v2m0 4v2m1 -82v2m0 18v4m0 10v2m0 16v2m0 16v2m0 8v4m1 -68v2m0 4v2m0 8v2m0 8v2m0 26v2m1 -60v8m0 20v2m1 -40v2m0 8v2m0 10v2m0 2v2m0 18v2m0 2v2m1 -44v2m0 6v4m0 4v2m0 2v2m1 8v2m0 8v2m1 -52v4m0 2v2m0 6v2m0 2v2m0 2v2m0 14v2m0 8v2m0 4v2m0 8v2m0 6v4m0 6v2m1 -80v2m0 2v2m0 4v2m0 12v4m0 16v2m0 6v2m0 6v4m0 4v2m0 2v4m0 2v2m1 -72v2m0 20v4m0 6v2m0 10v2m0 8v2m0 12v2m1 -76v2m0 2v4m0 6v2m0 20v2m1 -20v2m0 16v2m0 6v2m0 10v2m1 -50v2m0 8v2m0 6v2m0 30v2m1 -54v2m0 4v2m0 26v2m0 8v4m1 -14v2m0 14v2m1 -64v2m0 40v2m0 16v2m1 -10v2m0 8v2m1 -10v2m1 -54v2m0 2v2m0 2v2m0 62v2m1 -56v2m0 12v2m0 26v2m0 12v2m1 -52v2m0 30v2m0 4v2m1 -2v4m1 4v4m1 -32v2m0 10v2m0 4v4m0 12v4m1 -30v2m0 28v2m1 -82v2m1 -2v2m0 50v2m0 10v2m0 2v2m1 6v2m1 -74v2m0 2v2m0 8v2m0 18v2m0 4v2m0 2v2m0 18v4m1 -64v2m0 2v2m0 24v6m1 -46v6m0 16v2m0 14v2m0 30v2m1 -70v4m0 32v2m0 24v2m1 -56v2m0 8v2m0 18v4m0 4v2m1 -42v2m0 22v2m0 6v2m0 18v2m1 -42v2m0 18v2m0 16v4m0 4v4m1 -54v2m0 8v2m0 26v2m0 12v2m0 2v2m1 -38v4m0 20v2m1 -34v4m0 22v2m0 4v2m0 2v2m0 12v2m1 -32v2m0 8v2m1 4v2m2 -36v2m0 24v2m0 22v2m1 -34v2m0 6v2m0 4v2m0 18v2m1 -54v2m0 22v2m1 -24v2m0 4v2m0 10v2m0 22v2m1 -46v2m0 20v2m1 -16v2m2 10v2m1 -18v2m0 8v2m0 4v2m1 -16v2m0 2v2m0 2v2m0 10v2m0 10v2m1 -24v2m0 16v2m1 -32v2m1 -2v2m0 10v2m0 2v2m0 2v2m1 -22v2m1 -36v2m1 62v2m0 2v2m1 -42v2m0 6v2m0 10v2m1 -12v2m0 24v2m1 -34v2m0 4v2m0 2v2m0 20v2m0 6v2m0 8v2m2 -46v2m0 30v2m2 -32v2m1 -10v2m0 4v4m0 18v2m1 -28v2m0 16v2m0 2v2m0 24v2m1 -34v4m0 14v2m1 -6v2m1 -34v2m0 2v2m0 16v2m1 -36v2m0 8v2m0 12v2m0 6v2m1 -36v2m0 4v2m0 4v2m0 2v2m0 4v2m0 4v2m1 6v2m1 -20v4m0 14v2m0 8v2m1 -60v2m0 18v2m0 4v2m0 12v2m0 18v2m1 -66v2m0 10v2m0 12v2m0 10v2m0 8v2m1 -52v4m0 4v2m0 30v2m1 -18v4m0 4v2m0 18v2m0 24v2m1 -72v2m0 40v2m0 8v2m0 4v2m1 -66v2m0 18v2m0 2v2m0 16v2m0 8v2m1 -22v2m0 4v2m0 16v2m0 12v2m0 4v2m1 -62v2m0 4v2m0 10v2m0 36v2m0 2v2m1 -62v2m0 6v2m0 6v2m0 4v2m0 6v2m0 20v2m1 -68v2m0 12v2m0 10v4m0 24v2m0 4v2m1 -64v4m0 2v2m0 2v2m0 26v4m0 16v2m0 18v2m1 -68v2m0 6v2m0 8v2m0 18v2m0 10v2m0 10v2m0 2v2m1 -50v2m0 24v2m0 6v2m1 -40v2m0 4v2m0 6v2m0 4v2m0 2v2m0 2v2m0 18v2m1 -78v2m0 8v4m0 12v2m0 6v2m0 30v2m1 -66v4m0 2v2m0 22v2m0 12v4m0 6v2m0 2v2m0 8v2m0 4v2m1 -32v2m1 -20v2m0 8v2m1 -30v2m0 6v2m0 26v2m0 12v2m1 -40v2m1 -14v2m0 22v2m2 -8v2m0 8v2m0 20v2m1 16v2m0 2v2m1 -84v2m0 58v2m0 12v2m0 2v2m1 -78v6m0 10v2m0 12v4m0 6v2m1 -32v2m0 16v4m0 2v2m1 -26v2m0 30v2m2 -46v2m0 42v2m1 6v2m0 20v2m0 6v2m1 -54v4m0 24v2m0 2v4m0 12v2m1 -78v2m0 42v2m0 12v2m0 12v2m1 -68v2m0 22v2m0 2v4m0 18v2m1 -30v2m1 -18v2m0 6v2m0 2v2m0 4v2m0 2v2m0 30v2m0 2v2m1 -74v4m0 22v2m0 6v2m0 8v2m1 -10v2m1 -26v2m0 16v2m0 8v2m0 36v2m1 -40v2m0 14v2m1 -46v2m0 8v2m0 28v2m1 -14v2m0 4v2m1 24v2m0 6v4m1 -58v2m1 -24v2m0 22v2m0 6v2m0 24v2m0 10v2m0 4v2m1 -58v2m0 6v2m0 24v2m0 14v2m0 2v2m0 2v2m1 -54v2m0 6v2m0 22v2m0 18v2m4 -70v2m1 20v4m1 -12v2m0 6v2m1 -38v2m0 24v2m1 -12v2m1 -16v2m0 2v4m0 20v2m0 2v2m1 2v2m1 -36v2m0 76v2m2 -60v2m0 54v2m1 -62v4m1 -6v2m0 2v2m0 4v2m0 4v4m0 4v2m1 -40v2m0 22v2m0 6v2m2 44v2m1 -8v2m0 2v2m1 -30v2m2 8v2m0 8v2m2 -34v2m0 16v2m2 -2v4m0 2v4m0 4v4m1 -26v2m0 10v4m0 10v2m1 -36v2m0 26v2m0 2v2m0 4v2m1 -46v4m0 22v2m1 -6v2m0 14v2m1 -14v2m0 8v2m1 -2v2m1 4v2m1 -78v4m0 6v2m0 10v2m0 12v4m0 16v2m0 2v2m1 -52v2m0 2v2m1 -2v2m0 46v2m0 12v2m1 -20v2m1 -2v2m0 6v2m1 6v2m0 2v2m1 -52v2m0 18v2m0 6v2m0 4v2m0 12v2m1 -10v2m2 -16v2m0 16v4m1 -4v2m1 -20v4m0 10v2m0 4v2m0 2v2m1 -18v2m0 4v2m0 2v2m1 -20v2m0 4v2m0 10v2m0 6v2m1 -70v4m0 24v2m0 6v2m1 16v2m0 6v2m0 2v2m1 -54v4m0 6v2m0 14v4m0 12v2m1 -56v2m0 22v2m0 4v2m2 -32v2m0 28v2m1 -12v4m0 8v2m0 8v4m1 -34v2m0 14v2m0 4v2m0 10v2m0 18v2m1 -66v2m0 6v2m0 52v2m2 -60v2m0 4v2m0 22v2m0 14v2m0 8v2m1 -80v2m0 2v2m0 4v2m0 18v2m0 2v2m0 2v2m0 8v2m0 8v2m1 -38v2m0 2v4m0 6v4m0 14v4m1 -34v2m0 20v2m1 -12v2m0 14v2m1 -22v2m1 44v2m1 -44v2m0 44v2m1 -8v2m1 -50v2m0 2v4m0 6v2m0 2v2m0 34v2m1 -50v2m0 10v2m1 -14v2m0 2v2m0 38v2m1 -44v2m0 2v2m0 38v2m1 -24v2m1 -30v2m0 4v2m0 18v2m1 -32v2m0 4v2m1 2v2m1 4v2m1 -14v2m0 14v2m0 8v2m0 20v2m1 -52v2m0 2v2m0 12v2m1 -18v2m1 10v2m1 -18v2m0 2v2m2 2v2m0 2v2m0 42v2m2 -54v2m0 14v2m1 -20v2m0 16v2m1 -22v2m0 8v2m0 40v2m1 -52v2m0 12v2m1 2v2m0 28v2m0 4v2m1 -56v2m0 14v2m1 -10v2m1 -2v2m0 38v2m1 -44v2m0 6v2m1 -26v2m0 18v2m0 2v2m0 6v2m0 2v4m0 2v6m1 -44v2m0 12v2m0 12v2m0 28v2m1 -72v2m0 4v2m0 2v2m0 4v4m0 2v2m1 -14v2m0 28v4m0 2v2m1 -40v2m0 62v2m1 -72v2m0 12v2m0 24v2m1 -46v2m0 28v2m0 2v2m1 -26v2m0 28v2m0 26v2m1 -64v2m0 8v2m0 12v4m0 36v2m1 -80v2m0 4v2m0 48v2m1 -36v2m0 28v2m0 2v2m1 -52v2m0 8v2m0 44v4m0 16v2m1 -44v2m1 -16v2m0 2v2m0 14v2m0 2v6m0 2v2m10 14v2m1 -36v2m0 38v2m2 -6v4m1 -6v2m0 4v2m1 -6v2m0 2v4m2 -54v4m0 6v2m0 40v2m2 -56v2m0 26v2m0 22v4m3 -34v2m0 16v2m1 -42v2m0 46v2m1 -6v2m0 2v2m1 -34v2m0 18v2m0 8v2m1 -36v2m0 6v2m0 6v2m0 10v2m0 10v2m1 -24v2m0 18v2m1 -50v2m1 42v2m0 4v2m1 -42v2m0 6v2m1 26v2m0 2v2m1 -40v2m1 -4v2m0 34v2m0 2v2m1 -46v2m0 42v2m2 -42v2m0 28v4m0 8v2m1 -52v2m0 38v2m1 4v2m1 -38v2m1 -4v2m0 40v2m1 -44v2m0 38v2m1 -40v2m0 36v2m1 -42v4m1 -10v2m0 4v2m0 38v2m1 -50v2m0 36v2m0 2v4m1 -46v2m0 48v2m1 -8v2m1 -34v2m2 24v2m0 6v2m1 -6v2m1 -36v2m0 38v2m1 -10v2m1 -40v2m0 42v2m1 -44v2m1 36v2m0 6v2m1 -40v2m1 -6v2m1 34v2m1 -30v2m1 -14v2m0 42v2m1 -44v4m2 34v4m1 -46v4m1 0v2m0 2v2m0 32v2m1 -2v2m1 -34v2m0 30v2m1 -4v2m0 4v2m1 -46v2m0 42v2m1 -40v2m1 -10v2m0 6v2m1 -8v2m0 38v2m0 2v2m1 -46v2m0 44v2m1 -52v4m0 40v2m1 -44v2m1 -4v2m0 4v2m1 8v2m1 24v2m1 -4v2m1 0v2m2 2v2m1 -74v2m0 66v2m2 -56v2m0 30v2m0 2v2m0 4v2m1 -56v4m0 60v2m1 -4v6m1 -74v2"/>
<path stroke="#14ff00" stroke-width="1" fill="none" d="M142.5 238v4m1 -16v2m5 14v2m3 -16v2m0 6v2m2 -54v2m0 12v2m5 34v2m2 2v2m1 -62v2m0 62v2m1 -12v2m2 -2v2m4 -8v2m1 0v2m2 -38v4m0 30v4m0 12v2m1 -60v2m0 40v2m1 -44v2m0 44v2m5 -28v2m0 34v2m0 2v2m1 -6v2m2 0v2m1 -14v2m0 10v2m2 -4v2m1 -10v2m0 4v2m1 -12v2m2 12v2m1 -50v2m0 34v2m1 -40v2m1 -20v2m3 8v2m0 2v2m1 -22v4m0 2v2m0 10v2m0 12v2m0 16v2m1 -46v2m0 68v2m1 -62v2m1 -2v2m0 34v2m1 -26v2m0 16v2m2 -8v2m0 8v2m1 -38v2m1 -2v2m0 6v2m1 14v2m2 -18v2m1 8v2m1 16v2m0 4v2m1 -38v4m0 6v2m0 24v2m1 -28v2m0 38v2m0 2v2m2 -58v2m0 2v2m2 16v2m1 0v2m1 4v2m1 -16v2m1 -8v2m0 18v2m1 -16v2m1 4v2m1 -18v2m0 18v2m1 10v2m2 -16v2m1 24v2m0 4v2m2 -28v4m0 2v2m1 -16v2m1 -6v2m0 34v2m1 -24v2m0 8v2m2 6v2m3 2v2m0 6v4m2 -24v2m3 8v2m5 -14v2m0 10v2m1 -12v2m2 4v2m2 -6v2m0 8v2m1 -74v2m2 64v2m0 4v2m2 -62v2m0 48v2m0 6v2m1 -42v2m1 0v2m0 28v2m1 -52v2m0 44v2m0 22v2m1 -10v2m2 -10v2m2 2v2m1 -44v2m0 26v2m2 -44v4m0 54v2m1 -72v2m0 24v2m0 34v2m1 -2v2m6 -64v2m0 10v2m0 4v4m0 2v2m1 54v2m1 -22v2m0 2v4m5 -24v2m0 20v2m1 -14v2m6 4v2m0 16v2m1 -8v2m4 -2v2m2 -16v2m0 10v2m1 -18v2m1 -52v2m0 30v2m1 -40v2m0 30v4m1 -32v2m1 -6v2m6 72v2m1 -18v2m2 0v2m1 8v2m1 -16v2m0 12v2m1 -8v2m2 6v2m1 -16v4m0 4v2m0 6v2m1 -6v2m3 -4v4m1 8v2m1 -26v2m1 8v2m2 0v4m15 -12v2m0 4v2m5 8v2m1 -6v2m1 -28v2m0 6v2m1 6v2m0 4v2m0 6v2m1 -18v2m0 6v4m1 -6v4m1 -22v2m0 8v2m0 22v2m1 -20v2m0 8v2m1 -22v4m1 -8v2m0 12v2m1 -34v2m2 -2v2m0 20v2m0 18v2m5 -26v4m0 2v2m2 -56v2m1 18v2m0 24v2m1 -48v2m0 2v2m0 6v2m0 14v2m1 -12v4m0 2v2m0 8v2m0 10v2m1 -18v2m0 18v2m1 -44v2m0 10v2m0 6v2m0 2v2m0 14v2m3 -46v2m0 4v2m0 36v2m0 2v2m1 -50v2m0 28v2m0 2v2m1 -4v2m0 4v2m1 -30v4m0 14v2m1 -26v2m0 28v2m2 0v2m3 32v2m1 -66v2m0 36v2m0 10v2m0 4v4m1 -72v2m0 56v2m0 14v2m1 -42v2m0 16v2m0 20v2m1 -74v2m0 22v2m0 10v2m0 6v2m0 4v2m0 18v4m1 -64v2m0 18v2m0 40v2m1 -52v2m0 56v2m3 -50v2m1 -18v4m0 24v2m0 4v2m1 -54v2m0 14v2m0 4v4m0 12v2m0 6v2m0 22v2m1 -36v2m0 16v2m0 4v2m0 4v2m0 2v2m1 -64v2m0 2v6m0 8v2m1 -22v2m0 6v2m0 2v2m1 -16v2m0 18v2m0 8v2m0 10v2m0 18v2m1 -68v2m0 28v2m0 10v2m0 6v2m0 2v4m0 14v2m1 -30v2m1 -44v2m0 52v2m1 -50v2m0 26v2m1 -28v2m0 12v2m0 12v2m0 6v2m0 14v2m0 6v2m1 -66v4m0 4v2m0 2v2m0 8v2m0 20v2m1 -34v2m0 16v2m0 8v2m0 8v2m0 4v2m0 10v2m1 -70v2m1 14v2m0 2v2m0 8v2m0 6v2m1 -44v6m1 36v2m0 18v2m1 -54v2m0 30v4m0 4v2m1 -54v2m0 54v2m0 8v2m1 -64v2m0 20v2m0 10v2m1 -36v2m0 6v2m0 28v4m0 8v2m1 -56v4m0 8v2m0 2v2m0 4v2m0 30v4m0 6v2m0 6v2m1 -72v6m0 8v2m0 2v2m0 2v2m0 20v2m0 28v2m1 -64v2m0 12v2m0 20v2m1 -52v2m0 10v2m0 26v4m1 -10v2m1 -32v2m0 14v2m0 8v2m0 10v2m0 30v4m1 -68v2m0 6v2m0 20v2m0 8v2m0 8v2m1 -56v2m0 4v2m0 10v2m0 36v4m1 -58v2m0 12v2m0 2v2m0 24v2m0 4v2m0 6v2m1 -66v4m0 16v2m0 2v2m0 6v4m0 18v2m3 -12v2m1 -26v4m0 6v4m0 2v2m2 40v2m1 -46v4m0 16v2m0 12v2m1 -52v2m0 18v2m1 -10v2m0 40v2m2 -28v2m3 -4v2m6 4v2m2 -4v2m1 -18v2m3 2v4m0 8v2m4 -24v2m0 4v2m7 0v2m0 12v2m6 -50v2m2 46v2m1 -14v2m1 2v2m0 10v2m0 10v4m1 -60v2m0 22v2m1 -8v2m1 -14v2m0 56v2m1 -56v2m0 4v2m0 48v2m1 -78v2m0 10v2m1 40v2m0 8v2m0 6v4m1 -26v4m1 -38v2m1 20v2m0 18v2m1 -12v4m0 2v2m1 -20v2m1 8v2m2 32v2m1 -70v2m1 18v2m1 -28v2m0 2v2m1 -4v2m0 14v2m0 56v2m1 -50v2m0 10v2m0 28v2m1 -70v2m0 30v2m0 2v2m1 -32v2m0 10v2m0 2v2m0 10v2m1 -22v2m0 4v2m1 -18v2m0 30v2m1 -12v2m0 4v2m1 -18v2m0 12v4m1 -28v2m0 8v2m0 6v4m0 6v2m1 -16v2m0 8v2m1 -40v2m0 36v2m1 -32v2m0 18v2m0 16v2m1 -44v2m0 10v2m0 10v2m0 14v2m1 -30v2m0 2v2m1 -18v2m0 4v2m0 24v2m0 6v2m0 34v4m1 -80v2m0 22v4m0 10v2m1 -6v2m1 -8v4m0 2v4m1 -16v2m1 -14v2m0 4v2m1 -6v2m1 -2v2m0 8v6m0 4v2m1 -24v2m0 4v2m0 8v4m1 -10v2m0 4v2m0 4v2m1 20v2m0 6v2m0 8v2m1 -56v2m0 2v6m0 4v2m0 24v6m1 -50v2m1 16v2m2 -16v2m0 4v2m0 12v2m1 -20v2m0 10v2m1 -22v2m0 4v2m1 0v4m0 2v2m1 -24v6m0 20v2m0 2v2m1 -34v2m0 4v2m0 6v2m0 14v2m1 2v2m1 -20v2m1 -22v2m0 24v2m0 6v4m1 -36v2m0 6v2m0 2v2m0 4v2m1 -20v2m0 14v2m0 8v2m0 8v2m1 -36v2m0 10v2m0 10v6m0 2v2m1 -34v2m0 2v2m1 -10v2m0 20v2m0 6v2m1 -22v2m0 10v2m0 8v4m1 -36v2m0 30v4m3 -20v2m0 18v2m0 6v2m1 -42v2m0 32v4m1 -16v2m0 34v2m1 -66v2m0 12v2m0 20v2m0 30v2m1 -54v2m0 26v2m1 0v2m0 34v2m1 -4v2m1 -10v2m1 -48v2m0 36v2m1 -28v6m0 38v2m1 -48v2m0 8v2m1 -8v2m0 4v2m1 -44v2m0 6v2m0 24v2m1 -24v2m0 10v2m0 36v2m0 6v4m1 -70v2m0 62v2m1 -64v2m0 12v2m0 2v4m1 -22v2m0 8v2m0 4v2m0 12v2m0 20v2m0 14v2m1 -56v2m0 50v2m1 -26v4m0 6v2m0 10v2m1 -72v2m0 2v2m0 6v2m0 18v2m0 10v2m0 32v2m1 -64v2m0 44v2m1 -8v4m1 -62v2m0 50v2m0 2v2m0 10v2m1 -16v4m0 2v2m0 14v2m1 -14v2m1 -60v6m0 38v2m0 2v2m0 14v2m1 -60v2m0 2v2m0 2v2m0 52v2m1 -56v2m0 14v4m0 18v2m0 4v2m0 2v2m0 2v4m0 2v2m1 -56v6m0 4v2m0 2v2m0 4v4m1 -4v2m0 2v2m0 30v2m1 -66v2m0 6v2m0 40v2m1 -46v2m0 44v2m0 8v2m1 -56v2m0 34v2m0 2v2m1 -16v2m0 12v2m0 4v2m0 8v2m1 -38v2m1 0v2m0 32v2m1 -64v2m0 10v2m0 4v2m0 10v2m0 10v2m1 -44v2m0 32v2m0 20v2m1 -28v2m0 8v2m0 4v2m0 8v2m0 2v4m1 -60v2m0 16v2m0 4v2m0 28v4m1 -66v2m0 12v2m0 2v2m0 6v2m0 4v4m1 -18v2m1 -10v2m0 2v2m1 8v2m0 12v2m1 -10v2m0 28v2m1 -46v2m2 -4v2m0 16v2m0 12v2m0 14v2m1 -20v2m1 -36v4m0 4v2m0 2v2m0 12v2m0 10v2m0 2v2m1 -42v2m0 32v4m0 4v2m1 0v2m1 -28v2m0 14v2m0 4v2m1 -12v2m1 -16v2m0 10v2m1 -30v2m0 10v2m1 -12v2m1 10v2m0 2v2m0 8v2m1 -22v2m0 6v2m0 16v2m1 -30v4m1 -6v2m0 2v2m0 18v2m0 20v2m1 -50v2m1 -2v2m0 12v2m0 12v4m0 6v2m0 12v2m1 -2v2m1 -28v2m1 -30v2m0 8v2m0 4v2m1 -2v4m0 8v2m0 22v2m1 -50v2m0 40v2m0 2v2m1 -40v2m0 4v2m0 2v4m0 2v2m0 14v4m1 -42v2m0 4v2m0 12v2m0 8v2m1 -26v2m0 4v2m0 24v2m1 -38v4m0 18v2m1 6v2m0 6v2m1 -20v2m0 12v2m1 -54v2m0 4v2m0 10v2m0 30v4m1 -66v2m0 50v4m0 10v2m1 -66v4m0 54v2m0 8v2m1 -18v2m1 -56v2m0 4v2m0 14v2m0 30v2m1 -56v2m0 12v2m1 -12v2m0 14v6m0 2v2m0 16v2m0 2v2m1 -34v2m1 -6v2m1 -14v2m0 12v2m0 20v2m1 24v2m1 -72v2m0 72v2m1 -58v2m0 20v2m0 20v2m0 14v2m1 -62v2m1 -20v2m0 10v2m0 6v2m0 4v2m0 10v2m0 4v2m1 -30v2m0 10v2m0 10v2m0 10v2m0 12v2m5 -26v2m0 12v2m1 22v2m1 -50v2m1 -4v2m0 4v2m2 -8v2m0 40v2m1 -46v2m1 2v2m2 -2v2m1 44v2m4 -50v2m1 42v2m0 2v2m2 -8v2m0 4v2m0 2v2m2 -52v2m2 2v2m2 2v2m0 32v2m1 -34v2m0 38v2m1 -46v2m0 38v2m1 -38v2m0 32v2m1 -42v2m1 2v2m1 -10v2m0 6v2m2 -18v2m1 2v2m1 4v2m1 -12v2m0 10v4m0 42v2m3 -60v2m0 8v2m1 2v4m1 -10v2m0 8v2m1 -2v2m2 -12v2m0 4v6m1 -10v2m1 -4v2m0 2v2m0 36v2m0 2v2m1 -44v2m1 44v2m1 -50v4m0 2v2m1 -8v2m2 -8v2m4 6v4m1 4v2m1 -4v2m0 34v2m2 -2v2m1 -42v4m0 36v4m1 -4v2m1 -46v2m1 -10v2m0 4v2m1 2v2m1 -6v4m0 8v2m1 -8v2m0 2v2m1 26v2m0 2v2m0 6v2m1 -60v2m1 52v2m1 -42v2m1 4v2m1 -10v6m1 0v2m0 38v2m1 -50v2m0 4v2m0 26v2m0 6v4m1 -78v2m0 4v2m0 10v2m0 14v2m0 42v2m1 -60v2m0 4v2m0 4v2m0 42v2m1 -80v2m0 24v2m0 6v2m0 2v2m0 30v2m1 -64v2m1 -8v6m0 62v2m1 -68v2m0 36v2m1 -44v2m0 6v2m0 10v2m0 10v2m0 4v2m0 4v2"/>
<path stroke="#00ff86" stroke-width="1" fill="none" d="M142.5 242v4m2 -62v2m0 36v2m0 6v6m1 -4v4m1 -42v2m1 8v2m0 22v2m0 18v2m1 -32v2m2 -48v2m0 60v2m0 8v2m1 -50v2m0 6v2m0 26v2m1 -8v2m0 2v2m0 2v2m0 2v4m1 -64v2m0 6v4m0 30v2m0 26v2m1 -32v2m0 10v2m1 -28v2m0 24v2m0 12v2m1 -78v4m0 32v2m0 6v2m0 2v2m0 14v2m1 -62v2m0 16v2m1 40v2m0 12v2m1 -32v2m0 8v2m0 10v2m1 -26v2m0 4v2m1 -40v2m0 12v2m0 2v2m0 10v2m1 -28v2m0 12v2m0 28v2m1 -56v2m0 10v2m0 40v2m0 2v2m1 -62v2m0 2v2m0 10v2m0 14v4m0 20v2m0 2v2m1 -36v2m1 -34v4m0 54v2m0 4v2m0 4v2m1 -38v2m0 24v2m1 -56v2m0 52v2m1 -34v2m0 26v2m1 -56v2m0 4v2m0 2v2m0 14v2m0 6v2m0 8v2m0 14v2m0 16v2m1 -74v2m0 4v2m0 2v2m0 16v2m0 10v2m0 14v2m1 -60v2m0 6v2m0 16v2m0 12v4m0 16v2m0 2v2m1 -6v4m1 -64v2m0 64v2m1 -58v2m0 16v2m1 -36v2m0 16v2m0 14v2m0 24v2m1 -56v2m0 6v2m0 56v4m1 -60v2m0 24v2m0 10v2m0 18v2m0 2v2m0 2v2m1 -82v2m0 26v2m0 14v2m0 10v2m0 14v2m1 -60v2m0 64v2m1 -14v2m1 -18v2m0 22v2m1 -38v2m0 20v2m0 6v2m1 -52v2m0 12v2m0 38v2m1 -50v2m0 38v2m0 4v2m1 -72v2m0 14v2m0 34v2m0 4v2m0 8v2m1 -14v2m0 14v2m1 -50v2m0 30v2m1 -56v2m0 26v2m0 16v2m0 22v2m1 -24v2m0 14v2m1 -50v2m1 -16v2m0 18v2m0 44v2m1 -60v2m0 44v2m1 -60v2m0 6v4m0 6v2m0 2v2m1 -20v2m0 16v2m0 6v2m0 8v2m0 22v2m1 -62v2m0 6v6m0 34v2m0 4v2m0 6v2m1 2v2m1 -54v2m0 18v2m0 10v2m0 2v2m0 14v2m1 -62v2m0 14v2m0 2v2m0 20v2m0 6v2m1 -44v2m0 16v6m0 6v2m0 10v2m0 2v2m1 -52v2m0 4v2m0 16v4m0 12v4m1 -22v2m1 -40v2m0 32v2m0 4v2m0 10v2m1 -36v2m0 8v2m0 28v2m0 16v2m1 -80v2m0 22v2m0 4v2m1 -28v2m0 34v2m0 2v2m0 8v2m1 -22v2m0 2v2m0 14v2m0 12v2m1 -70v2m0 18v6m0 52v2m1 -52v2m0 18v2m0 8v4m0 12v2m1 -60v2m0 18v2m0 12v2m0 10v2m0 8v2m0 2v2m1 -64v2m0 6v2m0 22v2m1 -24v2m0 20v2m0 24v2m0 2v2m1 -24v2m0 8v2m1 -52v2m0 14v2m0 18v2m0 6v2m1 -32v2m0 6v2m0 10v6m0 4v2m0 6v6m0 2v4m0 4v2m1 -66v2m0 24v2m0 10v4m0 6v2m0 2v2m0 2v2m1 -58v2m0 54v2m0 2v2m1 -64v2m0 6v4m0 14v2m0 10v2m0 8v2m0 4v2m0 4v2m0 4v2m1 -52v2m0 2v2m0 10v2m0 2v2m0 18v2m1 -42v2m0 34v2m0 10v2m1 -66v2m0 20v4m1 -6v2m1 -8v4m0 20v2m0 24v4m1 -66v2m0 18v2m0 10v2m0 24v2m1 -56v2m0 2v2m0 4v2m0 6v2m0 28v2m1 -52v4m0 8v2m0 2v2m0 6v2m0 16v2m1 -64v2m0 20v2m0 10v2m0 2v2m1 -36v2m0 2v2m0 26v2m0 6v2m1 -44v2m0 12v2m0 6v2m0 2v2m0 4v2m0 10v2m0 10v2m0 8v2m0 6v2m1 -78v2m0 18v2m0 6v2m0 4v2m0 2v2m0 6v2m0 4v2m0 4v2m0 6v2m1 -66v2m0 6v2m0 30v2m0 6v2m0 6v2m0 12v2m0 4v2m1 -78v2m0 24v2m0 24v2m1 -38v2m1 -14v2m0 12v4m0 8v2m0 4v2m0 18v2m0 6v2m1 -58v2m0 14v2m0 10v2m0 6v2m1 -48v2m0 20v2m0 4v2m0 22v2m0 16v2m1 -70v2m0 14v2m1 -16v2m0 20v2m0 8v2m0 32v2m0 2v2m1 -14v2m0 10v2m1 -56v2m0 46v2m1 -12v2m1 22v2m2 -26v2m0 8v4m0 10v2m1 -84v2m0 72v2m1 -12v2m0 12v2m0 2v2m3 -84v2m1 76v2m1 -6v4m1 -42v2m1 24v2m0 4v2m0 8v2m1 -78v2m0 2v2m0 14v2m0 42v2m0 4v4m1 -74v2m0 4v4m0 4v2m0 40v4m1 -60v2m0 8v2m0 6v4m0 8v2m1 -34v2m0 8v2m0 10v2m0 44v2m0 6v2m1 -8v2m1 -64v4m0 32v2m0 10v2m0 24v2m1 -84v2m0 26v2m0 20v2m0 14v4m0 4v2m1 -76v2m0 26v2m0 6v2m0 14v2m0 2v2m0 10v2m0 10v2m1 -66v4m0 14v2m0 6v2m0 6v2m0 6v4m0 10v2m1 -68v2m0 26v2m0 26v2m0 8v2m1 -72v2m0 12v2m0 4v2m0 14v2m0 22v2m1 -8v2m0 6v4m0 8v2m1 -48v2m0 48v2m1 -72v2m0 18v2m0 34v2m0 10v2m1 -38v2m0 36v2m1 -22v4m1 -36v2m2 48v2m1 -70v2m0 6v2m0 40v2m0 14v6m1 -76v2m0 22v4m0 38v2m0 6v2m2 -68v4m0 2v4m0 2v2m0 4v2m0 12v2m0 10v2m0 22v2m1 -78v2m0 30v2m1 -16v2m0 2v4m0 4v2m0 18v2m0 20v2m1 -74v2m0 10v2m0 2v2m0 34v2m0 14v2m1 -70v2m0 2v2m0 46v2m0 2v2m1 -64v2m0 6v2m0 8v2m0 10v2m0 4v2m0 6v2m0 4v2m0 6v4m0 14v2m0 4v2m1 -56v4m0 28v2m0 4v2m0 6v2m0 6v2m1 -84v4m0 16v2m0 50v2m1 -48v2m0 2v2m0 20v2m0 8v2m1 10v2m1 -66v2m0 8v2m0 4v2m0 8v2m0 16v2m0 24v2m1 -74v2m0 32v2m0 22v2m0 8v2m1 -34v2m0 2v2m0 14v2m0 10v2m1 -20v2m1 0v2m0 12v2m2 -70v2m0 2v2m0 66v4m1 -6v2m1 -34v2m0 8v2m0 4v4m0 6v2m1 -72v2m0 4v2m0 60v2m1 -62v2m0 22v2m0 8v2m0 4v2m0 8v2m0 14v2m1 -74v2m0 14v4m0 4v2m0 4v2m0 24v2m1 -54v2m0 12v2m0 4v2m0 12v2m0 32v2m1 -44v2m0 4v2m0 4v4m0 10v2m0 6v4m1 -44v2m1 4v2m0 32v2m2 0v2m1 -10v2m0 18v2m1 -24v4m1 -24v2m0 14v6m0 16v2m2 -6v2m0 4v2m1 -16v2m1 -8v2m1 2v2m0 10v4m2 -34v2m0 10v6m0 8v4m1 -10v4m0 2v2m1 -32v2m0 2v2m1 8v2m0 4v4m0 4v2m0 8v2m1 -4v2m1 -20v2m0 2v2m0 10v2m1 -10v2m0 4v2m0 2v4m1 -24v4m0 2v2m0 10v2m1 -12v2m0 8v2m1 0v2m1 -10v2m1 -12v2m0 4v2m1 14v2m1 -14v2m0 6v2m1 -22v2m0 10v4m0 6v2m1 -30v2m0 22v2m0 6v2m1 -36v2m0 16v2m0 8v2m1 -42v2m0 8v2m0 12v2m0 16v4m1 -26v2m0 2v2m0 10v2m1 -12v2m0 6v2m0 4v2m1 -10v2m0 4v2m1 -30v6m0 12v2m1 -26v2m0 28v2m0 8v2m1 -30v2m0 20v2m1 -20v2m0 14v2m4 -16v2m0 16v2m1 -6v4m1 -30v2m0 16v2m1 -24v2m0 2v2m0 2v2m0 6v2m0 6v2m1 6v2m0 4v4m1 -56v2m0 2v2m0 6v2m0 2v2m0 20v2m1 -58v2m0 28v2m0 14v2m0 6v2m1 -34v2m0 4v2m0 32v2m1 -44v4m0 16v2m0 4v2m0 20v2m1 -44v2m0 32v2m1 -64v4m0 26v2m0 6v2m0 32v2m1 -52v2m0 16v2m0 14v2m1 -22v2m0 6v2m0 26v2m1 -52v2m0 8v2m0 14v2m0 12v2m0 6v2m1 -32v2m0 22v2m1 -40v2m0 32v2m1 -28v2m0 20v2m0 8v2m1 -22v4m0 10v2m0 2v2m1 -18v2m1 0v2m0 6v2m1 -46v2m0 38v2m0 4v2m1 -56v2m0 10v2m0 16v2m0 2v2m0 8v2m0 22v2m1 -54v2m0 4v2m0 18v2m0 18v2m1 -74v2m0 6v2m0 12v2m0 6v2m0 2v2m0 6v2m0 2v4m1 -46v2m0 8v2m0 22v2m0 10v2m0 12v2m1 -30v2m1 -38v2m0 14v2m0 12v2m0 2v2m0 14v2m1 -44v2m0 26v2m0 4v2m0 34v2m1 -62v2m0 30v2m1 -48v2m0 18v2m0 26v2m1 -56v2m0 18v2m0 10v2m1 -32v2m0 28v2m1 -28v2m0 6v2m1 -12v2m0 4v2m0 18v2m0 4v4m0 12v2m1 -52v2m0 2v2m0 2v2m0 4v2m0 6v2m0 10v2m0 14v2m0 2v4m0 6v2m0 10v2m1 -48v2m0 14v2m0 16v2m1 -66v2m0 22v4m0 16v2m0 4v2m0 12v2m1 -66v2m0 42v2m0 4v2m1 -54v2m0 6v4m0 34v4m1 -42v2m0 2v2m0 4v2m0 30v2m0 4v2m1 -44v4m0 16v2m0 4v4m0 2v2m0 6v2m0 18v2m1 -68v2m0 4v4m0 14v2m0 32v2m0 2v2m0 4v2m0 2v2m1 -84v2m0 20v2m1 -24v2m0 20v2m0 8v2m0 2v2m0 6v2m0 12v2m0 8v2m0 6v2m1 -74v2m0 16v2m0 2v2m0 8v2m0 16v2m0 2v2m0 10v2m1 -72v2m0 8v2m0 22v2m0 6v2m0 8v2m0 22v2m1 -70v6m0 40v2m0 8v4m1 -62v2m0 12v2m0 4v2m0 2v2m0 2v2m0 6v4m0 14v2m0 4v6m0 2v2m1 -70v2m0 2v2m0 6v2m0 2v2m0 2v2m0 10v2m0 12v2m0 18v4m1 -38v2m0 28v4m1 -60v2m0 46v2m0 12v2m1 -74v2m0 18v2m0 4v2m1 -12v2m0 52v2m1 -74v2m0 2v2m0 22v4m0 4v4m0 4v4m0 10v2m0 2v4m1 -60v2m0 12v2m0 50v2m1 -38v2m0 2v2m1 -42v2m0 34v4m0 2v2m0 6v4m0 24v2m1 -10v2m1 -68v2m0 20v4m0 14v2m0 6v2m0 2v2m1 -42v2m0 2v2m0 22v2m0 14v2m0 6v2m0 10v2m1 -62v2m0 32v2m0 2v2m0 4v2m1 -66v2m0 30v4m0 16v2m0 6v2m0 4v4m1 -66v2m0 2v2m0 12v2m0 4v2m0 10v2m0 2v4m0 4v2m1 -54v4m0 30v2m0 26v2m1 -20v2m0 22v2m1 -22v2m0 2v2m0 2v2m1 -10v2m0 12v4m2 2v2m0 2v2m1 -74v2m0 62v2m2 -6v2m0 20v2m2 -68v2m0 44v2m0 2v2m0 8v2m1 -6v2m1 -20v4m0 6v2m0 6v2m1 -54v2m0 36v2m1 -52v2m0 50v2m0 6v2m0 2v2m0 2v2m1 -72v2m0 12v2m0 54v2m1 -36v2m0 10v2m0 6v2m0 4v2m0 6v4m1 -76v2m0 12v2m0 2v4m0 12v2m0 10v6m0 16v2m1 -56v2m0 48v2m1 -42v2m0 6v2m0 24v2m1 -36v2m0 40v4m1 -48v2m0 10v2m0 2v4m0 10v2m1 -50v2m0 20v2m0 2v6m0 4v2m0 2v2m0 4v2m0 8v2m1 -38v2m0 4v2m0 10v2m0 28v2m0 2v2m1 -74v2m0 32v2m0 2v4m0 4v2m0 2v2m0 2v2m1 -26v2m0 4v2m0 12v2m0 10v2m2 -20v2m1 -12v2m0 6v2m1 -14v2m0 10v2m0 8v2m1 -50v2m0 26v2m1 6v2m0 6v2m0 12v2m0 4v2m1 -20v2m0 10v2m1 -46v2m0 28v4m0 8v2m0 2v2m1 -32v2m0 6v2m0 2v2m0 12v2m0 10v2m1 -82v4m0 10v2m0 60v2m1 -78v2m0 36v4m0 4v2m0 10v2m0 16v2m0 4v2m1 -38v2m1 -18v2m0 6v2m0 14v2m0 6v2m0 2v2m1 0v2m0 4v2m0 6v2m1 -40v4m0 4v2m1 -54v4m0 22v2m0 24v2m0 16v2m1 -68v2m0 30v2m0 24v2m0 4v2m0 2v2m0 8v2m1 -30v2m1 -50v2m0 6v2m0 2v2m0 10v2m0 2v2m0 14v2m0 4v2m0 2v4m1 -30v2m0 24v4m1 -28v2m0 14v2m0 2v2m0 4v2m0 10v2m0 4v2m1 -32v2m0 10v2m0 10v2m1 -48v2m0 6v2m0 6v2m1 -16v2m0 20v2m1 -18v2m0 2v2m0 4v4m0 4v2m1 -24v2m0 14v2m0 6v2m1 -30v2m0 6v2m1 -20v2m0 20v2m0 4v4m0 8v2m0 2v2m0 2v2m1 -28v2m0 4v2m0 8v2m1 -28v2m0 2v4m0 6v4m0 6v2m1 -22v2m0 12v2m0 10v2m1 -44v2m0 6v2m0 4v2m1 -2v2m0 10v2m0 14v2m1 -26v2m0 6v2m0 10v2m1 -56v2m0 4v4m0 4v2m0 8v2m0 6v2m0 6v2m0 12v2m0 8v2m1 -64v2m0 38v2m0 2v2m0 14v2m1 -54v2m0 6v4m0 24v2m0 14v4m0 10v2m1 -68v2m0 10v2m0 4v4m0 4v2m0 22v2m0 12v2m1 -50v2m0 16v2m0 12v2m1 -46v2m0 44v2m0 14v2m1 -76v2m0 12v2m0 28v2m0 6v2m0 6v4m1 -68v8m0 2v2m0 4v4m0 12v2m0 12v2m0 26v2m1 -72v2m0 8v2m0 12v2m0 14v4m0 2v4m0 16v4m1 -46v2m0 6v2m0 4v6m0 8v2m1 -4v2m1 -32v2m0 20v4m0 2v2m0 10v2m0 6v4m1 -66v4m0 2v2m0 10v4m0 8v2m1 -14v2m0 4v2m0 6v2m0 8v2m1 -22v2m0 40v2m1 -74v2m0 10v2m0 12v4m0 40v2m1 -74v2m0 10v2m0 10v2m0 2v2m0 12v2m1 -36v2m0 10v2m0 4v2m0 2v2m0 28v2m0 2v2m0 6v2m1 -72v2m0 18v2m0 10v2m0 30v2m1 -54v2m0 6v2m0 14v2m0 38v2m1 -62v2m0 10v4m0 24v2m0 12v2m1 -12v2m0 2v2m1 -40v2m0 12v2m0 8v2m0 6v2m0 16v2m1 -38v2m0 2v2m1 -2v2m0 32v2m1 -36v4m1 -42v2m0 26v2m1 -34v2m0 20v2m1 -22v2m0 18v2m1 18v2m1 2v2m1 26v4m1 -46v2m0 18v2m1 4v2m0 6v2m1 -26v2m0 34v2m1 -50v2m0 20v2m1 4v2m1 -56v2m0 22v2m0 2v2m1 -38v4m0 18v2m0 4v2m0 14v2m1 -26v2m0 16v2m1 38v4m1 -28v2m0 10v2m1 -36v4m0 40v2m1 -66v2m0 24v2m1 -36v2m0 54v2m0 6v2m0 6v2m1 -60v2m0 10v2m1 -12v2m0 16v2m0 20v2m0 10v2m1 -60v4m0 4v4m0 6v2m0 34v2m2 -34v2m0 2v4m0 36v2m1 -70v2m0 36v2m0 16v2m1 -58v2m0 2v2m1 -6v2m1 20v2m0 28v2m1 -48v2m0 16v2m1 -30v2m0 14v2m0 2v4m0 36v2m1 -66v2m1 2v2m0 4v2m0 62v2m1 -46v2m0 20v2m0 16v2m2 -34v2m1 -20v2m2 -20v2m0 70v2m2 -42v2m0 32v2m1 -14v2m1 -20v2m0 6v2m0 20v4m2 -18v4m0 20v2m1 -40v2m0 12v2m0 12v2m0 2v6m1 -44v2m0 2v6m0 22v2m1 -20v2m0 10v4m1 -20v2m0 26v4m1 -32v2m0 16v2m0 14v2m1 -26v2m0 2v2m0 4v2m1 -28v2m0 4v2m0 2v2m0 6v2m0 6v2m1 -22v2m0 16v2m1 -30v2m0 20v2m0 2v2m1 -18v2m0 14v2m0 10v2m1 -36v2m0 6v4m0 6v4m0 8v2m0 6v2m1 -72v2m0 2v2m0 6v2m0 12v2m0 22v2m0 20v2m1 -38v2m0 14v2m0 2v2m0 2v2m0 8v2m1 -68v2m0 24v2m0 10v2m0 12v2m0 2v2m0 2v2m1 -18v2m1 -4v2m2 4v2m0 6v2m0 4v2m2 -12v2m1 10v2m2 -20v4m0 8v2m1 -14v2m0 18v2m1 -22v2m1 -14v2m0 4v2m1 -38v4m0 22v2m0 16v2m1 -46v2m0 2v2m0 18v2m1 -44v2m1 0v2m0 10v2m1 -2v2m0 40v2m1 -36v2m0 4v2m0 12v2m0 20v2m1 -44v2m0 2v2m0 10v2m0 24v2m1 -44v2m0 10v2m0 16v2m0 22v4m1 -52v4m0 4v2m0 4v2m0 4v2m1 -18v2m0 8v2m0 2v2m1 -32v4m0 6v2m0 4v2m0 36v2m1 -72v2m0 48v2m1 -52v2m0 2v2m0 20v2m0 4v2m0 2v2m0 14v2m1 -30v2m0 2v2m0 8v2m1 -6v2m0 6v4m0 36v2m1 -58v2m0 2v4m1 -4v2m0 2v2m0 8v2m1 -2v2m0 36v2m1 -44v2m0 36v2m1 -48v2m0 46v4m2 -40v2m0 36v2m1 -28v2m1 -18v2m0 16v2m1 -24v2m1 -4v2m2 -10v2m1 6v2m0 8v2m0 34v2m1 -24v2m0 18v2m1 -40v2m0 38v2m1 0v2m1 -58v2m1 4v2m0 2v2m1 -4v2m1 -10v2m0 10v2m1 36v4m2 -2v2m1 -46v2m1 -6v2m0 46v2m3 -54v2m0 2v2m1 0v2m1 -24v2m0 18v2m0 6v2m0 14v2m1 -42v2m0 14v2m0 10v2m0 2v4m1 -46v2m0 2v4m0 10v2m0 18v2m1 -42v2m0 2v2m0 16v2m0 2v2m0 14v2m0 2v2m0 12v2m0 14v2m1 -74v4m0 4v4m0 10v2m0 16v2m1 -30v6m0 2v2m0 26v2m1 -24v2m0 10v4m0 30v2m1 -64v2m0 32v2m1 -38v2m0 4v2m0 18v4m0 4v2m0 26v2m1 -74v2m0 4v2m0 6v2m0 6v2m0 2v2m0 18v2m0 30v2m1 -80v2m0 4v2m0 8v2m0 14v2m0 16v2m0 2v2m0 10v2m1 -58v2m0 18v2m0 6v2m0 36v2m1 -76v2m0 6v2m0 64v2m9 -32v2m1 20v2m1 2v2m1 0v2m3 -16v2m1 -26v2m1 -14v2m0 4v2m2 24v2m0 10v2m0 2v2m2 -36v2m0 4v2m0 30v2m1 -10v4m0 6v2m1 -10v2m0 2v2m1 -40v2m1 -2v2m0 12v2m0 14v4m1 -4v2m1 -8v2m0 10v2m2 -40v2m0 32v2m1 -20v2m1 -16v2m0 36v2m1 -36v2m1 -8v2m1 0v2m1 30v2m0 6v2m1 -38v2m1 -8v2m0 38v2m2 -36v2m0 22v4m1 -34v2m1 -6v2m1 42v2m1 0v2m1 -46v2m1 0v2m0 38v2m1 0v2m1 -4v2m1 0v2m1 -32v2m1 -14v2m0 2v4m1 -2v2m0 22v2m1 4v4m1 -36v2m0 4v2m1 -8v2m0 32v2m1 -44v2m0 10v2m0 30v2m1 -4v2m1 0v2m1 -4v2m1 -34v2m1 24v2m1 -32v2m0 34v2m1 -2v4m1 -38v2m0 32v2m1 4v2m1 -46v2m0 40v2m2 -34v2m0 22v2m0 6v2m2 -14v2m2 -36v6m0 28v2m1 6v2m1 0v2m1 -36v2m0 34v2m1 -24v2m1 -18v2m1 30v2m0 4v2m1 -42v4m0 30v2m1 -22v2m1 14v2m2 2v2m1 -14v2m1 -64v2m0 12v2m0 2v4m0 48v2m1 -62v2m0 64v2m1 -76v2m0 2v2m0 60v4m1 -54v2m0 24v2m0 2v2m0 4v4m0 10v2m1 -68v2m0 2v2m0 8v4m1 54v4"/>
<path stroke="#0100ff" stroke-width="1" fill="none" d="M143.5 176v2m1 -4v2m0 32v2m0 4v2m1 -42v4m0 10v2m0 56v2m1 -68v2m0 10v2m1 -18v2m0 36v2m1 -46v2m1 16v2m0 6v2m0 2v2m0 44v2m0 2v2m1 -50v2m1 -32v2m0 76v2m2 -84v4m1 74v4m2 -52v2m0 48v2m2 -46v2m1 42v2m1 -82v2m3 34v2m0 16v2m1 -56v2m0 46v2m1 -16v4m2 14v2m1 -54v2m1 6v2m0 12v2m4 -12v2m2 56v2m5 -66v2m0 36v2m0 30v2m2 -40v2m2 10v2m2 -16v2m1 -34v2m0 6v2m0 64v2m0 2v2m1 -30v2m4 -4v2m10 -54v2m0 4v2m0 4v2m3 68v2m1 -6v2m4 0v2m2 -42v2m1 40v2m1 -78v2m0 70v6m3 -84v2m0 14v2m1 -10v2m1 -10v2m2 8v2m2 0v2m4 62v4m10 -80v2m2 10v2m0 20v2m0 4v2m1 2v2m1 -26v2m0 2v2m0 24v2m0 30v2m2 -62v2m0 26v2m1 -4v2m0 2v2m1 -46v2m0 6v2m0 10v2m1 -28v2m0 16v2m0 4v2m0 12v2m0 14v2m1 -46v2m0 4v2m0 8v2m0 8v4m0 6v2m1 -24v2m0 4v2m0 8v2m0 2v2m0 2v2m1 -44v2m0 24v2m1 -26v2m0 16v2m0 6v2m0 6v2m1 -2v2m3 0v2m1 -2v2m1 -6v2m1 -4v2m8 6v2m1 -8v2m3 6v4m0 2v2m0 20v2m1 -60v2m0 22v6m1 -12v2m0 10v2m1 6v2m0 4v2m1 -24v2m1 2v2m2 -8v2m0 2v2m0 10v2m1 -6v2m8 -36v2m0 16v2m1 -6v2m1 -16v2m0 26v2m1 -18v2m1 -26v4m0 8v2m0 12v2m0 18v2m1 -12v2m0 6v2m1 -26v2m1 4v2m1 2v2m0 16v2m1 -40v2m0 18v2m1 -16v2m3 28v2m3 28v2m1 -84v2m0 10v4m0 40v2m0 24v2m1 -74v2m0 12v2m0 16v4m1 -38v4m0 2v2m0 18v2m0 16v2m1 -20v2m0 4v4m1 -30v4m0 10v2m0 2v2m1 -4v2m1 -18v2m0 8v2m0 2v2m0 10v2m0 6v6m1 -34v4m0 20v2m1 -40v2m0 2v2m0 30v2m2 -40v2m0 32v2m2 -38v2m1 18v2m1 2v2m1 -14v2m0 20v2m0 2v2m1 -8v2m1 -24v2m0 2v2m1 -12v2m1 -6v2m1 -2v2m0 14v2m1 -16v2m0 6v2m0 16v2m1 8v2m1 -28v2m0 18v2m1 -22v2m0 12v2m0 16v2m1 -48v4m0 12v2m0 4v2m1 -20v2m2 14v2m1 -4v2m1 -10v2m0 8v2m0 10v2m0 18v2m1 -24v2m1 -8v2m0 6v2m0 18v2m1 -48v2m0 26v2m1 -36v2m0 4v2m0 24v2m0 20v2m1 -46v2m0 12v2m1 -26v2m0 12v2m1 -8v2m1 -8v2m0 8v2m0 62v4m1 -50v2m0 14v2m1 -34v2m0 4v2m0 4v2m0 42v2m1 -66v2m0 4v2m0 16v2m1 -16v2m0 2v2m1 4v2m1 -16v2m1 8v2m2 0v2m2 -2v2m2 -24v2m0 8v2m1 -2v2m2 -6v2m0 16v2m1 -24v2m0 18v2m1 -20v2m0 8v2m0 4v4m0 16v2m1 -4v2m1 -18v2m1 -12v2m11 54v2m6 10v2m12 -2v2m15 -8v2m4 4v2m12 -4v2m6 -78v2m1 -4v2m2 -4v2m1 10v2m0 12v2m0 2v2m1 -24v2m0 16v2m0 48v2m1 -78v2m2 18v2m0 56v2m1 -78v2m0 6v4m2 6v4m3 -20v2m1 14v2m1 -16v2m4 -2v2m0 8v2m1 6v2m1 56v2m1 -72v2m0 2v2m1 -14v2m0 16v2m1 -22v2m0 18v2m0 50v2m1 -58v2m0 4v2m0 24v2m0 14v2m0 4v2m0 4v4m1 -78v2m0 4v2m0 68v2m2 -80v2m0 6v4m0 64v2m1 -64v2m2 60v2m2 -68v2m2 66v2m2 -8v2m12 -58v2m1 62v2m8 -14v2m1 2v2m2 -22v2m1 -2v2m0 26v2m1 -10v2m0 4v2m1 -20v2m1 6v2m0 4v2m8 -24v2m0 4v2m0 8v2m0 6v2m2 -10v2m2 -70v2m0 56v2m1 0v2m0 2v2m1 -64v2m3 0v2m0 40v2m2 18v2m0 6v2m6 -34v2m0 32v2m0 2v2m1 -26v2m0 6v2m1 -20v2m0 6v2m1 -10v2m0 6v4m0 6v2m2 -22v2m3 4v2m0 2v2m0 2v2m2 -16v2m1 6v2m0 6v2m6 -8v2m25 -54v2m0 4v2m4 -6v2m8 2v2m1 -8v2m1 2v2m1 -2v2m0 6v2m0 6v2m1 -2v2m1 -4v2m2 -10v2m2 -2v2m0 2v2m1 -20v2m0 18v2m0 2v2m1 -16v4m0 6v2m1 -20v2m0 8v2m2 -12v4m0 6v2m0 4v2m0 2v2m1 -24v2m0 6v2m0 10v2m3 -10v2m0 2v2m0 2v2m1 -16v2m1 10v2m3 -18v2m0 8v4m2 -10v2m1 -8v2m0 16v2m0 4v2m2 -24v4m1 -6v2m0 10v2m0 2v2m1 -16v4m0 6v2m2 10v2m12 -8v4m12 40v2m2 -18v2m0 10v2m1 -16v2m0 16v2m1 -20v2m0 2v2m1 4v2m0 6v2m1 -16v4m0 8v4m1 -8v2m1 -8v2m0 2v2m0 6v2m0 6v2m4 -18v2m0 10v2m3 -24v2m2 24v2m1 -30v2m0 14v2m4 -6v2m0 8v2m1 -14v2m2 14v2m1 -10v2m1 -2v2m1 -12v2m2 0v2m0 10v2m1 -16v2m1 -4v2m2 0v2m0 4v2m2 8v4m1 -10v2m2 4v2m1 -14v2m1 -6v2m0 2v4m1 6v4m1 -10v2m1 -10v2m4 10v2m0 6v2m1 -6v2m1 -20v2m1 10v2m1 4v2m1 -14v2m1 2v2m0 6v2m2 -16v2m2 10v2m2 -20v2m2 0v2m0 4v2m1 4v2m2 -8v2m3 -6v2m2 -2v4m0 6v2m2 -2v2m4 0v2"/>
<path stroke="#00ff14" stroke-width="1" fill="none" d="M143.5 228v2m1 -4v2m2 10v2m1 0v2m3 -4v2m0 2v2m3 -14v2m1 -40v2m0 12v2m0 18v2m1 4v2m3 -8v2m2 -38v2m0 34v2m1 -24v2m0 2v2m0 24v2m2 4v2m1 -16v4m2 0v2m4 -44v2m0 22v2m0 24v4m1 -52v2m0 4v2m0 20v2m0 18v2m0 4v2m1 -60v2m0 4v2m0 18v2m0 22v2m4 -4v2m0 6v2m2 -10v2m1 2v2m1 -54v4m1 54v4m1 -14v2m0 2v2m1 -10v2m1 -44v2m0 48v2m5 -72v2m1 56v4m0 12v2m1 -76v2m1 56v2m1 -2v2m1 -50v2m0 6v2m2 6v4m0 44v2m0 6v2m1 -60v4m0 4v2m0 2v2m0 26v2m1 -40v2m1 -2v2m0 16v2m2 -24v2m0 4v2m0 4v2m0 12v2m0 24v2m1 -50v2m1 0v2m0 36v2m1 -56v2m0 20v2m0 16v2m1 -20v2m0 4v2m1 -18v2m1 18v2m1 -18v2m0 2v2m1 -10v2m0 18v2m1 -24v2m0 4v2m0 4v2m1 -16v2m0 18v2m3 -4v2m1 14v2m0 8v2m1 -32v2m1 -14v2m0 8v2m0 10v2m0 36v2m1 -62v2m0 8v2m0 16v4m0 2v2m1 -20v2m0 24v2m1 -48v2m0 4v2m0 16v2m1 -22v2m0 8v4m0 6v2m0 20v2m0 2v2m1 -44v4m0 18v2m1 0v2m2 0v2m1 -36v2m0 20v4m0 26v2m1 -42v2m0 14v2m1 -30v2m0 10v2m0 14v2m0 14v2m1 -42v2m0 2v2m0 16v2m0 16v6m1 -46v2m0 12v2m0 4v2m0 26v2m1 -50v2m0 4v4m0 4v4m0 22v2m1 -20v2m0 32v2m1 -78v2m0 2v4m1 24v2m1 30v2m1 -38v2m0 2v2m0 24v2m1 12v2m7 -4v2m0 4v2m1 -16v2m2 -2v2m2 4v2m0 2v2m2 -6v2m1 -14v2m1 -54v4m0 4v2m0 6v4m0 2v4m1 -6v2m0 6v2m0 34v2m1 -72v2m0 16v2m0 6v2m1 -18v2m0 48v2m0 2v2m0 4v2m1 -70v2m0 14v2m0 52v2m0 8v2m1 -84v2m0 8v2m0 2v2m1 8v2m0 34v2m1 -60v2m0 8v2m0 58v2m0 6v2m2 -20v2m1 -26v2m1 -10v2m1 30v2m3 -48v2m2 52v4m1 -10v2m2 -66v2m0 6v2m1 50v2m0 12v2m2 -74v2m1 6v2m0 22v2m1 -24v2m0 4v2m0 2v2m0 48v2m1 -72v2m0 56v2m1 -44v2m0 26v2m0 16v4m0 4v4m1 -2v2m0 2v2m5 -52v2m0 32v2m0 10v2m0 6v2m1 -28v2m2 2v2m3 -62v2m0 2v2m0 2v2m0 52v2m0 2v2m1 -68v2m0 42v4m0 12v4m0 2v2m1 -10v2m1 -14v2m0 14v2m1 8v2m1 -74v2m0 12v2m0 44v2m0 6v2m1 -48v2m0 38v2m1 12v2m1 -64v2m0 4v2m0 16v4m2 26v2m1 2v2m2 -6v2m0 2v2m2 -12v2m3 10v2m1 -8v2m2 8v2m2 -16v2m0 2v2m1 -12v2m1 14v2m4 -18v4m0 4v2m1 0v4m1 -8v2m5 -8v2m0 6v2m0 4v2m1 -16v2m1 4v2m3 -6v2m0 8v2m0 6v2m1 -8v2m1 -18v2m0 10v2m1 -10v2m0 2v4m1 8v2m1 -20v4m0 6v4m1 2v2m1 -18v2m4 0v4m0 4v2m1 -6v2m1 -28v2m1 -10v2m0 6v2m0 4v2m0 12v2m1 -24v2m0 2v2m0 2v4m0 4v4m0 2v2m1 12v2m1 -32v2m0 6v2m0 2v4m0 10v2m0 4v2m0 2v2m1 -20v2m1 -2v2m0 8v2m1 -40v2m0 2v2m0 10v2m1 0v2m0 12v2m0 10v2m1 -26v2m0 10v2m1 -18v2m0 2v2m3 4v2m1 -4v2m1 8v2m0 6v2m1 -68v2m0 42v2m1 -36v2m2 -4v2m0 16v2m0 2v2m0 4v2m1 -44v4m0 6v2m0 2v2m1 -6v2m0 2v2m0 10v2m1 -22v2m0 6v4m0 4v2m0 28v2m1 -56v2m0 30v2m1 40v2m1 -66v2m0 40v2m1 -44v2m0 4v2m0 30v2m1 -32v4m0 2v4m0 2v2m0 14v2m0 2v2m0 4v2m0 16v2m1 -68v2m0 4v2m0 12v4m0 14v2m0 2v4m1 -54v2m0 30v2m0 12v2m0 14v2m1 -16v2m2 -30v2m0 4v2m2 -22v2m0 18v2m0 50v2m0 2v2m2 -48v2m0 10v2m0 4v2m1 -40v2m0 14v2m0 6v2m0 2v2m0 26v2m1 -68v4m0 30v2m0 6v2m0 4v2m1 -42v2m0 18v2m0 2v4m0 34v2m1 -72v2m0 46v2m0 8v4m1 -54v2m0 14v4m2 26v2m1 -58v2m0 26v2m0 26v2m1 -56v2m0 6v2m0 2v2m0 6v2m0 40v2m1 -70v2m0 14v4m0 20v2m0 2v2m1 4v2m0 10v2m1 -44v2m0 2v2m1 -16v2m0 24v4m0 4v2m0 2v2m0 12v2m0 6v2m1 -68v2m0 14v2m0 10v4m0 2v2m0 6v2m0 22v2m1 -68v2m1 -2v2m0 14v2m1 10v2m0 34v2m1 -20v2m0 6v2m1 -28v2m0 14v2m0 2v2m0 6v2m0 10v2m1 -36v2m1 -40v4m0 16v2m0 32v2m1 -44v2m0 14v4m1 -32v2m0 28v2m1 50v2m1 -82v2m0 6v2m1 -8v2m0 40v4m0 8v2m1 -50v2m0 34v2m1 -22v2m0 22v4m0 8v2m1 -60v2m0 12v2m0 26v2m0 4v2m0 12v2m1 -24v2m0 20v2m0 10v2m1 -72v2m0 8v2m0 14v2m0 16v2m1 -50v2m0 8v2m0 2v4m1 -8v4m0 8v4m0 16v2m0 2v4m1 -40v2m0 8v2m0 14v2m0 8v2m0 6v2m0 6v2m1 -32v2m1 8v2m0 8v2m1 -58v2m0 2v2m0 4v4m0 4v2m0 8v4m0 18v2m0 22v2m1 -68v2m0 6v2m0 26v2m1 22v2m1 -42v2m0 24v2m1 -22v2m0 30v2m1 -32v2m1 8v2m0 26v2m1 -54v2m0 2v2m0 18v2m0 8v2m0 4v2m0 14v2m1 -36v2m0 4v2m1 -34v2m0 10v2m0 50v2m1 -50v2m0 10v2m0 8v2m0 10v2m0 6v2m2 -42v2m0 2v2m0 8v2m0 2v2m3 8v2m4 -32v2m1 30v4m1 -38v2m0 2v2m1 16v2m1 -10v2m0 4v2m1 -2v2m1 -6v2m1 -22v2m0 14v2m0 20v2m2 -12v2m3 -26v2m0 6v2m0 6v2m0 4v2m0 12v2m1 -36v2m1 10v2m0 2v2m3 18v2m1 -42v2m0 2v2m1 -6v2m0 22v2m0 4v2m1 -28v2m0 6v4m1 6v2m2 -16v2m1 30v2m1 -72v2m0 26v2m1 18v2m0 10v2m1 -44v2m0 2v2m1 0v2m0 44v2m1 -58v2m0 28v4m0 16v2m1 -50v2m0 24v2m0 6v2m0 2v4m0 22v2m1 -56v2m0 2v6m0 2v4m0 6v2m0 8v2m0 12v2m1 -46v4m0 18v2m0 16v2m1 -22v2m0 30v2m1 -52v2m0 6v4m1 -18v2m0 24v2m0 14v2m1 -32v4m0 8v2m0 6v2m1 -32v2m0 28v2m0 4v2m0 12v2m1 -74v2m0 66v2m1 -30v2m0 24v2m1 -26v2m1 -4v2m0 8v2m1 -50v2m0 18v2m0 8v6m0 36v2m1 -78v2m0 36v4m0 26v2m1 -28v2m1 -6v2m1 -38v2m0 6v2m0 6v2m0 16v2m0 2v2m1 -28v2m0 4v2m0 2v2m0 4v2m0 8v2m0 10v2m1 -54v2m0 8v2m0 4v2m0 16v2m0 2v2m1 -36v2m1 26v4m1 -30v2m0 24v4m0 4v2m1 -44v2m0 14v2m0 2v6m0 12v2m1 -38v2m0 2v2m0 34v4m1 -44v4m0 10v6m1 -20v2m0 26v2m0 6v4m1 -40v2m0 4v2m0 26v2m2 -38v2m0 4v2m0 26v2m1 -22v2m0 14v2m0 24v2m0 10v2m0 6v2m2 0v2m1 -80v2m0 8v4m0 4v4m0 22v2m0 32v2m1 -66v2m0 2v2m0 2v2m0 6v2m1 -8v2m2 -10v2m0 10v2m1 -4v4m0 4v2m1 -22v2m0 26v2m1 -22v2m0 12v2m1 -22v2m0 2v2m0 12v2m0 28v2m1 -50v2m0 2v4m0 8v2m0 26v2m1 -28v2m0 40v2m2 -60v2m0 6v2m1 -28v4m0 8v2m0 4v2m0 2v4m0 56v2m1 -68v2m0 2v2m0 2v2m0 8v2m1 -14v2m0 8v2m1 -6v2m0 2v2m1 -28v2m0 6v4m0 4v2m1 -8v2m0 4v4m1 -22v2m0 8v2m0 10v2m1 -14v2m0 2v2m0 8v2m1 -26v2m0 4v2m0 4v4m0 16v2m1 -24v2m0 2v2m0 6v2m0 2v2m1 -32v2m0 6v2m0 18v2m0 50v2m1 -80v2m0 10v2m0 10v2m0 6v4m1 2v2m0 34v2m1 -70v2m0 2v2m0 6v2m0 2v4m0 4v2m0 4v2m1 -40v2m0 8v2m0 30v2m0 36v2m1 -82v4m0 12v2m0 2v2m0 18v2m1 36v2m1 -44v2m1 6v2m0 32v2m0 2v2m1 -44v2m0 2v2m1 34v2m3 -44v2m0 6v2m0 22v2m0 2v2m0 4v4m2 -44v4m0 2v2m0 10v2m1 -16v2m0 30v4m0 2v2m1 -44v2m1 36v2m1 -36v2m1 -2v2m1 36v2m1 -20v2m0 2v2m0 10v2m1 -56v2m0 10v2m0 4v2m1 -44v2m0 2v2m0 12v2m0 4v2m0 6v2m0 2v2m0 10v2m0 10v2m0 16v2m1 -70v2m0 20v2m0 10v2m1 -44v2m0 32v2m0 32v2m0 6v2m1 -76v4m0 8v2m0 46v2m0 2v2m1 -62v2m0 6v2m0 12v2m0 12v2m0 6v2m1 -20v2m0 30v2m0 2v6m1 -10v6m2 -8v2m0 14v2m1 -30v2m1 -2v2m0 2v2m1 -56v2m0 4v4m0 14v2m0 24v2m0 8v2m0 12v2m1 -76v2m0 12v2m0 6v2m0 18v2m0 10v2m0 4v2m0 2v2m0 2v2m1 -32v2m0 8v2m0 10v2m0 8v2m1 -52v2m0 14v2m0 2v2m0 20v2m1 -66v2m0 48v2m0 12v2m1 -28v2m0 2v2m1 -28v4m0 8v2m0 8v4m0 24v2m0 12v2m1 -54v2m0 24v2m0 10v2m0 6v2m1 -58v2m0 2v2m0 8v2m0 4v2m0 10v2m0 12v2m0 2v2m0 2v2m0 4v2m1 -52v2m0 14v2m0 10v2m0 6v4m0 4v2m1 -58v2m0 6v2m0 18v2m0 4v2m0 10v2m0 2v4m0 8v2m1 -46v4m0 16v4m0 14v2m1 -56v2m0 24v2m0 14v4m1 -46v2m0 10v2m0 10v2m0 6v2m1 -34v2m0 6v2m0 28v2m1 -38v2m0 2v2m0 4v2m0 8v2m0 12v2m1 -10v2m0 2v2m0 26v2m1 -44v2m2 -14v2m0 2v2m0 2v2m0 14v2m0 4v2m0 22v2m1 -2v2m1 -44v2m0 2v4m1 -4v4m0 8v4m0 10v2m0 4v2m1 -30v2m0 12v2m0 4v2m1 -30v2m0 12v4m1 -10v2m0 12v2m1 -28v2m0 40v2m1 -46v2m0 42v4m1 -18v2m1 -30v2m0 22v2m2 -34v2m0 10v2m0 14v2m1 -28v2m0 4v2m0 2v2m0 36v2m1 -34v2m1 30v2m1 -50v2m0 46v2m1 -52v4m0 2v2m0 2v2m0 2v4m0 32v2m0 2v2m1 -42v2m0 34v2m0 2v2m2 -6v2m1 -40v2m1 4v2m1 -12v2m0 6v2m1 -16v2m0 2v2m0 4v2m0 10v4m0 2v2m0 24v2m1 -28v2m0 22v2m1 -36v2m0 24v2m1 -28v2m0 10v2m0 12v2m1 -30v2m0 30v2m1 -56v2m0 34v2m1 -34v2m1 -16v2m0 36v2m0 8v2m0 10v2m1 -8v2m0 2v2m1 -72v2m0 48v4m0 22v2m1 -36v2m0 10v2m1 -48v2m0 2v2m0 18v2m0 12v2m0 10v2m0 16v2m1 -76v2m0 24v2m0 14v2m0 32v4m1 -76v2m0 4v2m0 2v2m1 0v2m0 6v4m0 18v2m0 10v2m1 -58v2m0 54v2m0 4v2m0 4v2m1 -70v2m0 2v2m0 6v2m0 2v2m0 2v2m0 12v4m0 6v2m0 18v2m0 12v2m1 -56v2m0 4v2m2 -14v2m0 40v2m1 -56v2m5 34v2m0 6v2m0 2v4m1 -30v2m0 8v4m0 14v2m0 2v2m0 2v2m0 8v2m1 -2v2m1 -6v2m1 -48v2m0 8v2m0 40v2m2 -48v2m1 -8v4m0 2v2m2 -2v2m0 2v2m2 42v2m1 -10v4m1 -42v2m1 -6v2m2 44v2m2 -50v2m0 6v2m1 -6v2m1 -2v4m1 42v2m5 -44v2m0 38v2m1 -46v2m0 2v2m0 2v2m0 32v4m1 -4v2m1 -2v2m2 -42v2m0 4v2m1 -12v2m2 0v2m1 42v2m1 -40v2m3 -6v2m0 44v2m1 -46v2m0 30v2m1 -36v2m0 2v2m0 38v2m2 -46v2m1 -4v2m0 2v2m1 0v2m1 -4v2m0 4v2m0 28v4m0 2v2m2 -46v2m0 2v2m0 40v2m1 -48v2m0 4v2m1 -14v2m1 2v2m0 6v2m1 34v2m1 -48v6m0 4v2m1 -10v2m1 4v2m1 32v2m1 -40v2m1 -4v4m2 -6v2m0 2v6m0 34v2m1 -4v2m2 -38v2m0 38v2m2 -40v2m0 32v2m0 2v2m1 -42v2m0 2v2m1 38v2m1 -50v2m0 4v4m1 36v2m2 -6v2m1 -38v2m1 2v2m0 34v2m1 -82v2m0 42v2m0 36v2m2 -60v2m0 16v2m0 34v4m1 -82v2m0 8v2m0 4v2m0 30v4m0 28v2m2 -82v2m0 12v2m0 4v2m0 60v2m1 -62v4m0 2v2"/>
<path stroke="#4b00ff" stroke-width="1" fill="none" d="M144.5 168v2m1 2v2m1 2v2m1 2v2m2 -14v2m1 4v2m6 4v2m19 30v4m0 2v2m45 -50v2m19 40v2m0 2v2m4 -24v2m1 18v2m1 -44v2m3 22v2m2 2v2m0 18v2m1 -6v2m21 6v2m17 -4v2m1 -40v2m0 12v2m0 14v2m1 -12v2m2 -12v2m1 2v2m0 6v2m9 -14v2m1 14v2m1 -44v2m0 6v2m0 6v2m0 18v2m1 -36v2m1 16v2m1 -22v2m1 8v2m1 2v2m1 -10v2m0 14v2m0 14v2m3 -30v2m0 10v2m1 6v2m2 -6v2m1 -4v2m0 2v2m1 -30v2m0 20v2m1 -20v2m0 12v2m2 2v2m0 2v2m3 8v2m2 -24v2m0 4v2m1 -12v2m0 2v2m4 -14v2m0 2v2m1 -2v2m0 12v2m2 -2v2m2 -14v2m1 -4v2m1 6v2m1 -10v4m0 10v2m1 -22v2m0 4v4m0 8v4m1 -14v2m1 10v2m4 -20v2m4 18v2m1 -24v2m0 4v2m1 2v2m2 12v2m76 -24v2m2 0v4m3 -2v2m2 -2v2m13 -8v2m0 8v2m0 2v2m1 -6v2m1 4v2m1 -18v2m37 68v2m28 -10v2m6 -16v2m1 14v2m1 -14v2m48 -42v2m2 -4v2m2 8v2m4 -14v2m1 6v2m1 -10v2m4 2v4m0 4v2m4 -14v2m2 8v2m1 -18v2m39 48v2m1 14v2m23 -18v2m0 8v2m3 -12v2m0 12v2m2 -8v2m9 4v2m10 -2v2m2 -2v2m3 -14v2m1 10v2m3 -4v2"/>
<path stroke="#2600ff" stroke-width="1" fill="none" d="M144.5 178v2m1 18v2m1 12v2m1 -28v2m0 34v4m1 -54v2m0 20v4m1 -16v2m5 -16v2m0 2v2m1 -2v2m0 2v4m2 0v2m7 30v2m1 2v2m1 -22v2m0 22v2m1 -6v2m1 -36v2m7 -4v2m11 24v2m21 42v2m6 -74v2m2 2v2m1 -14v2m0 6v4m1 -6v2m1 -6v2m4 -6v2m1 -2v2m15 52v2m2 -26v2m1 12v2m0 2v2m0 2v2m1 -52v2m0 2v2m0 4v2m1 30v2m3 -42v2m0 40v2m0 6v2m1 -6v4m1 -38v2m0 6v2m1 -22v2m0 4v2m1 -4v2m0 38v2m1 -42v2m0 8v2m18 24v2m5 -8v2m11 -40v2m2 46v2m1 -38v2m1 -2v4m0 22v2m1 -26v2m0 4v2m0 4v4m0 6v2m1 -10v2m0 4v2m10 -26v2m0 68v2m1 -76v2m2 -4v2m1 24v2m1 -20v2m0 4v2m0 6v2m1 -14v2m0 8v2m1 -22v6m1 24v2m1 -16v2m1 -20v2m0 12v2m1 -2v2m1 4v2m1 -6v2m0 4v2m1 -26v2m1 20v2m1 -4v2m6 -6v2m1 -6v2m0 8v2m0 2v2m1 -12v2m2 -8v2m0 6v2m0 4v2m3 -18v2m0 18v2m1 -14v2m0 10v2m0 8v2m1 -2v2m0 2v2m1 -26v2m0 4v4m1 -28v2m0 24v2m1 -14v4m0 8v4m1 -28v2m0 12v2m0 8v2m1 -10v4m1 -20v2m1 28v2m1 -18v2m1 4v2m0 14v2m0 2v2m1 -38v2m0 8v2m1 0v2m0 22v2m2 -42v2m0 14v2m1 -6v2m1 4v2m0 2v2m2 -20v2m3 4v2m2 -10v2m0 12v2m1 -20v2m0 2v2m0 16v2m3 -10v2m0 14v2m20 46v2m20 0v2m26 -4v2m5 -78v2m0 10v2m3 -6v2m0 2v2m7 10v2m2 52v2m2 -72v2m2 4v2m4 8v2m3 -24v2m0 14v2m1 -16v2m0 68v2m1 -76v2m0 16v2m1 -16v2m0 18v2m0 54v2m22 -6v2m5 -28v2m9 10v2m7 2v2m3 -22v2m4 32v2m5 -32v2m2 -2v2m3 -48v2m1 52v2m0 18v2m2 -22v2m1 -18v2m2 14v2m3 -8v2m51 -34v2m1 -16v2m0 8v2m2 4v2m3 -4v2m1 -12v2m1 2v2m1 -8v2m1 -10v2m1 10v2m1 2v2m0 2v2m1 -12v2m1 10v2m1 -12v2m0 6v2m1 -16v2m1 -4v2m1 -2v2m0 16v2m1 -20v2m0 4v2m1 -4v2m1 -6v2m3 -2v2m0 2v2m0 4v2m1 2v2m28 20v2m2 4v2m3 -6v2m1 20v2m3 -20v2m4 4v2m4 0v2m2 -6v2m2 12v2m6 -14v2m3 4v4m3 -10v2m0 10v2m2 -18v2m6 0v2m3 -2v2m3 -6v2m0 2v2m0 4v2m0 8v2m3 -6v2m5 -20v2m0 16v2m4 -14v2m2 8v4m2 0v2m2 -16v2m0 2v2m5 -4v2m1 4v2m6 -4v2"/>
<path stroke="#92ff00" stroke-width="1" fill="none" d="M170.5 226v2m60 -42v2m118 30v2m18 -14v2m7 2v2m1 -42v2m0 44v2m12 22v2m4 -50v2m1 8v2m0 4v2m1 -30v2m0 24v2m1 2v2m0 2v2m6 2v2m1 -40v2m0 38v2m1 -54v2m0 8v2m4 16v2m0 6v2m0 4v2m1 -36v2m0 12v2m0 10v4m0 2v2m0 12v2m1 -40v2m0 4v2m0 12v2m0 2v2m1 -26v6m0 2v4m1 -12v4m0 14v4m1 -30v2m1 -2v2m0 4v2m0 26v2m1 -22v2m0 14v4m0 10v2m1 -44v2m0 12v2m0 4v2m0 16v2m0 4v2m1 -26v2m0 20v2m1 -44v2m0 12v2m0 28v2m1 -38v2m0 18v2m1 -8v2m0 20v2m1 -42v2m0 28v2m0 6v2m1 -12v2m1 -30v2m0 8v2m0 12v2m65 -34v2m0 20v2m1 -16v2m1 4v4m0 6v2m1 -20v2m1 -2v2m0 4v4m0 4v2m0 10v4m2 -22v2m2 -2v2m1 -4v2m1 -18v2m0 6v2m0 4v4m0 2v2m1 0v2m0 16v2m1 -36v2m0 2v2m0 4v2m0 4v2m1 -22v4m0 4v2m1 -2v6m1 -2v2m0 22v2m2 -24v2m1 2v2m1 -6v2m0 2v4m1 -2v2m0 4v2m4 40v2m2 -40v2m1 -16v2m2 8v2m1 2v2m1 -18v2m4 16v2m3 -32v2m0 2v2m2 -10v2m0 8v2m0 12v2m1 -26v2m1 16v2m1 -16v2m0 18v2m1 -28v2m0 4v2m0 8v2m0 2v4m1 -22v4m0 28v2m1 0v4m1 -30v2m0 8v4m0 2v2m0 14v2m1 -40v2m0 16v2m0 2v2m0 8v2m1 -38v4m0 4v2m0 26v2m1 -34v2m0 6v2m0 4v2m0 8v4m1 -22v2m0 6v2m0 6v4m0 4v2m1 -12v4m0 6v2m0 4v2m1 -38v2m0 20v4m1 -28v2m0 2v2m0 2v2m0 16v2m0 6v2m1 -38v6m0 16v4m0 2v4m1 -26v2m0 6v2m1 -14v2m0 18v6m1 -16v6m1 0v4m0 10v2m3 12v2m1 -26v4m0 10v4m0 2v2m0 4v4m0 28v2m1 -76v2m0 28v2m0 2v2m0 20v2m0 10v2m1 -76v2m0 2v2m0 54v2m0 2v2m1 -66v2m0 32v2m1 -26v6m0 10v2m0 4v2m0 8v2m1 -38v2m0 6v4m0 2v2m0 20v2m0 8v2m0 24v2m1 -80v2m0 16v2m0 30v4m1 -42v2m0 2v2m0 2v2m0 32v2m1 -52v2m0 4v2m0 14v6m1 -12v2m0 18v2m0 6v2m1 -30v2m0 10v2m0 4v2m1 -12v2m1 2v2m2 -6v2m0 8v2m1 -18v2m0 2v2m0 6v2m0 12v2m0 10v2m0 2v2m0 2v2m1 -18v4m0 2v2m0 18v2m4 -20v2m3 2v2m0 2v4m0 2v2m1 -10v2m1 4v2m0 2v4m2 -36v6m0 10v2m0 10v2m1 -26v2m0 2v2m0 4v2m1 -22v2m0 14v2m0 2v4m0 8v2m0 2v2m2 -22v2m0 2v2m0 8v2m0 4v4m1 -28v2m1 -2v2m0 10v2m0 6v2m0 2v2m1 -4v2m2 -24v2m0 4v2m1 -20v2m0 20v2m0 8v2m0 2v2m1 -38v2m0 14v2m1 -8v6m0 20v2m1 -28v2m0 2v2m0 6v2m0 2v2m0 6v2m1 -24v2m0 10v2m0 4v4m0 2v2m1 -44v2m0 24v2m0 6v2m1 -2v2m0 2v4m1 -44v2m0 6v6m1 8v2m0 2v4m0 4v2m0 4v2m1 -10v2m0 8v2m1 -20v2m1 -18v2m0 12v2m0 16v2m0 2v2m1 -44v2m0 18v4m0 4v2m0 2v4m1 -36v2m0 2v2m0 22v2m0 4v2m1 -18v2m0 20v2m1 -26v2m0 4v2m0 6v2m3 -2v4m0 8v2m2 -8v2m1 -6v2m1 -2v2m0 4v2m1 2v2m1 -14v2m0 8v2m1 -4v2m1 -72v4m0 34v2m1 -4v2m0 16v2m0 14v6m1 -4v2m1 -6v6m4 -62v2m0 16v2m0 4v2m0 10v2m0 6v2m0 22v2m1 -82v2m0 26v2m0 16v2m0 16v2m0 16v2m1 -80v2m0 12v2m0 14v2m0 6v2m0 14v4m0 12v2m1 -70v2m0 4v4m0 6v4m0 4v2m0 2v2m0 2v2m0 6v2m0 12v2m1 -50v2m0 6v2m0 26v2m0 4v2m0 6v2m0 2v4m0 2v2m1 -56v2m0 46v2m0 2v4m1 -40v2m0 8v2m2 24v2m1 -38v2m0 2v2m2 -12v2m2 6v4m1 -4v2m5 -10v2m0 2v2m1 2v4m1 -2v2m2 -12v2m0 6v2m1 -10v4m0 4v2m1 -8v2m1 -4v2m1 -4v2m0 10v2m2 -12v2m0 2v4m2 0v2m0 38v2m3 -56v2m0 2v4m0 6v2m1 -14v2m1 -2v6m1 6v2m2 -16v2m0 6v2m1 -28v2m0 18v2m0 4v2m2 -4v2m1 -8v4m1 16v2m1 -22v2m0 14v2m1 -16v2m0 6v4m1 -8v2m2 -2v2m0 2v2m1 -10v2m0 56v2m2 -2v2m1 -62v2m1 0v2m1 12v2m1 -14v4m1 -24v2m0 2v2m0 10v2m1 -22v2m0 14v2m1 4v2m5 0v2m0 4v2m1 -4v2m1 -4v2m2 52v2m1 -64v2m0 2v2m0 2v2m1 -26v2m0 2v2m0 14v2m0 2v2m3 2v2m1 -10v2m1 -20v2m0 18v2m1 -2v4m2 6v2m1 -6v2m1 2v2m1 -18v2m0 2v2m0 2v2m1 -20v2m0 16v2m0 4v2m0 2v2m1 -16v2m1 4v4m2 6v2m1 -18v2m0 2v2m0 8v2m0 40v2m1 -42v2"/>
<path stroke="#68ff00" stroke-width="1" fill="none" d="M170.5 236v2m1 -40v2m0 2v2m1 -14v2m23 12v2m8 -12v2m0 2v2m1 -6v2m5 -10v2m8 16v2m0 2v2m1 -2v2m4 10v2m6 -34v2m1 -4v2m0 18v4m1 -16v2m1 32v2m0 12v2m21 -16v2m35 -2v2m0 10v2m1 -14v2m5 -58v2m2 -4v2m1 -4v2m2 26v2m17 40v2m6 -4v2m25 -20v2m1 -16v2m1 10v2m0 16v2m1 2v2m1 -32v2m1 -2v2m1 8v2m0 16v2m13 -42v2m0 2v2m1 -4v4m0 8v2m1 -22v2m0 24v2m1 -44v2m4 4v2m0 4v2m1 16v2m1 -38v2m0 18v2m0 4v2m8 10v2m3 -40v2m0 42v2m1 -16v2m3 0v2m1 -4v2m0 4v2m0 6v2m1 -42v2m0 14v2m0 6v2m0 6v2m2 -6v2m0 6v2m0 2v2m0 2v2m0 6v2m1 -46v2m1 -12v2m0 38v2m3 -32v2m2 20v2m1 -20v2m0 20v2m3 0v2m1 -34v2m0 6v2m0 16v2m0 2v4m0 8v2m2 -46v2m0 6v2m0 12v2m0 8v2m0 16v2m1 -50v4m0 2v2m0 34v2m1 -38v2m0 12v2m0 10v2m1 -26v6m0 2v2m0 4v2m0 14v2m1 -24v2m0 2v4m0 16v4m1 -52v2m0 6v6m0 4v2m0 10v2m0 22v2m0 18v2m1 -74v2m0 8v2m0 2v2m0 2v2m0 10v2m0 8v4m1 -44v2m0 4v2m0 16v2m0 10v2m0 6v2m0 2v2m1 -50v2m0 2v2m0 12v2m0 8v2m0 6v4m0 18v2m1 -60v2m0 6v2m0 10v2m1 -18v2m0 16v4m0 2v2m0 10v2m0 2v2m0 4v2m0 2v2m1 -32v4m0 2v2m0 2v4m0 10v2m1 -18v2m0 2v2m0 4v6m0 4v4m0 4v4m0 4v4m1 -62v2m0 4v2m0 10v4m6 -16v2m1 40v2m1 -34v2m48 4v2m3 2v4m1 2v2m1 -8v2m1 -4v2m2 -38v4m0 30v2m0 8v2m1 -26v2m0 8v2m1 -26v2m0 24v2m0 10v2m1 -44v4m0 4v2m0 6v2m0 6v2m0 4v6m1 -36v4m0 2v4m0 16v2m0 2v2m1 -28v2m0 16v2m2 -26v2m0 8v2m0 6v2m0 2v2m1 -14v2m0 22v2m1 -32v2m0 2v4m0 4v2m0 4v2m0 2v2m0 16v2m1 -34v2m0 6v2m0 12v2m1 -32v2m0 2v2m0 24v2m1 -34v4m1 -6v2m0 8v2m0 22v2m1 -26v2m0 6v2m0 4v2m1 -26v4m0 2v4m0 16v4m0 8v2m0 2v2m1 -42v2m0 2v4m3 24v2m2 -18v4m1 -2v2m0 2v2m1 0v2m1 -10v2m0 2v2m1 2v2m0 40v4m3 -58v2m0 8v2m1 -6v2m0 4v4m1 -4v2m0 4v2m2 -14v2m0 2v2m2 4v2m1 -32v2m1 18v2m0 2v2m1 -26v2m0 10v2m0 10v2m0 2v4m1 -32v2m1 12v2m0 2v2m0 6v2m0 8v2m1 -32v2m0 4v2m0 24v2m1 -24v2m2 4v2m0 2v2m0 12v2m1 -28v2m1 -4v2m0 4v2m0 12v2m1 -2v2m1 -32v2m0 28v2m1 -26v2m0 4v2m0 20v2m1 -30v2m0 18v4m0 6v2m1 -34v2m1 8v2m0 8v2m0 6v2m1 -36v2m0 38v2m1 -22v4m0 12v2m0 4v4m1 -22v2m2 -16v2m0 4v4m1 10v2m1 10v2m1 -42v2m0 16v2m0 8v2m1 -4v2m1 -4v2m2 -16v2m0 4v2m0 2v2m1 -10v2m0 2v2m0 10v2m0 12v2m0 18v4m0 14v2m1 -64v4m0 6v2m0 2v2m0 6v2m0 6v6m0 2v2m0 4v2m0 4v2m1 -70v2m0 16v2m0 4v2m0 8v2m0 2v2m0 2v2m0 2v2m0 28v2m1 -74v2m0 14v2m0 2v2m0 12v2m1 -40v2m0 14v2m0 8v4m0 2v2m0 4v2m0 8v4m0 4v4m0 2v2m1 -66v2m0 2v2m0 32v2m0 42v2m1 -22v2m1 -12v2m0 6v2m0 2v2m0 6v2m0 2v2m1 -78v2m0 30v2m0 48v2m1 -68v4m0 2v2m0 18v4m1 -30v2m0 24v2m0 4v2m2 -16v2m0 2v2m0 14v2m0 26v2m1 -32v2m0 22v2m0 2v2m1 -60v4m0 18v2m0 4v2m0 2v2m0 6v2m0 8v2m0 2v2m1 -58v2m0 6v2m0 12v2m0 30v2m0 6v2m1 -52v4m0 12v2m0 10v2m0 2v2m0 6v2m2 -6v2m1 -20v2m0 8v2m1 -18v2m0 32v2m1 -50v2m0 28v2m0 8v2m1 -48v2m0 26v2m0 18v2m0 4v2m1 -40v2m1 26v2m1 -40v2m0 14v2m0 6v2m1 -28v2m2 10v2m0 12v2m0 16v2m1 -46v2m0 22v2m1 4v2m1 -10v4m0 10v4m1 -20v2m0 8v2m1 -30v2m0 16v2m0 4v2m1 12v2m1 -20v6m0 8v2m1 -8v2m0 12v2m1 -30v4m0 14v2m2 -26v2m0 4v2m0 14v2m0 4v4m0 2v2m1 -36v2m0 10v2m0 2v2m0 6v2m0 2v2m1 -16v2m1 -8v2m0 34v2m1 -30v2m0 8v2m2 -24v4m1 6v2m0 20v2m1 -20v4m0 2v2m1 -4v2m1 -4v2m1 -30v2m0 18v2m0 6v2m0 4v2m0 4v2m1 -14v2m0 2v4m0 2v2m0 10v2m1 -44v2m0 18v2m1 -18v2m1 -14v2m0 2v2m0 22v2m1 -20v2m0 18v2m0 6v2m2 -8v2m0 8v2m1 -14v2m0 12v2m1 -10v2m1 2v2m1 -14v2m0 8v2m0 4v2m1 -10v4m0 2v2m1 -40v2m1 24v2m1 -40v2m0 2v2m0 10v2m0 10v2m0 6v4m1 -26v2m0 2v2m0 22v4m0 6v4m1 -12v4m1 -6v2m0 2v2m0 4v2m1 -20v2m0 2v4m1 -64v2m0 2v2m0 8v4m0 4v2m0 20v4m0 12v2m0 12v2m0 6v2m1 -14v2m1 -70v2m0 12v2m0 10v6m0 2v2m0 2v2m0 8v2m0 14v8m1 -56v4m0 10v2m0 8v4m0 4v2m0 2v4m0 6v2m0 10v2m1 -38v6m0 4v2m0 12v2m0 4v2m0 4v2m4 -34v2m0 2v2m0 16v2m0 12v4m2 -54v2m0 6v2m1 -2v2m1 -6v2m1 -4v2m1 -2v2m1 2v2m2 -10v2m2 4v4m0 36v2m1 -48v2m1 48v2m1 -44v4m1 -10v4m0 4v2m1 -6v2m0 2v2m0 40v2m1 -54v2m0 44v2m1 -44v4m1 0v2m4 40v2m2 -48v2m1 -2v2m1 -8v2m0 4v2m1 -4v2m1 2v2m0 6v2m0 36v2m1 -54v2m0 50v2m1 -56v2m0 6v2m1 -10v2m1 2v2m0 8v2m1 -16v2m1 2v2m1 -2v2m3 -10v4m1 8v4m2 -2v2m0 38v6m1 -44v2m1 -12v2m0 50v2m2 -50v2m0 6v2m1 -10v2m0 8v2m1 -20v2m1 -24v4m0 12v2m0 6v4m1 -20v2m0 2v2m0 10v2m0 12v4m1 -14v2m1 -8v2m0 6v2m1 -12v2m0 2v2m1 0v2m1 -2v2m1 10v2m0 40v2m2 -42v2m1 -8v2m0 4v2m0 38v2m3 -72v6m0 4v2m1 2v2m1 14v2m1 -10v2m0 40v2m1 -48v2m0 48v2m3 -48v2m1 -2v2m0 2v2m0 36v2m1 -44v2m1 40v4m1 -42v2m0 2v2m0 38v2m2 -46v2m0 40v2m1 -54v2m0 52v2m1 -46v2m1 38v2m0 2v2m1 -48v2m1 -8v2"/>
<path stroke="#3eff00" stroke-width="1" fill="none" d="M170.5 242v2m1 -14v2m2 8v2m5 -4v2m14 -12v2m3 -42v2m1 10v2m0 38v2m2 -56v2m4 -2v2m2 2v2m2 -8v2m3 -4v2m1 2v2m4 2v2m0 38v2m1 -18v2m1 6v2m1 -26v2m2 -2v2m2 30v2m4 -20v2m0 2v2m1 0v2m0 2v2m1 -20v2m1 -6v2m1 14v2m1 4v2m0 20v2m11 -18v2m8 10v2m4 -58v2m2 48v2m0 4v2m1 -8v2m1 -40v2m1 -2v2m0 42v4m1 -54v2m5 -20v2m1 4v2m15 -12v2m0 2v2m0 54v2m1 -48v2m0 54v2m11 -4v2m5 -28v2m1 -40v2m1 4v2m1 4v2m0 10v2m0 4v2m10 32v2m2 -12v4m0 8v4m2 2v2m1 -16v2m1 0v2m0 6v2m1 -12v2m6 8v4m7 -18v2m18 -32v2m0 12v2m0 20v2m1 -4v4m1 -32v2m1 32v2m1 -4v2m1 -22v2m0 24v4m1 -22v2m0 16v4m1 -22v2m10 -56v2m0 34v2m1 -10v2m0 4v2m0 14v2m1 -8v2m0 4v2m1 -52v2m3 12v2m0 28v2m2 -14v2m0 6v2m0 6v2m1 -26v2m0 10v2m0 4v2m0 12v2m1 -42v2m0 24v2m0 8v2m5 -14v2m1 4v2m2 22v2m1 -68v2m0 22v4m2 38v2m3 -70v2m1 22v2m0 14v2m1 -36v4m0 30v4m0 2v2m2 -40v2m0 16v2m0 24v2m0 4v2m1 -52v2m0 40v2m1 -32v2m0 2v2m0 2v4m0 16v4m0 14v2m3 -32v2m1 -24v2m0 6v2m0 8v2m1 -34v2m0 18v2m0 2v2m0 4v2m0 2v2m1 -36v4m1 44v2m2 -42v2m1 2v2m0 4v4m0 8v2m1 -32v2m0 46v2m0 8v2m1 -54v2m0 40v2m0 2v2m1 -34v2m0 8v2m0 2v2m0 4v2m0 10v2m1 -56v4m0 4v2m0 2v2m0 10v2m1 6v2m1 -28v2m0 2v2m0 24v2m0 2v2m0 28v2m1 -58v2m0 16v4m0 6v2m0 4v4m0 4v2m0 14v2m1 -68v2m0 14v2m0 16v2m0 4v2m1 -42v2m0 2v2m0 20v4m0 8v2m0 2v2m1 -42v2m0 8v2m0 2v2m0 8v2m0 8v2m1 -44v2m0 4v2m0 18v4m0 14v6m1 -42v2m0 6v2m0 20v2m0 4v2m0 2v2m0 14v2m1 -66v2m0 2v2m0 12v2m0 2v2m0 18v2m1 -42v2m0 10v2m1 12v2m0 18v2m0 8v2m1 -30v2m0 4v2m0 8v2m1 -18v2m3 -4v2m1 -6v2m0 2v2m1 10v4m0 20v2m1 -22v2m12 8v2m1 -8v2m9 -4v2m5 -10v2m2 -2v2m1 -12v2m4 6v2m4 14v2m2 -42v2m0 16v2m1 -14v4m0 14v2m2 -8v2m0 6v2m1 -8v4m0 30v2m1 -16v2m1 -14v2m4 -2v2m3 -42v2m1 28v2m1 2v2m2 -34v4m0 8v2m0 2v2m1 -16v2m0 2v2m0 6v2m0 8v2m0 2v2m1 -18v4m1 -12v2m0 8v2m0 20v4m1 -32v2m0 32v2m3 -46v2m0 20v2m0 12v2m0 4v2m1 -8v2m1 -28v2m0 2v2m0 8v2m0 14v2m1 -36v2m0 18v2m0 4v2m0 2v2m0 2v2m1 -32v2m0 32v2m1 -14v2m0 2v2m1 -24v2m0 14v2m0 10v2m1 -12v2m0 6v2m1 -4v2m1 -36v2m0 14v2m0 18v2m1 -16v2m0 14v2m2 -18v2m0 2v6m2 -18v2m0 2v2m1 0v2m0 2v2m0 4v2m2 28v2m1 -52v2m0 64v2m1 -62v2m1 -10v2m0 2v2m0 10v2m0 4v2m1 -22v4m0 16v2m1 -18v2m1 -2v2m0 6v2m0 2v2m2 -20v2m0 6v2m0 18v2m1 -14v2m0 10v2m1 -40v2m1 -4v2m0 20v2m1 -4v2m0 4v2m1 -22v6m0 4v2m0 2v2m0 2v2m1 -6v2m0 2v2m0 4v4m1 -16v2m0 8v2m1 -22v2m0 18v2m0 6v2m1 -34v2m1 12v2m0 10v2m0 6v2m1 -36v2m0 2v4m0 6v2m0 8v2m1 -16v2m0 8v2m0 2v2m0 10v2m1 -4v2m2 -24v2m0 54v2m1 -30v2m1 -16v2m0 6v4m1 -10v2m1 -22v2m0 28v2m1 -6v2m0 40v2m1 -44v2m1 -2v2m0 24v4m1 -34v2m0 8v4m1 -22v2m0 52v2m2 -40v2m1 -42v2m0 4v4m0 2v4m0 4v6m0 12v2m1 -36v4m0 10v2m0 8v2m0 38v2m2 -36v2m0 6v2m0 2v2m0 26v2m0 4v2m1 -78v4m0 6v2m0 10v2m0 22v4m0 12v2m0 2v6m1 -68v2m0 2v2m0 16v2m0 10v2m0 20v2m0 14v2m1 -62v2m0 6v2m0 26v2m1 -48v2m0 24v2m0 4v2m0 10v2m0 16v2m1 -38v2m0 4v4m0 14v2m1 -62v2m0 50v4m1 14v2m1 -6v4m1 -38v2m1 0v4m1 -34v4m0 14v2m0 8v4m0 2v2m0 28v2m1 -42v2m0 2v2m0 46v2m1 -60v2m0 30v2m1 -22v2m0 10v2m0 10v2m0 2v2m0 2v2m0 2v2m1 -54v2m0 12v4m0 18v4m0 14v2m0 6v2m1 -48v4m0 18v2m0 2v2m0 14v2m1 -56v2m0 2v2m0 20v2m0 18v2m0 4v2m0 2v2m1 -12v2m0 2v2m1 0v2m1 -54v2m0 38v2m0 4v2m1 -50v2m0 48v2m0 2v2m1 -16v2m1 4v2m0 4v2m1 -58v2m0 14v2m0 24v4m0 2v2m0 4v2m1 -34v2m0 28v2m0 2v2m1 -32v2m0 4v2m0 30v2m1 -30v2m0 22v2m1 -44v2m0 4v2m0 36v2m1 -40v2m0 26v2m0 6v2m1 -40v2m0 4v4m1 -2v4m0 24v2m1 -22v2m0 12v2m1 -32v2m0 22v4m1 -12v4m0 12v2m1 -42v2m1 -2v2m0 8v2m0 30v2m1 -34v4m0 14v2m0 12v2m0 4v2m1 -52v2m0 8v2m0 14v2m1 -12v2m0 18v2m0 2v2m0 2v2m1 -44v2m0 2v2m0 4v2m0 10v2m0 8v2m1 -26v2m0 16v2m0 10v2m0 2v2m1 -40v2m0 2v2m0 24v2m0 4v2m1 -18v2m0 20v2m1 -24v4m0 20v2m1 -54v2m2 26v2m0 8v2m1 -8v2m1 -20v2m0 22v2m0 4v2m1 -44v2m0 10v2m0 12v2m1 -24v2m0 4v2m0 12v2m0 26v2m1 -44v4m0 12v2m1 8v4m1 -26v4m1 -20v2m0 8v2m0 8v2m0 10v2m0 2v2m1 -38v2m0 18v2m0 2v2m1 16v2m2 -28v2m0 6v2m0 18v2m1 -12v2m1 0v2m0 2v2m1 -6v2m1 -36v4m0 24v2m0 2v2m0 10v2m0 2v2m1 -76v2m0 2v2m0 26v2m0 42v4m1 -42v4m0 16v2m1 -30v2m1 8v2m1 -12v2m0 10v2m0 24v2m2 -32v4m0 18v4m0 4v2m0 2v4m1 -78v2m0 4v2m0 28v2m0 36v2m1 -58v2m0 50v2m1 4v2m1 -76v2m0 2v2m0 26v2m0 24v2m0 4v2m5 -18v2m0 8v4m0 2v2m0 2v6m2 -50v2m0 4v2m0 46v2m2 -48v2m1 44v2m2 -46v2m1 -4v2m1 -8v2m0 4v2m1 -8v2m0 4v2m1 -8v2m0 48v2m3 -48v2m1 46v2m2 -8v2m1 -42v2m1 -10v2m1 0v2m1 50v2m1 -50v4m1 -4v2m0 2v2m0 42v2m1 -52v4m0 42v2m1 -46v2m1 4v2m4 -10v4m0 2v2m0 36v4m0 2v2m1 -52v2m1 48v2m1 -52v2m0 2v4m1 -10v2m1 -6v2m0 14v2m2 -4v4m1 -8v2m1 -4v2m0 2v2m1 0v2m2 30v2m1 -42v2m0 48v2m1 -44v2m1 -10v2m1 -6v2m2 2v2m0 8v2m1 -14v2m1 0v2m0 4v2m1 -8v2m0 2v4m0 42v2m1 -50v2m0 2v2m2 -16v4m0 4v2m0 46v2m1 -58v2m0 10v4m0 2v2m2 -12v2m1 4v4m2 -8v2m1 -4v2m0 4v2m0 42v2m1 -78v2m0 10v2m0 10v2m1 -8v2m0 6v2m1 4v4m2 -6v2m0 2v2m1 -20v2m2 8v2m1 -2v2m0 8v2m0 36v2m1 -40v2m1 -6v2m1 -4v2m1 -34v2m1 20v2m0 2v4m0 6v2m1 -40v2m0 32v2m0 2v2m1 40v2m1 -72v2m0 2v2m0 2v4m0 6v4m0 2v2m0 38v2m1 -70v2m0 12v2m0 8v2m0 42v2m1 -64v4m0 8v2m0 6v4m0 4v2"/>
<path stroke="#8200ff" stroke-width="1" fill="none" d="M220.5 168v2m71 20v2m12 -24v2m0 2v4m0 4v2m3 -14v2m0 4v2m1 -6v2m0 18v2m2 -18v2m8 -6v2m7 4v2m0 10v2m4 0v2m8 0v2m3 -14v2m1 4v2m1 -4v2m0 8v2m0 4v4m1 -36v2m1 24v2m234 -14v2m1 -4v2m8 6v2m14 2v2"/>
<path stroke="#7000ff" stroke-width="1" fill="none" d="M220.5 180v2m28 16v2m44 -18v2m0 6v2m2 0v2m10 4v2m4 -30v2m1 22v2m0 4v2m2 -14v2m5 -2v2m2 -18v2m0 16v2m4 0v2m2 -2v2m0 4v2m1 -10v2m1 10v2m2 -20v2m3 8v2m0 6v2m2 -24v2m0 14v2m5 -26v2m3 4v2m0 2v2m1 2v2m1 4v2m0 2v2m109 -22v2m125 8v2m2 -10v2m1 -12v2m0 14v2m1 -18v2m7 22v2m11 -4v2m3 -14v2m56 42v2m18 -4v2m11 12v2"/>
<path stroke="#5d00ff" stroke-width="1" fill="none" d="M249.5 196v2m42 -14v2m12 -16v2m1 34v2m1 -38v6m2 -2v2m0 10v2m0 6v2m1 -6v2m1 -6v2m6 6v2m2 -28v2m5 18v2m0 10v2m4 -4v2m4 -10v2m4 -16v2m1 12v2m2 -22v2m1 18v2m1 -6v2m1 -6v2m1 -12v2m0 34v2m1 -32v4m0 8v2m0 20v2m1 -30v2m11 2v2m2 -20v2m1 16v2m79 -22v2m1 10v2m16 8v2m1 -18v2m0 8v2m1 6v2m125 -20v2m15 -8v2m1 8v2m2 2v2m1 4v2m2 -2v2m1 -22v2m57 52v2m0 10v2m11 -6v2m5 0v2m1 0v2m6 -6v2m8 -4v2"/>
<path stroke="#bcff00" stroke-width="1" fill="none" d="M349.5 220v2m56 -44v2m0 14v2m1 -24v4m0 4v2m0 4v2m0 4v2m0 6v2m1 -10v2m0 6v4m1 -30v2m0 4v2m0 14v4m1 -12v2m1 0v2m0 14v4m1 -4v2m0 4v2m1 -18v2m0 6v2m1 -38v2m0 24v2m0 8v4m1 -18v2m0 4v2m1 -30v2m0 2v2m1 26v2m1 -12v2m0 4v2m0 4v2m1 4v2m0 6v2m1 -18v2m1 -34v2m66 22v2m1 -14v2m1 -14v2m0 16v4m0 2v2m1 -24v2m2 20v2m2 -26v2m1 28v2m1 -18v2m0 4v2m1 -10v2m0 2v2m0 8v2m1 -8v4m1 2v2m0 16v2m1 -28v4m2 -10v2m2 0v2m9 16v2m3 -6v2m2 -12v2m1 12v2m2 -8v2m0 10v2m3 -6v2m0 4v2m1 -32v2m1 -2v2m0 2v2m2 -2v4m1 4v2m1 -20v2m0 2v4m1 -12v2m0 8v4m0 16v2m1 -10v2m0 6v2m1 -26v2m0 4v2m0 14v2m0 2v2m1 -32v2m0 14v2m0 4v2m1 -22v2m0 6v4m0 6v4m0 6v2m1 -32v2m0 4v2m1 -4v2m0 6v2m0 8v2m0 6v2m0 2v2m1 -32v6m0 2v2m0 16v2m1 -22v2m0 16v2m0 2v2m1 -32v2m0 12v4m0 2v4m1 -14v2m0 16v2m1 -34v6m0 2v2m0 10v6m0 8v4m1 -32v2m0 2v2m0 8v2m1 -14v2m0 8v2m0 4v2m0 12v2m1 -4v2m4 32v2m1 -70v2m0 4v2m0 2v2m0 12v2m0 20v2m1 -36v2m0 8v2m0 6v2m1 -32v2m1 0v6m0 12v4m1 -18v2m0 2v2m0 4v2m0 2v2m0 22v2m0 16v2m0 10v2m1 -68v2m0 52v6m1 -68v2m0 18v2m1 -22v2m0 14v2m0 4v2m0 10v2m0 8v2m1 -46v6m0 22v4m0 12v2m1 -46v2m0 22v2m0 16v2m0 6v2m3 20v2m1 -46v2m0 10v2m0 16v2m0 16v2m1 -62v2m0 10v4m0 16v2m0 2v2m0 16v2m0 2v2m1 -4v2m3 -14v2m2 0v4m0 12v4m3 -40v2m0 30v4m0 2v2m1 -26v2m0 20v2m1 -32v2m1 -2v2m0 10v2m1 -14v2m0 12v2m1 -2v4m0 4v2m1 -22v4m0 6v2m0 4v2m2 -18v2m0 16v4m2 -26v4m0 14v2m1 -24v2m0 20v6m1 -20v4m0 8v4m1 -26v2m0 6v2m1 0v2m0 4v2m0 8v2m1 -8v2m1 4v2m1 -26v2m0 2v2m0 14v2m1 -12v2m0 4v2m0 6v2m1 -32v4m0 4v2m0 4v2m0 22v2m1 -14v6m2 -20v2m0 2v2m0 8v2m0 4v2m1 -22v4m0 10v12m1 -22v2m0 8v2m1 -26v2m0 4v2m0 14v2m0 6v2m0 2v2m1 -4v4m1 -28v2m0 4v2m1 14v2m1 -12v4m0 2v4m0 2v2m1 -24v4m0 14v4m1 -2v2m2 -14v2m0 4v4m1 -2v2m4 -4v2m1 -8v2m0 14v2m1 -10v2m1 2v2m0 2v2m1 -16v2m1 12v2m2 -6v2m1 -66v2m0 2v2m0 8v2m0 2v2m0 6v2m0 16v4m0 4v2m1 -56v2m0 2v2m0 2v2m0 20v4m0 12v2m0 22v4m0 2v2m1 -76v2m0 6v2m0 32v2m0 2v2m0 2v2m1 -58v2m0 56v2m0 10v4m1 -60v2m0 20v2m0 20v4m0 20v2m1 -82v2m0 20v2m0 36v2m0 10v4m1 -66v2m0 24v2m1 -18v2m0 22v2m0 2v2m1 -32v2m0 18v2m0 36v2m1 -44v2m0 44v2m1 -48v2m1 -4v2m1 -6v4m1 -6v2m1 -4v2m2 10v2m2 -14v2m0 10v2m2 -10v2m1 0v4m2 -2v2m2 -2v2m0 2v2m2 -16v2m2 12v2m1 -2v2m2 -16v2m1 2v2m1 -6v2m0 8v2m2 -14v2m0 18v2m1 -22v2m1 0v2m1 -20v2m0 20v2m1 -28v2m0 2v2m0 6v2m0 6v2m1 2v2m1 -26v2m0 2v2m0 6v2m1 12v2m1 -30v2m0 20v2m0 2v2m1 -26v2m0 16v2m0 4v2m1 0v2m4 -4v2m1 -2v2m0 2v2m0 10v2m2 -14v2m1 -28v2m0 2v4m0 10v2m0 2v2m2 -6v2m0 6v2m1 -32v2m0 6v2m0 4v2m0 8v2m1 -26v2m0 18v2m2 -20v2m0 24v2m1 0v2m2 -28v2m0 20v2m0 2v2m1 -8v2m1 2v2m2 2v4m1 -8v4m1 -28v2m0 6v2m0 12v2m1 -8v2m1 -22v2m0 4v2m0 20v4m3 -4v2m1 -28v2m1 18v2m1 2v4m1 -6v2m0 14v2m1 -18v2m1 6v4m0 44v2m1 -68v2m0 14v4m1 -28v2m0 6v2m0 6v2m0 8v2m3 -10v2m0 2v2m0 2v2m0 6v4m1 -10v2m1 -6v2m0 2v2m0 4v2"/>
<path stroke="#ffeb00" stroke-width="1" fill="none" d="M406.5 178v2m0 8v2m0 6v4m1 -12v2m2 -16v2m0 22v2m9 -2v2m0 2v2m69 -12v2m7 0v2m1 -16v2m18 16v2m16 -2v2m1 -26v4m0 4v6m0 2v2m1 -20v2m0 6v6m0 10v2m1 -26v2m1 -6v2m2 4v2m0 2v2m0 10v2m1 -20v2m0 14v2m0 8v2m1 -30v2m0 12v2m1 -10v2m0 10v2m0 10v2m1 -18v2m1 -12v2m1 2v4m1 14v6m1 0v2m5 -36v6m1 10v2m0 10v2m1 -18v2m0 2v2m2 -18v2m0 14v2m1 22v2m0 6v2m1 -36v4m0 10v2m0 6v2m0 2v2m0 2v6m1 -50v2m0 12v2m0 10v2m0 2v2m0 2v2m0 6v2m0 2v2m1 -26v2m17 38v2m0 2v2m0 2v2m0 2v2m1 -8v2m1 -6v2m3 0v2m0 4v2m7 -8v2m5 6v2m2 -30v2m0 6v2m0 16v2m1 -14v2m0 12v2m1 -28v2m2 0v2m1 16v2m1 -8v2m1 -12v2m0 16v2m2 -2v2m1 -6v2m9 0v2m0 2v2m2 -12v2m0 2v2m5 -4v4m0 4v2m1 -60v2m0 26v2m0 22v4m1 -62v2m0 14v2m0 28v2m0 24v4m1 -36v2m0 28v2m0 2v2m1 -76v2m0 14v2m0 30v2m0 16v2m0 2v2m1 -74v2m0 8v2m0 4v2m0 4v2m0 2v4m0 4v2m0 2v4m0 2v2m0 2v2m1 -56v2m0 2v2m0 4v2m0 4v2m0 10v2m0 2v2m0 2v2m0 8v2m0 6v4m0 6v4m0 4v2m0 8v2m1 -78v2m0 8v2m0 10v2m0 6v2m0 16v2m0 2v2m0 6v4m0 2v2m0 2v2m1 -70v2m0 6v2m0 6v8m0 2v2m0 2v2m1 -18v2m2 2v2m4 -6v2m3 -8v2m0 4v2m1 2v2m3 -2v2m2 4v2m1 2v2m2 -22v2m1 6v2m2 6v2m1 -10v2m0 6v2m1 -28v2m0 8v2m1 4v2m0 2v2m1 -28v4m0 4v2m0 6v2m0 12v2m2 -30v4m0 10v2m1 -18v2m0 24v2m1 -26v2m0 2v4m0 8v2m0 2v2m0 6v2m1 -30v2m0 4v2m0 2v4m1 -6v4m1 -10v4m0 4v4m3 -12v2m0 4v2m1 -6v2m0 2v2m1 -10v4m0 6v2m0 4v2m1 -12v4m0 18v2m1 -26v6m0 2v2m0 8v2m1 -24v2m0 2v4m0 14v2m2 -22v2m0 2v2m2 -10v2m0 4v2m0 16v2m1 -26v2m0 4v2m0 6v2m0 2v2m1 -2v2m0 10v2m1 -26v4m0 8v2m2 -16v2m0 10v2m1 -2v2m1 -8v2m0 14v2m1 -24v2m0 2v2m1 -8v2m0 14v4m1 -16v4m0 6v2m0 4v2m1 -18v4m0 6v2m0 2v2m0 6v2m1 -30v2m1 0v2m0 4v2m0 10v2m0 2v2m0 6v2m1 -28v2m0 14v4m0 2v4m1 -32v6m0 12v4m1 -16v2m0 10v2m1 -20v2m0 8v2m1 -2v2m0 6v6m1 -24v2m0 4v2m0 14v2m1 -18v2m0 16v2m1 -18v4m0 2v2m0 2v2m1 -20v2m0 6v2m0 10v2m0 8v2m1 -26v4m0 4v2m1 -6v2m0 2v4m0 6v2m0 4v2m1 -18v2m1 -8v2m0 18v4m1 -32v2m1 0v2m0 4v2m0 2v2m0 8v2m1 -8v4m0 6v2m0 2v2m1 4v2m2 -4v2"/>
<path stroke="#ffba00" stroke-width="1" fill="none" d="M406.5 182v2m1 2v2m0 10v2m87 -10v2m1 0v2m1 -8v2m0 2v2m2 -2v2m32 -4v2m1 -14v2m0 8v2m0 4v2m0 8v2m1 -36v4m0 20v2m0 8v2m2 -20v6m2 -14v2m1 -6v2m0 6v2m1 -12v2m0 14v2m0 16v2m1 -30v2m0 2v2m1 -6v2m1 8v2m1 -20v2m0 2v2m0 8v4m1 -12v2m10 18v2m0 4v2m0 10v2m1 -42v2m0 14v2m0 2v2m0 6v4m0 6v2m1 -40v2m0 2v4m0 24v4m0 8v2m1 -42v2m0 4v2m0 22v4m1 -28v2m15 44v2m2 -2v6m0 4v2m1 -4v2m1 -10v4m1 4v2m1 -6v2m0 8v2m1 -16v2m0 10v2m4 -26v2m2 -2v2m0 22v2m5 -26v4m1 22v2m1 -16v2m0 8v2m1 -22v2m0 10v2m3 4v2m3 -4v2m2 6v2m10 -6v2m8 -50v2m0 28v2m0 2v2m0 2v2m2 12v2m1 -74v2m0 12v4m0 14v2m1 -36v2m0 12v2m0 22v2m0 16v2m0 2v2m0 20v2m1 -78v2m0 16v2m0 14v4m0 4v4m0 6v2m0 20v2m1 -80v2m0 6v6m0 4v2m0 2v4m0 12v4m0 18v2m0 6v2m0 6v2m0 2v2m1 -62v2m0 12v2m1 -18v2m0 8v2m1 -6v2m1 -8v4m2 0v2m1 -2v2m1 -8v2m1 -4v2m0 6v2m1 -2v4m1 -10v2m0 4v2m1 -6v4m1 8v2m2 -10v2m1 0v2m2 4v2m1 -8v2m1 -10v4m1 -4v4m1 -6v2m1 6v4m1 -12v2m0 10v2m1 -26v2m0 16v2m1 -24v2m0 6v2m0 6v2m0 6v2m0 4v2m1 -20v2m1 -14v4m0 2v2m0 6v2m0 6v2m1 -24v2m0 8v2m1 -10v2m0 4v2m1 -6v2m1 -6v2m0 14v2m1 -2v6m1 -4v2m0 4v2m1 -22v2m0 10v2m2 -16v2m0 2v2m0 8v2m0 10v2m1 -26v2m0 2v2m0 8v2m1 -14v2m0 14v2m1 -22v2m0 2v2m1 -8v2m0 2v2m0 16v2m0 2v2m0 2v2m1 -28v2m0 6v6m0 4v2m1 -12v2m0 2v2m0 2v2m0 6v4m1 -32v4m0 6v2m0 12v2m0 2v2m1 -30v2m0 8v2m1 -10v2m0 10v2m0 4v2m1 -20v2m0 16v2m1 -12v2m0 14v2m2 -12v2m2 -16v4m0 4v2m0 8v2m1 -18v2m0 12v2m1 -18v2m0 2v2m0 4v2m0 4v2m0 4v2m1 -26v2m0 2v4m0 2v2m0 2v2m0 14v2m1 -22v2m0 8v2m1 -20v2m0 6v6m0 6v2m1 -16v4m0 4v2m0 2v6m1 -22v4m0 14v2m0 2v2m1 -26v4m0 2v2m0 16v2m1 -22v2m0 6v4m0 6v2m1 -24v2m3 0v2m0 4v4m0 2v2m0 2v2m0 2v2m1 -22v2m0 12v2m1 -4v2m1 -8v2m0 6v2m1 -4v6m1 -22v4m0 4v2m1 8v4m0 8v2m1 -22v2m0 4v2m1 -12v2m0 2v2m0 12v2m0 2v4m6 -8v2"/>
<path stroke="#e6ff00" stroke-width="1" fill="none" d="M406.5 184v2m0 8v2m0 10v2m1 -14v2m1 6v2m0 2v4m1 -20v2m0 8v2m1 0v4m1 -12v2m0 4v2m3 2v2m0 16v2m1 -44v2m0 22v2m4 -2v2m0 2v2m67 -42v2m0 8v2m2 10v2m5 -12v2m0 4v2m1 -4v2m2 -4v2m0 4v2m1 -16v2m0 18v2m1 -28v4m1 18v4m4 -8v2m9 10v2m1 0v2m9 -22v2m1 24v2m5 -10v2m1 -6v2m1 -4v6m1 -24v2m0 2v2m1 18v2m1 -22v8m0 2v2m0 10v4m1 -26v2m0 14v2m0 6v2m1 -16v2m0 2v2m1 -24v2m0 18v2m1 -24v2m0 16v2m0 8v4m1 -26v2m0 2v2m0 2v4m0 4v2m1 -24v2m0 12v2m0 6v2m0 6v6m1 -24v2m0 6v2m1 -6v2m0 10v2m0 2v2m1 -26v2m0 2v2m0 4v2m1 -20v2m0 2v2m0 4v2m0 10v2m0 2v4m0 2v2m0 2v2m1 -4v2m4 -4v2m1 -34v2m0 16v2m0 26v2m1 -20v2m0 4v2m0 2v2m0 2v2m0 2v2m0 2v2m1 -32v2m0 2v2m0 2v2m1 18v2m1 -40v2m0 12v2m0 4v2m0 4v2m0 12v2m1 -46v4m0 2v2m0 16v2m0 6v2m1 -22v2m0 4v2m0 2v2m0 2v2m0 6v2m1 -36v2m0 4v2m0 2v2m0 2v2m0 20v4m0 2v4m1 -28v6m0 4v2m0 14v2m1 -22v2m0 14v2m0 2v2m4 -20v2m0 14v2m0 30v2m1 -30v2m0 12v2m8 8v2m1 -16v4m0 6v2m0 6v2m1 -22v2m1 -4v2m0 16v2m1 -26v2m0 12v2m0 2v2m1 -4v2m0 4v2m1 -14v2m1 -4v2m2 0v2m2 10v2m1 -14v2m1 -16v2m0 20v2m1 -20v4m0 8v2m0 2v2m1 -22v4m0 8v2m1 8v2m2 -12v2m1 -10v2m0 10v2m0 4v4m1 -24v2m0 8v4m0 4v2m1 -36v2m0 8v2m0 6v2m0 4v2m0 2v2m0 10v2m1 -28v2m0 4v2m0 12v2m0 2v2m2 -26v2m1 -2v2m0 12v2m1 -14v2m0 20v2m1 -26v2m0 2v2m0 14v2m1 -10v2m1 -2v2m0 2v2m1 -18v2m1 4v2m0 6v2m0 10v2m1 -10v2m2 -8v2m6 -2v8m1 -4v2m0 2v2m1 -6v2m0 2v2m1 -8v2m4 -10v2m0 12v4m1 -70v2m0 12v2m0 6v4m0 2v4m0 4v4m0 2v2m0 2v2m0 4v2m0 6v2m0 14v2m1 -70v2m0 34v2m0 14v2m0 12v2m1 -76v2m0 22v2m0 52v2m1 -72v2m0 14v2m0 2v2m0 6v2m0 12v2m0 26v2m1 -78v2m0 2v6m0 6v2m0 4v2m0 2v2m0 4v2m0 10v2m0 2v2m0 4v2m0 4v2m0 2v2m0 8v4m1 -74v2m0 8v4m0 4v2m0 24v2m0 24v2m1 -28v2m0 2v2m0 2v2m0 2v2m0 8v2m1 -58v2m0 12v2m1 -8v4m2 2v2m2 -8v2m0 6v2m3 -14v2m0 2v2m3 10v2m1 -6v2m1 -8v4m6 -10v2m1 -8v2m0 8v2m1 2v2m1 -2v2m2 -4v4m1 -12v2m1 -18v2m0 14v2m1 6v4m2 -8v2m0 2v2m1 -16v4m0 8v2m1 -18v2m1 -12v2m1 14v2m0 10v2m1 -22v6m0 8v2m1 -24v4m1 8v2m0 4v4m0 2v2m1 -14v4m0 12v4m1 -32v2m0 8v2m0 2v2m0 10v2m0 2v2m1 -32v2m0 2v2m0 12v4m1 -10v2m0 14v2m0 2v2m1 -8v2m1 -6v2m2 0v2m0 4v2m1 -16v2m0 8v4m1 -14v2m0 12v2m1 -10v4m0 2v2m1 -20v2m0 2v4m0 2v2m1 -10v2m0 6v2m1 -16v4m0 2v2m0 8v4m1 -26v2m0 6v2m0 2v2m0 4v2m0 2v2m0 2v4m1 -30v2m0 4v4m0 12v2m0 6v2m1 -32v2m0 18v2m0 6v2m1 -14v2m0 4v2m1 -24v2m1 28v2m1 -30v4m0 12v2m0 6v2m1 2v2m2 -6v2m1 -18v2m0 2v4m0 4v2m0 6v2m1 -30v2m1 -2v2m0 4v2m0 2v2m1 -6v2m0 18v4m1 -10v2m0 2v6m1 -10v2m0 2v2m1 -24v2m0 22v2m1 -28v2m0 6v2m0 12v2m0 4v2m2 -6v4m1 -8v2m2 -24v2m0 2v4m0 8v2m0 8v2m1 -16v2m0 10v2m0 14v4m1 -2v2m2 -22v2m0 12v2m1 -10v2m0 8v2m0 2v2m1 -18v2"/>
<path stroke="#ff8800" stroke-width="1" fill="none" d="M531.5 168v2m0 18v2m0 4v2m7 -28v2m4 32v2m11 -8v2m0 4v2m2 -30v2m0 36v2m0 4v2m18 16v2m1 -4v2m0 4v2m1 0v2m1 -10v2m2 2v2m13 -24v2m1 0v2m1 14v2m26 -62v2m0 2v2m0 46v2m3 -60v2m0 2v4m0 14v2m0 4v2m0 2v2m0 12v2m2 -26v2m0 6v2m0 28v4m0 4v4m0 4v2m1 -78v2m0 2v2m0 12v2m0 10v4m0 4v2m0 4v2m0 2v2m0 30v2m1 -82v4m0 2v2m0 4v4m1 -4v2m0 4v2m1 2v4m2 0v2m1 -12v2m1 0v4m1 -2v2m0 4v2m1 -10v2m1 -4v2m2 -2v2m0 6v2m1 -6v2m0 4v2m2 -12v2m0 2v4m1 0v2m1 0v2m1 -2v2m1 -6v2m3 -2v2m1 -18v2m0 14v2m0 4v2m1 -22v6m0 4v2m0 2v2m1 -22v2m0 6v2m1 -10v6m0 2v4m1 -8v2m0 6v2m0 2v2m1 -8v2m0 2v4m1 -14v4m0 2v2m1 -10v2m0 8v2m0 14v2m1 -32v2m0 8v2m1 -8v2m1 2v2m1 -10v2m0 6v4m0 8v4m1 -24v2m0 18v2m1 -18v2m0 2v4m0 2v4m0 2v2m2 -6v2m1 -10v2m0 10v2m1 -10v6m0 8v2m1 -26v2m0 12v2m0 2v2m1 8v2m1 -28v2m1 0v2m0 6v4m1 -10v2m0 2v2m0 2v2m0 2v4m0 2v2m1 -24v2m0 4v4m0 4v2m1 -8v2m1 -10v2m0 2v2m0 2v6m0 2v2m1 -18v2m3 8v2m1 -2v2m0 4v2m1 -8v4m1 -10v2m1 -8v2m0 8v2m0 4v2m1 -16v2m1 0v2m1 -8v2m0 8v2m0 2v4m1 2v2m1 -14v2m0 12v2m1 -16v2m2 -6v2m0 8v4m1 -16v2m0 22v2m1 -20v2m0 6v2m0 2v2m1 -18v2m0 6v2m0 6v2m1 -10v4m1 -12v2m0 6v2m1 -10v4m0 4v2m0 4v6m1 -22v2m0 8v2m0 2v2m0 4v2m1 -22v2m0 8v4m0 2v4m0 4v2m1 -14v2m0 6v2m1 -6v2m4 6v2m0 2v2m1 -6v2"/>
<path stroke="#ff6400" stroke-width="1" fill="none" d="M554.5 190v2m0 2v2m19 36v2m1 8v2m18 -28v2m5 -2v2m26 -8v2m1 -42v2m0 10v2m0 58v2m1 -68v2m0 24v2m1 -32v2m0 4v2m1 -8v2m1 10v2m1 -2v4m0 4v2m1 -6v2m1 -2v4m1 -18v6m0 4v2m1 -16v6m0 2v2m0 12v2m1 -20v10m0 4v2m1 -22v6m0 12v6m1 -4v2m1 -4v2m1 4v2m2 -8v2m4 -2v2m1 -14v4m1 -2v2m0 2v4m1 -12v2m0 14v2m0 4v2m1 -8v2m1 -20v2m0 10v2m0 10v2m0 2v2m1 -20v4m0 2v4m0 4v2m1 -14v2m0 2v2m1 -10v2m1 -8v2m0 2v4m0 8v2m1 -4v4m1 -16v2m0 2v4m1 -2v2m0 6v2m1 -4v4m2 -20v2m1 14v2m1 -14v2m0 4v2m0 4v2m1 -12v2m0 4v2m1 -16v2m1 14v2m2 0v2m1 -10v2m0 6v4m1 -16v2m0 6v2m1 -4v2m0 4v2m0 2v2m1 -22v6m0 10v2m1 -12v2m2 -8v2m1 -4v2m0 10v2m3 -8v2m1 4v2m0 2v2m1 -8v2m1 0v2m1 0v2m1 -16v2m0 16v2m1 -8v4m1 -4v2m1 -14v2m0 8v4m0 2v2m1 -8v2m1 -12v2m3 12v2m1 -16v2m0 8v2m1 -10v2m0 2v2m1 8v2m1 -18v2m2 4v2m0 2v2m1 -8v4m1 -6v2m0 4v2m0 6v4m0 6v2m1 -18v2"/>
<path stroke="#ff4300" stroke-width="1" fill="none" d="M627.5 168v4m0 6v2m0 2v4m0 6v2m1 -20v6m0 6v2m1 -6v2m1 0v4m0 2v4m1 -8v2m1 2v2m1 -16v2m0 4v4m1 -16v4m1 0v4m0 4v2m1 -12v2m0 2v2m0 4v2m2 2v2m0 2v2m1 -8v2m0 2v2m0 4v2m2 -14v10m2 -2v2m1 -4v2m0 2v2m1 -26v2m0 10v2m1 -10v4m0 2v2m0 10v2m1 -24v4m0 2v4m0 2v4m0 2v2m0 4v2m1 -16v2m0 6v2m1 -20v2m0 4v2m0 12v2m1 -14v2m4 4v2m1 0v2m0 2v2m12 -22v2m1 -2v4m0 4v4m0 6v2m1 0v2m1 -8v2m3 -16v2m0 4v2m1 -6v2m10 14v2m1 -2v2m1 -8v2m4 4v2m1 -18v2m0 8v2m1 -14v2m4 -2v2m1 -2v2m1 2v2m0 6v2"/>
<path stroke="#ff2100" stroke-width="1" fill="none" d="M627.5 174v4m1 -6v2m0 6v4m0 4v2m4 -20v4m0 6v2m1 -2v2m1 -14v2m1 8v4m1 -12v2m0 2v2m0 4v2m2 0v4m1 0v2m0 4v2m1 -20v2m0 6v2m1 -14v2m1 12v2m0 6v2m1 -8v4m0 2v2m1 -24v4m0 2v2m0 6v2m1 -16v4m0 8v2m1 -16v4m1 6v2m1 -12v6m0 2v2m0 2v6m1 -14v2m1 -6v2m5 16v2m30 -6v2m6 -2v2m5 -12v2m0 2v2m2 10v2"/>
<path stroke="#ff0000" stroke-width="1" fill="none" d="M628.5 168v4m1 -4v14m1 -14v16m1 -16v16m1 -16v2m0 12v2m1 -16v2m3 -2v2m0 8v2m1 -12v16m1 -16v14m1 -14v16m0 6v2m1 -24v6m0 2v6m1 -14v2m0 2v10m1 -14v16m0 2v6m1 -24v18m1 -18v2m0 4v2m0 2v6m1 -6v2"/>
<path fill="#4000ff" d="M142 252h2v4h-2zM160 252h2v3h-2zM162 252h2v4h-2zM178 252h2v4h-2zM188 252h2v2h-2zM194 252h2v3h-2zM202 252h2v4h-2zM216 252h2v2h-2zM218 252h2v4h-2zM220 252h2v3h-2zM222 252h2v3h-2zM312 252h2v3h-2zM314 252h2v3h-2zM338 252h2v3h-2zM348 252h2v4h-2zM382 252h2v4h-2zM384 252h2v2h-2zM404 252h2v4h-2zM426 252h2v3h-2zM466 252h2v3h-2zM470 252h2v3h-2zM474 252h2v2h-2zM492 252h2v3h-2zM494 252h2v2h-2zM496 252h2v3h-2zM498 252h2v3h-2zM520 252h2v4h-2zM526 252h2v3h-2zM536 252h2v4h-2zM540 252h2v2h-2zM544 252h2v2h-2zM550 252h2v2h-2zM562 252h2v3h-2zM566 252h2v4h-2zM568 252h2v2h-2zM576 252h2v4h-2zM580 252h2v3h-2zM588 252h2v4h-2zM610 252h2v3h-2zM612 252h2v2h-2zM630 252h2v3h-2zM648 252h2v2h-2zM658 252h2v3h-2zM662 252h2v3h-2zM664 252h2v4h-2zM690 252h2v4h-2zM692 252h2v2h-2z"/>
<path fill="#8000ff" d="M146 259h2v3h-2zM150 252h2v3h-2zM152 280h2v3h-2zM156 252h2v4h-2zM164 259h2v3h-2zM164 277h2v3h-2zM172 256h2v3h-2zM176 252h2v3h-2zM176 259h2v3h-2zM176 262h2v3h-2zM178 262h2v3h-2zM180 265h2v3h-2zM182 262h2v3h-2zM184 271h2v3h-2zM186 283h2v3h-2zM196 252h2v3h-2zM200 252h2v4h-2zM204 283h2v3h-2zM206 252h2v2h-2zM206 265h2v3h-2zM206 283h2v3h-2zM210 252h2v2h-2zM210 256h2v3h-2zM210 274h2v3h-2zM212 252h2v3h-2zM212 280h2v3h-2zM218 259h2v3h-2zM224 252h2v4h-2zM228 252h2v3h-2zM228 256h2v3h-2zM230 252h2v2h-2zM232 252h2v4h-2zM232 259h2v3h-2zM234 252h2v4h-2zM234 271h2v3h-2zM234 274h2v3h-2zM242 262h2v3h-2zM242 271h2v3h-2zM244 280h2v3h-2zM246 252h2v3h-2zM254 274h2v3h-2zM260 252h2v2h-2zM260 268h2v3h-2zM266 252h2v2h-2zM270 256h2v3h-2zM272 280h2v3h-2zM274 252h2v4h-2zM276 252h2v3h-2zM276 283h2v3h-2zM280 252h2v2h-2zM280 262h2v3h-2zM282 268h2v3h-2zM288 252h2v4h-2zM288 262h2v3h-2zM292 265h2v3h-2zM294 268h2v3h-2zM296 252h2v2h-2zM300 252h2v3h-2zM304 252h2v3h-2zM304 259h2v3h-2zM306 280h2v3h-2zM308 256h2v3h-2zM316 252h2v4h-2zM318 252h2v3h-2zM324 252h2v4h-2zM326 252h2v3h-2zM328 259h2v3h-2zM328 265h2v3h-2zM328 277h2v3h-2zM330 252h2v2h-2zM332 252h2v2h-2zM332 256h2v3h-2zM334 252h2v2h-2zM334 265h2v3h-2zM336 262h2v3h-2zM340 262h2v3h-2zM342 252h2v4h-2zM342 268h2v3h-2zM346 252h2v3h-2zM346 271h2v3h-2zM348 268h2v3h-2zM352 259h2v3h-2zM356 262h2v3h-2zM356 271h2v3h-2zM358 252h2v4h-2zM362 262h2v3h-2zM366 252h2v2h-2zM374 252h2v3h-2zM376 252h2v3h-2zM378 259h2v3h-2zM380 252h2v2h-2zM386 280h2v3h-2zM392 252h2v3h-2zM394 252h2v4h-2zM396 259h2v3h-2zM400 262h2v3h-2zM402 252h2v3h-2zM408 252h2v3h-2zM412 252h2v4h-2zM412 277h2v3h-2zM414 277h2v3h-2zM416 252h2v3h-2zM424 252h2v2h-2zM426 262h2v3h-2zM428 252h2v4h-2zM428 262h2v3h-2zM428 277h2v3h-2zM428 283h2v3h-2zM430 271h2v3h-2zM432 252h2v3h-2zM438 252h2v2h-2zM444 271h2v3h-2zM444 277h2v3h-2zM450 280h2v3h-2zM454 252h2v2h-2zM456 259h2v3h-2zM456 262h2v3h-2zM458 252h2v3h-2zM460 252h2v2h-2zM462 252h2v3h-2zM464 277h2v3h-2zM468 252h2v2h-2zM468 262h2v3h-2zM470 262h2v3h-2zM474 256h2v3h-2zM476 256h2v3h-2zM478 252h2v4h-2zM480 252h2v4h-2zM480 274h2v3h-2zM482 252h2v2h-2zM486 256h2v3h-2zM486 259h2v3h-2zM490 252h2v4h-2zM490 265h2v3h-2zM494 268h2v3h-2zM496 277h2v3h-2zM498 274h2v3h-2zM500 265h2v3h-2zM500 271h2v3h-2zM502 252h2v3h-2zM506 262h2v3h-2zM506 271h2v3h-2zM508 252h2v2h-2zM510 252h2v3h-2zM512 252h2v4h-2zM512 262h2v3h-2zM514 252h2v4h-2zM518 252h2v4h-2zM518 262h2v3h-2zM520 271h2v3h-2zM522 252h2v2h-2zM530 252h2v2h-2zM532 274h2v3h-2zM534 280h2v3h-2zM536 256h2v3h-2zM536 271h2v3h-2zM538 252h2v4h-2zM542 252h2v2h-2zM548 252h2v2h-2zM548 262h2v3h-2zM554 271h2v3h-2zM554 283h2v3h-2zM556 252h2v3h-2zM558 256h2v3h-2zM562 259h2v3h-2zM564 256h2v3h-2zM564 268h2v3h-2zM568 265h2v3h-2zM570 252h2v2h-2zM572 252h2v2h-2zM576 259h2v3h-2zM576 280h2v3h-2zM582 252h2v2h-2zM586 268h2v3h-2zM586 283h2v3h-2zM588 256h2v3h-2zM594 256h2v3h-2zM596 265h2v3h-2zM598 259h2v3h-2zM600 283h2v3h-2zM602 252h2v3h-2zM604 274h2v3h-2zM606 280h2v3h-2zM614 252h2v4h-2zM616 252h2v4h-2zM616 265h2v3h-2zM624 252h2v2h-2zM628 256h2v3h-2zM636 274h2v3h-2zM644 252h2v4h-2zM648 265h2v3h-2zM650 252h2v4h-2zM650 256h2v3h-2zM650 271h2v3h-2zM652 262h2v3h-2zM660 256h2v3h-2zM660 283h2v3h-2zM672 252h2v4h-2zM674 252h2v3h-2zM674 280h2v3h-2zM676 268h2v3h-2zM680 280h2v3h-2zM684 252h2v3h-2zM686 252h2v3h-2zM688 252h2v2h-2zM694 262h2v3h-2zM694 271h2v3h-2zM696 252h2v3h-2zM698 256h2v3h-2zM702 262h2v3h-2zM704 252h2v4h-2z"/>
<path fill="#3000ff" d="M150 274h2v3h-2zM156 265h2v3h-2zM172 283h2v3h-2zM198 274h2v3h-2zM200 256h2v3h-2zM252 283h2v3h-2zM268 274h2v3h-2zM276 277h2v3h-2zM278 283h2v3h-2zM280 271h2v3h-2zM288 265h2v3h-2zM304 274h2v3h-2zM348 259h2v3h-2zM358 259h2v3h-2zM360 283h2v3h-2zM384 280h2v3h-2zM390 256h2v3h-2zM406 262h2v3h-2zM426 256h2v3h-2zM430 283h2v3h-2zM464 274h2v3h-2zM464 283h2v3h-2zM494 256h2v3h-2zM496 262h2v3h-2zM526 256h2v3h-2zM532 271h2v3h-2zM544 280h2v3h-2zM552 256h2v3h-2zM578 262h2v3h-2zM620 268h2v3h-2zM624 259h2v3h-2zM640 268h2v3h-2zM642 268h2v3h-2zM656 277h2v3h-2zM696 274h2v3h-2z"/>
<path fill="#2000ff" d="M164 251h2v2h-2zM186 251h2v2h-2zM244 251h2v2h-2zM254 251h2v2h-2zM282 251h2v2h-2zM292 251h2v2h-2zM308 251h2v2h-2zM344 251h2v2h-2zM356 251h2v2h-2zM372 251h2v2h-2zM390 251h2v2h-2zM396 251h2v2h-2zM418 251h2v2h-2zM440 251h2v2h-2zM452 251h2v2h-2zM456 251h2v2h-2zM472 251h2v2h-2zM546 251h2v2h-2zM584 251h2v2h-2zM604 251h2v2h-2zM606 251h2v2h-2zM622 251h2v2h-2zM640 251h2v2h-2zM646 251h2v2h-2zM666 251h2v2h-2z"/>
<path fill="#0080ff" d="M190 251h2v2h-2zM238 251h2v2h-2zM256 251h2v2h-2zM262 251h2v2h-2zM270 251h2v2h-2zM290 251h2v2h-2zM294 251h2v2h-2zM350 251h2v2h-2zM434 251h2v2h-2zM442 251h2v2h-2zM464 251h2v2h-2zM488 251h2v2h-2zM552 251h2v2h-2zM558 251h2v2h-2zM596 251h2v2h-2zM700 251h2v2h-2zM702 251h2v2h-2z"/>
<path fill="#a0ff00" d="M510 226h1v30h-1z"/>
<path fill="#00ffe0" d="M601 250h2v6h-2z"/>
<rect x="864" y="27" width="19" height="105" fill="url(#g26)"/><rect x="864" y="172" width="19" height="105" fill="url(#g171)"/>
<path fill="#fff" d="M141 19h567v1h-567zM141 142h567v1h-567zM141 19h1v124h-1zM707 19h1v124h-1zM160 20h1v5h-1zM160 136h1v6h-1zM179 20h1v5h-1zM179 136h1v6h-1zM197 20h1v5h-1zM197 136h1v6h-1zM216 20h1v5h-1zM216 136h1v6h-1zM235 20h1v8h-1zM235 133h1v9h-1zM254 20h1v5h-1zM254 136h1v6h-1zM273 20h1v5h-1zM273 136h1v6h-1zM292 20h1v5h-1zM292 136h1v6h-1zM311 20h1v5h-1zM311 136h1v6h-1zM330 20h1v8h-1zM330 133h1v9h-1zM349 20h1v5h-1zM349 136h1v6h-1zM368 20h1v5h-1zM368 136h1v6h-1zM387 20h1v5h-1zM387 136h1v6h-1zM406 20h1v5h-1zM406 136h1v6h-1zM425 20h1v8h-1zM425 133h1v9h-1zM444 20h1v5h-1zM444 136h1v6h-1zM463 20h1v5h-1zM463 136h1v6h-1zM482 20h1v5h-1zM482 136h1v6h-1zM501 20h1v5h-1zM501 136h1v6h-1zM520 20h1v8h-1zM520 133h1v9h-1zM539 20h1v5h-1zM539 136h1v6h-1zM558 20h1v5h-1zM558 136h1v6h-1zM577 20h1v5h-1zM577 136h1v6h-1zM595 20h1v5h-1zM595 136h1v6h-1zM614 20h1v8h-1zM614 133h1v9h-1zM633 20h1v5h-1zM633 136h1v6h-1zM652 20h1v5h-1zM652 136h1v6h-1zM671 20h1v5h-1zM671 136h1v6h-1zM690 20h1v5h-1zM690 136h1v6h-1zM141 164h567v1h-567zM141 287h567v1h-567zM141 164h1v124h-1zM707 164h1v124h-1zM160 165h1v5h-1zM160 281h1v6h-1zM179 165h1v5h-1zM179 281h1v6h-1zM197 165h1v5h-1zM197 281h1v6h-1zM216 165h1v5h-1zM216 281h1v6h-1zM235 165h1v8h-1zM235 278h1v9h-1zM254 165h1v5h-1zM254 281h1v6h-1zM273 165h1v5h-1zM273 281h1v6h-1zM292 165h1v5h-1zM292 281h1v6h-1zM311 165h1v5h-1zM311 281h1v6h-1zM330 165h1v8h-1zM330 278h1v9h-1zM349 165h1v5h-1zM349 281h1v6h-1zM368 165h1v5h-1zM368 281h1v6h-1zM387 165h1v5h-1zM387 281h1v6h-1zM406 165h1v5h-1zM406 281h1v6h-1zM425 165h1v8h-1zM425 278h1v9h-1zM444 165h1v5h-1zM444 281h1v6h-1zM463 165h1v5h-1zM463 281h1v6h-1zM482 165h1v5h-1zM482 281h1v6h-1zM501 165h1v5h-1zM501 281h1v6h-1zM520 165h1v8h-1zM520 278h1v9h-1zM539 165h1v5h-1zM539 281h1v6h-1zM558 165h1v5h-1zM558 281h1v6h-1zM577 165h1v5h-1zM577 281h1v6h-1zM595 165h1v5h-1zM595 281h1v6h-1zM614 165h1v8h-1zM614 278h1v9h-1zM633 165h1v5h-1zM633 281h1v6h-1zM652 165h1v5h-1zM652 281h1v6h-1zM671 165h1v5h-1zM671 281h1v6h-1zM690 165h1v5h-1zM690 281h1v6h-1zM142 296h567v1h-567zM142 418h567v1h-567zM142 296h1v123h-1zM708 296h1v123h-1zM161 297h1v5h-1zM161 412h1v6h-1zM180 297h1v5h-1zM180 412h1v6h-1zM198 297h1v5h-1zM198 412h1v6h-1zM217 297h1v5h-1zM217 412h1v6h-1zM236 297h1v8h-1zM236 409h1v9h-1zM255 297h1v5h-1zM255 412h1v6h-1zM274 297h1v5h-1zM274 412h1v6h-1zM293 297h1v5h-1zM293 412h1v6h-1zM312 297h1v5h-1zM312 412h1v6h-1zM331 297h1v8h-1zM331 409h1v9h-1zM350 297h1v5h-1zM350 412h1v6h-1zM369 297h1v5h-1zM369 412h1v6h-1zM388 297h1v5h-1zM388 412h1v6h-1zM407 297h1v5h-1zM407 412h1v6h-1zM426 297h1v8h-1zM426 409h1v9h-1zM445 297h1v5h-1zM445 412h1v6h-1zM464 297h1v5h-1zM464 412h1v6h-1zM483 297h1v5h-1zM483 412h1v6h-1zM502 297h1v5h-1zM502 412h1v6h-1zM521 297h1v8h-1zM521 409h1v9h-1zM540 297h1v5h-1zM540 412h1v6h-1zM559 297h1v5h-1zM559 412h1v6h-1zM578 297h1v5h-1zM578 412h1v6h-1zM596 297h1v5h-1zM596 412h1v6h-1zM615 297h1v8h-1zM615 409h1v9h-1zM634 297h1v5h-1zM634 412h1v6h-1zM653 297h1v5h-1zM653 412h1v6h-1zM672 297h1v5h-1zM672 412h1v6h-1zM691 297h1v5h-1zM691 412h1v6h-1zM142 429h567v1h-567zM142 551h567v1h-567zM142 429h1v123h-1zM708 429h1v123h-1zM161 430h1v5h-1zM161 545h1v6h-1zM180 430h1v5h-1zM180 545h1v6h-1zM198 430h1v5h-1zM198 545h1v6h-1zM217 430h1v5h-1zM217 545h1v6h-1zM236 430h1v8h-1zM236 542h1v9h-1zM255 430h1v5h-1zM255 545h1v6h-1zM274 430h1v5h-1zM274 545h1v6h-1zM293 430h1v5h-1zM293 545h1v6h-1zM312 430h1v5h-1zM312 545h1v6h-1zM331 430h1v8h-1zM331 542h1v9h-1zM350 430h1v5h-1zM350 545h1v6h-1zM369 430h1v5h-1zM369 545h1v6h-1zM388 430h1v5h-1zM388 545h1v6h-1zM407 430h1v5h-1zM407 545h1v6h-1zM426 430h1v8h-1zM426 542h1v9h-1zM445 430h1v5h-1zM445 545h1v6h-1zM464 430h1v5h-1zM464 545h1v6h-1zM483 430h1v5h-1zM483 545h1v6h-1zM502 430h1v5h-1zM502 545h1v6h-1zM521 430h1v8h-1zM521 542h1v9h-1zM540 430h1v5h-1zM540 545h1v6h-1zM559 430h1v5h-1zM559 545h1v6h-1zM578 430h1v5h-1zM578 545h1v6h-1zM596 430h1v5h-1zM596 545h1v6h-1zM615 430h1v8h-1zM615 542h1v9h-1zM634 430h1v5h-1zM634 545h1v6h-1zM653 430h1v5h-1zM653 545h1v6h-1zM672 430h1v5h-1zM672 545h1v6h-1zM691 430h1v5h-1zM691 545h1v6h-1zM142 561h567v1h-567zM142 684h567v1h-567zM142 561h1v124h-1zM708 561h1v124h-1zM161 562h1v5h-1zM161 678h1v6h-1zM180 562h1v5h-1zM180 678h1v6h-1zM198 562h1v5h-1zM198 678h1v6h-1zM217 562h1v5h-1zM217 678h1v6h-1zM236 562h1v8h-1zM236 675h1v9h-1zM255 562h1v5h-1zM255 678h1v6h-1zM274 562h1v5h-1zM274 678h1v6h-1zM293 562h1v5h-1zM293 678h1v6h-1zM312 562h1v5h-1zM312 678h1v6h-1zM331 562h1v8h-1zM331 675h1v9h-1zM350 562h1v5h-1zM350 678h1v6h-1zM369 562h1v5h-1zM369 678h1v6h-1zM388 562h1v5h-1zM388 678h1v6h-1zM407 562h1v5h-1zM407 678h1v6h-1zM426 562h1v8h-1zM426 675h1v9h-1zM445 562h1v5h-1zM445 678h1v6h-1zM464 562h1v5h-1zM464 678h1v6h-1zM483 562h1v5h-1zM483 678h1v6h-1zM502 562h1v5h-1zM502 678h1v6h-1zM521 562h1v8h-1zM521 675h1v9h-1zM540 562h1v5h-1zM540 678h1v6h-1zM559 562h1v5h-1zM559 678h1v6h-1zM578 562h1v5h-1zM578 678h1v6h-1zM596 562h1v5h-1zM596 678h1v6h-1zM615 562h1v8h-1zM615 675h1v9h-1zM634 562h1v5h-1zM634 678h1v6h-1zM653 562h1v5h-1zM653 678h1v6h-1zM672 562h1v5h-1zM672 678h1v6h-1zM691 562h1v5h-1zM691 678h1v6h-1zM132 19h9v1h-9zM135 21h6v1h-6zM135 23h6v1h-6zM135 26h6v1h-6zM135 28h6v1h-6zM135 31h6v1h-6zM135 33h6v1h-6zM135 36h6v1h-6zM135 38h6v1h-6zM135 41h6v1h-6zM132 43h9v1h-9zM135 46h6v1h-6zM135 48h6v1h-6zM135 50h6v1h-6zM135 53h6v1h-6zM135 55h6v1h-6zM135 58h6v1h-6zM135 60h6v1h-6zM135 63h6v1h-6zM135 65h6v1h-6zM132 68h9v1h-9zM135 70h6v1h-6zM135 73h6v1h-6zM135 75h6v1h-6zM135 78h6v1h-6zM135 80h6v1h-6zM135 82h6v1h-6zM135 85h6v1h-6zM135 87h6v1h-6zM135 90h6v1h-6zM132 92h9v1h-9zM135 95h6v1h-6zM135 97h6v1h-6zM135 100h6v1h-6zM135 102h6v1h-6zM135 105h6v1h-6zM135 107h6v1h-6zM135 110h6v1h-6zM135 112h6v1h-6zM135 114h6v1h-6zM132 117h9v1h-9zM135 119h6v1h-6zM135 122h6v1h-6zM135 124h6v1h-6zM135 127h6v1h-6zM135 129h6v1h-6zM135 132h6v1h-6zM135 134h6v1h-6zM135 137h6v1h-6zM135 139h6v1h-6zM132 142h9v1h-9zM708 19h9v1h-9zM708 21h6v1h-6zM708 23h6v1h-6zM708 26h6v1h-6zM708 28h6v1h-6zM708 31h6v1h-6zM708 33h6v1h-6zM708 36h6v1h-6zM708 38h6v1h-6zM708 41h6v1h-6zM708 43h9v1h-9zM708 46h6v1h-6zM708 48h6v1h-6zM708 50h6v1h-6zM708 53h6v1h-6zM708 55h6v1h-6zM708 58h6v1h-6zM708 60h6v1h-6zM708 63h6v1h-6zM708 65h6v1h-6zM708 68h9v1h-9zM708 70h6v1h-6zM708 73h6v1h-6zM708 75h6v1h-6zM708 78h6v1h-6zM708 80h6v1h-6zM708 82h6v1h-6zM708 85h6v1h-6zM708 87h6v1h-6zM708 90h6v1h-6zM708 92h9v1h-9zM708 95h6v1h-6zM708 97h6v1h-6zM708 100h6v1h-6zM708 102h6v1h-6zM708 105h6v1h-6zM708 107h6v1h-6zM708 110h6v1h-6zM708 112h6v1h-6zM708 114h6v1h-6zM708 117h9v1h-9zM708 119h6v1h-6zM708 122h6v1h-6zM708 124h6v1h-6zM708 127h6v1h-6zM708 129h6v1h-6zM708 132h6v1h-6zM708 134h6v1h-6zM708 137h6v1h-6zM708 139h6v1h-6zM708 142h9v1h-9zM132 287h9v1h-9zM135 270h6v1h-6zM135 261h6v1h-6zM135 254h6v1h-6zM135 249h6v1h-6zM135 245h6v1h-6zM135 241h6v1h-6zM135 238h6v1h-6zM135 235h6v1h-6zM132 233h9v1h-9zM135 217h6v1h-6zM135 207h6v1h-6zM135 201h6v1h-6zM135 196h6v1h-6zM135 191h6v1h-6zM135 188h6v1h-6zM135 185h6v1h-6zM135 182h6v1h-6zM132 180h9v1h-9zM135 163h6v1h-6zM708 164h9v1h-9zM708 166h6v1h-6zM708 168h6v1h-6zM708 171h6v1h-6zM708 173h6v1h-6zM708 176h6v1h-6zM708 178h6v1h-6zM708 181h6v1h-6zM708 183h6v1h-6zM708 186h6v1h-6zM708 188h9v1h-9zM708 191h6v1h-6zM708 193h6v1h-6zM708 195h6v1h-6zM708 198h6v1h-6zM708 200h6v1h-6zM708 203h6v1h-6zM708 205h6v1h-6zM708 208h6v1h-6zM708 210h6v1h-6zM708 213h9v1h-9zM708 215h6v1h-6zM708 218h6v1h-6zM708 220h6v1h-6zM708 223h6v1h-6zM708 225h6v1h-6zM708 227h6v1h-6zM708 230h6v1h-6zM708 232h6v1h-6zM708 235h6v1h-6zM708 237h9v1h-9zM708 240h6v1h-6zM708 242h6v1h-6zM708 245h6v1h-6zM708 247h6v1h-6zM708 250h6v1h-6zM708 252h6v1h-6zM708 255h6v1h-6zM708 257h6v1h-6zM708 259h6v1h-6zM708 262h9v1h-9zM708 264h6v1h-6zM708 267h6v1h-6zM708 269h6v1h-6zM708 272h6v1h-6zM708 274h6v1h-6zM708 277h6v1h-6zM708 279h6v1h-6zM708 282h6v1h-6zM708 284h6v1h-6zM708 287h9v1h-9zM133 296h9v1h-9zM136 298h6v1h-6zM136 300h6v1h-6zM136 303h6v1h-6zM136 305h6v1h-6zM136 308h6v1h-6zM136 310h6v1h-6zM136 313h6v1h-6zM136 315h6v1h-6zM136 317h6v1h-6zM133 320h9v1h-9zM136 322h6v1h-6zM136 325h6v1h-6zM136 327h6v1h-6zM136 330h6v1h-6zM136 332h6v1h-6zM136 335h6v1h-6zM136 337h6v1h-6zM136 339h6v1h-6zM136 342h6v1h-6zM133 344h9v1h-9zM136 347h6v1h-6zM136 349h6v1h-6zM136 352h6v1h-6zM136 354h6v1h-6zM136 357h6v1h-6zM136 359h6v1h-6zM136 361h6v1h-6zM136 364h6v1h-6zM136 366h6v1h-6zM133 369h9v1h-9zM136 371h6v1h-6zM136 374h6v1h-6zM136 376h6v1h-6zM136 378h6v1h-6zM136 381h6v1h-6zM136 383h6v1h-6zM136 386h6v1h-6zM136 388h6v1h-6zM136 391h6v1h-6zM133 393h9v1h-9zM136 396h6v1h-6zM136 398h6v1h-6zM136 400h6v1h-6zM136 403h6v1h-6zM136 405h6v1h-6zM136 408h6v1h-6zM136 410h6v1h-6zM136 413h6v1h-6zM136 415h6v1h-6zM133 418h9v1h-9zM709 296h9v1h-9zM709 298h6v1h-6zM709 300h6v1h-6zM709 303h6v1h-6zM709 305h6v1h-6zM709 308h6v1h-6zM709 310h6v1h-6zM709 313h6v1h-6zM709 315h6v1h-6zM709 317h6v1h-6zM709 320h9v1h-9zM709 322h6v1h-6zM709 325h6v1h-6zM709 327h6v1h-6zM709 330h6v1h-6zM709 332h6v1h-6zM709 335h6v1h-6zM709 337h6v1h-6zM709 339h6v1h-6zM709 342h6v1h-6zM709 344h9v1h-9zM709 347h6v1h-6zM709 349h6v1h-6zM709 352h6v1h-6zM709 354h6v1h-6zM709 357h6v1h-6zM709 359h6v1h-6zM709 361h6v1h-6zM709 364h6v1h-6zM709 366h6v1h-6zM709 369h9v1h-9zM709 371h6v1h-6zM709 374h6v1h-6zM709 376h6v1h-6zM709 378h6v1h-6zM709 381h6v1h-6zM709 383h6v1h-6zM709 386h6v1h-6zM709 388h6v1h-6zM709 391h6v1h-6zM709 393h9v1h-9zM709 396h6v1h-6zM709 398h6v1h-6zM709 400h6v1h-6zM709 403h6v1h-6zM709 405h6v1h-6zM709 408h6v1h-6zM709 410h6v1h-6zM709 413h6v1h-6zM709 415h6v1h-6zM709 418h9v1h-9zM133 429h9v1h-9zM136 431h6v1h-6zM136 433h6v1h-6zM136 436h6v1h-6zM136 438h6v1h-6zM136 441h6v1h-6zM136 443h6v1h-6zM136 446h6v1h-6zM136 448h6v1h-6zM136 450h6v1h-6zM133 453h9v1h-9zM136 455h6v1h-6zM136 458h6v1h-6zM136 460h6v1h-6zM136 463h6v1h-6zM136 465h6v1h-6zM136 468h6v1h-6zM136 470h6v1h-6zM136 472h6v1h-6zM136 475h6v1h-6zM133 477h9v1h-9zM136 480h6v1h-6zM136 482h6v1h-6zM136 485h6v1h-6zM136 487h6v1h-6zM136 490h6v1h-6zM136 492h6v1h-6zM136 494h6v1h-6zM136 497h6v1h-6zM136 499h6v1h-6zM133 502h9v1h-9zM136 504h6v1h-6zM136 507h6v1h-6zM136 509h6v1h-6zM136 511h6v1h-6zM136 514h6v1h-6zM136 516h6v1h-6zM136 519h6v1h-6zM136 521h6v1h-6zM136 524h6v1h-6zM133 526h9v1h-9zM136 529h6v1h-6zM136 531h6v1h-6zM136 533h6v1h-6zM136 536h6v1h-6zM136 538h6v1h-6zM136 541h6v1h-6zM136 543h6v1h-6zM136 546h6v1h-6zM136 548h6v1h-6zM133 551h9v1h-9zM709 429h9v1h-9zM709 431h6v1h-6zM709 433h6v1h-6zM709 436h6v1h-6zM709 438h6v1h-6zM709 441h6v1h-6zM709 443h6v1h-6zM709 446h6v1h-6zM709 448h6v1h-6zM709 450h6v1h-6zM709 453h9v1h-9zM709 455h6v1h-6zM709 458h6v1h-6zM709 460h6v1h-6zM709 463h6v1h-6zM709 465h6v1h-6zM709 468h6v1h-6zM709 470h6v1h-6zM709 472h6v1h-6zM709 475h6v1h-6zM709 477h9v1h-9zM709 480h6v1h-6zM709 482h6v1h-6zM709 485h6v1h-6zM709 487h6v1h-6zM709 490h6v1h-6zM709 492h6v1h-6zM709 494h6v1h-6zM709 497h6v1h-6zM709 499h6v1h-6zM709 502h9v1h-9zM709 504h6v1h-6zM709 507h6v1h-6zM709 509h6v1h-6zM709 511h6v1h-6zM709 514h6v1h-6zM709 516h6v1h-6zM709 519h6v1h-6zM709 521h6v1h-6zM709 524h6v1h-6zM709 526h9v1h-9zM709 529h6v1h-6zM709 531h6v1h-6zM709 533h6v1h-6zM709 536h6v1h-6zM709 538h6v1h-6zM709 541h6v1h-6zM709 543h6v1h-6zM709 546h6v1h-6zM709 548h6v1h-6zM709 551h9v1h-9zM133 561h9v1h-9zM136 563h6v1h-6zM136 565h6v1h-6zM136 568h6v1h-6zM136 570h6v1h-6zM136 573h6v1h-6zM136 575h6v1h-6zM136 578h6v1h-6zM136 580h6v1h-6zM136 583h6v1h-6zM133 585h9v1h-9zM136 588h6v1h-6zM136 590h6v1h-6zM136 592h6v1h-6zM136 595h6v1h-6zM136 597h6v1h-6zM136 600h6v1h-6zM136 602h6v1h-6zM136 605h6v1h-6zM136 607h6v1h-6zM133 610h9v1h-9zM136 612h6v1h-6zM136 615h6v1h-6zM136 617h6v1h-6zM136 620h6v1h-6zM136 622h6v1h-6zM136 624h6v1h-6zM136 627h6v1h-6zM136 629h6v1h-6zM136 632h6v1h-6zM133 634h9v1h-9zM136 637h6v1h-6zM136 639h6v1h-6zM136 642h6v1h-6zM136 644h6v1h-6zM136 647h6v1h-6zM136 649h6v1h-6zM136 652h6v1h-6zM136 654h6v1h-6zM136 656h6v1h-6zM133 659h9v1h-9zM136 661h6v1h-6zM136 664h6v1h-6zM136 666h6v1h-6zM136 669h6v1h-6zM136 671h6v1h-6zM136 674h6v1h-6zM136 676h6v1h-6zM136 679h6v1h-6zM136 681h6v1h-6zM133 684h9v1h-9zM709 561h9v1h-9zM709 563h6v1h-6zM709 565h6v1h-6zM709 568h6v1h-6zM709 570h6v1h-6zM709 573h6v1h-6zM709 575h6v1h-6zM709 578h6v1h-6zM709 580h6v1h-6zM709 583h6v1h-6zM709 585h9v1h-9zM709 588h6v1h-6zM709 590h6v1h-6zM709 592h6v1h-6zM709 595h6v1h-6zM709 597h6v1h-6zM709 600h6v1h-6zM709 602h6v1h-6zM709 605h6v1h-6zM709 607h6v1h-6zM709 610h9v1h-9zM709 612h6v1h-6zM709 615h6v1h-6zM709 617h6v1h-6zM709 620h6v1h-6zM709 622h6v1h-6zM709 624h6v1h-6zM709 627h6v1h-6zM709 629h6v1h-6zM709 632h6v1h-6zM709 634h9v1h-9zM709 637h6v1h-6zM709 639h6v1h-6zM709 642h6v1h-6zM709 644h6v1h-6zM709 647h6v1h-6zM709 649h6v1h-6zM709 652h6v1h-6zM709 654h6v1h-6zM709 656h6v1h-6zM709 659h9v1h-9zM709 661h6v1h-6zM709 664h6v1h-6zM709 666h6v1h-6zM709 669h6v1h-6zM709 671h6v1h-6zM709 674h6v1h-6zM709 676h6v1h-6zM709 679h6v1h-6zM709 681h6v1h-6zM709 684h9v1h-9zM863 26h21v1h-21zM863 132h21v1h-21zM863 26h1v107h-1zM883 26h1v107h-1zM879 126h4v1h-4zM879 123h4v1h-4zM879 121h4v1h-4zM879 119h4v1h-4zM879 118h4v1h-4zM879 117h4v1h-4zM879 116h4v1h-4zM879 115h4v1h-4zM876 114h7v1h-7zM879 109h4v1h-4zM879 105h4v1h-4zM879 103h4v1h-4zM879 101h4v1h-4zM879 100h4v1h-4zM879 99h4v1h-4zM879 98h4v1h-4zM879 97h4v1h-4zM876 97h7v1h-7zM879 91h4v1h-4zM879 88h4v1h-4zM879 86h4v1h-4zM879 84h4v1h-4zM879 82h4v1h-4zM879 81h4v1h-4zM879 80h4v1h-4zM879 79h4v1h-4zM876 79h7v1h-7zM879 73h4v1h-4zM879 70h4v1h-4zM879 68h4v1h-4zM879 66h4v1h-4zM879 65h4v1h-4zM879 64h4v1h-4zM879 63h4v1h-4zM879 62h4v1h-4zM876 61h7v1h-7zM879 56h4v1h-4zM879 52h4v1h-4zM879 50h4v1h-4zM879 48h4v1h-4zM879 47h4v1h-4zM879 46h4v1h-4zM879 45h4v1h-4zM879 44h4v1h-4zM876 44h7v1h-7zM879 38h4v1h-4zM879 35h4v1h-4zM879 33h4v1h-4zM879 31h4v1h-4zM879 29h4v1h-4zM879 28h4v1h-4zM879 27h4v1h-4zM879 26h4v1h-4zM863 171h21v1h-21zM863 277h21v1h-21zM863 171h1v107h-1zM883 171h1v107h-1zM879 261h4v1h-4zM879 251h4v1h-4zM879 245h4v1h-4zM879 239h4v1h-4zM879 235h4v1h-4zM879 232h4v1h-4zM879 229h4v1h-4zM879 226h4v1h-4zM876 224h7v1h-7zM879 208h4v1h-4zM879 198h4v1h-4zM879 192h4v1h-4zM879 186h4v1h-4zM879 182h4v1h-4zM879 179h4v1h-4zM879 176h4v1h-4zM879 173h4v1h-4z"/>
<path fill="#ff0000" d="M143 387h565v1h-565zM143 508h565v1h-565z"/>
<path fill="#ffffff" d="M143 490h565v1h-565zM142 225h565v1h-565z"/>
<path fill="#00ff00" d="M143 634h565v1h-565z"/>
</g>
<polyline fill="none" stroke="#fff" stroke-width="1" shape-rendering="crispEdges" points="142,93.5 509,93.5 512,92.5 515,88.5 521,78.5 523,74.5 530,61.0 536,52.9 541.5,50.5 545,51.5 550,52.9 557,56.5 563,61.0 570,66.5 577,70.9 581,76.0 588.5,81.8 600,93.5 612,103.5 624,112.0 636,121.5 647,126.5 661,131.7 675,133.3 685,130.3 695,122.5 707,112.5"/>
<g font-family='"Liberation Sans", sans-serif'><text stroke="#000" stroke-width="0.25" transform="translate(141.79 14.00) scale(1.046 1)" x="0" y="0" font-size="15.84" fill="#fff" textLength="117.85" lengthAdjust="spacing">NPI Vector Data</text>
<text stroke="#000" stroke-width="0.25" transform="translate(141.78 159.00) scale(1.012 1)" x="0" y="0" font-size="15.99" fill="#fff" textLength="115.54" lengthAdjust="spacing">MEx ELS-01 LR</text>
<text stroke="#000" stroke-width="0.25" transform="translate(27.89 701.40) scale(1.122 1)" x="0" y="0" font-size="15.70" fill="#fff" textLength="70.23" lengthAdjust="spacing">2004/365</text>
<text stroke="#000" stroke-width="0.25" transform="translate(121.19 701.40) scale(1.017 1)" x="0" y="0" font-size="15.70" fill="#fff" textLength="39.73" lengthAdjust="spacing">12:00</text>
<text stroke="#000" stroke-width="0.25" transform="translate(215.94 701.40) scale(1.017 1)" x="0" y="0" font-size="15.70" fill="#fff" textLength="39.73" lengthAdjust="spacing">12:40</text>
<text stroke="#000" stroke-width="0.25" transform="translate(310.69 701.40) scale(1.017 1)" x="0" y="0" font-size="15.70" fill="#fff" textLength="39.73" lengthAdjust="spacing">13:20</text>
<text stroke="#000" stroke-width="0.25" transform="translate(405.44 701.40) scale(1.017 1)" x="0" y="0" font-size="15.70" fill="#fff" textLength="39.73" lengthAdjust="spacing">14:00</text>
<text stroke="#000" stroke-width="0.25" transform="translate(500.19 701.40) scale(1.017 1)" x="0" y="0" font-size="15.70" fill="#fff" textLength="39.73" lengthAdjust="spacing">14:40</text>
<text stroke="#000" stroke-width="0.25" transform="translate(594.94 701.40) scale(1.017 1)" x="0" y="0" font-size="15.70" fill="#fff" textLength="39.73" lengthAdjust="spacing">15:20</text>
<text stroke="#000" stroke-width="0.25" transform="translate(689.69 701.40) scale(1.017 1)" x="0" y="0" font-size="15.70" fill="#fff" textLength="39.73" lengthAdjust="spacing">16:00</text>
<text transform="translate(79.58 23.00) scale(1.091 1)" x="0" y="0" font-size="11.63" fill="#fff" textLength="44.70" lengthAdjust="spacing">3.1e+01</text>
<text transform="translate(76.18 47.60) scale(1.139 1)" x="0" y="0" font-size="11.63" fill="#fff" textLength="45.79" lengthAdjust="spacing">2.5e+01</text>
<text transform="translate(78.88 72.20) scale(1.100 1)" x="0" y="0" font-size="11.63" fill="#fff" textLength="44.93" lengthAdjust="spacing">1.9e+01</text>
<text transform="translate(78.88 96.80) scale(1.100 1)" x="0" y="0" font-size="11.63" fill="#fff" textLength="44.93" lengthAdjust="spacing">1.2e+01</text>
<text transform="translate(73.68 121.40) scale(1.174 1)" x="0" y="0" font-size="11.63" fill="#fff" textLength="46.54" lengthAdjust="spacing">6.2e+00</text>
<text transform="translate(720.48 23.00) scale(1.042 1)" x="0" y="0" font-size="11.63" fill="#fff" textLength="19.92" lengthAdjust="spacing">120</text>
<text transform="translate(720.48 47.60) scale(1.130 1)" x="0" y="0" font-size="11.63" fill="#fff" textLength="13.93" lengthAdjust="spacing">80</text>
<text transform="translate(720.48 72.20) scale(1.130 1)" x="0" y="0" font-size="11.63" fill="#fff" textLength="13.93" lengthAdjust="spacing">40</text>
<text transform="translate(720.48 96.80) scale(1.128 1)" x="0" y="0" font-size="11.63" fill="#fff" textLength="6.96" lengthAdjust="spacing">0</text>
<text transform="translate(722.38 121.40) scale(1.141 1)" x="0" y="0" font-size="11.63" fill="#fff" textLength="21.69" lengthAdjust="spacing">- 40</text>
<text stroke="#000" stroke-width="0.25" transform="translate(39.80 79.85) rotate(-90) scale(1.030 1)" x="0" y="0" font-size="17.30" fill="#fff" text-anchor="middle" textLength="50.95" lengthAdjust="spacing">Sector</text>
<text stroke="#000" stroke-width="0.25" transform="translate(55.00 80.60) rotate(-90) scale(1.044 1)" x="0" y="0" font-size="16.42" fill="#fff" text-anchor="middle" textLength="60.05" lengthAdjust="spacing">Unitless</text>
<text transform="translate(790.70 80.20) rotate(90) scale(0.942 1)" x="0" y="0" font-size="13.52" fill="#fff" text-anchor="middle" textLength="75.14" lengthAdjust="spacing">Sensor Data</text>
<text transform="translate(779.70 80.15) rotate(90) scale(0.966 1)" x="0" y="0" font-size="12.94" fill="#fff" text-anchor="middle" textLength="110.02" lengthAdjust="spacing">ESH Sun Elevation</text>
<text transform="translate(769.95 81.00) rotate(90) scale(1.098 1)" x="0" y="0" font-size="10.40" fill="#fff" text-anchor="middle" textLength="28.18" lengthAdjust="spacing">Angle</text>
<text transform="translate(759.54 80.60) rotate(90) scale(1.164 1)" x="0" y="0" font-size="9.39" fill="#fff" text-anchor="middle" textLength="31.99" lengthAdjust="spacing">degree</text>
<text x="110.0" y="184.0" font-size="11" fill="#fff" textLength="12" lengthAdjust="spacingAndGlyphs">10</text>
<text x="123.0" y="177.8" font-size="9.5" fill="#fff">2</text>
<text x="110.0" y="237.4" font-size="11" fill="#fff" textLength="12" lengthAdjust="spacingAndGlyphs">10</text>
<text x="123.0" y="231.2" font-size="9.5" fill="#fff">1</text>
<text transform="translate(720.48 168.00) scale(1.051 1)" x="0" y="0" font-size="11.63" fill="#fff" textLength="20.03" lengthAdjust="spacing">190</text>
<text transform="translate(720.48 192.60) scale(1.051 1)" x="0" y="0" font-size="11.63" fill="#fff" textLength="20.03" lengthAdjust="spacing">150</text>
<text transform="translate(720.48 217.20) scale(0.982 1)" x="0" y="0" font-size="11.63" fill="#fff" textLength="19.40" lengthAdjust="spacing">110</text>
<text transform="translate(720.48 241.80) scale(1.130 1)" x="0" y="0" font-size="11.63" fill="#fff" textLength="13.93" lengthAdjust="spacing">70</text>
<text transform="translate(720.48 266.40) scale(1.130 1)" x="0" y="0" font-size="11.63" fill="#fff" textLength="13.93" lengthAdjust="spacing">30</text>
<text stroke="#000" stroke-width="0.25" transform="translate(71.23 224.80) rotate(-90) scale(0.967 1)" x="0" y="0" font-size="14.87" fill="#fff" text-anchor="middle" textLength="105.80" lengthAdjust="spacing">Electron Energy</text>
<text transform="translate(82.90 226.20) rotate(-90) scale(1.170 1)" x="0" y="0" font-size="9.74" fill="#fff" text-anchor="middle" textLength="13.06" lengthAdjust="spacing">eV</text>
<text stroke="#000" stroke-width="0.25" transform="translate(802.00 225.20) rotate(90) scale(1.012 1)" x="0" y="0" font-size="16.57" fill="#fff" text-anchor="middle" textLength="92.81" lengthAdjust="spacing">Sensor Data</text>
<text stroke="#000" stroke-width="0.25" transform="translate(786.70 226.15) rotate(90) scale(1.014 1)" x="0" y="0" font-size="16.42" fill="#fff" text-anchor="middle" textLength="111.46" lengthAdjust="spacing">Model Scanner</text>
<text transform="translate(775.05 225.20) rotate(90) scale(1.169 1)" x="0" y="0" font-size="12.86" fill="#fff" text-anchor="middle" textLength="36.06" lengthAdjust="spacing">Angle</text>
<text stroke="#000" stroke-width="0.25" transform="translate(758.37 225.60) rotate(90) scale(1.054 1)" x="0" y="0" font-size="14.87" fill="#fff" text-anchor="middle" textLength="55.56" lengthAdjust="spacing">degrees</text>
<text transform="translate(110.98 300.00) scale(1.074 1)" x="0" y="0" font-size="11.63" fill="#fff" textLength="16.90" lengthAdjust="spacing">1.5</text>
<text transform="translate(113.88 324.40) scale(0.943 1)" x="0" y="0" font-size="11.63" fill="#fff" textLength="16.16" lengthAdjust="spacing">1.1</text>
<text transform="translate(108.08 348.80) scale(1.181 1)" x="0" y="0" font-size="11.63" fill="#fff" textLength="17.82" lengthAdjust="spacing">0.7</text>
<text transform="translate(108.08 373.20) scale(1.181 1)" x="0" y="0" font-size="11.63" fill="#fff" textLength="17.82" lengthAdjust="spacing">0.3</text>
<text transform="translate(103.38 397.60) scale(1.171 1)" x="0" y="0" font-size="11.63" fill="#fff" textLength="21.99" lengthAdjust="spacing">-0.1</text>
<text transform="translate(721.48 300.00) scale(1.033 1)" x="0" y="0" font-size="11.63" fill="#fff" textLength="16.51" lengthAdjust="spacing">1.5</text>
<text transform="translate(721.48 324.40) scale(0.869 1)" x="0" y="0" font-size="11.63" fill="#fff" textLength="16.16" lengthAdjust="spacing">1.1</text>
<text transform="translate(721.48 348.80) scale(1.181 1)" x="0" y="0" font-size="11.63" fill="#fff" textLength="17.82" lengthAdjust="spacing">0.7</text>
<text transform="translate(721.48 373.20) scale(1.181 1)" x="0" y="0" font-size="11.63" fill="#fff" textLength="17.82" lengthAdjust="spacing">0.3</text>
<text transform="translate(722.48 397.60) scale(1.198 1)" x="0" y="0" font-size="11.63" fill="#fff" textLength="22.24" lengthAdjust="spacing">-0.1</text>
<text transform="translate(47.60 356.70) rotate(-90) scale(1.015 1)" x="0" y="0" font-size="13.95" fill="#fff" text-anchor="middle" textLength="78.31" lengthAdjust="spacing">Sensor Data</text>
<text stroke="#000" stroke-width="0.25" transform="translate(62.00 356.70) rotate(-90) scale(0.956 1)" x="0" y="0" font-size="15.26" fill="#fff" text-anchor="middle" textLength="125.13" lengthAdjust="spacing">MU Scanner +30V</text>
<text transform="translate(73.40 356.50) rotate(-90) scale(1.079 1)" x="0" y="0" font-size="12.50" fill="#fff" text-anchor="middle" textLength="57.57" lengthAdjust="spacing">Raw Data</text>
<text transform="translate(85.80 357.00) rotate(-90) scale(0.983 1)" x="0" y="0" font-size="12.79" fill="#fff" text-anchor="middle" textLength="25.59" lengthAdjust="spacing">Raw</text>
<text stroke="#000" stroke-width="0.25" transform="translate(802.00 356.70) rotate(90) scale(0.947 1)" x="0" y="0" font-size="15.12" fill="#ff0000" text-anchor="middle" textLength="84.03" lengthAdjust="spacing">Sensor Data</text>
<text stroke="#000" stroke-width="0.25" transform="translate(789.60 357.00) rotate(90) scale(1.002 1)" x="0" y="0" font-size="15.12" fill="#ff0000" text-anchor="middle" textLength="105.15" lengthAdjust="spacing">MU Scanner Int</text>
<text stroke="#000" stroke-width="0.25" transform="translate(776.00 356.50) rotate(90) scale(0.914 1)" x="0" y="0" font-size="15.55" fill="#ff0000" text-anchor="middle" textLength="68.28" lengthAdjust="spacing">Raw Data</text>
<text transform="translate(764.80 356.50) rotate(90) scale(1.027 1)" x="0" y="0" font-size="12.50" fill="#ff0000" text-anchor="middle" textLength="25.44" lengthAdjust="spacing">Raw</text>
<text transform="translate(89.10 433.00) scale(1.181 1)" x="0" y="0" font-size="11.05" fill="#fff" textLength="33.86" lengthAdjust="spacing">23500</text>
<text transform="translate(91.00 457.40) scale(1.144 1)" x="0" y="0" font-size="11.05" fill="#fff" textLength="33.30" lengthAdjust="spacing">18800</text>
<text transform="translate(93.80 481.80) scale(1.089 1)" x="0" y="0" font-size="11.05" fill="#fff" textLength="32.40" lengthAdjust="spacing">14100</text>
<text transform="translate(96.70 506.20) scale(1.191 1)" x="0" y="0" font-size="11.05" fill="#fff" textLength="27.20" lengthAdjust="spacing">9400</text>
<text transform="translate(96.70 530.60) scale(1.191 1)" x="0" y="0" font-size="11.05" fill="#fff" textLength="27.20" lengthAdjust="spacing">4700</text>
<text transform="translate(721.50 433.00) scale(1.194 1)" x="0" y="0" font-size="11.05" fill="#fff" textLength="20.43" lengthAdjust="spacing">260</text>
<text transform="translate(721.50 457.40) scale(1.194 1)" x="0" y="0" font-size="11.05" fill="#fff" textLength="20.43" lengthAdjust="spacing">206</text>
<text transform="translate(721.50 481.80) scale(1.083 1)" x="0" y="0" font-size="11.05" fill="#fff" textLength="19.38" lengthAdjust="spacing">152</text>
<text transform="translate(721.50 506.20) scale(1.230 1)" x="0" y="0" font-size="11.05" fill="#fff" textLength="13.82" lengthAdjust="spacing">98</text>
<text transform="translate(721.50 530.60) scale(1.181 1)" x="0" y="0" font-size="11.05" fill="#fff" textLength="13.54" lengthAdjust="spacing">44</text>
<text transform="translate(42.00 490.15) rotate(-90) scale(1.063 1)" x="0" y="0" font-size="11.19" fill="#fff" text-anchor="middle" textLength="64.66" lengthAdjust="spacing">Sensor Data</text>
<text transform="translate(53.40 489.65) rotate(-90) scale(1.074 1)" x="0" y="0" font-size="11.19" fill="#fff" text-anchor="middle" textLength="102.15" lengthAdjust="spacing">Model Scanner Pos</text>
<text transform="translate(63.80 490.00) rotate(-90) scale(1.115 1)" x="0" y="0" font-size="9.59" fill="#fff" text-anchor="middle" textLength="20.51" lengthAdjust="spacing">Raw</text>
<text transform="translate(75.30 489.65) rotate(-90) scale(1.177 1)" x="0" y="0" font-size="9.74" fill="#fff" text-anchor="middle" textLength="36.33" lengthAdjust="spacing">unitless</text>
<text stroke="#000" stroke-width="0.25" transform="translate(802.00 490.10) rotate(90) scale(1.015 1)" x="0" y="0" font-size="15.12" fill="#ff0000" text-anchor="middle" textLength="84.87" lengthAdjust="spacing">Sensor Data</text>
<text stroke="#000" stroke-width="0.25" transform="translate(788.60 490.10) rotate(90) scale(1.003 1)" x="0" y="0" font-size="15.12" fill="#ff0000" text-anchor="middle" textLength="114.46" lengthAdjust="spacing">MU Scanner Pos</text>
<text transform="translate(776.72 490.15) rotate(90) scale(1.168 1)" x="0" y="0" font-size="11.74" fill="#ff0000" text-anchor="middle" textLength="57.18" lengthAdjust="spacing">Telemetry</text>
<text stroke="#000" stroke-width="0.25" transform="translate(762.00 489.65) rotate(90) scale(1.010 1)" x="0" y="0" font-size="15.12" fill="#ff0000" text-anchor="middle" textLength="54.12" lengthAdjust="spacing">Unitless</text>
<text transform="translate(103.79 565.00) scale(1.116 1)" x="0" y="0" font-size="11.34" fill="#fff" textLength="23.59" lengthAdjust="spacing">0.15</text>
<text transform="translate(103.79 589.60) scale(1.116 1)" x="0" y="0" font-size="11.34" fill="#fff" textLength="23.59" lengthAdjust="spacing">0.10</text>
<text transform="translate(100.89 614.20) scale(1.195 1)" x="0" y="0" font-size="11.34" fill="#fff" textLength="24.46" lengthAdjust="spacing">0.05</text>
<text transform="translate(100.89 638.80) scale(1.195 1)" x="0" y="0" font-size="11.34" fill="#fff" textLength="24.46" lengthAdjust="spacing">0.00</text>
<text transform="translate(91.09 663.40) scale(1.306 1)" x="0" y="0" font-size="11.34" fill="#fff" textLength="29.88" lengthAdjust="spacing">-0.05</text>
<text transform="translate(94.99 688.00) scale(1.215 1)" x="0" y="0" font-size="11.34" fill="#fff" textLength="28.89" lengthAdjust="spacing">-0.10</text>
<text transform="translate(720.89 565.00) scale(1.118 1)" x="0" y="0" font-size="11.34" fill="#fff" textLength="23.62" lengthAdjust="spacing">0.15</text>
<text transform="translate(720.89 589.60) scale(1.118 1)" x="0" y="0" font-size="11.34" fill="#fff" textLength="23.62" lengthAdjust="spacing">0.10</text>
<text transform="translate(720.89 614.20) scale(1.214 1)" x="0" y="0" font-size="11.34" fill="#fff" textLength="24.65" lengthAdjust="spacing">0.05</text>
<text transform="translate(720.89 638.80) scale(1.214 1)" x="0" y="0" font-size="11.34" fill="#fff" textLength="24.65" lengthAdjust="spacing">0.00</text>
<text transform="translate(722.89 663.40) scale(1.179 1)" x="0" y="0" font-size="11.34" fill="#fff" textLength="31.92" lengthAdjust="spacing">- 0.05</text>
<text transform="translate(722.89 688.00) scale(1.117 1)" x="0" y="0" font-size="11.34" fill="#fff" textLength="31.01" lengthAdjust="spacing">- 0.10</text>
<text stroke="#000" stroke-width="0.25" transform="translate(37.00 623.10) rotate(-90) scale(0.903 1)" x="0" y="0" font-size="17.01" fill="#fff" text-anchor="middle" textLength="94.53" lengthAdjust="spacing">Sensor Data</text>
<text stroke="#000" stroke-width="0.25" transform="translate(49.70 622.65) rotate(-90) scale(0.989 1)" x="0" y="0" font-size="15.55" fill="#fff" text-anchor="middle" textLength="108.93" lengthAdjust="spacing">Model Constant</text>
<text transform="translate(61.83 622.65) rotate(-90) scale(1.194 1)" x="0" y="0" font-size="11.96" fill="#fff" text-anchor="middle" textLength="44.21" lengthAdjust="spacing">velocity</text>
<text stroke="#000" stroke-width="0.25" transform="translate(77.00 622.50) rotate(-90) scale(1.006 1)" x="0" y="0" font-size="17.01" fill="#fff" text-anchor="middle" textLength="72.12" lengthAdjust="spacing">index/sec</text>
<text stroke="#000" stroke-width="0.25" transform="translate(815.00 621.65) rotate(90) scale(0.996 1)" x="0" y="0" font-size="15.55" fill="#00ff00" text-anchor="middle" textLength="86.45" lengthAdjust="spacing">Sensor Data</text>
<text stroke="#000" stroke-width="0.25" transform="translate(801.40 622.65) rotate(90) scale(0.937 1)" x="0" y="0" font-size="16.42" fill="#00ff00" text-anchor="middle" textLength="115.04" lengthAdjust="spacing">Model Constant</text>
<text stroke="#000" stroke-width="0.25" transform="translate(787.70 623.10) rotate(90) scale(1.065 1)" x="0" y="0" font-size="14.24" fill="#00ff00" text-anchor="middle" textLength="79.92" lengthAdjust="spacing">acceleration</text>
<text stroke="#000" stroke-width="0.25" transform="translate(774.00 622.20) rotate(90) scale(0.977 1)" x="0" y="0" font-size="17.15" fill="#00ff00" text-anchor="middle" textLength="95.34" lengthAdjust="spacing">index/sec**2</text>
<text transform="translate(866.98 22.80) scale(1.021 1)" x="0" y="0" font-size="9.30" fill="#fff" textLength="12.57" lengthAdjust="spacing">NF</text>
<text transform="translate(865.56 167.80) scale(0.895 1)" x="0" y="0" font-size="9.88" fill="#fff" textLength="19.77" lengthAdjust="spacing">DEF</text>
<text x="888.6" y="27.8" font-size="8.3" fill="#fff" textLength="7.6" lengthAdjust="spacingAndGlyphs">10</text>
<text x="896.5" y="24.2" font-size="5.5" fill="#fff">12</text>
<text x="888.6" y="45.5" font-size="8.3" fill="#fff" textLength="7.6" lengthAdjust="spacingAndGlyphs">10</text>
<text x="896.5" y="41.9" font-size="5.5" fill="#fff">11</text>
<text x="888.6" y="63.1" font-size="8.3" fill="#fff" textLength="7.6" lengthAdjust="spacingAndGlyphs">10</text>
<text x="896.5" y="59.5" font-size="5.5" fill="#fff">10</text>
<text x="888.6" y="80.8" font-size="8.3" fill="#fff" textLength="7.6" lengthAdjust="spacingAndGlyphs">10</text>
<text x="896.5" y="77.2" font-size="5.5" fill="#fff">9</text>
<text x="888.6" y="98.5" font-size="8.3" fill="#fff" textLength="7.6" lengthAdjust="spacingAndGlyphs">10</text>
<text x="896.5" y="94.9" font-size="5.5" fill="#fff">8</text>
<text x="888.6" y="116.1" font-size="8.3" fill="#fff" textLength="7.6" lengthAdjust="spacingAndGlyphs">10</text>
<text x="896.5" y="112.5" font-size="5.5" fill="#fff">7</text>
<text x="888.6" y="133.8" font-size="8.3" fill="#fff" textLength="7.6" lengthAdjust="spacingAndGlyphs">10</text>
<text x="896.5" y="130.2" font-size="5.5" fill="#fff">6</text>
<text x="888.8" y="173.7" font-size="8.3" fill="#fff" textLength="7.6" lengthAdjust="spacingAndGlyphs">10</text>
<text x="896.8" y="170.0" font-size="6" fill="#fff" textLength="7" lengthAdjust="spacingAndGlyphs">-4</text>
<text x="888.8" y="226.7" font-size="8.3" fill="#fff" textLength="7.6" lengthAdjust="spacingAndGlyphs">10</text>
<text x="896.8" y="223.0" font-size="6" fill="#fff" textLength="7" lengthAdjust="spacingAndGlyphs">-5</text>
<text x="888.8" y="279.7" font-size="8.3" fill="#fff" textLength="7.6" lengthAdjust="spacingAndGlyphs">10</text>
<text x="896.8" y="276.0" font-size="6" fill="#fff" textLength="7" lengthAdjust="spacingAndGlyphs">-6</text>
<text transform="translate(920.47 78.35) rotate(90) scale(1.039 1)" x="0" y="0" font-size="11.96" fill="#fff" text-anchor="middle" textLength="104.27" lengthAdjust="spacing">cnts/(cm**2-sr-sec)</text>
<text transform="translate(924.08 223.00) rotate(90) scale(1.144 1)" x="0" y="0" font-size="10.06" fill="#fff" text-anchor="middle" textLength="110.91" lengthAdjust="spacing">ergs/(cm**2-sr-sec-eV)</text></g>
</svg></body></html>
